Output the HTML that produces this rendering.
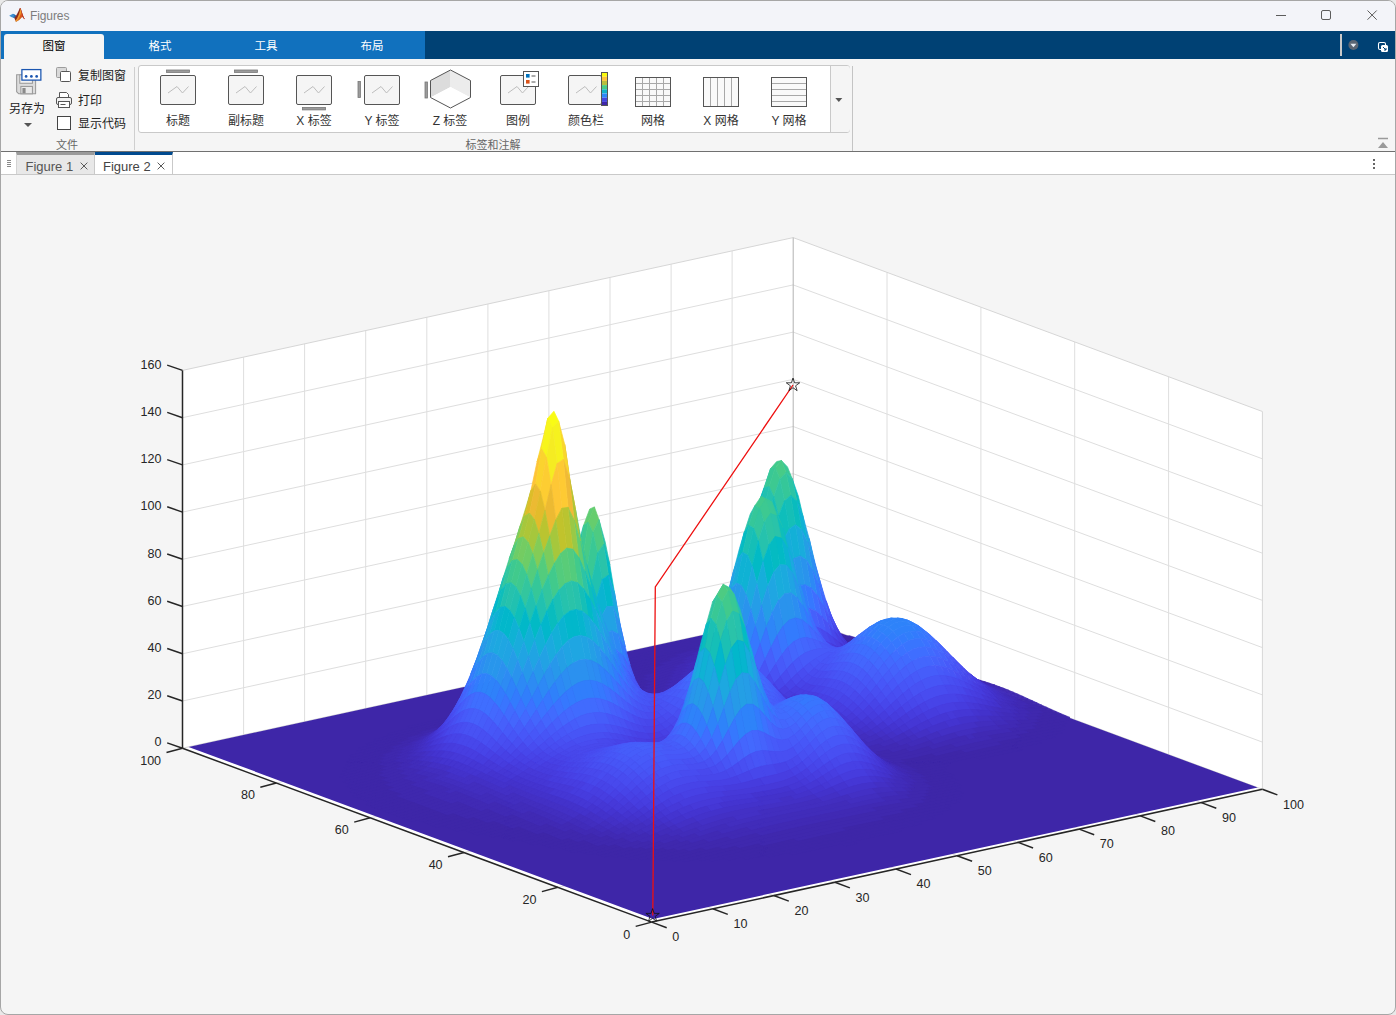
<!DOCTYPE html>
<html lang="zh"><head><meta charset="utf-8"><title>Figures</title>
<style>
html,body{margin:0;padding:0}
body{width:1396px;height:1015px;overflow:hidden;background:#e9e9e9;position:relative;font-family:"Liberation Sans","Noto Sans CJK SC",sans-serif;font-size:12px;color:#222}
.abs{position:absolute}
#win{left:0;top:0;width:1394px;height:1013px;border:1px solid #a6a6a6;border-radius:8px;overflow:hidden;background:#f5f5f5}
#win>*{margin-left:-1px;margin-top:-1px}
#plot .s path{stroke-width:.7;stroke-linejoin:round}
.c0{fill:#3e26a8;stroke:#3e26a8}.c1{fill:#3f28ae;stroke:#3f28ae}.c2{fill:#402ab4;stroke:#402ab4}.c3{fill:#412cba;stroke:#412cba}.c4{fill:#422ebf;stroke:#422ebf}.c5{fill:#4330c5;stroke:#4330c5}.c6{fill:#4332cb;stroke:#4332cb}.c7{fill:#4434d0;stroke:#4434d0}.c8{fill:#4537d5;stroke:#4537d5}.c9{fill:#4639d9;stroke:#4639d9}.c10{fill:#463cde;stroke:#463cde}.c11{fill:#473ee1;stroke:#473ee1}.c12{fill:#4741e5;stroke:#4741e5}.c13{fill:#4744e8;stroke:#4744e8}.c14{fill:#4747eb;stroke:#4747eb}.c15{fill:#4849ed;stroke:#4849ed}.c16{fill:#484cf0;stroke:#484cf0}.c17{fill:#484ff2;stroke:#484ff2}.c18{fill:#4852f4;stroke:#4852f4}.c19{fill:#4755f6;stroke:#4755f6}.c20{fill:#4757f8;stroke:#4757f8}.c21{fill:#475af9;stroke:#475af9}.c22{fill:#465dfa;stroke:#465dfa}.c23{fill:#4660fb;stroke:#4660fb}.c24{fill:#4563fc;stroke:#4563fc}.c25{fill:#4466fd;stroke:#4466fd}.c26{fill:#4369fe;stroke:#4369fe}.c27{fill:#416bfe;stroke:#416bfe}.c28{fill:#3f6eff;stroke:#3f6eff}.c29{fill:#3c72ff;stroke:#3c72ff}.c30{fill:#3975fe;stroke:#3975fe}.c31{fill:#3678fe;stroke:#3678fe}.c32{fill:#337bfd;stroke:#337bfd}.c33{fill:#317efb;stroke:#317efb}.c34{fill:#2f81fa;stroke:#2f81fa}.c35{fill:#2e83f9;stroke:#2e83f9}.c36{fill:#2e86f7;stroke:#2e86f7}.c37{fill:#2d89f5;stroke:#2d89f5}.c38{fill:#2d8bf3;stroke:#2d8bf3}.c39{fill:#2c8ef1;stroke:#2c8ef1}.c40{fill:#2b91ef;stroke:#2b91ef}.c41{fill:#2a93ed;stroke:#2a93ed}.c42{fill:#2896ec;stroke:#2896ec}.c43{fill:#2798ea;stroke:#2798ea}.c44{fill:#269ae8;stroke:#269ae8}.c45{fill:#259de7;stroke:#259de7}.c46{fill:#249fe5;stroke:#249fe5}.c47{fill:#22a2e4;stroke:#22a2e4}.c48{fill:#20a4e3;stroke:#20a4e3}.c49{fill:#1fa6e2;stroke:#1fa6e2}.c50{fill:#1da8e0;stroke:#1da8e0}.c51{fill:#1baade;stroke:#1baade}.c52{fill:#19acdc;stroke:#19acdc}.c53{fill:#16aeda;stroke:#16aeda}.c54{fill:#13b0d7;stroke:#13b0d7}.c55{fill:#0fb2d4;stroke:#0fb2d4}.c56{fill:#0ab4d1;stroke:#0ab4d1}.c57{fill:#06b5ce;stroke:#06b5ce}.c58{fill:#02b7cb;stroke:#02b7cb}.c59{fill:#01b8c8;stroke:#01b8c8}.c60{fill:#02bac5;stroke:#02bac5}.c61{fill:#04bbc2;stroke:#04bbc2}.c62{fill:#09bcbe;stroke:#09bcbe}.c63{fill:#0ebebb;stroke:#0ebebb}.c64{fill:#15bfb7;stroke:#15bfb7}.c65{fill:#1bc0b4;stroke:#1bc0b4}.c66{fill:#21c1b0;stroke:#21c1b0}.c67{fill:#26c2ad;stroke:#26c2ad}.c68{fill:#2ac3a9;stroke:#2ac3a9}.c69{fill:#2dc4a5;stroke:#2dc4a5}.c70{fill:#30c5a2;stroke:#30c5a2}.c71{fill:#33c69e;stroke:#33c69e}.c72{fill:#35c799;stroke:#35c799}.c73{fill:#39c895;stroke:#39c895}.c74{fill:#3dc991;stroke:#3dc991}.c75{fill:#41ca8c;stroke:#41ca8c}.c76{fill:#47cb87;stroke:#47cb87}.c77{fill:#4dcb82;stroke:#4dcb82}.c78{fill:#53cc7d;stroke:#53cc7d}.c79{fill:#59cc78;stroke:#59cc78}.c80{fill:#60cd73;stroke:#60cd73}.c81{fill:#66cd6d;stroke:#66cd6d}.c82{fill:#6dcd67;stroke:#6dcd67}.c83{fill:#74cc62;stroke:#74cc62}.c84{fill:#7ccc5c;stroke:#7ccc5c}.c85{fill:#83cc57;stroke:#83cc57}.c86{fill:#8acb51;stroke:#8acb51}.c87{fill:#91ca4c;stroke:#91ca4c}.c88{fill:#99c946;stroke:#99c946}.c89{fill:#a0c941;stroke:#a0c941}.c90{fill:#a6c73c;stroke:#a6c73c}.c91{fill:#adc638;stroke:#adc638}.c92{fill:#b4c534;stroke:#b4c534}.c93{fill:#bac430;stroke:#bac430}.c94{fill:#c1c32c;stroke:#c1c32c}.c95{fill:#c7c12a;stroke:#c7c12a}.c96{fill:#cdc028;stroke:#cdc028}.c97{fill:#d2bf27;stroke:#d2bf27}.c98{fill:#d8be28;stroke:#d8be28}.c99{fill:#ddbd29;stroke:#ddbd29}.c100{fill:#e2bc2b;stroke:#e2bc2b}.c101{fill:#e7bb2e;stroke:#e7bb2e}.c102{fill:#ecba32;stroke:#ecba32}.c103{fill:#f0ba36;stroke:#f0ba36}.c104{fill:#f5ba3a;stroke:#f5ba3a}.c105{fill:#f9ba3d;stroke:#f9ba3d}.c106{fill:#fbbc3d;stroke:#fbbc3d}.c107{fill:#febe3c;stroke:#febe3c}.c108{fill:#fec13a;stroke:#fec13a}.c109{fill:#fec438;stroke:#fec438}.c110{fill:#fec736;stroke:#fec736}.c111{fill:#feca33;stroke:#feca33}.c112{fill:#fdcd32;stroke:#fdcd32}.c113{fill:#fcd030;stroke:#fcd030}.c114{fill:#fbd32e;stroke:#fbd32e}.c115{fill:#f9d62d;stroke:#f9d62d}.c116{fill:#f8d92b;stroke:#f8d92b}.c117{fill:#f7dd2a;stroke:#f7dd2a}.c118{fill:#f6e028;stroke:#f6e028}.c119{fill:#f5e327;stroke:#f5e327}.c120{fill:#f5e626;stroke:#f5e626}.c121{fill:#f5e924;stroke:#f5e924}.c122{fill:#f5ec22;stroke:#f5ec22}.c123{fill:#f6ef20;stroke:#f6ef20}.c124{fill:#f6f21e;stroke:#f6f21e}.c125{fill:#f7f51b;stroke:#f7f51b}.c126{fill:#f8f818;stroke:#f8f818}.c127{fill:#f9fb15;stroke:#f9fb15}
#plot line.g{stroke:#dedede;stroke-width:1}
#plot line.b{stroke:#d6d6d6;stroke-width:1}
#plot line.bd{stroke:#b2b2b2;stroke-width:1}
#plot line.a{stroke:#262626;stroke-width:1.5}
#plot .t text{font-family:"Liberation Sans",sans-serif;font-size:13.3px;fill:#262626}
#titlebar{left:0;top:0;width:1396px;height:31px;background:#f3f4f9}
#titlebar .ttl{left:30px;top:9px;font-size:12px;color:#7d7d7d;line-height:15px;letter-spacing:-0.1px}
#tabstrip{left:0;top:31px;width:1396px;height:28px;background:#004174}
#tabstrip .l{left:0;top:0;width:425px;height:28px;background:#1171be}
#tabstrip .act{left:4px;top:3px;width:100px;height:25px;background:#f5f5f5;border-radius:3px 3px 0 0}
.tab{top:3px;width:100px;height:25px;line-height:25px;text-align:center;font-size:11.5px;color:#fff}
.tab.on{color:#000}
#ribbon{left:0;top:59px;width:1396px;height:92px;background:#f5f5f5}
#ribline{left:0;top:151px;width:1396px;height:1px;background:#707070}
#doctabs{left:0;top:152px;width:1396px;height:22px;background:#fff;border-bottom:1px solid #c9c9c9}
.vsep{width:1px;background:#cfcfcf}
.lbl{font-size:12px;line-height:14px;color:#222;white-space:nowrap}
.sec{font-size:11px;line-height:13px;color:#666;white-space:nowrap;text-align:center}
#gal{left:138px;top:6px;width:710px;height:66px;border:1px solid #c9c9c9;border-radius:3px;background:#fff;box-sizing:content-box}
#gal .dd{left:691px;top:0;width:19px;height:66px;background:#f5f5f5;border-left:1px solid #c9c9c9;border-radius:0 3px 3px 0}
.gi{top:48px;width:68px;text-align:center;font-size:12px;line-height:14px;color:#333;white-space:nowrap}
.dt{top:0;height:22px;font-size:13px;line-height:25px;color:#555;white-space:nowrap;box-sizing:border-box}
</style></head><body>
<div class="abs" id="win">
<svg id="plot" width="1396" height="1015" viewBox="0 0 1396 1015" style="position:absolute;left:0;top:0">
<g><polygon points="182.5,748.2 793.2,615.4 793.2,237.6 182.5,370.4" fill="#fff"/>
<polygon points="793.2,615.4 1262.4,789.3 1262.4,411.5 793.2,237.6" fill="#fff"/>
<polygon points="651.7,922.1 1262.4,789.3 793.2,615.4 182.5,748.2" fill="#fff"/>
<line x1="243.6" y1="734.9" x2="243.6" y2="357.2" class="g"/>
<line x1="712.8" y1="908.8" x2="243.6" y2="734.9" class="g"/>
<line x1="304.6" y1="721.6" x2="304.6" y2="343.9" class="g"/>
<line x1="773.8" y1="895.5" x2="304.6" y2="721.6" class="g"/>
<line x1="365.7" y1="708.4" x2="365.7" y2="330.6" class="g"/>
<line x1="834.9" y1="882.3" x2="365.7" y2="708.4" class="g"/>
<line x1="426.8" y1="695.1" x2="426.8" y2="317.3" class="g"/>
<line x1="896.0" y1="869.0" x2="426.8" y2="695.1" class="g"/>
<line x1="487.9" y1="681.8" x2="487.9" y2="304.0" class="g"/>
<line x1="957.1" y1="855.7" x2="487.9" y2="681.8" class="g"/>
<line x1="548.9" y1="668.5" x2="548.9" y2="290.8" class="g"/>
<line x1="1018.1" y1="842.4" x2="548.9" y2="668.5" class="g"/>
<line x1="610.0" y1="655.2" x2="610.0" y2="277.5" class="g"/>
<line x1="1079.2" y1="829.1" x2="610.0" y2="655.2" class="g"/>
<line x1="671.1" y1="642.0" x2="671.1" y2="264.2" class="g"/>
<line x1="1140.3" y1="815.9" x2="671.1" y2="642.0" class="g"/>
<line x1="732.1" y1="628.7" x2="732.1" y2="250.9" class="g"/>
<line x1="1201.3" y1="802.6" x2="732.1" y2="628.7" class="g"/>
<line x1="1168.6" y1="754.5" x2="1168.6" y2="376.8" class="g"/>
<line x1="557.9" y1="887.3" x2="1168.6" y2="754.5" class="g"/>
<line x1="1074.7" y1="719.7" x2="1074.7" y2="342.0" class="g"/>
<line x1="464.0" y1="852.5" x2="1074.7" y2="719.7" class="g"/>
<line x1="980.9" y1="685.0" x2="980.9" y2="307.2" class="g"/>
<line x1="370.2" y1="817.8" x2="980.9" y2="685.0" class="g"/>
<line x1="887.0" y1="650.2" x2="887.0" y2="272.4" class="g"/>
<line x1="276.3" y1="783.0" x2="887.0" y2="650.2" class="g"/>
<line x1="182.5" y1="701.0" x2="793.2" y2="568.2" class="g"/>
<line x1="793.2" y1="568.2" x2="1262.4" y2="742.1" class="g"/>
<line x1="182.5" y1="653.8" x2="793.2" y2="521.0" class="g"/>
<line x1="793.2" y1="521.0" x2="1262.4" y2="694.9" class="g"/>
<line x1="182.5" y1="606.5" x2="793.2" y2="473.7" class="g"/>
<line x1="793.2" y1="473.7" x2="1262.4" y2="647.6" class="g"/>
<line x1="182.5" y1="559.3" x2="793.2" y2="426.5" class="g"/>
<line x1="793.2" y1="426.5" x2="1262.4" y2="600.4" class="g"/>
<line x1="182.5" y1="512.1" x2="793.2" y2="379.3" class="g"/>
<line x1="793.2" y1="379.3" x2="1262.4" y2="553.2" class="g"/>
<line x1="182.5" y1="464.9" x2="793.2" y2="332.1" class="g"/>
<line x1="793.2" y1="332.1" x2="1262.4" y2="506.0" class="g"/>
<line x1="182.5" y1="417.7" x2="793.2" y2="284.9" class="g"/>
<line x1="793.2" y1="284.9" x2="1262.4" y2="458.8" class="g"/>
<line x1="182.5" y1="370.4" x2="793.2" y2="237.6" class="b"/>
<line x1="793.2" y1="237.6" x2="1262.4" y2="411.5" class="b"/>
<line x1="1262.4" y1="411.5" x2="1262.4" y2="789.3" class="b"/>
<line x1="793.2" y1="615.4" x2="793.2" y2="237.6" class="bd"/>
<line x1="182.5" y1="748.2" x2="793.2" y2="615.4" class="b"/>
<line x1="793.2" y1="615.4" x2="1262.4" y2="789.3" class="b"/></g>
<polygon points="653.1,919.0 1257.7,787.6 793.2,615.4 188.6,746.9" fill="#3e26a8"/>
<g class="s"><path class="c0" d="M704.9 639.3l6.1-1.3-4.7-1.5-6.1 1.3zM698.8 640.6l6.1-1.3-4.7-1.5-6.1 1.3zM692.7 641.9l6.1-1.3-4.7-1.5-6.1 1.3zM686.6 643.2l6.1-1.3-4.7-1.5-6.1 1.4zM680.4 644.6l6.2-1.4-4.7-1.4-6.1 1.3zM674.3 645.9l6.1-1.3-4.6-1.5-6.2 1.3zM668.2 647.3l6.1-1.4-4.7-1.5-6.1 1.4zM703.5 641.9l6.1-1.3-4.7-1.3-6.1 1.3zM697.4 643.3l6.1-1.4-4.7-1.3-6.1 1.3zM691.2 644.6l6.2-1.3-4.7-1.4-6.1 1.3zM685.1 646l6.1-1.4-4.6-1.4-6.2 1.4zM679 647.3l6.1-1.3-4.7-1.4-6.1 1.3zM672.9 648.7l6.1-1.4-4.7-1.4-6.1 1.4zM666.8 650.1l6.1-1.4-4.7-1.4-6.1 1.3zM660.7 651.5l6.1-1.4-4.7-1.5-6.1 1.4zM654.6 652.9l6.1-1.4-4.7-1.5-6.1 1.4zM648.5 654.3l6.1-1.4-4.7-1.5-6.1 1.4zM642.4 655.7l6.1-1.4-4.7-1.5-6.1 1.4zM702 644.3l6.1-1.3-4.6-1.1-6.1 1.4zM695.9 645.8l6.1-1.5-4.6-1-6.2 1.3zM689.8 647.2l6.1-1.4-4.7-1.2-6.1 1.4zM683.7 648.6l6.1-1.4-4.7-1.2-6.1 1.3zM677.6 650l6.1-1.4-4.7-1.3-6.1 1.4zM671.5 651.5l6.1-1.5-4.7-1.3-6.1 1.4zM665.4 652.9l6.1-1.4-4.7-1.4-6.1 1.4zM659.3 654.3l6.1-1.4-4.7-1.4-6.1 1.4zM653.2 655.7l6.1-1.4-4.7-1.4-6.1 1.4zM647.1 657.2l6.1-1.5-4.7-1.4-6.1 1.4zM641 658.6l6.1-1.4-4.7-1.5-6.1 1.4zM634.9 660l6.1-1.4-4.7-1.5-6.1 1.4zM628.8 661.5l6.1-1.5-4.7-1.5-6.1 1.4zM700.6 646.5l6.1-1.5-4.7-.7-6.1 1.5zM694.5 648.1l6.1-1.6-4.7-.7-6.1 1.4zM688.4 649.6l6.1-1.5-4.7-.9-6.1 1.4zM682.3 651.2l6.1-1.6-4.7-1-6.1 1.4zM676.2 652.7l6.1-1.5-4.7-1.2-6.1 1.5zM670.1 654.2l6.1-1.5-4.7-1.2-6.1 1.4zM664 655.6l6.1-1.4-4.7-1.3-6.1 1.4zM657.9 657.1l6.1-1.5-4.7-1.3-6.1 1.4zM651.8 658.6l6.1-1.5-4.7-1.4-6.1 1.5zM645.7 660l6.1-1.4-4.7-1.4-6.1 1.4zM639.6 661.5l6.1-1.5-4.7-1.4-6.1 1.4zM633.4 663l6.2-1.5-4.7-1.5-6.1 1.5zM627.3 664.4l6.1-1.4-4.6-1.5-6.1 1.4z"/>
<path class="c1" d="M699.2 648.5l6.1-1.9-4.7-.1-6.1 1.6z"/>
<path class="c0" d="M693.1 650.3l6.1-1.8-4.7-.4-6.1 1.5zM687 652l6.1-1.7-4.7-.7-6.1 1.6zM680.9 653.7l6.1-1.7-4.7-.8-6.1 1.5zM674.8 655.3l6.1-1.6-4.7-1-6.1 1.5zM668.7 656.8l6.1-1.5-4.7-1.1-6.1 1.4zM662.6 658.4l6.1-1.6-4.7-1.2-6.1 1.5zM656.5 659.9l6.1-1.5-4.7-1.3-6.1 1.5zM650.4 661.4l6.1-1.5-4.7-1.3-6.1 1.4zM644.2 662.9l6.2-1.5-4.7-1.4-6.1 1.5zM638.1 664.4l6.1-1.5-4.6-1.4-6.2 1.5zM632 665.9l6.1-1.5-4.7-1.4-6.1 1.4zM625.9 667.4l6.1-1.5-4.7-1.5-6.1 1.5z"/>
<path class="c1" d="M697.8 650.3l6.1-2.3-4.7 .5-6.1 1.8zM691.7 652.4l6.1-2.1-4.7 0-6.1 1.7zM685.6 654.4l6.1-2-4.7-.4-6.1 1.7zM679.5 656.2l6.1-1.8-4.7-.7-6.1 1.6z"/>
<path class="c0" d="M673.4 657.9l6.1-1.7-4.7-.9-6.1 1.5zM667.3 659.5l6.1-1.6-4.7-1.1-6.1 1.6zM661.2 661.1l6.1-1.6-4.7-1.1-6.1 1.5zM655 662.7l6.2-1.6-4.7-1.2-6.1 1.5zM648.9 664.3l6.1-1.6-4.6-1.3-6.2 1.5zM642.8 665.8l6.1-1.5-4.7-1.4-6.1 1.5zM636.7 667.4l6.1-1.6-4.7-1.4-6.1 1.5zM630.6 668.9l6.1-1.5-4.7-1.5-6.1 1.5z"/>
<path class="c1" d="M696.4 652.2l6.1-2.8-4.7 .9-6.1 2.1zM690.3 654.7l6.1-2.5-4.7 .2-6.1 2zM684.2 656.8l6.1-2.1-4.7-.3-6.1 1.8zM678.1 658.8l6.1-2-4.7-.6-6.1 1.7zM672 660.5l6.1-1.7-4.7-.9-6.1 1.6z"/>
<path class="c0" d="M665.8 662.2l6.2-1.7-4.7-1-6.1 1.6zM659.7 663.9l6.1-1.7-4.6-1.1-6.2 1.6zM653.6 665.5l6.1-1.6-4.7-1.2-6.1 1.6zM647.5 667.2l6.1-1.7-4.7-1.2-6.1 1.5zM641.4 668.8l6.1-1.6-4.7-1.4-6.1 1.6zM635.3 670.3l6.1-1.5-4.7-1.4-6.1 1.5zM629.2 671.9l6.1-1.6-4.7-1.4-6.1 1.5z"/>
<path class="c2" d="M701.1 651.2l6.1-4-4.7 2.2-6.1 2.8zM695 654.4l6.1-3.2-4.7 1-6.1 2.5z"/>
<path class="c1" d="M688.9 657.1l6.1-2.7-4.7 .3-6.1 2.1zM682.8 659.4l6.1-2.3-4.7-.3-6.1 2zM676.6 661.4l6.2-2-4.7-.6-6.1 1.7zM670.5 663.2l6.1-1.8-4.6-.9-6.2 1.7zM664.4 665l6.1-1.8-4.7-1-6.1 1.7z"/>
<path class="c0" d="M658.3 666.7l6.1-1.7-4.7-1.1-6.1 1.6zM652.2 668.4l6.1-1.7-4.7-1.2-6.1 1.7zM646.1 670.1l6.1-1.7-4.7-1.2-6.1 1.6zM640 671.7l6.1-1.6-4.7-1.3-6.1 1.5zM633.9 673.3l6.1-1.6-4.7-1.4-6.1 1.6zM627.8 674.9l6.1-1.6-4.7-1.4-6.1 1.5z"/>
<path class="c3" d="M699.7 653.5l6.1-4.5-4.7 2.2-6.1 3.2z"/>
<path class="c2" d="M693.6 657l6.1-3.5-4.7 .9-6.1 2.7zM687.4 659.7l6.2-2.7-4.7 .1-6.1 2.3z"/>
<path class="c1" d="M681.3 662l6.1-2.3-4.6-.3-6.2 2zM675.2 664.1l6.1-2.1-4.7-.6-6.1 1.8zM669.1 666l6.1-1.9-4.7-.9-6.1 1.8zM663 667.8l6.1-1.8-4.7-1-6.1 1.7zM656.9 669.6l6.1-1.8-4.7-1.1-6.1 1.7z"/>
<path class="c0" d="M650.8 671.3l6.1-1.7-4.7-1.2-6.1 1.7zM644.7 673.1l6.1-1.8-4.7-1.2-6.1 1.6zM638.6 674.7l6.1-1.6-4.7-1.4-6.1 1.6zM632.5 676.4l6.1-1.7-4.7-1.4-6.1 1.6z"/>
<path class="c3" d="M698.2 656.3l6.2-4.5-4.7 1.7-6.1 3.5z"/>
<path class="c2" d="M692.1 659.8l6.1-3.5-4.6 .7-6.2 2.7zM686 662.5l6.1-2.7-4.7-.1-6.1 2.3z"/>
<path class="c1" d="M679.9 664.8l6.1-2.3-4.7-.5-6.1 2.1zM673.8 666.9l6.1-2.1-4.7-.7-6.1 1.9zM667.7 668.8l6.1-1.9-4.7-.9-6.1 1.8zM661.6 670.7l6.1-1.9-4.7-1-6.1 1.8zM655.5 672.5l6.1-1.8-4.7-1.1-6.1 1.7z"/>
<path class="c0" d="M649.4 674.3l6.1-1.8-4.7-1.2-6.1 1.8zM643.3 676.1l6.1-1.8-4.7-1.2-6.1 1.6zM637.2 677.8l6.1-1.7-4.7-1.4-6.1 1.7zM631.1 679.5l6.1-1.7-4.7-1.4-6.1 1.6zM447.9 719.8l6.1-1.3-4.7-1.3-6.1 1.3zM441.8 721.2l6.1-1.4-4.7-1.3-6.1 1.3zM435.6 722.5l6.2-1.3-4.7-1.4-6.1 1.4zM429.5 723.9l6.1-1.4-4.6-1.3-6.2 1.3zM423.4 725.3l6.1-1.4-4.7-1.4-6.1 1.4zM417.3 726.7l6.1-1.4-4.7-1.4-6.1 1.3zM411.2 728l6.1-1.3-4.7-1.5-6.1 1.4zM837.3 637.8l6.1-1-4.7-1.6-6.1 1.1z"/>
<path class="c3" d="M696.8 659.5l6.1-4.2-4.7 1-6.1 3.5z"/>
<path class="c2" d="M690.7 662.7l6.1-3.2-4.7 .3-6.1 2.7zM684.6 665.3l6.1-2.6-4.7-.2-6.1 2.3zM678.5 667.6l6.1-2.3-4.7-.5-6.1 2.1z"/>
<path class="c1" d="M672.4 669.7l6.1-2.1-4.7-.7-6.1 1.9zM666.3 671.7l6.1-2-4.7-.9-6.1 1.9zM660.2 673.6l6.1-1.9-4.7-1-6.1 1.8zM654.1 675.5l6.1-1.9-4.7-1.1-6.1 1.8zM648 677.4l6.1-1.9-4.7-1.2-6.1 1.8z"/>
<path class="c0" d="M641.9 679.2l6.1-1.8-4.7-1.3-6.1 1.7zM635.8 680.9l6.1-1.7-4.7-1.4-6.1 1.7zM446.4 722.3l6.1-1.4-4.6-1.1-6.1 1.4zM440.3 723.7l6.1-1.4-4.6-1.1-6.2 1.3zM434.2 725.1l6.1-1.4-4.7-1.2-6.1 1.4zM428.1 726.5l6.1-1.4-4.7-1.2-6.1 1.4zM422 727.9l6.1-1.4-4.7-1.2-6.1 1.4zM415.9 729.3l6.1-1.4-4.7-1.2-6.1 1.3zM409.8 730.8l6.1-1.5-4.7-1.3-6.1 1.4zM403.7 732.2l6.1-1.4-4.7-1.4-6.1 1.4zM397.6 733.7l6.1-1.5-4.7-1.4-6.1 1.4zM391.5 735.1l6.1-1.4-4.7-1.5-6.1 1.4zM848.1 638.4l6.1-1.1-4.7-1.6-6.1 1.1zM842 639.3l6.1-.9-4.7-1.6-6.1 1z"/>
<path class="c3" d="M695.4 662.8l6.1-3.8-4.7 .5-6.1 3.2zM689.3 665.7l6.1-2.9-4.7-.1-6.1 2.6z"/>
<path class="c2" d="M683.2 668.2l6.1-2.5-4.7-.4-6.1 2.3zM677.1 670.5l6.1-2.3-4.7-.6-6.1 2.1z"/>
<path class="c1" d="M671 672.6l6.1-2.1-4.7-.8-6.1 2zM664.9 674.7l6.1-2.1-4.7-.9-6.1 1.9zM658.8 676.7l6.1-2-4.7-1.1-6.1 1.9zM652.7 678.6l6.1-1.9-4.7-1.2-6.1 1.9zM646.6 680.5l6.1-1.9-4.7-1.2-6.1 1.8z"/>
<path class="c0" d="M640.5 682.3l6.1-1.8-4.7-1.3-6.1 1.7zM634.3 684.1l6.2-1.8-4.7-1.4-6.1 1.7zM445 724.4l6.1-1.4-4.7-.7-6.1 1.4zM438.9 725.9l6.1-1.5-4.7-.7-6.1 1.4zM432.8 727.4l6.1-1.5-4.7-.8-6.1 1.4zM426.7 728.9l6.1-1.5-4.7-.9-6.1 1.4zM420.6 730.4l6.1-1.5-4.7-1-6.1 1.4zM414.5 731.9l6.1-1.5-4.7-1.1-6.1 1.5zM408.4 733.5l6.1-1.6-4.7-1.1-6.1 1.4zM402.3 735l6.1-1.5-4.7-1.3-6.1 1.5zM396.2 736.5l6.1-1.5-4.7-1.3-6.1 1.4zM390.1 738l6.1-1.5-4.7-1.4-6.1 1.4zM384 739.4l6.1-1.4-4.7-1.5-6.1 1.4zM377.9 740.9l6.1-1.5-4.7-1.5-6.1 1.5zM852.8 640l6.1-1-4.7-1.7-6.1 1.1zM846.7 640.8l6.1-.8-4.7-1.6-6.1 .9zM840.6 641.3l6.1-.5-4.7-1.5-6.1 .6z"/>
<path class="c3" d="M694 665.9l6.1-3.3-4.7 .2-6.1 2.9zM687.9 668.6l6.1-2.7-4.7-.2-6.1 2.5z"/>
<path class="c2" d="M681.8 671l6.1-2.4-4.7-.4-6.1 2.3zM675.7 673.4l6.1-2.4-4.7-.5-6.1 2.1z"/>
<path class="c1" d="M669.6 675.6l6.1-2.2-4.7-.8-6.1 2.1zM663.5 677.7l6.1-2.1-4.7-.9-6.1 2zM657.4 679.8l6.1-2.1-4.7-1-6.1 1.9zM651.3 681.8l6.1-2-4.7-1.2-6.1 1.9z"/>
<path class="c0" d="M645.1 683.7l6.2-1.9-4.7-1.3-6.1 1.8zM639 685.5l6.1-1.8-4.6-1.4-6.2 1.8zM632.9 687.3l6.1-1.8-4.7-1.4-6.1 1.7zM443.6 726.2l6.1-1.6-4.7-.2-6.1 1.5zM437.5 727.8l6.1-1.6-4.7-.3-6.1 1.5zM431.4 729.5l6.1-1.7-4.7-.4-6.1 1.5zM425.3 731.1l6.1-1.6-4.7-.6-6.1 1.5zM419.2 732.8l6.1-1.7-4.7-.7-6.1 1.5zM413.1 734.4l6.1-1.6-4.7-.9-6.1 1.6zM407 736.1l6.1-1.7-4.7-.9-6.1 1.5zM400.9 737.7l6.1-1.6-4.7-1.1-6.1 1.5zM394.8 739.2l6.1-1.5-4.7-1.2-6.1 1.5zM388.6 740.8l6.2-1.6-4.7-1.2-6.1 1.4zM382.5 742.3l6.1-1.5-4.6-1.4-6.1 1.5zM376.4 743.8l6.1-1.5-4.6-1.4-6.2 1.4zM370.3 745.3l6.1-1.5-4.7-1.5-6.1 1.4zM851.4 642.3l6.1-.7-4.7-1.6-6.1 .8zM845.3 642.6l6.1-.3-4.7-1.5-6.1 .5z"/>
<path class="c3" d="M692.6 668.6l6.1-3-4.7 .3-6.1 2.7zM686.5 671.3l6.1-2.7-4.7 0-6.1 2.4z"/>
<path class="c2" d="M680.4 673.9l6.1-2.6-4.7-.3-6.1 2.4zM674.3 676.3l6.1-2.4-4.7-.5-6.1 2.2z"/>
<path class="c1" d="M668.2 678.7l6.1-2.4-4.7-.7-6.1 2.1zM662 680.9l6.2-2.2-4.7-1-6.1 2.1zM655.9 683l6.1-2.1-4.6-1.1-6.1 2zM649.8 685.1l6.1-2.1-4.6-1.2-6.2 1.9z"/>
<path class="c0" d="M643.7 687l6.1-1.9-4.7-1.4-6.1 1.8zM637.6 688.8l6.1-1.8-4.7-1.5-6.1 1.8z"/>
<path class="c1" d="M442.2 727.6l6.1-1.8-4.7 .4-6.1 1.6zM436.1 729.4l6.1-1.8-4.7 .2-6.1 1.7zM430 731.3l6.1-1.9-4.7 .1-6.1 1.6zM423.9 733.2l6.1-1.9-4.7-.2-6.1 1.7z"/>
<path class="c0" d="M417.8 735l6.1-1.8-4.7-.4-6.1 1.6zM411.7 736.8l6.1-1.8-4.7-.6-6.1 1.7zM405.6 738.6l6.1-1.8-4.7-.7-6.1 1.6zM399.4 740.3l6.2-1.7-4.7-.9-6.1 1.5zM393.3 742l6.1-1.7-4.6-1.1-6.2 1.6zM387.2 743.6l6.1-1.6-4.7-1.2-6.1 1.5zM381.1 745.2l6.1-1.6-4.7-1.3-6.1 1.5zM375 746.7l6.1-1.5-4.7-1.4-6.1 1.5zM368.9 748.2l6.1-1.5-4.7-1.4-6.1 1.4zM362.8 749.7l6.1-1.5-4.7-1.5-6.1 1.4zM850 644l6.1-.2-4.7-1.5-6.1 .3z"/>
<path class="c67" d="M764.5 487.6l6.1-19-4.7 13.6-6.1 17.7z"/>
<path class="c61" d="M758.3 515l6.2-27.4-4.7 12.3-6.1 25.5z"/>
<path class="c4" d="M697.3 668.1l6.1-3.3-4.7 .8-6.1 3z"/>
<path class="c3" d="M691.2 671.1l6.1-3-4.7 .5-6.1 2.7zM685.1 674l6.1-2.9-4.7 .2-6.1 2.6z"/>
<path class="c2" d="M679 676.7l6.1-2.7-4.7-.1-6.1 2.4zM672.8 679.4l6.2-2.7-4.7-.4-6.1 2.4z"/>
<path class="c1" d="M666.7 681.9l6.1-2.5-4.6-.7-6.2 2.2zM660.6 684.2l6.1-2.3-4.7-1-6.1 2.1zM654.5 686.3l6.1-2.1-4.7-1.2-6.1 2.1zM648.4 688.4l6.1-2.1-4.7-1.2-6.1 1.9z"/>
<path class="c0" d="M642.3 690.2l6.1-1.8-4.7-1.4-6.1 1.8z"/>
<path class="c1" d="M434.7 730.8l6.1-2.2-4.7 .8-6.1 1.9zM428.6 732.9l6.1-2.1-4.7 .5-6.1 1.9zM422.5 735.1l6.1-2.2-4.7 .3-6.1 1.8zM416.4 737.2l6.1-2.1-4.7-.1-6.1 1.8zM410.2 739.2l6.2-2-4.7-.4-6.1 1.8z"/>
<path class="c0" d="M404.1 741.2l6.1-2-4.6-.6-6.2 1.7zM398 743l6.1-1.8-4.7-.9-6.1 1.7zM391.9 744.8l6.1-1.8-4.7-1-6.1 1.6zM385.8 746.5l6.1-1.7-4.7-1.2-6.1 1.6zM379.7 748.1l6.1-1.6-4.7-1.3-6.1 1.5zM373.6 749.7l6.1-1.6-4.7-1.4-6.1 1.5zM367.5 751.2l6.1-1.5-4.7-1.5-6.1 1.5zM361.4 752.7l6.1-1.5-4.7-1.5-6.1 1.4z"/>
<path class="c75" d="M775.3 467.4l6.1-6.9-4.7 1-6.1 7.1z"/>
<path class="c73" d="M769.1 486.4l6.2-19-4.7 1.2-6.1 19z"/>
<path class="c66" d="M763 513.8l6.1-27.4-4.6 1.2-6.2 27.4z"/>
<path class="c4" d="M695.9 669.9l6.1-3.5-4.7 1.7-6.1 3z"/>
<path class="c3" d="M689.8 673.3l6.1-3.4-4.7 1.2-6.1 2.9zM683.6 676.6l6.2-3.3-4.7 .7-6.1 2.7z"/>
<path class="c2" d="M677.5 679.7l6.1-3.1-4.6 .1-6.2 2.7zM671.4 682.6l6.1-2.9-4.7-.3-6.1 2.5z"/>
<path class="c1" d="M665.3 685.2l6.1-2.6-4.7-.7-6.1 2.3zM659.2 687.5l6.1-2.3-4.7-1-6.1 2.1zM653.1 689.7l6.1-2.2-4.7-1.2-6.1 2.1zM647 691.7l6.1-2-4.7-1.3-6.1 1.8z"/>
<path class="c0" d="M640.9 693.5l6.1-1.8-4.7-1.5-6.1 1.8z"/>
<path class="c2" d="M433.3 731.9l6.1-2.6-4.7 1.5-6.1 2.1zM427.2 734.5l6.1-2.6-4.7 1-6.1 2.2z"/>
<path class="c1" d="M421 737l6.2-2.5-4.7 .6-6.1 2.1zM414.9 739.4l6.1-2.4-4.6 .2-6.2 2zM408.8 741.6l6.1-2.2-4.7-.2-6.1 2zM402.7 743.7l6.1-2.1-4.7-.4-6.1 1.8z"/>
<path class="c0" d="M396.6 745.7l6.1-2-4.7-.7-6.1 1.8zM390.5 747.6l6.1-1.9-4.7-.9-6.1 1.7zM384.4 749.3l6.1-1.7-4.7-1.1-6.1 1.6zM378.3 751l6.1-1.7-4.7-1.2-6.1 1.6zM372.2 752.6l6.1-1.6-4.7-1.3-6.1 1.5zM366.1 754.2l6.1-1.6-4.7-1.4-6.1 1.5zM360 755.7l6.1-1.5-4.7-1.5-6.1 1.4zM353.9 757.2l6.1-1.5-4.7-1.6-6.1 1.5z"/>
<path class="c73" d="M786.1 472.5l6.1 6.2-4.7-11.8-6.1-6.4z"/>
<path class="c76" d="M779.9 478.9l6.2-6.4-4.7-12-6.1 6.9z"/>
<path class="c74" d="M773.8 496.6l6.1-17.7-4.6-11.5-6.2 19z"/>
<path class="c67" d="M767.7 522l6.1-25.4-4.7-10.2-6.1 27.4z"/>
<path class="c4" d="M688.3 675.6l6.1-4.1-4.6 1.8-6.2 3.3z"/>
<path class="c3" d="M682.2 679.4l6.1-3.8-4.7 1-6.1 3.1z"/>
<path class="c2" d="M676.1 682.9l6.1-3.5-4.7 .3-6.1 2.9zM670 685.9l6.1-3-4.7-.3-6.1 2.6z"/>
<path class="c1" d="M663.9 688.6l6.1-2.7-4.7-.7-6.1 2.3zM657.8 691l6.1-2.4-4.7-1.1-6.1 2.2zM651.7 693.1l6.1-2.1-4.7-1.3-6.1 2z"/>
<path class="c0" d="M645.6 695l6.1-1.9-4.7-1.4-6.1 1.8z"/>
<path class="c3" d="M438 729.8l6.1-3.3-4.7 2.8-6.1 2.6zM431.8 733l6.2-3.2-4.7 2.1-6.1 2.6z"/>
<path class="c2" d="M425.7 736.1l6.1-3.1-4.6 1.5-6.2 2.5zM419.6 738.9l6.1-2.8-4.7 .9-6.1 2.4z"/>
<path class="c1" d="M413.5 741.6l6.1-2.7-4.7 .5-6.1 2.2zM407.4 744.1l6.1-2.5-4.7 0-6.1 2.1zM401.3 746.4l6.1-2.3-4.7-.4-6.1 2zM395.2 748.5l6.1-2.1-4.7-.7-6.1 1.9z"/>
<path class="c0" d="M389.1 750.4l6.1-1.9-4.7-.9-6.1 1.7zM383 752.2l6.1-1.8-4.7-1.1-6.1 1.7zM376.9 753.9l6.1-1.7-4.7-1.2-6.1 1.6zM370.8 755.6l6.1-1.7-4.7-1.3-6.1 1.6zM364.7 757.2l6.1-1.6-4.7-1.4-6.1 1.5zM358.6 758.7l6.1-1.5-4.7-1.5-6.1 1.5zM352.5 760.2l6.1-1.5-4.7-1.5-6.1 1.4z"/>
<path class="c62" d="M796.8 500.9l6.2 15.4-4.7-20.2-6.1-17.4z"/>
<path class="c69" d="M790.7 495.4l6.1 5.5-4.6-22.2-6.1-6.2z"/>
<path class="c72" d="M784.6 500.8l6.1-5.4-4.6-22.9-6.2 6.4z"/>
<path class="c70" d="M778.5 515.9l6.1-15.1-4.7-21.9-6.1 17.7z"/>
<path class="c64" d="M772.4 537.7l6.1-21.8-4.7-19.3-6.1 25.4z"/>
<path class="c3" d="M680.8 682.6l6.1-4.4-4.7 1.2-6.1 3.5z"/>
<path class="c2" d="M674.7 686.3l6.1-3.7-4.7 .3-6.1 3zM668.6 689.4l6.1-3.1-4.7-.4-6.1 2.7z"/>
<path class="c1" d="M662.5 692.1l6.1-2.7-4.7-.8-6.1 2.4zM656.4 694.4l6.1-2.3-4.7-1.1-6.1 2.1zM650.3 696.5l6.1-2.1-4.7-1.3-6.1 1.9z"/>
<path class="c3" d="M430.4 734.3l6.1-3.9-4.7 2.6-6.1 3.1zM424.3 737.8l6.1-3.5-4.7 1.8-6.1 2.8z"/>
<path class="c2" d="M418.2 741.1l6.1-3.3-4.7 1.1-6.1 2.7zM412.1 744l6.1-2.9-4.7 .5-6.1 2.5z"/>
<path class="c1" d="M406 746.7l6.1-2.7-4.7 .1-6.1 2.3zM399.9 749.1l6.1-2.4-4.7-.3-6.1 2.1zM393.8 751.3l6.1-2.2-4.7-.6-6.1 1.9z"/>
<path class="c0" d="M387.7 753.3l6.1-2-4.7-.9-6.1 1.8zM381.6 755.2l6.1-1.9-4.7-1.1-6.1 1.7zM375.5 756.9l6.1-1.7-4.7-1.3-6.1 1.7zM369.4 758.6l6.1-1.7-4.7-1.3-6.1 1.6zM363.3 760.2l6.1-1.6-4.7-1.4-6.1 1.5zM357.1 761.7l6.2-1.5-4.7-1.5-6.1 1.5zM351 763.2l6.1-1.5-4.6-1.5-6.2 1.4z"/>
<path class="c37" d="M813.8 560.3l6.1 20.6-4.7-17.4-6.1-25.1z"/>
<path class="c47" d="M807.6 542.2l6.2 18.1-4.7-21.9-6.1-22.1z"/>
<path class="c55" d="M801.5 529.5l6.1 12.7-4.6-25.9-6.2-15.4z"/>
<path class="c62" d="M795.4 524.8l6.1 4.7-4.7-28.6-6.1-5.5z"/>
<path class="c64" d="M789.3 528.9l6.1-4.1-4.7-29.4-6.1 5.4z"/>
<path class="c63" d="M783.2 540.7l6.1-11.8-4.7-28.1-6.1 15.1z"/>
<path class="c58" d="M777.1 557.7l6.1-17-4.7-24.8-6.1 21.8z"/>
<path class="c2" d="M673.3 690l6.1-3.8-4.7 .1-6.1 3.1zM667.2 693.1l6.1-3.1-4.7-.6-6.1 2.7z"/>
<path class="c1" d="M661.1 695.7l6.1-2.6-4.7-1-6.1 2.3z"/>
<path class="c4" d="M429 735.8l6.1-4.4-4.7 2.9-6.1 3.5z"/>
<path class="c3" d="M422.9 739.9l6.1-4.1-4.7 2-6.1 3.3zM416.8 743.4l6.1-3.5-4.7 1.2-6.1 2.9z"/>
<path class="c2" d="M410.7 746.6l6.1-3.2-4.7 .6-6.1 2.7zM404.6 749.5l6.1-2.9-4.7 .1-6.1 2.4z"/>
<path class="c1" d="M398.5 752l6.1-2.5-4.7-.4-6.1 2.2zM392.4 754.2l6.1-2.2-4.7-.7-6.1 2zM386.3 756.3l6.1-2.1-4.7-.9-6.1 1.9z"/>
<path class="c0" d="M380.2 758.2l6.1-1.9-4.7-1.1-6.1 1.7zM374.1 760l6.1-1.8-4.7-1.3-6.1 1.7zM367.9 761.6l6.2-1.6-4.7-1.4-6.1 1.6zM361.8 763.2l6.1-1.6-4.6-1.4-6.2 1.5zM355.7 764.8l6.1-1.6-4.7-1.5-6.1 1.5zM349.6 766.3l6.1-1.5-4.7-1.6-6.1 1.5z"/>
<path class="c16" d="M830.7 614.4l6.1 13-4.7-9.7-6.1-17z"/>
<path class="c23" d="M824.6 599.3l6.1 15.1-4.7-13.7-6.1-19.8z"/>
<path class="c31" d="M818.4 583.6l6.2 15.7-4.7-18.4-6.1-20.6z"/>
<path class="c39" d="M812.3 569.6l6.1 14-4.6-23.3-6.2-18.1z"/>
<path class="c46" d="M806.2 559.8l6.1 9.8-4.7-27.4-6.1-12.7z"/>
<path class="c52" d="M800.1 555.9l6.1 3.9-4.7-30.3-6.1-4.7z"/>
<path class="c54" d="M794 558.5l6.1-2.6-4.7-31.1-6.1 4.1z"/>
<path class="c53" d="M787.9 566.8l6.1-8.3-4.7-29.6-6.1 11.8z"/>
<path class="c6" d="M433.7 733l6.1-5.5-4.7 3.9-6.1 4.4z"/>
<path class="c5" d="M427.6 737.9l6.1-4.9-4.7 2.8-6.1 4.1z"/>
<path class="c4" d="M421.5 742.3l6.1-4.4-4.7 2-6.1 3.5z"/>
<path class="c3" d="M415.4 746.2l6.1-3.9-4.7 1.1-6.1 3.2z"/>
<path class="c2" d="M409.3 749.5l6.1-3.3-4.7 .4-6.1 2.9zM403.2 752.4l6.1-2.9-4.7 0-6.1 2.5z"/>
<path class="c1" d="M397.1 755l6.1-2.6-4.7-.4-6.1 2.2zM391 757.3l6.1-2.3-4.7-.8-6.1 2.1zM384.9 759.3l6.1-2-4.7-1-6.1 1.9z"/>
<path class="c0" d="M378.7 761.2l6.2-1.9-4.7-1.1-6.1 1.8zM372.6 763l6.1-1.8-4.6-1.2-6.2 1.6zM366.5 764.7l6.1-1.7-4.7-1.4-6.1 1.6zM360.4 766.3l6.1-1.6-4.7-1.5-6.1 1.6zM354.3 767.8l6.1-1.5-4.7-1.5-6.1 1.5zM348.2 769.4l6.1-1.6-4.7-1.5-6.1 1.5z"/>
<path class="c6" d="M847.6 643.7l6.1 5-4.7-4.3-6.1-7z"/>
<path class="c9" d="M841.5 636.6l6.1 7.1-4.7-6.3-6.1-10z"/>
<path class="c13" d="M835.4 627.3l6.1 9.3-4.7-9.2-6.1-13z"/>
<path class="c19" d="M829.2 616.4l6.2 10.9-4.7-12.9-6.1-15.1z"/>
<path class="c25" d="M823.1 605.1l6.1 11.3-4.6-17.1-6.2-15.7z"/>
<path class="c31" d="M817 595l6.1 10.1-4.7-21.5-6.1-14z"/>
<path class="c37" d="M810.9 587.8l6.1 7.2-4.7-25.4-6.1-9.8z"/>
<path class="c41" d="M804.8 584.7l6.1 3.1-4.7-28-6.1-3.9z"/>
<path class="c43" d="M798.7 585.8l6.1-1.1-4.7-28.8-6.1 2.6z"/>
<path class="c42" d="M792.6 590.5l6.1-4.7-4.7-27.3-6.1 8.3z"/>
<path class="c8" d="M438.4 729.2l6.1-6.8-4.7 5.1-6.1 5.5z"/>
<path class="c6" d="M432.3 735.3l6.1-6.1-4.7 3.8-6.1 4.9z"/>
<path class="c5" d="M426.2 740.6l6.1-5.3-4.7 2.6-6.1 4.4z"/>
<path class="c4" d="M420.1 745.3l6.1-4.7-4.7 1.7-6.1 3.9z"/>
<path class="c3" d="M414 749.2l6.1-3.9-4.7 .9-6.1 3.3z"/>
<path class="c2" d="M407.9 752.6l6.1-3.4-4.7 .3-6.1 2.9zM401.8 755.6l6.1-3-4.7-.2-6.1 2.6z"/>
<path class="c1" d="M395.7 758.1l6.1-2.5-4.7-.6-6.1 2.3zM389.5 760.4l6.2-2.3-4.7-.8-6.1 2zM383.4 762.5l6.1-2.1-4.6-1.1-6.2 1.9z"/>
<path class="c0" d="M377.3 764.3l6.1-1.8-4.7-1.3-6.1 1.8zM371.2 766.1l6.1-1.8-4.7-1.3-6.1 1.7zM365.1 767.8l6.1-1.7-4.7-1.4-6.1 1.6zM359 769.4l6.1-1.6-4.7-1.5-6.1 1.5zM352.9 770.9l6.1-1.5-4.7-1.6-6.1 1.6zM346.8 772.4l6.1-1.5-4.7-1.5-6.1 1.4z"/>
<path class="c7" d="M846.2 644.3l6.1 4.9-4.7-5.5-6.1-7.1z"/>
<path class="c10" d="M840 638.1l6.2 6.2-4.7-7.7-6.1-9.3z"/>
<path class="c14" d="M833.9 630.7l6.1 7.4-4.6-10.8-6.2-10.9z"/>
<path class="c19" d="M827.8 623.1l6.1 7.6-4.7-14.3-6.1-11.3z"/>
<path class="c24" d="M821.7 616.2l6.1 6.9-4.7-18-6.1-10.1z"/>
<path class="c28" d="M815.6 611.1l6.1 5.1-4.7-21.2-6.1-7.2z"/>
<path class="c31" d="M809.5 608.4l6.1 2.7-4.7-23.3-6.1-3.1z"/>
<path class="c33" d="M803.4 608.2l6.1 .2-4.7-23.7-6.1 1.1z"/>
<path class="c67" d="M577.4 568.8l6.2-43.5-4.7 16.4-6.1 41.1z"/>
<path class="c11" d="M443.1 724.6l6.1-8.4-4.7 6.2-6.1 6.8z"/>
<path class="c9" d="M437 732l6.1-7.4-4.7 4.6-6.1 6.1z"/>
<path class="c7" d="M430.9 738.4l6.1-6.4-4.7 3.3-6.1 5.3z"/>
<path class="c5" d="M424.8 743.9l6.1-5.5-4.7 2.2-6.1 4.7z"/>
<path class="c4" d="M418.7 748.6l6.1-4.7-4.7 1.4-6.1 3.9z"/>
<path class="c3" d="M412.6 752.6l6.1-4-4.7 .6-6.1 3.4z"/>
<path class="c2" d="M406.4 755.9l6.2-3.3-4.7 0-6.1 3zM400.3 758.8l6.1-2.9-4.6-.3-6.1 2.5z"/>
<path class="c1" d="M394.2 761.4l6.1-2.6-4.6-.7-6.2 2.3zM388.1 763.6l6.1-2.2-4.7-1-6.1 2.1zM382 765.6l6.1-2-4.7-1.1-6.1 1.8z"/>
<path class="c0" d="M375.9 767.5l6.1-1.9-4.7-1.3-6.1 1.8zM369.8 769.2l6.1-1.7-4.7-1.4-6.1 1.7zM363.7 770.9l6.1-1.7-4.7-1.4-6.1 1.6zM357.6 772.5l6.1-1.6-4.7-1.5-6.1 1.5zM351.5 774l6.1-1.5-4.7-1.6-6.1 1.5zM345.4 775.5l6.1-1.5-4.7-1.6-6.1 1.5z"/>
<path class="c8" d="M844.7 646.5l6.1 4-4.6-6.2-6.2-6.2z"/>
<path class="c11" d="M838.6 641.8l6.1 4.7-4.7-8.4-6.1-7.4z"/>
<path class="c14" d="M832.5 636.8l6.1 5-4.7-11.1-6.1-7.6z"/>
<path class="c18" d="M826.4 632.2l6.1 4.6-4.7-13.7-6.1-6.9z"/>
<path class="c21" d="M820.3 628.6l6.1 3.6-4.7-16-6.1-5.1z"/>
<path class="c23" d="M814.2 626.2l6.1 2.4-4.7-17.5-6.1-2.7z"/>
<path class="c25" d="M808.1 624.9l6.1 1.3-4.7-17.8-6.1-.2z"/>
<path class="c80" d="M588.2 522l6.2-15.1-4.7 2.1-6.1 16.3z"/>
<path class="c74" d="M582.1 564.2l6.1-42.2-4.6 3.3-6.2 43.5z"/>
<path class="c17" d="M453.9 709.2l6.1-11.2-4.7 8.9-6.1 9.3z"/>
<path class="c14" d="M447.8 719.3l6.1-10.1-4.7 7-6.1 8.4z"/>
<path class="c11" d="M441.7 728.2l6.1-8.9-4.7 5.3-6.1 7.4z"/>
<path class="c9" d="M435.6 735.8l6.1-7.6-4.7 3.8-6.1 6.4z"/>
<path class="c7" d="M429.5 742.3l6.1-6.5-4.7 2.6-6.1 5.5z"/>
<path class="c5" d="M423.4 747.8l6.1-5.5-4.7 1.6-6.1 4.7z"/>
<path class="c4" d="M417.2 752.3l6.2-4.5-4.7 .8-6.1 4z"/>
<path class="c3" d="M411.1 756.2l6.1-3.9-4.6 .3-6.2 3.3z"/>
<path class="c2" d="M405 759.4l6.1-3.2-4.7-.3-6.1 2.9zM398.9 762.2l6.1-2.8-4.7-.6-6.1 2.6z"/>
<path class="c1" d="M392.8 764.7l6.1-2.5-4.7-.8-6.1 2.2zM386.7 766.8l6.1-2.1-4.7-1.1-6.1 2z"/>
<path class="c0" d="M380.6 768.8l6.1-2-4.7-1.2-6.1 1.9zM374.5 770.6l6.1-1.8-4.7-1.3-6.1 1.7zM368.4 772.4l6.1-1.8-4.7-1.4-6.1 1.7zM362.3 774l6.1-1.6-4.7-1.5-6.1 1.6zM356.2 775.6l6.1-1.6-4.7-1.5-6.1 1.5zM350.1 777.1l6.1-1.5-4.7-1.6-6.1 1.5zM344 778.6l6.1-1.5-4.7-1.6-6.1 1.5z"/>
<path class="c8" d="M843.3 649.7l6.1 3-4.7-6.2-6.1-4.7z"/>
<path class="c11" d="M837.2 646.5l6.1 3.2-4.7-7.9-6.1-5z"/>
<path class="c13" d="M831.1 643.5l6.1 3-4.7-9.7-6.1-4.6z"/>
<path class="c15" d="M825 640.9l6.1 2.6-4.7-11.3-6.1-3.6z"/>
<path class="c17" d="M818.9 638.6l6.1 2.3-4.7-12.3-6.1-2.4z"/>
<path class="c39" d="M727.3 597.7l6.1-26-4.7 17.8-6.1 22.1z"/>
<path class="c81" d="M592.9 532.2l6.1-12.5-4.6-12.8-6.2 15.1z"/>
<path class="c76" d="M586.8 569.3l6.1-37.1-4.7-10.2-6.1 42.2z"/>
<path class="c21" d="M458.6 701.6l6.1-13.2-4.7 9.6-6.1 11.2z"/>
<path class="c17" d="M452.5 713.5l6.1-11.9-4.7 7.6-6.1 10.1z"/>
<path class="c14" d="M446.4 723.9l6.1-10.4-4.7 5.8-6.1 8.9z"/>
<path class="c11" d="M440.3 732.9l6.1-9-4.7 4.3-6.1 7.6z"/>
<path class="c8" d="M434.2 740.4l6.1-7.5-4.7 2.9-6.1 6.5z"/>
<path class="c6" d="M428 746.7l6.2-6.3-4.7 1.9-6.1 5.5z"/>
<path class="c5" d="M421.9 752l6.1-5.3-4.6 1.1-6.2 4.5z"/>
<path class="c4" d="M415.8 756.3l6.1-4.3-4.7 .3-6.1 3.9z"/>
<path class="c3" d="M409.7 759.9l6.1-3.6-4.7-.1-6.1 3.2z"/>
<path class="c2" d="M403.6 763l6.1-3.1-4.7-.5-6.1 2.8z"/>
<path class="c1" d="M397.5 765.7l6.1-2.7-4.7-.8-6.1 2.5zM391.4 768l6.1-2.3-4.7-1-6.1 2.1zM385.3 770.1l6.1-2.1-4.7-1.2-6.1 2z"/>
<path class="c0" d="M379.2 772l6.1-1.9-4.7-1.3-6.1 1.8zM373.1 773.8l6.1-1.8-4.7-1.4-6.1 1.8zM367 775.5l6.1-1.7-4.7-1.4-6.1 1.6zM360.9 777.2l6.1-1.7-4.7-1.5-6.1 1.6zM354.8 778.7l6.1-1.5-4.7-1.6-6.1 1.5zM348.7 780.3l6.1-1.6-4.7-1.6-6.1 1.5z"/>
<path class="c8" d="M841.9 653l6.1 2.1-4.7-5.4-6.1-3.2z"/>
<path class="c10" d="M835.8 651l6.1 2-4.7-6.5-6.1-3z"/>
<path class="c12" d="M829.7 648.9l6.1 2.1-4.7-7.5-6.1-2.6z"/>
<path class="c55" d="M738.1 558.4l6.1-25.8-4.7 15.9-6.1 23.2z"/>
<path class="c47" d="M732 587.6l6.1-29.2-4.7 13.3-6.1 26z"/>
<path class="c37" d="M725.9 616.3l6.1-28.7-4.7 10.1-6.1 25.7z"/>
<path class="c68" d="M603.7 544.2l6.1 20.5-4.6-22.7-6.2-22.3z"/>
<path class="c77" d="M597.6 552.9l6.1-8.7-4.7-24.5-6.1 12.5z"/>
<path class="c73" d="M591.5 582.1l6.1-29.2-4.7-20.7-6.1 37.1z"/>
<path class="c35" d="M475.5 662.2l6.1-17.4-4.7 14.2-6.1 15z"/>
<path class="c30" d="M469.4 678.7l6.1-16.5-4.7 11.8-6.1 14.4z"/>
<path class="c25" d="M463.3 694l6.1-15.3-4.7 9.7-6.1 13.2z"/>
<path class="c20" d="M457.2 707.7l6.1-13.7-4.7 7.6-6.1 11.9z"/>
<path class="c16" d="M451.1 719.7l6.1-12-4.7 5.8-6.1 10.4z"/>
<path class="c13" d="M445 729.9l6.1-10.2-4.7 4.2-6.1 9z"/>
<path class="c10" d="M438.8 738.5l6.2-8.6-4.7 3-6.1 7.5z"/>
<path class="c8" d="M432.7 745.7l6.1-7.2-4.6 1.9-6.2 6.3z"/>
<path class="c6" d="M426.6 751.5l6.1-5.8-4.7 1-6.1 5.3z"/>
<path class="c4" d="M420.5 756.4l6.1-4.9-4.7 .5-6.1 4.3z"/>
<path class="c3" d="M414.4 760.4l6.1-4-4.7-.1-6.1 3.6z"/>
<path class="c2" d="M408.3 763.8l6.1-3.4-4.7-.5-6.1 3.1zM402.2 766.6l6.1-2.8-4.7-.8-6.1 2.7z"/>
<path class="c1" d="M396.1 769.1l6.1-2.5-4.7-.9-6.1 2.3zM390 771.4l6.1-2.3-4.7-1.1-6.1 2.1zM383.9 773.4l6.1-2-4.7-1.3-6.1 1.9z"/>
<path class="c0" d="M377.8 775.3l6.1-1.9-4.7-1.4-6.1 1.8zM371.7 777l6.1-1.7-4.7-1.5-6.1 1.7zM365.6 778.7l6.1-1.7-4.7-1.5-6.1 1.7zM359.5 780.3l6.1-1.6-4.7-1.5-6.1 1.5zM353.3 781.9l6.2-1.6-4.7-1.6-6.1 1.6zM347.2 783.4l6.1-1.5-4.6-1.6-6.2 1.5z"/>
<path class="c68" d="M748.9 525.2l6.1-19.7-4.7 8.4-6.1 18.7z"/>
<path class="c61" d="M742.8 552.4l6.1-27.2-4.7 7.4-6.1 25.8z"/>
<path class="c52" d="M736.7 583.1l6.1-30.7-4.7 6-6.1 29.2z"/>
<path class="c42" d="M730.6 613.3l6.1-30.2-4.7 4.5-6.1 28.7z"/>
<path class="c60" d="M608.4 575l6.1 17.9-4.7-28.2-6.1-20.5z"/>
<path class="c68" d="M602.3 579.4l6.1-4.4-4.7-30.8-6.1 8.7z"/>
<path class="c66" d="M596.2 599.2l6.1-19.8-4.7-26.5-6.1 29.2z"/>
<path class="c55" d="M590.1 620.1l6.1-20.9-4.7-17.1-6.1 31.2z"/>
<path class="c47" d="M486.3 631.6l6.1-19.7-4.7 15.4-6.1 17.5z"/>
<path class="c41" d="M480.2 651.1l6.1-19.5-4.7 13.2-6.1 17.4z"/>
<path class="c35" d="M474.1 669.7l6.1-18.6-4.7 11.1-6.1 16.5z"/>
<path class="c29" d="M468 686.9l6.1-17.2-4.7 9-6.1 15.3z"/>
<path class="c24" d="M461.9 702.2l6.1-15.3-4.7 7.1-6.1 13.7z"/>
<path class="c19" d="M455.8 715.6l6.1-13.4-4.7 5.5-6.1 12z"/>
<path class="c15" d="M449.6 727.1l6.2-11.5-4.7 4.1-6.1 10.2z"/>
<path class="c12" d="M443.5 736.7l6.1-9.6-4.6 2.8-6.2 8.6z"/>
<path class="c9" d="M437.4 744.6l6.1-7.9-4.7 1.8-6.1 7.2z"/>
<path class="c7" d="M431.3 751.1l6.1-6.5-4.7 1.1-6.1 5.8z"/>
<path class="c5" d="M425.2 756.5l6.1-5.4-4.7 .4-6.1 4.9z"/>
<path class="c4" d="M419.1 760.8l6.1-4.3-4.7-.1-6.1 4z"/>
<path class="c3" d="M413 764.5l6.1-3.7-4.7-.4-6.1 3.4z"/>
<path class="c2" d="M406.9 767.6l6.1-3.1-4.7-.7-6.1 2.8zM400.8 770.2l6.1-2.6-4.7-1-6.1 2.5z"/>
<path class="c1" d="M394.7 772.6l6.1-2.4-4.7-1.1-6.1 2.3zM388.6 774.7l6.1-2.1-4.7-1.2-6.1 2zM382.5 776.7l6.1-2-4.7-1.3-6.1 1.9z"/>
<path class="c0" d="M376.4 778.5l6.1-1.8-4.7-1.4-6.1 1.7zM370.3 780.2l6.1-1.7-4.7-1.5-6.1 1.7zM364.1 781.9l6.2-1.7-4.7-1.5-6.1 1.6zM358 783.5l6.1-1.6-4.6-1.6-6.2 1.6zM351.9 785l6.1-1.5-4.7-1.6-6.1 1.5z"/>
<path class="c73" d="M765.8 499.4l6.1 2.6-4.7-2.8-6.1-2.7z"/>
<path class="c75" d="M759.7 508.4l6.1-9-4.7-2.9-6.1 9z"/>
<path class="c72" d="M753.6 528l6.1-19.6-4.7-2.9-6.1 19.7z"/>
<path class="c65" d="M747.5 555l6.1-27-4.7-2.8-6.1 27.2z"/>
<path class="c55" d="M741.4 585.5l6.1-30.5-4.7-2.6-6.1 30.7z"/>
<path class="c44" d="M735.3 615.5l6.1-30-4.7-2.4-6.1 30.2z"/>
<path class="c37" d="M619.2 621.3l6.1 25.9-4.7-20.7-6.1-33.6z"/>
<path class="c50" d="M613.1 606.3l6.1 15-4.7-28.4-6.1-17.9z"/>
<path class="c58" d="M607 606.6l6.1-.3-4.7-31.3-6.1 4.4z"/>
<path class="c56" d="M600.9 617.3l6.1-10.7-4.7-27.2-6.1 19.8z"/>
<path class="c60" d="M497.1 598.7l6.1-20.9-4.7 15-6.1 19.1z"/>
<path class="c53" d="M491 620.3l6.1-21.6-4.7 13.2-6.1 19.7z"/>
<path class="c46" d="M484.9 641.7l6.1-21.4-4.7 11.3-6.1 19.5z"/>
<path class="c40" d="M478.8 662l6.1-20.3-4.7 9.4-6.1 18.6z"/>
<path class="c33" d="M472.7 680.8l6.1-18.8-4.7 7.7-6.1 17.2z"/>
<path class="c27" d="M466.6 697.6l6.1-16.8-4.7 6.1-6.1 15.3z"/>
<path class="c22" d="M460.4 712.2l6.2-14.6-4.7 4.6-6.1 13.4z"/>
<path class="c17" d="M454.3 724.7l6.1-12.5-4.6 3.4-6.2 11.5z"/>
<path class="c14" d="M448.2 735.2l6.1-10.5-4.7 2.4-6.1 9.6z"/>
<path class="c10" d="M442.1 743.8l6.1-8.6-4.7 1.5-6.1 7.9z"/>
<path class="c8" d="M436 750.9l6.1-7.1-4.7 .8-6.1 6.5z"/>
<path class="c6" d="M429.9 756.6l6.1-5.7-4.7 .2-6.1 5.4z"/>
<path class="c5" d="M423.8 761.3l6.1-4.7-4.7-.1-6.1 4.3z"/>
<path class="c3" d="M417.7 765.2l6.1-3.9-4.7-.5-6.1 3.7zM411.6 768.5l6.1-3.3-4.7-.7-6.1 3.1z"/>
<path class="c2" d="M405.5 771.3l6.1-2.8-4.7-.9-6.1 2.6z"/>
<path class="c1" d="M399.4 773.8l6.1-2.5-4.7-1.1-6.1 2.4zM393.3 776l6.1-2.2-4.7-1.2-6.1 2.1zM387.2 778.1l6.1-2.1-4.7-1.3-6.1 2z"/>
<path class="c0" d="M381.1 780l6.1-1.9-4.7-1.4-6.1 1.8zM374.9 781.8l6.2-1.8-4.7-1.5-6.1 1.7zM368.8 783.5l6.1-1.7-4.6-1.6-6.2 1.7zM362.7 785.1l6.1-1.6-4.7-1.6-6.1 1.6zM356.6 786.7l6.1-1.6-4.7-1.6-6.1 1.5zM350.5 788.2l6.1-1.5-4.7-1.7-6.1 1.5z"/>
<path class="c67" d="M776.6 515.7l6.1 12.1-4.7-12.4-6.1-13.4z"/>
<path class="c73" d="M770.5 513.6l6.1 2.1-4.7-13.7-6.1-2.6z"/>
<path class="c74" d="M764.4 522.2l6.1-8.6-4.7-14.2-6.1 9z"/>
<path class="c71" d="M758.3 540.7l6.1-18.5-4.7-13.8-6.1 19.6z"/>
<path class="c64" d="M752.2 566.1l6.1-25.4-4.7-12.7-6.1 27z"/>
<path class="c55" d="M746.1 594.6l6.1-28.5-4.7-11.1-6.1 30.5z"/>
<path class="c44" d="M740 622.5l6.1-27.9-4.7-9.1-6.1 30z"/>
<path class="c30" d="M623.9 646.2l6.1 18.9-4.7-17.9-6.1-25.9z"/>
<path class="c40" d="M617.8 633.7l6.1 12.5-4.7-24.9-6.1-15z"/>
<path class="c47" d="M611.7 630.7l6.1 3-4.7-27.4-6.1 .3zM605.6 633.7l6.1-3-4.7-24.1-6.1 10.7z"/>
<path class="c79" d="M514 545.8l6.1-19.7-4.7 15.2-6.1 17.2z"/>
<path class="c73" d="M507.9 566.7l6.1-20.9-4.7 12.7-6.1 19.3z"/>
<path class="c66" d="M501.8 588.9l6.1-22.2-4.7 11.1-6.1 20.9z"/>
<path class="c59" d="M495.7 611.9l6.1-23-4.7 9.8-6.1 21.6z"/>
<path class="c51" d="M489.6 634.6l6.1-22.7-4.7 8.4-6.1 21.4z"/>
<path class="c44" d="M483.5 656.3l6.1-21.7-4.7 7.1-6.1 20.3z"/>
<path class="c37" d="M477.4 676.3l6.1-20-4.7 5.7-6.1 18.8z"/>
<path class="c30" d="M471.2 694.2l6.2-17.9-4.7 4.5-6.1 16.8z"/>
<path class="c24" d="M465.1 709.8l6.1-15.6-4.6 3.4-6.2 14.6z"/>
<path class="c19" d="M459 723l6.1-13.2-4.7 2.4-6.1 12.5z"/>
<path class="c15" d="M452.9 734.1l6.1-11.1-4.7 1.7-6.1 10.5z"/>
<path class="c12" d="M446.8 743.3l6.1-9.2-4.7 1.1-6.1 8.6z"/>
<path class="c9" d="M440.7 750.8l6.1-7.5-4.7 .5-6.1 7.1z"/>
<path class="c7" d="M434.6 756.9l6.1-6.1-4.7 .1-6.1 5.7z"/>
<path class="c5" d="M428.5 761.9l6.1-5-4.7-.3-6.1 4.7z"/>
<path class="c4" d="M422.4 766l6.1-4.1-4.7-.6-6.1 3.9z"/>
<path class="c3" d="M416.3 769.5l6.1-3.5-4.7-.8-6.1 3.3z"/>
<path class="c2" d="M410.2 772.4l6.1-2.9-4.7-1-6.1 2.8zM404.1 775l6.1-2.6-4.7-1.1-6.1 2.5z"/>
<path class="c1" d="M398 777.4l6.1-2.4-4.7-1.2-6.1 2.2zM391.9 779.5l6.1-2.1-4.7-1.4-6.1 2.1zM385.7 781.4l6.2-1.9-4.7-1.4-6.1 1.9z"/>
<path class="c0" d="M379.6 783.3l6.1-1.9-4.6-1.4-6.2 1.8zM373.5 785l6.1-1.7-4.7-1.5-6.1 1.7zM367.4 786.7l6.1-1.7-4.7-1.5-6.1 1.6zM361.3 788.3l6.1-1.6-4.7-1.6-6.1 1.6zM355.2 789.8l6.1-1.5-4.7-1.6-6.1 1.5z"/>
<path class="c55" d="M787.4 547.9l6.1 16.3-4.7-17.1-6.1-19.3z"/>
<path class="c63" d="M781.3 538l6.1 9.9-4.7-20.1-6.1-12.1z"/>
<path class="c68" d="M775.2 536.6l6.1 1.4-4.7-22.3-6.1-2.1z"/>
<path class="c69" d="M769.1 544.7l6.1-8.1-4.7-23-6.1 8.6z"/>
<path class="c67" d="M763 561.3l6.1-16.6-4.7-22.5-6.1 18.5z"/>
<path class="c60" d="M756.9 583.7l6.1-22.4-4.7-20.6-6.1 25.4z"/>
<path class="c51" d="M750.8 608.9l6.1-25.2-4.7-17.6-6.1 28.5z"/>
<path class="c41" d="M744.6 633.4l6.2-24.5-4.7-14.3-6.1 27.9z"/>
<path class="c24" d="M628.6 665.2l6.1 13.3-4.7-13.4-6.1-18.9z"/>
<path class="c32" d="M622.5 655.1l6.1 10.1-4.7-19-6.1-12.5z"/>
<path class="c37" d="M616.4 649.8l6.1 5.3-4.7-21.4-6.1-3z"/>
<path class="c39" d="M610.3 647l6.1 2.8-4.7-19.1-6.1 3z"/>
<path class="c92" d="M524.8 515.9l6.1-25.3-4.7 15.9-6.1 19.6z"/>
<path class="c85" d="M518.7 538.2l6.1-22.3-4.7 10.2-6.1 19.7z"/>
<path class="c78" d="M512.6 560.3l6.1-22.1-4.7 7.6-6.1 20.9z"/>
<path class="c71" d="M506.5 583.4l6.1-23.1-4.7 6.4-6.1 22.2z"/>
<path class="c63" d="M500.4 607.2l6.1-23.8-4.7 5.5-6.1 23z"/>
<path class="c55" d="M494.3 630.7l6.1-23.5-4.7 4.7-6.1 22.7z"/>
<path class="c47" d="M488.1 653.1l6.2-22.4-4.7 3.9-6.1 21.7z"/>
<path class="c39" d="M482 673.8l6.1-20.7-4.6 3.2-6.1 20z"/>
<path class="c32" d="M475.9 692.3l6.1-18.5-4.6 2.5-6.2 17.9z"/>
<path class="c26" d="M469.8 708.5l6.1-16.2-4.7 1.9-6.1 15.6z"/>
<path class="c21" d="M463.7 722.2l6.1-13.7-4.7 1.3-6.1 13.2z"/>
<path class="c16" d="M457.6 733.8l6.1-11.6-4.7 .8-6.1 11.1z"/>
<path class="c13" d="M451.5 743.3l6.1-9.5-4.7 .3-6.1 9.2z"/>
<path class="c10" d="M445.4 751.1l6.1-7.8-4.7 0-6.1 7.5z"/>
<path class="c7" d="M439.3 757.4l6.1-6.3-4.7-.3-6.1 6.1z"/>
<path class="c6" d="M433.2 762.6l6.1-5.2-4.7-.5-6.1 5z"/>
<path class="c4" d="M427.1 766.9l6.1-4.3-4.7-.7-6.1 4.1z"/>
<path class="c3" d="M421 770.5l6.1-3.6-4.7-.9-6.1 3.5z"/>
<path class="c2" d="M414.9 773.6l6.1-3.1-4.7-1-6.1 2.9zM408.8 776.3l6.1-2.7-4.7-1.2-6.1 2.6z"/>
<path class="c1" d="M402.7 778.7l6.1-2.4-4.7-1.3-6.1 2.4zM396.5 780.9l6.2-2.2-4.7-1.3-6.1 2.1zM390.4 782.9l6.1-2-4.6-1.4-6.2 1.9z"/>
<path class="c0" d="M384.3 784.8l6.1-1.9-4.7-1.5-6.1 1.9zM378.2 786.6l6.1-1.8-4.7-1.5-6.1 1.7zM372.1 788.3l6.1-1.7-4.7-1.6-6.1 1.7zM366 789.9l6.1-1.6-4.7-1.6-6.1 1.6zM359.9 791.5l6.1-1.6-4.7-1.6-6.1 1.5zM353.8 793l6.1-1.5-4.7-1.7-6.1 1.6z"/>
<path class="c34" d="M804.3 599.7l6.1 15.1-4.7-11.8-6.1-19.5z"/>
<path class="c42" d="M798.2 584.7l6.1 15-4.7-16.2-6.1-19.3z"/>
<path class="c50" d="M792.1 572.3l6.1 12.4-4.7-20.5-6.1-16.3z"/>
<path class="c56" d="M786 565l6.1 7.3-4.7-24.4-6.1-9.9z"/>
<path class="c60" d="M779.9 564.7l6.1 .3-4.7-27-6.1-1.4z"/>
<path class="c61" d="M773.8 572.1l6.1-7.4-4.7-28.1-6.1 8.1z"/>
<path class="c59" d="M767.7 586.3l6.1-14.2-4.7-27.4-6.1 16.6z"/>
<path class="c53" d="M761.5 605.2l6.2-18.9-4.7-25-6.1 22.4z"/>
<path class="c45" d="M755.4 626.1l6.1-20.9-4.6-21.5-6.1 25.2z"/>
<path class="c36" d="M749.3 646.5l6.1-20.4-4.6-17.2-6.2 24.5z"/>
<path class="c20" d="M633.3 678.3l6.1 9-4.7-8.8-6.1-13.3z"/>
<path class="c25" d="M627.2 670.2l6.1 8.1-4.7-13.1-6.1-10.1z"/>
<path class="c30" d="M621.1 663.6l6.1 6.6-4.7-15.1-6.1-5.3z"/>
<path class="c32" d="M615 657.3l6.1 6.3-4.7-13.8-6.1-2.8z"/>
<path class="c117" d="M541.7 448.8l6.1-30.6-4.7 19.9-6.1 23.9z"/>
<path class="c109" d="M535.6 483.9l6.1-35.1-4.7 13.2-6.1 28.6z"/>
<path class="c99" d="M529.5 513l6.1-29.1-4.7 6.7-6.1 25.3z"/>
<path class="c90" d="M523.4 536.8l6.1-23.8-4.7 2.9-6.1 22.3z"/>
<path class="c82" d="M517.3 559.4l6.1-22.6-4.7 1.4-6.1 22.1z"/>
<path class="c74" d="M511.2 582.7l6.1-23.3-4.7 .9-6.1 23.1z"/>
<path class="c66" d="M505.1 606.5l6.1-23.8-4.7 .7-6.1 23.8z"/>
<path class="c57" d="M498.9 630.2l6.2-23.7-4.7 .7-6.1 23.5z"/>
<path class="c49" d="M492.8 652.7l6.1-22.5-4.6 .5-6.2 22.4z"/>
<path class="c41" d="M486.7 673.6l6.1-20.9-4.7 .4-6.1 20.7z"/>
<path class="c34" d="M480.6 692.2l6.1-18.6-4.7 .2-6.1 18.5z"/>
<path class="c28" d="M474.5 708.5l6.1-16.3-4.7 .1-6.1 16.2z"/>
<path class="c22" d="M468.4 722.5l6.1-14-4.7 0-6.1 13.7z"/>
<path class="c17" d="M462.3 734.1l6.1-11.6-4.7-.3-6.1 11.6z"/>
<path class="c13" d="M456.2 743.8l6.1-9.7-4.7-.3-6.1 9.5z"/>
<path class="c10" d="M450.1 751.7l6.1-7.9-4.7-.5-6.1 7.8z"/>
<path class="c8" d="M444 758.2l6.1-6.5-4.7-.6-6.1 6.3z"/>
<path class="c6" d="M437.9 763.5l6.1-5.3-4.7-.8-6.1 5.2z"/>
<path class="c5" d="M431.8 767.9l6.1-4.4-4.7-.9-6.1 4.3z"/>
<path class="c4" d="M425.7 771.6l6.1-3.7-4.7-1-6.1 3.6z"/>
<path class="c3" d="M419.6 774.8l6.1-3.2-4.7-1.1-6.1 3.1z"/>
<path class="c2" d="M413.5 777.5l6.1-2.7-4.7-1.2-6.1 2.7zM407.3 780l6.2-2.5-4.7-1.2-6.1 2.4z"/>
<path class="c1" d="M401.2 782.3l6.1-2.3-4.6-1.3-6.2 2.2zM395.1 784.4l6.1-2.1-4.7-1.4-6.1 2zM389 786.3l6.1-1.9-4.7-1.5-6.1 1.9z"/>
<path class="c0" d="M382.9 788.1l6.1-1.8-4.7-1.5-6.1 1.8zM376.8 789.9l6.1-1.8-4.7-1.5-6.1 1.7zM370.7 791.5l6.1-1.6-4.7-1.6-6.1 1.6zM364.6 793.1l6.1-1.6-4.7-1.6-6.1 1.6zM358.5 794.7l6.1-1.6-4.7-1.6-6.1 1.5z"/>
<path class="c25" d="M815.1 626.5l6.1 9.3-4.7-7.6-6.1-13.4z"/>
<path class="c30" d="M809 615.9l6.1 10.6-4.7-11.7-6.1-15.1z"/>
<path class="c37" d="M802.9 605.5l6.1 10.4-4.7-16.2-6.1-15z"/>
<path class="c43" d="M796.8 597.2l6.1 8.3-4.7-20.8-6.1-12.4z"/>
<path class="c48" d="M790.7 592.8l6.1 4.4-4.7-24.9-6.1-7.3z"/>
<path class="c51" d="M784.6 593.7l6.1-.9-4.7-27.8-6.1-.3z"/>
<path class="c52" d="M778.5 600.3l6.1-6.6-4.7-29-6.1 7.4z"/>
<path class="c49" d="M772.3 612.1l6.2-11.8-4.7-28.2-6.1 14.2z"/>
<path class="c45" d="M766.2 627.3l6.1-15.2-4.6-25.8-6.2 18.9z"/>
<path class="c38" d="M760.1 643.9l6.1-16.6-4.7-22.1-6.1 20.9z"/>
<path class="c31" d="M754 659.9l6.1-16-4.7-17.8-6.1 20.4z"/>
<path class="c17" d="M638 686.4l6.1 5.8-4.7-4.9-6.1-9z"/>
<path class="c21" d="M631.9 680l6.1 6.4-4.7-8.1-6.1-8.1z"/>
<path class="c25" d="M625.8 673.2l6.1 6.8-4.7-9.8-6.1-6.6z"/>
<path class="c127" d="M552.5 427.6l6.1-6.6-4.7-9.8-6.1 7z"/>
<path class="c125" d="M546.4 457l6.1-29.4-4.7-9.4-6.1 30.6z"/>
<path class="c114" d="M540.3 490.9l6.1-33.9-4.7-8.2-6.1 35.1z"/>
<path class="c102" d="M534.2 519l6.1-28.1-4.7-7-6.1 29.1z"/>
<path class="c91" d="M528.1 542.1l6.1-23.1-4.7-6-6.1 23.8z"/>
<path class="c83" d="M522 564.1l6.1-22-4.7-5.3-6.1 22.6z"/>
<path class="c75" d="M515.9 586.8l6.1-22.7-4.7-4.7-6.1 23.3z"/>
<path class="c67" d="M509.7 610.1l6.2-23.3-4.7-4.1-6.1 23.8z"/>
<path class="c58" d="M503.6 633.2l6.1-23.1-4.6-3.6-6.2 23.7z"/>
<path class="c50" d="M497.5 655.3l6.1-22.1-4.7-3-6.1 22.5z"/>
<path class="c42" d="M491.4 675.7l6.1-20.4-4.7-2.6-6.1 20.9z"/>
<path class="c35" d="M485.3 694l6.1-18.3-4.7-2.1-6.1 18.6z"/>
<path class="c28" d="M479.2 710l6.1-16-4.7-1.8-6.1 16.3z"/>
<path class="c23" d="M473.1 723.7l6.1-13.7-4.7-1.5-6.1 14z"/>
<path class="c18" d="M467 735.3l6.1-11.6-4.7-1.2-6.1 11.6z"/>
<path class="c14" d="M460.9 744.9l6.1-9.6-4.7-1.2-6.1 9.7z"/>
<path class="c11" d="M454.8 752.7l6.1-7.8-4.7-1.1-6.1 7.9z"/>
<path class="c8" d="M448.7 759.2l6.1-6.5-4.7-1-6.1 6.5z"/>
<path class="c7" d="M442.6 764.6l6.1-5.4-4.7-1-6.1 5.3z"/>
<path class="c5" d="M436.5 769l6.1-4.4-4.7-1.1-6.1 4.4z"/>
<path class="c4" d="M430.4 772.8l6.1-3.8-4.7-1.1-6.1 3.7z"/>
<path class="c3" d="M424.2 776l6.2-3.2-4.7-1.2-6.1 3.2z"/>
<path class="c2" d="M418.1 778.8l6.1-2.8-4.6-1.2-6.1 2.7zM412 781.4l6.1-2.6-4.6-1.3-6.2 2.5z"/>
<path class="c1" d="M405.9 783.7l6.1-2.3-4.7-1.4-6.1 2.3zM399.8 785.8l6.1-2.1-4.7-1.4-6.1 2.1zM393.7 787.8l6.1-2-4.7-1.4-6.1 1.9z"/>
<path class="c0" d="M387.6 789.7l6.1-1.9-4.7-1.5-6.1 1.8zM381.5 791.5l6.1-1.8-4.7-1.6-6.1 1.8zM375.4 793.2l6.1-1.7-4.7-1.6-6.1 1.6zM369.3 794.8l6.1-1.6-4.7-1.7-6.1 1.6zM363.2 796.4l6.1-1.6-4.7-1.7-6.1 1.6zM357.1 797.9l6.1-1.5-4.7-1.7-6.1 1.5z"/>
<path class="c19" d="M825.9 642l6.1 4.5-4.7-3.2-6.1-7.5z"/>
<path class="c23" d="M819.8 636.4l6.1 5.6-4.7-6.2-6.1-9.3z"/>
<path class="c27" d="M813.7 630.2l6.1 6.2-4.7-9.9-6.1-10.6z"/>
<path class="c31" d="M807.6 624.1l6.1 6.1-4.7-14.3-6.1-10.4z"/>
<path class="c35" d="M801.5 619.6l6.1 4.5-4.7-18.6-6.1-8.3z"/>
<path class="c39" d="M795.4 617.9l6.1 1.7-4.7-22.4-6.1-4.4z"/>
<path class="c41" d="M789.3 620l6.1-2.1-4.7-25.1-6.1 .9zM783.1 626l6.2-6-4.7-26.3-6.1 6.6z"/>
<path class="c39" d="M777 635.6l6.1-9.6-4.6-25.7-6.2 11.8z"/>
<path class="c36" d="M770.9 647.5l6.1-11.9-4.7-23.5-6.1 15.2z"/>
<path class="c30" d="M764.8 660.1l6.1-12.6-4.7-20.2-6.1 16.6z"/>
<path class="c25" d="M758.7 672.1l6.1-12-4.7-16.2-6.1 16z"/>
<path class="c19" d="M752.6 682.2l6.1-10.1-4.7-12.2-6.1 13.7zM636.6 686.2l6.1 4.7-4.7-4.5-6.1-6.4z"/>
<path class="c22" d="M630.5 680l6.1 6.2-4.7-6.2-6.1-6.8z"/>
<path class="c99" d="M569.4 477.9l6.1 31.7-4.7-24.5-6.1-40.7z"/>
<path class="c115" d="M563.3 459.5l6.1 18.4-4.7-33.5-6.1-23.4z"/>
<path class="c124" d="M557.2 463.5l6.1-4-4.7-38.5-6.1 6.6z"/>
<path class="c122" d="M551.1 484.6l6.1-21.1-4.7-35.9-6.1 29.4z"/>
<path class="c112" d="M545 510.3l6.1-25.7-4.7-27.6-6.1 33.9z"/>
<path class="c100" d="M538.9 533.2l6.1-22.9-4.7-19.4-6.1 28.1z"/>
<path class="c90" d="M532.8 553.6l6.1-20.4-4.7-14.2-6.1 23.1z"/>
<path class="c82" d="M526.7 574l6.1-20.4-4.7-11.5-6.1 22z"/>
<path class="c74" d="M520.5 595.5l6.2-21.5-4.7-9.9-6.1 22.7z"/>
<path class="c66" d="M514.4 617.6l6.1-22.1-4.6-8.7-6.2 23.3z"/>
<path class="c58" d="M508.3 639.5l6.1-21.9-4.7-7.5-6.1 23.1z"/>
<path class="c49" d="M502.2 660.5l6.1-21-4.7-6.3-6.1 22.1z"/>
<path class="c42" d="M496.1 680l6.1-19.5-4.7-5.2-6.1 20.4z"/>
<path class="c35" d="M490 697.5l6.1-17.5-4.7-4.3-6.1 18.3z"/>
<path class="c28" d="M483.9 712.8l6.1-15.3-4.7-3.5-6.1 16z"/>
<path class="c23" d="M477.8 726l6.1-13.2-4.7-2.8-6.1 13.7z"/>
<path class="c18" d="M471.7 737.2l6.1-11.2-4.7-2.3-6.1 11.6z"/>
<path class="c14" d="M465.6 746.5l6.1-9.3-4.7-1.9-6.1 9.6z"/>
<path class="c11" d="M459.5 754.2l6.1-7.7-4.7-1.6-6.1 7.8z"/>
<path class="c9" d="M453.4 760.5l6.1-6.3-4.7-1.5-6.1 6.5z"/>
<path class="c7" d="M447.3 765.8l6.1-5.3-4.7-1.3-6.1 5.4z"/>
<path class="c5" d="M441.2 770.3l6.1-4.5-4.7-1.2-6.1 4.4z"/>
<path class="c4" d="M435 774l6.2-3.7-4.7-1.3-6.1 3.8z"/>
<path class="c3" d="M428.9 777.3l6.1-3.3-4.6-1.2-6.2 3.2z"/>
<path class="c2" d="M422.8 780.2l6.1-2.9-4.7-1.3-6.1 2.8zM416.7 782.8l6.1-2.6-4.7-1.4-6.1 2.6z"/>
<path class="c1" d="M410.6 785.1l6.1-2.3-4.7-1.4-6.1 2.3zM404.5 787.3l6.1-2.2-4.7-1.4-6.1 2.1zM398.4 789.4l6.1-2.1-4.7-1.5-6.1 2zM392.3 791.3l6.1-1.9-4.7-1.6-6.1 1.9z"/>
<path class="c0" d="M386.2 793.1l6.1-1.8-4.7-1.6-6.1 1.8zM380.1 794.8l6.1-1.7-4.7-1.6-6.1 1.7zM374 796.4l6.1-1.6-4.7-1.6-6.1 1.6zM367.9 798l6.1-1.6-4.7-1.6-6.1 1.6zM361.8 799.6l6.1-1.6-4.7-1.6-6.1 1.5z"/>
<path class="c17" d="M836.7 648l6.1 1.3-4.7 .4-6.1-3.2z"/>
<path class="c19" d="M830.6 646.1l6.1 1.9-4.7-1.5-6.1-4.5z"/>
<path class="c21" d="M824.5 643.7l6.1 2.4-4.7-4.1-6.1-5.6z"/>
<path class="c24" d="M818.4 641.1l6.1 2.6-4.7-7.3-6.1-6.2z"/>
<path class="c26" d="M812.3 638.8l6.1 2.3-4.7-10.9-6.1-6.1z"/>
<path class="c29" d="M806.2 637.6l6.1 1.2-4.7-14.7-6.1-4.5z"/>
<path class="c31" d="M800.1 638.3l6.1-.7-4.7-18-6.1-1.7z"/>
<path class="c32" d="M793.9 641.4l6.2-3.1-4.7-20.4-6.1 2.1zM787.8 647.1l6.1-5.7-4.6-21.4-6.2 6z"/>
<path class="c30" d="M781.7 655l6.1-7.9-4.7-21.1-6.1 9.6z"/>
<path class="c27" d="M775.6 664.1l6.1-9.1-4.7-19.4-6.1 11.9z"/>
<path class="c23" d="M769.5 673.5l6.1-9.4-4.7-16.6-6.1 12.6z"/>
<path class="c19" d="M763.4 682.1l6.1-8.6-4.7-13.4-6.1 12z"/>
<path class="c16" d="M647.4 693.2l6.1 1.4-4.7-.3-6.1-3.4z"/>
<path class="c18" d="M641.3 690.1l6.1 3.1-4.7-2.3-6.1-4.7z"/>
<path class="c20" d="M635.2 685.1l6.1 5-4.7-3.9-6.1-6.2z"/>
<path class="c68" d="M586.3 563.6l6.1 21-4.7-16.4-6.1-26.7z"/>
<path class="c78" d="M580.2 541l6.1 22.6-4.7-22.1-6.1-31.9z"/>
<path class="c91" d="M574.1 519.9l6.1 21.1-4.7-31.4-6.1-31.7z"/>
<path class="c103" d="M568 507.3l6.1 12.6-4.7-42-6.1-18.4z"/>
<path class="c111" d="M561.9 508.2l6.1-.9-4.7-47.8-6.1 4z"/>
<path class="c110" d="M555.8 519.9l6.1-11.7-4.7-44.7-6.1 21.1z"/>
<path class="c102" d="M549.7 536.1l6.1-16.2-4.7-35.3-6.1 25.7z"/>
<path class="c93" d="M543.6 552.8l6.1-16.7-4.7-25.8-6.1 22.9z"/>
<path class="c85" d="M537.5 569.9l6.1-17.1-4.7-19.6-6.1 20.4z"/>
<path class="c78" d="M531.3 588.3l6.2-18.4-4.7-16.3-6.1 20.4z"/>
<path class="c71" d="M525.2 607.9l6.1-19.6-4.6-14.3-6.2 21.5z"/>
<path class="c63" d="M519.1 628.3l6.1-20.4-4.7-12.4-6.1 22.1z"/>
<path class="c55" d="M513 648.6l6.1-20.3-4.7-10.7-6.1 21.9z"/>
<path class="c48" d="M506.9 668.1l6.1-19.5-4.7-9.1-6.1 21z"/>
<path class="c40" d="M500.8 686.2l6.1-18.1-4.7-7.6-6.1 19.5z"/>
<path class="c34" d="M494.7 702.5l6.1-16.3-4.7-6.2-6.1 17.5z"/>
<path class="c28" d="M488.6 716.8l6.1-14.3-4.7-5-6.1 15.3z"/>
<path class="c22" d="M482.5 729.2l6.1-12.4-4.7-4-6.1 13.2z"/>
<path class="c18" d="M476.4 739.7l6.1-10.5-4.7-3.2-6.1 11.2z"/>
<path class="c14" d="M470.3 748.6l6.1-8.9-4.7-2.5-6.1 9.3z"/>
<path class="c11" d="M464.2 755.9l6.1-7.3-4.7-2.1-6.1 7.7z"/>
<path class="c9" d="M458.1 762.1l6.1-6.2-4.7-1.7-6.1 6.3z"/>
<path class="c7" d="M452 767.3l6.1-5.2-4.7-1.6-6.1 5.3z"/>
<path class="c5" d="M445.8 771.6l6.2-4.3-4.7-1.5-6.1 4.5z"/>
<path class="c4" d="M439.7 775.4l6.1-3.8-4.6-1.3-6.2 3.7z"/>
<path class="c3" d="M433.6 778.7l6.1-3.3-4.7-1.4-6.1 3.3zM427.5 781.6l6.1-2.9-4.7-1.4-6.1 2.9z"/>
<path class="c2" d="M421.4 784.2l6.1-2.6-4.7-1.4-6.1 2.6zM415.3 786.6l6.1-2.4-4.7-1.4-6.1 2.3z"/>
<path class="c1" d="M409.2 788.8l6.1-2.2-4.7-1.5-6.1 2.2zM403.1 790.9l6.1-2.1-4.7-1.5-6.1 2.1zM397 792.8l6.1-1.9-4.7-1.5-6.1 1.9z"/>
<path class="c0" d="M390.9 794.7l6.1-1.9-4.7-1.5-6.1 1.8zM384.8 796.4l6.1-1.7-4.7-1.6-6.1 1.7zM378.7 798.1l6.1-1.7-4.7-1.6-6.1 1.6zM372.6 799.7l6.1-1.6-4.7-1.7-6.1 1.6zM366.5 801.3l6.1-1.6-4.7-1.7-6.1 1.6z"/>
<path class="c19" d="M835.3 647.9l6.1-.2-4.7 .3-6.1-1.9z"/>
<path class="c20" d="M829.2 648l6.1-.1-4.7-1.8-6.1-2.4z"/>
<path class="c21" d="M823.1 648.3l6.1-.3-4.7-4.3-6.1-2.6z"/>
<path class="c23" d="M817 649l6.1-.7-4.7-7.2-6.1-2.3z"/>
<path class="c24" d="M810.9 650.5l6.1-1.5-4.7-10.2-6.1-1.2z"/>
<path class="c25" d="M804.7 653.1l6.2-2.6-4.7-12.9-6.1 .7z"/>
<path class="c26" d="M798.6 657.2l6.1-4.1-4.6-14.8-6.2 3.1z"/>
<path class="c25" d="M792.5 662.8l6.1-5.6-4.7-15.8-6.1 5.7z"/>
<path class="c23" d="M786.4 669.4l6.1-6.6-4.7-15.7-6.1 7.9z"/>
<path class="c21" d="M780.3 676.6l6.1-7.2-4.7-14.4-6.1 9.1z"/>
<path class="c18" d="M774.2 683.6l6.1-7-4.7-12.5-6.1 9.4z"/>
<path class="c15" d="M768.1 689.6l6.1-6-4.7-10.1-6.1 8.6z"/>
<path class="c16" d="M652.1 694.2l6.1-.4-4.7 .8-6.1-1.4z"/>
<path class="c19" d="M639.9 689.4l6.1 3.5-4.7-2.8-6.1-5z"/>
<path class="c21" d="M633.7 683.6l6.2 5.8-4.7-4.3-6.1-7.4z"/>
<path class="c40" d="M609.3 635.8l6.1 15-4.7-11.2-6.1-17.2z"/>
<path class="c47" d="M603.2 619.8l6.1 16-4.7-13.4-6.1-18.4z"/>
<path class="c55" d="M597.1 603.5l6.1 16.3-4.7-15.8-6.1-19.4z"/>
<path class="c63" d="M591 587l6.1 16.5-4.7-18.9-6.1-21z"/>
<path class="c71" d="M584.9 571.2l6.1 15.8-4.7-23.4-6.1-22.6z"/>
<path class="c80" d="M578.8 557.5l6.1 13.7-4.7-30.2-6.1-21.1z"/>
<path class="c88" d="M572.7 549.1l6.1 8.4-4.7-37.6-6.1-12.6z"/>
<path class="c93" d="M566.6 548.1l6.1 1-4.7-41.8-6.1 .9z"/>
<path class="c94" d="M560.5 553.6l6.1-5.5-4.7-39.9-6.1 11.7z"/>
<path class="c90" d="M554.4 563.3l6.1-9.7-4.7-33.7-6.1 16.2z"/>
<path class="c84" d="M548.3 575.4l6.1-12.1-4.7-27.2-6.1 16.7z"/>
<path class="c78" d="M542.1 589.6l6.2-14.2-4.7-22.6-6.1 17.1z"/>
<path class="c72" d="M536 605.7l6.1-16.1-4.6-19.7-6.2 18.4z"/>
<path class="c66" d="M529.9 623.2l6.1-17.5-4.7-17.4-6.1 19.6z"/>
<path class="c59" d="M523.8 641.5l6.1-18.3-4.7-15.3-6.1 20.4z"/>
<path class="c52" d="M517.7 659.8l6.1-18.3-4.7-13.2-6.1 20.3z"/>
<path class="c45" d="M511.6 677.4l6.1-17.6-4.7-11.2-6.1 19.5z"/>
<path class="c38" d="M505.5 693.7l6.1-16.3-4.7-9.3-6.1 18.1z"/>
<path class="c32" d="M499.4 708.5l6.1-14.8-4.7-7.5-6.1 16.3z"/>
<path class="c26" d="M493.3 721.7l6.1-13.2-4.7-6-6.1 14.3z"/>
<path class="c21" d="M487.2 733l6.1-11.3-4.7-4.9-6.1 12.4z"/>
<path class="c17" d="M481.1 742.8l6.1-9.8-4.7-3.8-6.1 10.5z"/>
<path class="c14" d="M475 751l6.1-8.2-4.7-3.1-6.1 8.9z"/>
<path class="c11" d="M468.9 758l6.1-7-4.7-2.4-6.1 7.3z"/>
<path class="c9" d="M462.8 763.9l6.1-5.9-4.7-2.1-6.1 6.2z"/>
<path class="c7" d="M456.6 768.9l6.2-5-4.7-1.8-6.1 5.2z"/>
<path class="c6" d="M450.5 773.1l6.1-4.2-4.6-1.6-6.2 4.3z"/>
<path class="c4" d="M444.4 776.8l6.1-3.7-4.7-1.5-6.1 3.8zM438.3 780.1l6.1-3.3-4.7-1.4-6.1 3.3z"/>
<path class="c3" d="M432.2 783l6.1-2.9-4.7-1.4-6.1 2.9z"/>
<path class="c2" d="M426.1 785.7l6.1-2.7-4.7-1.4-6.1 2.6zM420 788.1l6.1-2.4-4.7-1.5-6.1 2.4z"/>
<path class="c1" d="M413.9 790.4l6.1-2.3-4.7-1.5-6.1 2.2zM407.8 792.5l6.1-2.1-4.7-1.6-6.1 2.1zM401.7 794.4l6.1-1.9-4.7-1.6-6.1 1.9z"/>
<path class="c0" d="M395.6 796.3l6.1-1.9-4.7-1.6-6.1 1.9zM389.5 798.1l6.1-1.8-4.7-1.6-6.1 1.7zM383.4 799.8l6.1-1.7-4.7-1.7-6.1 1.7zM377.3 801.4l6.1-1.6-4.7-1.7-6.1 1.6zM371.1 803l6.2-1.6-4.7-1.7-6.1 1.6z"/>
<path class="c20" d="M833.9 649.6l6.1-2.1-4.7 .4-6.1 .1z"/>
<path class="c21" d="M827.8 652.1l6.1-2.5-4.7-1.6-6.1 .3zM821.7 655l6.1-2.9-4.7-3.8-6.1 .7zM815.5 658.6l6.2-3.6-4.7-6-6.1 1.5zM809.4 662.8l6.1-4.2-4.6-8.1-6.2 2.6zM803.3 667.7l6.1-4.9-4.7-9.7-6.1 4.1z"/>
<path class="c20" d="M797.2 673.3l6.1-5.6-4.7-10.5-6.1 5.6z"/>
<path class="c18" d="M791.1 679.3l6.1-6-4.7-10.5-6.1 6.6z"/>
<path class="c16" d="M785 685.2l6.1-5.9-4.7-9.9-6.1 7.2z"/>
<path class="c14" d="M778.9 690.5l6.1-5.3-4.7-8.6-6.1 7z"/>
<path class="c12" d="M772.8 694.9l6.1-4.4-4.7-6.9-6.1 6z"/>
<path class="c17" d="M662.9 692.7l6.1-3.3-4.7 2.7-6.1 1.7zM656.8 694.7l6.1-2-4.7 1.1-6.1 .4z"/>
<path class="c18" d="M650.7 695.1l6.1-.4-4.7-.5-6.1-1.3z"/>
<path class="c19" d="M644.5 693.5l6.2 1.6-4.7-2.2-6.1-3.5z"/>
<path class="c20" d="M638.4 689.5l6.1 4-4.6-4.1-6.2-5.8z"/>
<path class="c23" d="M632.3 683l6.1 6.5-4.7-5.9-6.1-8.5z"/>
<path class="c27" d="M626.2 674.1l6.1 8.9-4.7-7.9-6.1-11z"/>
<path class="c31" d="M620.1 663.1l6.1 11-4.7-10-6.1-13.3z"/>
<path class="c37" d="M614 650.6l6.1 12.5-4.7-12.3-6.1-15z"/>
<path class="c43" d="M607.9 637.1l6.1 13.5-4.7-14.8-6.1-16z"/>
<path class="c49" d="M601.8 623.4l6.1 13.7-4.7-17.3-6.1-16.3z"/>
<path class="c56" d="M595.7 610.2l6.1 13.2-4.7-19.9-6.1-16.5z"/>
<path class="c63" d="M589.6 598.3l6.1 11.9-4.7-23.2-6.1-15.8z"/>
<path class="c69" d="M583.5 588.7l6.1 9.6-4.7-27.1-6.1-13.7z"/>
<path class="c75" d="M577.4 582.6l6.1 6.1-4.7-31.2-6.1-8.4z"/>
<path class="c78" d="M571.3 580.9l6.1 1.7-4.7-33.5-6.1-1z"/>
<path class="c79" d="M565.2 583.6l6.1-2.7-4.7-32.8-6.1 5.5z"/>
<path class="c78" d="M559.1 589.9l6.1-6.3-4.7-30-6.1 9.7z"/>
<path class="c75" d="M552.9 599.2l6.2-9.3-4.7-26.6-6.1 12.1z"/>
<path class="c71" d="M546.8 611l6.1-11.8-4.6-23.8-6.2 14.2z"/>
<path class="c66" d="M540.7 624.9l6.1-13.9-4.7-21.4-6.1 16.1z"/>
<path class="c60" d="M534.6 640.2l6.1-15.3-4.7-19.2-6.1 17.5z"/>
<path class="c54" d="M528.5 656.2l6.1-16-4.7-17-6.1 18.3z"/>
<path class="c48" d="M522.4 672.2l6.1-16-4.7-14.7-6.1 18.3z"/>
<path class="c41" d="M516.3 687.7l6.1-15.5-4.7-12.4-6.1 17.6z"/>
<path class="c35" d="M510.2 702.2l6.1-14.5-4.7-10.3-6.1 16.3z"/>
<path class="c30" d="M504.1 715.3l6.1-13.1-4.7-8.5-6.1 14.8z"/>
<path class="c25" d="M498 727.1l6.1-11.8-4.7-6.8-6.1 13.2z"/>
<path class="c20" d="M491.9 737.3l6.1-10.2-4.7-5.4-6.1 11.3z"/>
<path class="c17" d="M485.8 746.2l6.1-8.9-4.7-4.3-6.1 9.8z"/>
<path class="c13" d="M479.7 753.8l6.1-7.6-4.7-3.4-6.1 8.2z"/>
<path class="c11" d="M473.6 760.3l6.1-6.5-4.7-2.8-6.1 7z"/>
<path class="c9" d="M467.4 765.8l6.2-5.5-4.7-2.3-6.1 5.9z"/>
<path class="c7" d="M461.3 770.6l6.1-4.8-4.6-1.9-6.2 5z"/>
<path class="c6" d="M455.2 774.7l6.1-4.1-4.7-1.7-6.1 4.2z"/>
<path class="c5" d="M449.1 778.4l6.1-3.7-4.7-1.6-6.1 3.7z"/>
<path class="c4" d="M443 781.6l6.1-3.2-4.7-1.6-6.1 3.3z"/>
<path class="c3" d="M436.9 784.5l6.1-2.9-4.7-1.5-6.1 2.9z"/>
<path class="c2" d="M430.8 787.2l6.1-2.7-4.7-1.5-6.1 2.7zM424.7 789.7l6.1-2.5-4.7-1.5-6.1 2.4z"/>
<path class="c1" d="M418.6 791.9l6.1-2.2-4.7-1.6-6.1 2.3zM412.5 794.1l6.1-2.2-4.7-1.5-6.1 2.1zM406.4 796.1l6.1-2-4.7-1.6-6.1 1.9zM400.3 797.9l6.1-1.8-4.7-1.7-6.1 1.9z"/>
<path class="c0" d="M394.2 799.7l6.1-1.8-4.7-1.6-6.1 1.8zM388.1 801.4l6.1-1.7-4.7-1.6-6.1 1.7zM381.9 803.1l6.2-1.7-4.7-1.6-6.1 1.6zM375.8 804.7l6.1-1.6-4.6-1.7-6.2 1.6zM369.7 806.2l6.1-1.5-4.7-1.7-6.1 1.5z"/>
<path class="c21" d="M838.6 648.9l6.1-3.5-4.7 2.1-6.1 2.1zM832.4 653.1l6.2-4.2-4.7 .7-6.1 2.5z"/>
<path class="c20" d="M826.3 657.7l6.1-4.6-4.6-1-6.1 2.9zM820.2 662.8l6.1-5.1-4.6-2.7-6.2 3.6z"/>
<path class="c19" d="M814.1 668.2l6.1-5.4-4.7-4.2-6.1 4.2z"/>
<path class="c18" d="M808 673.9l6.1-5.7-4.7-5.4-6.1 4.9z"/>
<path class="c16" d="M801.9 679.8l6.1-5.9-4.7-6.2-6.1 5.6z"/>
<path class="c15" d="M795.8 685.4l6.1-5.6-4.7-6.5-6.1 6z"/>
<path class="c13" d="M789.7 690.7l6.1-5.3-4.7-6.1-6.1 5.9z"/>
<path class="c11" d="M783.6 695l6.1-4.3-4.7-5.5-6.1 5.3z"/>
<path class="c10" d="M777.5 698.3l6.1-3.3-4.7-4.5-6.1 4.4z"/>
<path class="c20" d="M673.7 686.7l6.1-5-4.7 3.8-6.1 3.9z"/>
<path class="c19" d="M667.6 691.4l6.1-4.7-4.7 2.7-6.1 3.3z"/>
<path class="c18" d="M661.5 695.1l6.1-3.7-4.7 1.3-6.1 2zM655.3 697.2l6.2-2.1-4.7-.4-6.1 .4zM649.2 697.4l6.1-.2-4.6-2.1-6.2-1.6z"/>
<path class="c20" d="M643.1 695.3l6.1 2.1-4.7-3.9-6.1-4z"/>
<path class="c22" d="M637 691l6.1 4.3-4.7-5.8-6.1-6.5z"/>
<path class="c24" d="M630.9 684.4l6.1 6.6-4.7-8-6.1-8.9z"/>
<path class="c28" d="M624.8 675.8l6.1 8.6-4.7-10.3-6.1-11z"/>
<path class="c33" d="M618.7 665.7l6.1 10.1-4.7-12.7-6.1-12.5z"/>
<path class="c38" d="M612.6 654.7l6.1 11-4.7-15.1-6.1-13.5z"/>
<path class="c44" d="M606.5 643.5l6.1 11.2-4.7-17.6-6.1-13.7z"/>
<path class="c49" d="M600.4 632.8l6.1 10.7-4.7-20.1-6.1-13.2z"/>
<path class="c55" d="M594.3 623.4l6.1 9.4-4.7-22.6-6.1-11.9z"/>
<path class="c60" d="M588.2 615.9l6.1 7.5-4.7-25.1-6.1-9.6z"/>
<path class="c64" d="M582.1 611.1l6.1 4.8-4.7-27.2-6.1-6.1z"/>
<path class="c67" d="M576 609.4l6.1 1.7-4.7-28.5-6.1-1.7z"/>
<path class="c68" d="M569.8 611l6.2-1.6-4.7-28.5-6.1 2.7z"/>
<path class="c67" d="M563.7 615.7l6.1-4.7-4.6-27.4-6.1 6.3z"/>
<path class="c65" d="M557.6 623.2l6.1-7.5-4.6-25.8-6.2 9.3z"/>
<path class="c62" d="M551.5 633.1l6.1-9.9-4.7-24-6.1 11.8z"/>
<path class="c58" d="M545.4 644.8l6.1-11.7-4.7-22.1-6.1 13.9z"/>
<path class="c54" d="M539.3 657.8l6.1-13-4.7-19.9-6.1 15.3z"/>
<path class="c48" d="M533.2 671.4l6.1-13.6-4.7-17.6-6.1 16z"/>
<path class="c43" d="M527.1 685.1l6.1-13.7-4.7-15.2-6.1 16z"/>
<path class="c37" d="M521 698.4l6.1-13.3-4.7-12.9-6.1 15.5z"/>
<path class="c32" d="M514.9 711l6.1-12.6-4.7-10.7-6.1 14.5z"/>
<path class="c27" d="M508.8 722.4l6.1-11.4-4.7-8.8-6.1 13.1z"/>
<path class="c23" d="M502.7 732.8l6.1-10.4-4.7-7.1-6.1 11.8z"/>
<path class="c19" d="M496.6 741.9l6.1-9.1-4.7-5.7-6.1 10.2z"/>
<path class="c16" d="M490.5 749.8l6.1-7.9-4.7-4.6-6.1 8.9z"/>
<path class="c13" d="M484.4 756.7l6.1-6.9-4.7-3.6-6.1 7.6z"/>
<path class="c10" d="M478.2 762.7l6.2-6-4.7-2.9-6.1 6.5z"/>
<path class="c8" d="M472.1 767.9l6.1-5.2-4.6-2.4-6.2 5.5z"/>
<path class="c7" d="M466 772.4l6.1-4.5-4.7-2.1-6.1 4.8z"/>
<path class="c6" d="M459.9 776.4l6.1-4-4.7-1.8-6.1 4.1z"/>
<path class="c5" d="M453.8 780l6.1-3.6-4.7-1.7-6.1 3.7z"/>
<path class="c4" d="M447.7 783.2l6.1-3.2-4.7-1.6-6.1 3.2z"/>
<path class="c3" d="M441.6 786.1l6.1-2.9-4.7-1.6-6.1 2.9z"/>
<path class="c2" d="M435.5 788.8l6.1-2.7-4.7-1.6-6.1 2.7zM429.4 791.2l6.1-2.4-4.7-1.6-6.1 2.5z"/>
<path class="c1" d="M423.3 793.5l6.1-2.3-4.7-1.5-6.1 2.2zM417.2 795.7l6.1-2.2-4.7-1.6-6.1 2.2zM411.1 797.7l6.1-2-4.7-1.6-6.1 2zM405 799.6l6.1-1.9-4.7-1.6-6.1 1.8z"/>
<path class="c0" d="M398.9 801.4l6.1-1.8-4.7-1.7-6.1 1.8zM392.7 803.1l6.2-1.7-4.7-1.7-6.1 1.7zM386.6 804.8l6.1-1.7-4.6-1.7-6.2 1.7zM380.5 806.4l6.1-1.6-4.7-1.7-6.1 1.6zM374.4 807.9l6.1-1.5-4.7-1.7-6.1 1.5z"/>
<path class="c22" d="M843.2 646.8l6.2-4.6-4.7 3.2-6.1 3.5z"/>
<path class="c21" d="M837.1 652.1l6.1-5.3-4.6 2.1-6.2 4.2z"/>
<path class="c20" d="M831 658l6.1-5.9-4.7 1-6.1 4.6z"/>
<path class="c19" d="M824.9 664.3l6.1-6.3-4.7-.3-6.1 5.1z"/>
<path class="c18" d="M818.8 670.7l6.1-6.4-4.7-1.5-6.1 5.4z"/>
<path class="c16" d="M812.7 677.1l6.1-6.4-4.7-2.5-6.1 5.7z"/>
<path class="c15" d="M806.6 683.3l6.1-6.2-4.7-3.2-6.1 5.9z"/>
<path class="c13" d="M800.5 689l6.1-5.7-4.7-3.5-6.1 5.6z"/>
<path class="c11" d="M794.4 693.9l6.1-4.9-4.7-3.6-6.1 5.3z"/>
<path class="c10" d="M788.3 697.8l6.1-3.9-4.7-3.2-6.1 4.3z"/>
<path class="c9" d="M782.2 700.4l6.1-2.6-4.7-2.8-6.1 3.3z"/>
<path class="c23" d="M684.5 678.2l6.1-5.7-4.7 4.3-6.1 4.9z"/>
<path class="c22" d="M678.4 684.4l6.1-6.2-4.7 3.5-6.1 5z"/>
<path class="c21" d="M672.3 690.3l6.1-5.9-4.7 2.3-6.1 4.7z"/>
<path class="c20" d="M666.1 695.5l6.2-5.2-4.7 1.1-6.1 3.7z"/>
<path class="c19" d="M660 699.2l6.1-3.7-4.6-.4-6.2 2.1z"/>
<path class="c18" d="M653.9 701.2l6.1-2-4.7-2-6.1 .2z"/>
<path class="c19" d="M647.8 701l6.1 .2-4.7-3.8-6.1-2.1z"/>
<path class="c20" d="M641.7 698.7l6.1 2.3-4.7-5.7-6.1-4.3z"/>
<path class="c22" d="M635.6 694.4l6.1 4.3-4.7-7.7-6.1-6.6z"/>
<path class="c25" d="M629.5 688.1l6.1 6.3-4.7-10-6.1-8.6z"/>
<path class="c29" d="M623.4 680.5l6.1 7.6-4.7-12.3-6.1-10.1z"/>
<path class="c33" d="M617.3 671.9l6.1 8.6-4.7-14.8-6.1-11z"/>
<path class="c38" d="M611.2 663l6.1 8.9-4.7-17.2-6.1-11.2z"/>
<path class="c42" d="M605.1 654.4l6.1 8.6-4.7-19.5-6.1-10.7z"/>
<path class="c47" d="M599 646.9l6.1 7.5-4.7-21.6-6.1-9.4z"/>
<path class="c51" d="M592.9 640.9l6.1 6-4.7-23.5-6.1-7.5z"/>
<path class="c54" d="M586.8 637l6.1 3.9-4.7-25-6.1-4.8z"/>
<path class="c57" d="M580.6 635.5l6.2 1.5-4.7-25.9-6.1-1.7z"/>
<path class="c58" d="M574.5 636.6l6.1-1.1-4.6-26.1-6.2 1.6zM568.4 640.3l6.1-3.7-4.7-25.6-6.1 4.7z"/>
<path class="c56" d="M562.3 646.4l6.1-6.1-4.7-24.6-6.1 7.5z"/>
<path class="c54" d="M556.2 654.4l6.1-8-4.7-23.2-6.1 9.9z"/>
<path class="c51" d="M550.1 664.1l6.1-9.7-4.7-21.3-6.1 11.7z"/>
<path class="c47" d="M544 674.9l6.1-10.8-4.7-19.3-6.1 13z"/>
<path class="c43" d="M537.9 686.2l6.1-11.3-4.7-17.1-6.1 13.6z"/>
<path class="c38" d="M531.8 697.7l6.1-11.5-4.7-14.8-6.1 13.7z"/>
<path class="c33" d="M525.7 709l6.1-11.3-4.7-12.6-6.1 13.3z"/>
<path class="c29" d="M519.6 719.6l6.1-10.6-4.7-10.6-6.1 12.6z"/>
<path class="c25" d="M513.5 729.5l6.1-9.9-4.7-8.6-6.1 11.4z"/>
<path class="c21" d="M507.4 738.4l6.1-8.9-4.7-7.1-6.1 10.4z"/>
<path class="c17" d="M501.3 746.4l6.1-8-4.7-5.6-6.1 9.1z"/>
<path class="c15" d="M495.2 753.5l6.1-7.1-4.7-4.5-6.1 7.9z"/>
<path class="c12" d="M489 759.7l6.2-6.2-4.7-3.7-6.1 6.9z"/>
<path class="c10" d="M482.9 765.2l6.1-5.5-4.6-3-6.2 6z"/>
<path class="c8" d="M476.8 770.1l6.1-4.9-4.7-2.5-6.1 5.2z"/>
<path class="c7" d="M470.7 774.4l6.1-4.3-4.7-2.2-6.1 4.5z"/>
<path class="c6" d="M464.6 778.2l6.1-3.8-4.7-2-6.1 4z"/>
<path class="c5" d="M458.5 781.7l6.1-3.5-4.7-1.8-6.1 3.6z"/>
<path class="c4" d="M452.4 784.8l6.1-3.1-4.7-1.7-6.1 3.2z"/>
<path class="c3" d="M446.3 787.7l6.1-2.9-4.7-1.6-6.1 2.9z"/>
<path class="c2" d="M440.2 790.4l6.1-2.7-4.7-1.6-6.1 2.7zM434.1 792.9l6.1-2.5-4.7-1.6-6.1 2.4zM428 795.2l6.1-2.3-4.7-1.7-6.1 2.3z"/>
<path class="c1" d="M421.9 797.3l6.1-2.1-4.7-1.7-6.1 2.2zM415.8 799.4l6.1-2.1-4.7-1.6-6.1 2zM409.7 801.3l6.1-1.9-4.7-1.7-6.1 1.9z"/>
<path class="c0" d="M403.5 803.1l6.2-1.8-4.7-1.7-6.1 1.8zM397.4 804.8l6.1-1.7-4.6-1.7-6.2 1.7zM391.3 806.5l6.1-1.7-4.7-1.7-6.1 1.7zM385.2 808.1l6.1-1.6-4.7-1.7-6.1 1.6zM379.1 809.6l6.1-1.5-4.7-1.7-6.1 1.5z"/>
<path class="c24" d="M847.9 643.9l6.1-5.3-4.6 3.6-6.2 4.6z"/>
<path class="c23" d="M841.8 650.2l6.1-6.3-4.7 2.9-6.1 5.3z"/>
<path class="c21" d="M835.7 657l6.1-6.8-4.7 1.9-6.1 5.9z"/>
<path class="c20" d="M829.6 664.1l6.1-7.1-4.7 1-6.1 6.3z"/>
<path class="c18" d="M823.5 671.3l6.1-7.2-4.7 .2-6.1 6.4z"/>
<path class="c16" d="M817.4 678.4l6.1-7.1-4.7-.6-6.1 6.4z"/>
<path class="c14" d="M811.3 684.9l6.1-6.5-4.7-1.3-6.1 6.2z"/>
<path class="c12" d="M805.2 690.8l6.1-5.9-4.7-1.6-6.1 5.7z"/>
<path class="c11" d="M799.1 695.7l6.1-4.9-4.7-1.8-6.1 4.9z"/>
<path class="c9" d="M793 699.4l6.1-3.7-4.7-1.8-6.1 3.9z"/>
<path class="c8" d="M786.9 701.7l6.1-2.3-4.7-1.6-6.1 2.6z"/>
<path class="c26" d="M689.2 675.5l6.1-6.6-4.7 3.6-6.1 5.7z"/>
<path class="c24" d="M683.1 682.6l6.1-7.1-4.7 2.7-6.1 6.2z"/>
<path class="c22" d="M676.9 689.7l6.2-7.1-4.7 1.8-6.1 5.9z"/>
<path class="c21" d="M670.8 696.1l6.1-6.4-4.6 .6-6.2 5.2z"/>
<path class="c19" d="M664.7 701.3l6.1-5.2-4.7-.6-6.1 3.7z"/>
<path class="c18" d="M658.6 704.8l6.1-3.5-4.7-2.1-6.1 2zM652.5 706.5l6.1-1.7-4.7-3.6-6.1-.2z"/>
<path class="c19" d="M646.4 706.1l6.1 .4-4.7-5.5-6.1-2.3z"/>
<path class="c20" d="M640.3 703.7l6.1 2.4-4.7-7.4-6.1-4.3z"/>
<path class="c22" d="M634.2 699.7l6.1 4-4.7-9.3-6.1-6.3z"/>
<path class="c25" d="M628.1 694.2l6.1 5.5-4.7-11.6-6.1-7.6z"/>
<path class="c28" d="M622 687.8l6.1 6.4-4.7-13.7-6.1-8.6z"/>
<path class="c32" d="M615.9 681l6.1 6.8-4.7-15.9-6.1-8.9z"/>
<path class="c36" d="M609.8 674.3l6.1 6.7-4.7-18-6.1-8.6z"/>
<path class="c39" d="M603.7 668.4l6.1 5.9-4.7-19.9-6.1-7.5z"/>
<path class="c43" d="M597.6 663.6l6.1 4.8-4.7-21.5-6.1-6z"/>
<path class="c46" d="M591.4 660.5l6.2 3.1-4.7-22.7-6.1-3.9z"/>
<path class="c48" d="M585.3 659.3l6.1 1.2-4.6-23.5-6.2-1.5z"/>
<path class="c49" d="M579.2 660.1l6.1-.8-4.7-23.8-6.1 1.1zM573.1 663l6.1-2.9-4.7-23.5-6.1 3.7z"/>
<path class="c48" d="M567 667.8l6.1-4.8-4.7-22.7-6.1 6.1z"/>
<path class="c46" d="M560.9 674.2l6.1-6.4-4.7-21.4-6.1 8z"/>
<path class="c43" d="M554.8 682l6.1-7.8-4.7-19.8-6.1 9.7z"/>
<path class="c40" d="M548.7 690.7l6.1-8.7-4.7-17.9-6.1 10.8z"/>
<path class="c37" d="M542.6 700l6.1-9.3-4.7-15.8-6.1 11.3z"/>
<path class="c33" d="M536.5 709.5l6.1-9.5-4.7-13.8-6.1 11.5z"/>
<path class="c29" d="M530.4 718.8l6.1-9.3-4.7-11.8-6.1 11.3z"/>
<path class="c26" d="M524.3 727.7l6.1-8.9-4.7-9.8-6.1 10.6z"/>
<path class="c22" d="M518.2 736.1l6.1-8.4-4.7-8.1-6.1 9.9z"/>
<path class="c19" d="M512.1 743.8l6.1-7.7-4.7-6.6-6.1 8.9z"/>
<path class="c16" d="M505.9 750.8l6.2-7-4.7-5.4-6.1 8z"/>
<path class="c13" d="M499.8 757.1l6.1-6.3-4.6-4.4-6.1 7.1z"/>
<path class="c11" d="M493.7 762.7l6.1-5.6-4.6-3.6-6.2 6.2z"/>
<path class="c9" d="M487.6 767.8l6.1-5.1-4.7-3-6.1 5.5z"/>
<path class="c8" d="M481.5 772.3l6.1-4.5-4.7-2.6-6.1 4.9z"/>
<path class="c7" d="M475.4 776.4l6.1-4.1-4.7-2.2-6.1 4.3z"/>
<path class="c5" d="M469.3 780.1l6.1-3.7-4.7-2-6.1 3.8zM463.2 783.4l6.1-3.3-4.7-1.9-6.1 3.5z"/>
<path class="c4" d="M457.1 786.6l6.1-3.2-4.7-1.7-6.1 3.1z"/>
<path class="c3" d="M451 789.4l6.1-2.8-4.7-1.8-6.1 2.9z"/>
<path class="c2" d="M444.9 792.1l6.1-2.7-4.7-1.7-6.1 2.7zM438.8 794.5l6.1-2.4-4.7-1.7-6.1 2.5zM432.7 796.9l6.1-2.4-4.7-1.6-6.1 2.3z"/>
<path class="c1" d="M426.6 799l6.1-2.1-4.7-1.7-6.1 2.1zM420.5 801.1l6.1-2.1-4.7-1.7-6.1 2.1zM414.3 803l6.2-1.9-4.7-1.7-6.1 1.9z"/>
<path class="c0" d="M408.2 804.8l6.1-1.8-4.6-1.7-6.2 1.8zM402.1 806.6l6.1-1.8-4.7-1.7-6.1 1.7zM396 808.2l6.1-1.6-4.7-1.8-6.1 1.7zM389.9 809.8l6.1-1.6-4.7-1.7-6.1 1.6zM383.8 811.4l6.1-1.6-4.7-1.7-6.1 1.5z"/>
<path class="c1" d="M974.8 680.1l6.1 .4-4.7-1.4-6.1-.3z"/>
<path class="c26" d="M852.6 641l6.1-6-4.7 3.6-6.1 5.3z"/>
<path class="c25" d="M846.5 647.9l6.1-6.9-4.7 2.9-6.1 6.3z"/>
<path class="c23" d="M840.4 655.4l6.1-7.5-4.7 2.3-6.1 6.8z"/>
<path class="c21" d="M834.3 663.3l6.1-7.9-4.7 1.6-6.1 7.1z"/>
<path class="c19" d="M828.2 671.1l6.1-7.8-4.7 .8-6.1 7.2z"/>
<path class="c16" d="M822.1 678.7l6.1-7.6-4.7 .2-6.1 7.1z"/>
<path class="c14" d="M816 685.7l6.1-7-4.7-.3-6.1 6.5z"/>
<path class="c12" d="M809.9 691.8l6.1-6.1-4.7-.8-6.1 5.9z"/>
<path class="c11" d="M803.8 696.9l6.1-5.1-4.7-1-6.1 4.9z"/>
<path class="c28" d="M693.9 673.7l6.1-7.2-4.7 2.4-6.1 6.6z"/>
<path class="c26" d="M687.7 681.6l6.2-7.9-4.7 1.8-6.1 7.1z"/>
<path class="c24" d="M681.6 689.6l6.1-8-4.6 1-6.2 7.1z"/>
<path class="c21" d="M675.5 697.1l6.1-7.5-4.7 .1-6.1 6.4z"/>
<path class="c20" d="M669.4 703.5l6.1-6.4-4.7-1-6.1 5.2z"/>
<path class="c18" d="M663.3 708.5l6.1-5-4.7-2.2-6.1 3.5z"/>
<path class="c17" d="M657.2 711.6l6.1-3.1-4.7-3.7-6.1 1.7zM651.1 712.8l6.1-1.2-4.7-5.1-6.1-.4z"/>
<path class="c18" d="M645 712.2l6.1 .6-4.7-6.7-6.1-2.4z"/>
<path class="c19" d="M638.9 710l6.1 2.2-4.7-8.5-6.1-4z"/>
<path class="c21" d="M632.8 706.5l6.1 3.5-4.7-10.3-6.1-5.5z"/>
<path class="c24" d="M626.7 702l6.1 4.5-4.7-12.3-6.1-6.4z"/>
<path class="c27" d="M620.6 697l6.1 5-4.7-14.2-6.1-6.8z"/>
<path class="c30" d="M614.5 692l6.1 5-4.7-16-6.1-6.7z"/>
<path class="c33" d="M608.4 687.4l6.1 4.6-4.7-17.7-6.1-5.9z"/>
<path class="c35" d="M602.2 683.7l6.2 3.7-4.7-19-6.1-4.8z"/>
<path class="c38" d="M596.1 681.2l6.1 2.5-4.6-20.1-6.2-3.1z"/>
<path class="c39" d="M590 680.2l6.1 1-4.7-20.7-6.1-1.2z"/>
<path class="c40" d="M583.9 680.8l6.1-.6-4.7-20.9-6.1 .8zM577.8 683l6.1-2.2-4.7-20.7-6.1 2.9zM571.7 686.7l6.1-3.7-4.7-20-6.1 4.8z"/>
<path class="c39" d="M565.6 691.7l6.1-5-4.7-18.9-6.1 6.4z"/>
<path class="c37" d="M559.5 697.9l6.1-6.2-4.7-17.5-6.1 7.8z"/>
<path class="c34" d="M553.4 704.8l6.1-6.9-4.7-15.9-6.1 8.7z"/>
<path class="c31" d="M547.3 712.3l6.1-7.5-4.7-14.1-6.1 9.3z"/>
<path class="c29" d="M541.2 720l6.1-7.7-4.7-12.3-6.1 9.5z"/>
<path class="c25" d="M535.1 727.7l6.1-7.7-4.7-10.5-6.1 9.3z"/>
<path class="c22" d="M529 735.1l6.1-7.4-4.7-8.9-6.1 8.9z"/>
<path class="c20" d="M522.9 742.2l6.1-7.1-4.7-7.4-6.1 8.4z"/>
<path class="c17" d="M516.7 748.8l6.2-6.6-4.7-6.1-6.1 7.7z"/>
<path class="c15" d="M510.6 754.9l6.1-6.1-4.6-5-6.2 7z"/>
<path class="c12" d="M504.5 760.5l6.1-5.6-4.7-4.1-6.1 6.3z"/>
<path class="c11" d="M498.4 765.6l6.1-5.1-4.7-3.4-6.1 5.6z"/>
<path class="c9" d="M492.3 770.3l6.1-4.7-4.7-2.9-6.1 5.1z"/>
<path class="c8" d="M486.2 774.5l6.1-4.2-4.7-2.5-6.1 4.5z"/>
<path class="c6" d="M480.1 778.4l6.1-3.9-4.7-2.2-6.1 4.1z"/>
<path class="c5" d="M474 782l6.1-3.6-4.7-2-6.1 3.7zM467.9 785.3l6.1-3.3-4.7-1.9-6.1 3.3z"/>
<path class="c4" d="M461.8 788.3l6.1-3-4.7-1.9-6.1 3.2z"/>
<path class="c3" d="M455.7 791.2l6.1-2.9-4.7-1.7-6.1 2.8zM449.6 793.8l6.1-2.6-4.7-1.8-6.1 2.7z"/>
<path class="c2" d="M443.5 796.3l6.1-2.5-4.7-1.7-6.1 2.4zM437.4 798.6l6.1-2.3-4.7-1.8-6.1 2.4z"/>
<path class="c1" d="M431.3 800.8l6.1-2.2-4.7-1.7-6.1 2.1zM425.1 802.8l6.2-2-4.7-1.8-6.1 2.1zM419 804.7l6.1-1.9-4.6-1.7-6.2 1.9z"/>
<path class="c0" d="M412.9 806.5l6.1-1.8-4.7-1.7-6.1 1.8zM406.8 808.3l6.1-1.8-4.7-1.7-6.1 1.8zM400.7 809.9l6.1-1.6-4.7-1.7-6.1 1.6zM394.6 811.5l6.1-1.6-4.7-1.7-6.1 1.6zM388.5 813.1l6.1-1.6-4.7-1.7-6.1 1.6z"/>
<path class="c1" d="M979.5 681.4l6.1 .6-4.7-1.5-6.1-.4z"/>
<path class="c29" d="M863.4 632.1l6.1-5.1-4.7 3.3-6.1 4.7z"/>
<path class="c28" d="M857.3 638.4l6.1-6.3-4.7 2.9-6.1 6z"/>
<path class="c26" d="M851.2 645.8l6.1-7.4-4.7 2.6-6.1 6.9z"/>
<path class="c24" d="M845.1 653.9l6.1-8.1-4.7 2.1-6.1 7.5z"/>
<path class="c22" d="M839 662.3l6.1-8.4-4.7 1.5-6.1 7.9z"/>
<path class="c20" d="M832.9 670.7l6.1-8.4-4.7 1-6.1 7.8z"/>
<path class="c17" d="M826.8 678.8l6.1-8.1-4.7 .4-6.1 7.6z"/>
<path class="c15" d="M820.7 686.1l6.1-7.3-4.7-.1-6.1 7z"/>
<path class="c13" d="M814.6 692.6l6.1-6.5-4.7-.4-6.1 6.1z"/>
<path class="c11" d="M808.5 697.8l6.1-5.2-4.7-.8-6.1 5.1z"/>
<path class="c27" d="M692.4 681.5l6.1-8.5-4.6 .7-6.2 7.9z"/>
<path class="c25" d="M686.3 690.3l6.1-8.8-4.7 .1-6.1 8z"/>
<path class="c22" d="M680.2 698.6l6.1-8.3-4.7-.7-6.1 7.5z"/>
<path class="c20" d="M674.1 706l6.1-7.4-4.7-1.5-6.1 6.4z"/>
<path class="c18" d="M668 712l6.1-6-4.7-2.5-6.1 5z"/>
<path class="c17" d="M661.9 716.3l6.1-4.3-4.7-3.5-6.1 3.1z"/>
<path class="c16" d="M655.8 718.9l6.1-2.6-4.7-4.7-6.1 1.2zM649.7 719.7l6.1-.8-4.7-6.1-6.1-.6z"/>
<path class="c17" d="M643.6 719l6.1 .7-4.7-7.5-6.1-2.2z"/>
<path class="c18" d="M637.5 717.1l6.1 1.9-4.7-9-6.1-3.5z"/>
<path class="c20" d="M631.4 714.1l6.1 3-4.7-10.6-6.1-4.5z"/>
<path class="c22" d="M625.3 710.7l6.1 3.4-4.7-12.1-6.1-5z"/>
<path class="c24" d="M619.2 707l6.1 3.7-4.7-13.7-6.1-5z"/>
<path class="c27" d="M613 703.6l6.2 3.4-4.7-15-6.1-4.6z"/>
<path class="c29" d="M606.9 700.8l6.1 2.8-4.6-16.2-6.2-3.7z"/>
<path class="c31" d="M600.8 698.9l6.1 1.9-4.7-17.1-6.1-2.5z"/>
<path class="c32" d="M594.7 698l6.1 .9-4.7-17.7-6.1-1z"/>
<path class="c33" d="M588.6 698.3l6.1-.3-4.7-17.8-6.1 .6zM582.5 699.9l6.1-1.6-4.7-17.5-6.1 2.2zM576.4 702.7l6.1-2.8-4.7-16.9-6.1 3.7z"/>
<path class="c32" d="M570.3 706.6l6.1-3.9-4.7-16-6.1 5z"/>
<path class="c31" d="M564.2 711.3l6.1-4.7-4.7-14.9-6.1 6.2z"/>
<path class="c29" d="M558.1 716.8l6.1-5.5-4.7-13.4-6.1 6.9z"/>
<path class="c27" d="M552 722.8l6.1-6-4.7-12-6.1 7.5z"/>
<path class="c25" d="M545.9 729l6.1-6.2-4.7-10.5-6.1 7.7z"/>
<path class="c22" d="M539.8 735.3l6.1-6.3-4.7-9-6.1 7.7z"/>
<path class="c20" d="M533.7 741.5l6.1-6.2-4.7-7.6-6.1 7.4z"/>
<path class="c18" d="M527.5 747.6l6.2-6.1-4.7-6.4-6.1 7.1z"/>
<path class="c15" d="M521.4 753.3l6.1-5.7-4.6-5.4-6.2 6.6z"/>
<path class="c13" d="M515.3 758.7l6.1-5.4-4.7-4.5-6.1 6.1z"/>
<path class="c12" d="M509.2 763.7l6.1-5-4.7-3.8-6.1 5.6z"/>
<path class="c10" d="M503.1 768.4l6.1-4.7-4.7-3.2-6.1 5.1z"/>
<path class="c9" d="M497 772.7l6.1-4.3-4.7-2.8-6.1 4.7z"/>
<path class="c7" d="M490.9 776.7l6.1-4-4.7-2.4-6.1 4.2z"/>
<path class="c6" d="M484.8 780.5l6.1-3.8-4.7-2.2-6.1 3.9z"/>
<path class="c5" d="M478.7 783.9l6.1-3.4-4.7-2.1-6.1 3.6z"/>
<path class="c4" d="M472.6 787.1l6.1-3.2-4.7-1.9-6.1 3.3zM466.5 790.2l6.1-3.1-4.7-1.8-6.1 3z"/>
<path class="c3" d="M460.4 793l6.1-2.8-4.7-1.9-6.1 2.9z"/>
<path class="c2" d="M454.3 795.6l6.1-2.6-4.7-1.8-6.1 2.6zM448.2 798l6.1-2.4-4.7-1.8-6.1 2.5zM442 800.3l6.2-2.3-4.7-1.7-6.1 2.3z"/>
<path class="c1" d="M435.9 802.5l6.1-2.2-4.6-1.7-6.1 2.2zM429.8 804.5l6.1-2-4.6-1.7-6.2 2zM423.7 806.5l6.1-2-4.7-1.7-6.1 1.9z"/>
<path class="c0" d="M417.6 808.3l6.1-1.8-4.7-1.8-6.1 1.8zM411.5 810l6.1-1.7-4.7-1.8-6.1 1.8zM405.4 811.7l6.1-1.7-4.7-1.7-6.1 1.6zM399.3 813.3l6.1-1.6-4.7-1.8-6.1 1.6zM393.2 814.8l6.1-1.5-4.7-1.8-6.1 1.6z"/>
<path class="c1" d="M984.2 682.9l6.1 .6-4.7-1.5-6.1-.6z"/>
<path class="c2" d="M978.1 681.7l6.1 1.2-4.7-1.5-6.1-1z"/>
<path class="c32" d="M880.3 621l6.1-1.9-4.6 2.5-6.2 1.8zM874.2 624.7l6.1-3.7-4.7 2.4-6.1 3.6z"/>
<path class="c31" d="M868.1 630.1l6.1-5.4-4.7 2.3-6.1 5.1z"/>
<path class="c30" d="M862 636.8l6.1-6.7-4.7 2-6.1 6.3z"/>
<path class="c28" d="M855.9 644.5l6.1-7.7-4.7 1.6-6.1 7.4z"/>
<path class="c26" d="M849.8 653l6.1-8.5-4.7 1.3-6.1 8.1z"/>
<path class="c23" d="M843.7 661.9l6.1-8.9-4.7 .9-6.1 8.4z"/>
<path class="c21" d="M837.6 670.7l6.1-8.8-4.7 .4-6.1 8.4z"/>
<path class="c18" d="M831.5 679.1l6.1-8.4-4.7 0-6.1 8.1z"/>
<path class="c15" d="M825.4 686.7l6.1-7.6-4.7-.3-6.1 7.3z"/>
<path class="c13" d="M819.3 693.4l6.1-6.7-4.7-.6-6.1 6.5z"/>
<path class="c11" d="M813.2 698.8l6.1-5.4-4.7-.8-6.1 5.2z"/>
<path class="c25" d="M691 691.8l6.1-9.2-4.7-1.1-6.1 8.8z"/>
<path class="c23" d="M684.9 700.7l6.1-8.9-4.7-1.5-6.1 8.3z"/>
<path class="c20" d="M678.8 708.8l6.1-8.1-4.7-2.1-6.1 7.4z"/>
<path class="c18" d="M672.7 715.5l6.1-6.7-4.7-2.8-6.1 6z"/>
<path class="c16" d="M666.6 720.7l6.1-5.2-4.7-3.5-6.1 4.3z"/>
<path class="c15" d="M660.5 724.3l6.1-3.6-4.7-4.4-6.1 2.6z"/>
<path class="c14" d="M654.4 726.3l6.1-2-4.7-5.4-6.1 .8zM648.3 726.7l6.1-.4-4.7-6.6-6.1-.7z"/>
<path class="c15" d="M642.2 726l6.1 .7-4.7-7.7-6.1-1.9z"/>
<path class="c16" d="M636.1 724.3l6.1 1.7-4.7-8.9-6.1-3z"/>
<path class="c18" d="M630 722l6.1 2.3-4.7-10.2-6.1-3.4z"/>
<path class="c20" d="M623.8 719.5l6.2 2.5-4.7-11.3-6.1-3.7z"/>
<path class="c22" d="M617.7 717l6.1 2.5-4.6-12.5-6.2-3.4z"/>
<path class="c23" d="M611.6 714.8l6.1 2.2-4.7-13.4-6.1-2.8z"/>
<path class="c25" d="M605.5 713.3l6.1 1.5-4.7-14-6.1-1.9z"/>
<path class="c26" d="M599.4 712.5l6.1 .8-4.7-14.4-6.1-.9z"/>
<path class="c27" d="M593.3 712.7l6.1-.2-4.7-14.5-6.1 .3zM587.2 713.7l6.1-1-4.7-14.4-6.1 1.6zM581.1 715.8l6.1-2.1-4.7-13.8-6.1 2.8zM575 718.7l6.1-2.9-4.7-13.1-6.1 3.9z"/>
<path class="c26" d="M568.9 722.4l6.1-3.7-4.7-12.1-6.1 4.7z"/>
<path class="c25" d="M562.8 726.7l6.1-4.3-4.7-11.1-6.1 5.5z"/>
<path class="c23" d="M556.7 731.4l6.1-4.7-4.7-9.9-6.1 6z"/>
<path class="c21" d="M550.6 736.5l6.1-5.1-4.7-8.6-6.1 6.2z"/>
<path class="c19" d="M544.5 741.7l6.1-5.2-4.7-7.5-6.1 6.3z"/>
<path class="c18" d="M538.3 747l6.2-5.3-4.7-6.4-6.1 6.2z"/>
<path class="c16" d="M532.2 752.2l6.1-5.2-4.6-5.5-6.2 6.1z"/>
<path class="c14" d="M526.1 757.2l6.1-5-4.7-4.6-6.1 5.7z"/>
<path class="c12" d="M520 762l6.1-4.8-4.7-3.9-6.1 5.4z"/>
<path class="c11" d="M513.9 766.6l6.1-4.6-4.7-3.3-6.1 5z"/>
<path class="c9" d="M507.8 771l6.1-4.4-4.7-2.9-6.1 4.7z"/>
<path class="c8" d="M501.7 775.1l6.1-4.1-4.7-2.6-6.1 4.3z"/>
<path class="c7" d="M495.6 778.9l6.1-3.8-4.7-2.4-6.1 4z"/>
<path class="c6" d="M489.5 782.5l6.1-3.6-4.7-2.2-6.1 3.8z"/>
<path class="c5" d="M483.4 785.9l6.1-3.4-4.7-2-6.1 3.4z"/>
<path class="c4" d="M477.3 789.1l6.1-3.2-4.7-2-6.1 3.2zM471.2 792l6.1-2.9-4.7-2-6.1 3.1z"/>
<path class="c3" d="M465.1 794.8l6.1-2.8-4.7-1.8-6.1 2.8z"/>
<path class="c2" d="M459 797.4l6.1-2.6-4.7-1.8-6.1 2.6zM452.8 799.9l6.2-2.5-4.7-1.8-6.1 2.4zM446.7 802.1l6.1-2.2-4.6-1.9-6.2 2.3z"/>
<path class="c1" d="M440.6 804.3l6.1-2.2-4.7-1.8-6.1 2.2zM434.5 806.3l6.1-2-4.7-1.8-6.1 2zM428.4 808.2l6.1-1.9-4.7-1.8-6.1 2z"/>
<path class="c0" d="M422.3 810.1l6.1-1.9-4.7-1.7-6.1 1.8zM416.2 811.8l6.1-1.7-4.7-1.8-6.1 1.7zM410.1 813.4l6.1-1.6-4.7-1.8-6.1 1.7zM404 815l6.1-1.6-4.7-1.7-6.1 1.6zM397.9 816.6l6.1-1.6-4.7-1.7-6.1 1.5z"/>
<path class="c1" d="M988.8 684.4l6.2 .7-4.7-1.6-6.1-.6z"/>
<path class="c2" d="M982.7 683.1l6.1 1.3-4.6-1.5-6.1-1.2z"/>
<path class="c34" d="M885 620.1l6.1-2-4.7 1-6.1 1.9zM878.9 623.9l6.1-3.8-4.7 .9-6.1 3.7z"/>
<path class="c33" d="M872.8 629.4l6.1-5.5-4.7 .8-6.1 5.4z"/>
<path class="c31" d="M866.7 636.3l6.1-6.9-4.7 .7-6.1 6.7z"/>
<path class="c29" d="M860.6 644.3l6.1-8-4.7 .5-6.1 7.7z"/>
<path class="c27" d="M854.5 653.1l6.1-8.8-4.7 .2-6.1 8.5z"/>
<path class="c24" d="M848.4 662.2l6.1-9.1-4.7-.1-6.1 8.9z"/>
<path class="c21" d="M842.3 671.2l6.1-9-4.7-.3-6.1 8.8z"/>
<path class="c19" d="M836.2 679.8l6.1-8.6-4.7-.5-6.1 8.4z"/>
<path class="c16" d="M830.1 687.7l6.1-7.9-4.7-.7-6.1 7.6z"/>
<path class="c14" d="M824 694.6l6.1-6.9-4.7-1-6.1 6.7z"/>
<path class="c12" d="M817.9 700.2l6.1-5.6-4.7-1.2-6.1 5.4z"/>
<path class="c20" d="M683.5 711.8l6.1-8.4-4.7-2.7-6.1 8.1z"/>
<path class="c17" d="M677.4 719.1l6.1-7.3-4.7-3-6.1 6.7z"/>
<path class="c15" d="M671.3 724.9l6.1-5.8-4.7-3.6-6.1 5.2z"/>
<path class="c14" d="M665.2 729.1l6.1-4.2-4.7-4.2-6.1 3.6z"/>
<path class="c13" d="M659.1 731.8l6.1-2.7-4.7-4.8-6.1 2zM653 733.2l6.1-1.4-4.7-5.5-6.1 .4zM646.9 733.3l6.1-.1-4.7-6.5-6.1-.7z"/>
<path class="c14" d="M640.8 732.6l6.1 .7-4.7-7.3-6.1-1.7z"/>
<path class="c15" d="M634.6 731.2l6.2 1.4-4.7-8.3-6.1-2.3z"/>
<path class="c16" d="M628.5 729.5l6.1 1.7-4.6-9.2-6.2-2.5z"/>
<path class="c18" d="M622.4 727.6l6.1 1.9-4.7-10-6.1-2.5z"/>
<path class="c19" d="M616.3 726l6.1 1.6-4.7-10.6-6.1-2.2z"/>
<path class="c20" d="M610.2 724.7l6.1 1.3-4.7-11.2-6.1-1.5z"/>
<path class="c22" d="M604.1 724l6.1 .7-4.7-11.4-6.1-.8zM598 724l6.1 0-4.7-11.5-6.1 .2z"/>
<path class="c23" d="M591.9 724.6l6.1-.6-4.7-11.3-6.1 1zM585.8 726.1l6.1-1.5-4.7-10.9-6.1 2.1zM579.7 728.2l6.1-2.1-4.7-10.3-6.1 2.9z"/>
<path class="c22" d="M573.6 731l6.1-2.8-4.7-9.5-6.1 3.7z"/>
<path class="c21" d="M567.5 734.4l6.1-3.4-4.7-8.6-6.1 4.3z"/>
<path class="c20" d="M561.4 738.3l6.1-3.9-4.7-7.7-6.1 4.7z"/>
<path class="c19" d="M555.3 742.5l6.1-4.2-4.7-6.9-6.1 5.1z"/>
<path class="c17" d="M549.1 746.9l6.2-4.4-4.7-6-6.1 5.2z"/>
<path class="c16" d="M543 751.4l6.1-4.5-4.6-5.2-6.2 5.3z"/>
<path class="c14" d="M536.9 756l6.1-4.6-4.7-4.4-6.1 5.2z"/>
<path class="c13" d="M530.8 760.6l6.1-4.6-4.7-3.8-6.1 5z"/>
<path class="c12" d="M524.7 765l6.1-4.4-4.7-3.4-6.1 4.8z"/>
<path class="c10" d="M518.6 769.3l6.1-4.3-4.7-3-6.1 4.6z"/>
<path class="c9" d="M512.5 773.5l6.1-4.2-4.7-2.7-6.1 4.4z"/>
<path class="c8" d="M506.4 777.4l6.1-3.9-4.7-2.5-6.1 4.1z"/>
<path class="c7" d="M500.3 781.1l6.1-3.7-4.7-2.3-6.1 3.8z"/>
<path class="c6" d="M494.2 784.6l6.1-3.5-4.7-2.2-6.1 3.6z"/>
<path class="c5" d="M488.1 787.9l6.1-3.3-4.7-2.1-6.1 3.4z"/>
<path class="c4" d="M482 791l6.1-3.1-4.7-2-6.1 3.2zM475.9 794l6.1-3-4.7-1.9-6.1 2.9z"/>
<path class="c3" d="M469.8 796.7l6.1-2.7-4.7-2-6.1 2.8z"/>
<path class="c2" d="M463.6 799.3l6.2-2.6-4.7-1.9-6.1 2.6zM457.5 801.7l6.1-2.4-4.6-1.9-6.2 2.5zM451.4 804l6.1-2.3-4.7-1.8-6.1 2.2z"/>
<path class="c1" d="M445.3 806.1l6.1-2.1-4.7-1.9-6.1 2.2zM439.2 808.1l6.1-2-4.7-1.8-6.1 2zM433.1 810l6.1-1.9-4.7-1.8-6.1 1.9z"/>
<path class="c0" d="M427 811.8l6.1-1.8-4.7-1.8-6.1 1.9zM420.9 813.6l6.1-1.8-4.7-1.7-6.1 1.7zM414.8 815.2l6.1-1.6-4.7-1.8-6.1 1.6zM408.7 816.8l6.1-1.6-4.7-1.8-6.1 1.6zM402.6 818.3l6.1-1.5-4.7-1.8-6.1 1.6z"/>
<path class="c1" d="M993.5 686.1l6.1 .7-4.6-1.7-6.2-.7z"/>
<path class="c2" d="M987.4 684.8l6.1 1.3-4.7-1.7-6.1-1.3z"/>
<path class="c33" d="M901.9 618.6l6.1 1.7-4.6-.7-6.2-1.6z"/>
<path class="c35" d="M895.8 618.8l6.1-.2-4.7-.6-6.1 .1zM889.7 620.8l6.1-2-4.7-.7-6.1 2zM883.6 624.7l6.1-3.9-4.7-.7-6.1 3.8z"/>
<path class="c34" d="M877.5 630.2l6.1-5.5-4.7-.8-6.1 5.5z"/>
<path class="c32" d="M871.4 637.2l6.1-7-4.7-.8-6.1 6.9z"/>
<path class="c30" d="M865.3 645.3l6.1-8.1-4.7-.9-6.1 8z"/>
<path class="c28" d="M859.2 654.2l6.1-8.9-4.7-1-6.1 8.8z"/>
<path class="c25" d="M853.1 663.4l6.1-9.2-4.7-1.1-6.1 9.1z"/>
<path class="c22" d="M847 672.6l6.1-9.2-4.7-1.2-6.1 9z"/>
<path class="c19" d="M840.9 681.3l6.1-8.7-4.7-1.4-6.1 8.6z"/>
<path class="c16" d="M834.8 689.3l6.1-8-4.7-1.5-6.1 7.9z"/>
<path class="c14" d="M828.7 696.3l6.1-7-4.7-1.6-6.1 6.9z"/>
<path class="c12" d="M822.5 702l6.2-5.7-4.7-1.7-6.1 5.6z"/>
<path class="c17" d="M682.1 722.7l6.1-7.5-4.7-3.4-6.1 7.3z"/>
<path class="c15" d="M676 728.8l6.1-6.1-4.7-3.6-6.1 5.8z"/>
<path class="c13" d="M669.9 733.4l6.1-4.6-4.7-3.9-6.1 4.2z"/>
<path class="c12" d="M663.8 736.6l6.1-3.2-4.7-4.3-6.1 2.7z"/>
<path class="c11" d="M657.7 738.5l6.1-1.9-4.7-4.8-6.1 1.4zM651.5 739.3l6.2-.8-4.7-5.3-6.1 .1z"/>
<path class="c12" d="M645.4 739.2l6.1 .1-4.6-6-6.1-.7zM639.3 738.4l6.1 .8-4.6-6.6-6.2-1.4z"/>
<path class="c13" d="M633.2 737.2l6.1 1.2-4.7-7.2-6.1-1.7z"/>
<path class="c15" d="M627.1 735.9l6.1 1.3-4.7-7.7-6.1-1.9z"/>
<path class="c16" d="M621 734.6l6.1 1.3-4.7-8.3-6.1-1.6z"/>
<path class="c17" d="M614.9 733.5l6.1 1.1-4.7-8.6-6.1-1.3z"/>
<path class="c18" d="M608.8 732.8l6.1 .7-4.7-8.8-6.1-.7z"/>
<path class="c19" d="M602.7 732.5l6.1 .3-4.7-8.8-6.1 0zM596.6 732.9l6.1-.4-4.7-8.5-6.1 .6zM590.5 733.8l6.1-.9-4.7-8.3-6.1 1.5zM584.4 735.4l6.1-1.6-4.7-7.7-6.1 2.1zM578.3 737.6l6.1-2.2-4.7-7.2-6.1 2.8zM572.2 740.3l6.1-2.7-4.7-6.6-6.1 3.4z"/>
<path class="c18" d="M566.1 743.5l6.1-3.2-4.7-5.9-6.1 3.9z"/>
<path class="c17" d="M559.9 747l6.2-3.5-4.7-5.2-6.1 4.2z"/>
<path class="c16" d="M553.8 750.9l6.1-3.9-4.6-4.5-6.2 4.4z"/>
<path class="c15" d="M547.7 755l6.1-4.1-4.7-4-6.1 4.5z"/>
<path class="c13" d="M541.6 759.2l6.1-4.2-4.7-3.6-6.1 4.6z"/>
<path class="c12" d="M535.5 763.4l6.1-4.2-4.7-3.2-6.1 4.6z"/>
<path class="c11" d="M529.4 767.6l6.1-4.2-4.7-2.8-6.1 4.4z"/>
<path class="c10" d="M523.3 771.8l6.1-4.2-4.7-2.6-6.1 4.3z"/>
<path class="c9" d="M517.2 775.7l6.1-3.9-4.7-2.5-6.1 4.2z"/>
<path class="c8" d="M511.1 779.6l6.1-3.9-4.7-2.2-6.1 3.9z"/>
<path class="c7" d="M505 783.2l6.1-3.6-4.7-2.2-6.1 3.7z"/>
<path class="c6" d="M498.9 786.7l6.1-3.5-4.7-2.1-6.1 3.5z"/>
<path class="c5" d="M492.8 790l6.1-3.3-4.7-2.1-6.1 3.3z"/>
<path class="c4" d="M486.7 793.1l6.1-3.1-4.7-2.1-6.1 3.1zM480.6 795.9l6.1-2.8-4.7-2.1-6.1 3z"/>
<path class="c3" d="M474.4 798.7l6.2-2.8-4.7-1.9-6.1 2.7z"/>
<path class="c2" d="M468.3 801.2l6.1-2.5-4.6-2-6.2 2.6zM462.2 803.6l6.1-2.4-4.7-1.9-6.1 2.4z"/>
<path class="c1" d="M456.1 805.9l6.1-2.3-4.7-1.9-6.1 2.3zM450 808l6.1-2.1-4.7-1.9-6.1 2.1zM443.9 810l6.1-2-4.7-1.9-6.1 2zM437.8 811.8l6.1-1.8-4.7-1.9-6.1 1.9z"/>
<path class="c0" d="M431.7 813.6l6.1-1.8-4.7-1.8-6.1 1.8zM425.6 815.3l6.1-1.7-4.7-1.8-6.1 1.8zM419.5 817l6.1-1.7-4.7-1.7-6.1 1.6zM413.4 818.6l6.1-1.6-4.7-1.8-6.1 1.6zM407.3 820.1l6.1-1.5-4.7-1.8-6.1 1.5z"/>
<path class="c1" d="M998.2 687.9l6.1 .6-4.7-1.7-6.1-.7z"/>
<path class="c2" d="M992.1 686.6l6.1 1.3-4.7-1.8-6.1-1.3z"/>
<path class="c3" d="M986 684.6l6.1 2-4.7-1.8-6.1-2z"/>
<path class="c32" d="M912.7 622.7l6.1 3.3-4.6-2.3-6.2-3.4z"/>
<path class="c34" d="M906.6 621.1l6.1 1.6-4.7-2.4-6.1-1.7z"/>
<path class="c35" d="M900.5 621.2l6.1-.1-4.7-2.5-6.1 .2zM894.4 623.3l6.1-2.1-4.7-2.4-6.1 2zM888.3 627.1l6.1-3.8-4.7-2.5-6.1 3.9z"/>
<path class="c34" d="M882.2 632.7l6.1-5.6-4.7-2.4-6.1 5.5z"/>
<path class="c33" d="M876.1 639.7l6.1-7-4.7-2.5-6.1 7z"/>
<path class="c30" d="M870 647.7l6.1-8-4.7-2.5-6.1 8.1z"/>
<path class="c28" d="M863.9 656.6l6.1-8.9-4.7-2.4-6.1 8.9z"/>
<path class="c25" d="M857.8 665.7l6.1-9.1-4.7-2.4-6.1 9.2z"/>
<path class="c22" d="M851.7 674.9l6.1-9.2-4.7-2.3-6.1 9.2z"/>
<path class="c19" d="M845.6 683.6l6.1-8.7-4.7-2.3-6.1 8.7z"/>
<path class="c16" d="M839.5 691.6l6.1-8-4.7-2.3-6.1 8z"/>
<path class="c14" d="M833.3 698.5l6.2-6.9-4.7-2.3-6.1 7z"/>
<path class="c12" d="M827.2 704.2l6.1-5.7-4.6-2.2-6.2 5.7z"/>
<path class="c29" d="M754 667.4l6.1 4.8-4.7-4.6-6.1-5z"/>
<path class="c12" d="M674.6 737.2l6.1-4.8-4.7-3.6-6.1 4.6z"/>
<path class="c11" d="M668.5 740.6l6.1-3.4-4.7-3.8-6.1 3.2z"/>
<path class="c10" d="M662.3 742.8l6.2-2.2-4.7-4-6.1 1.9zM656.2 744l6.1-1.2-4.6-4.3-6.2 .8zM650.1 744.3l6.1-.3-4.7-4.7-6.1-.1z"/>
<path class="c11" d="M644 743.9l6.1 .4-4.7-5.1-6.1-.8zM637.9 743.1l6.1 .8-4.7-5.5-6.1-1.2z"/>
<path class="c12" d="M631.8 742.1l6.1 1-4.7-5.9-6.1-1.3z"/>
<path class="c13" d="M625.7 741l6.1 1.1-4.7-6.2-6.1-1.3z"/>
<path class="c14" d="M619.6 739.9l6.1 1.1-4.7-6.4-6.1-1.1z"/>
<path class="c15" d="M613.5 739.2l6.1 .7-4.7-6.4-6.1-.7z"/>
<path class="c16" d="M607.4 738.8l6.1 .4-4.7-6.4-6.1-.3z"/>
<path class="c17" d="M601.3 738.8l6.1 0-4.7-6.3-6.1 .4zM595.2 739.4l6.1-.6-4.7-5.9-6.1 .9zM589.1 740.5l6.1-1.1-4.7-5.6-6.1 1.6zM583 742.3l6.1-1.8-4.7-5.1-6.1 2.2zM576.9 744.5l6.1-2.2-4.7-4.7-6.1 2.7z"/>
<path class="c16" d="M570.7 747.2l6.2-2.7-4.7-4.2-6.1 3.2zM564.6 750.4l6.1-3.2-4.6-3.7-6.2 3.5z"/>
<path class="c15" d="M558.5 754l6.1-3.6-4.7-3.4-6.1 3.9z"/>
<path class="c14" d="M552.4 757.8l6.1-3.8-4.7-3.1-6.1 4.1z"/>
<path class="c13" d="M546.3 761.7l6.1-3.9-4.7-2.8-6.1 4.2z"/>
<path class="c12" d="M540.2 765.8l6.1-4.1-4.7-2.5-6.1 4.2z"/>
<path class="c11" d="M534.1 769.9l6.1-4.1-4.7-2.4-6.1 4.2z"/>
<path class="c9" d="M528 773.9l6.1-4-4.7-2.3-6.1 4.2z"/>
<path class="c8" d="M521.9 777.9l6.1-4-4.7-2.1-6.1 3.9z"/>
<path class="c7" d="M515.8 781.7l6.1-3.8-4.7-2.2-6.1 3.9z"/>
<path class="c6" d="M509.7 785.3l6.1-3.6-4.7-2.1-6.1 3.6zM503.6 788.8l6.1-3.5-4.7-2.1-6.1 3.5z"/>
<path class="c5" d="M497.5 792l6.1-3.2-4.7-2.1-6.1 3.3z"/>
<path class="c4" d="M491.4 795.1l6.1-3.1-4.7-2-6.1 3.1z"/>
<path class="c3" d="M485.2 798l6.2-2.9-4.7-2-6.1 2.8zM479.1 800.6l6.1-2.6-4.6-2.1-6.2 2.8z"/>
<path class="c2" d="M473 803.2l6.1-2.6-4.7-1.9-6.1 2.5zM466.9 805.5l6.1-2.3-4.7-2-6.1 2.4z"/>
<path class="c1" d="M460.8 807.7l6.1-2.2-4.7-1.9-6.1 2.3zM454.7 809.8l6.1-2.1-4.7-1.8-6.1 2.1zM448.6 811.8l6.1-2-4.7-1.8-6.1 2zM442.5 813.7l6.1-1.9-4.7-1.8-6.1 1.8z"/>
<path class="c0" d="M436.4 815.5l6.1-1.8-4.7-1.9-6.1 1.8zM430.3 817.1l6.1-1.6-4.7-1.9-6.1 1.7zM424.2 818.8l6.1-1.7-4.7-1.8-6.1 1.7zM418.1 820.3l6.1-1.5-4.7-1.8-6.1 1.6zM412 821.9l6.1-1.6-4.7-1.7-6.1 1.5z"/>
<path class="c1" d="M1002.9 689.8l6.1 .6-4.7-1.9-6.1-.6z"/>
<path class="c2" d="M996.8 688.6l6.1 1.2-4.7-1.9-6.1-1.3z"/>
<path class="c3" d="M990.7 686.7l6.1 1.9-4.7-2-6.1-2z"/>
<path class="c4" d="M984.6 684.1l6.1 2.6-4.7-2.1-6.1-2.7z"/>
<path class="c30" d="M923.5 630l6.1 4.5-4.7-3.8-6.1-4.7z"/>
<path class="c32" d="M917.4 626.8l6.1 3.2-4.7-4-6.1-3.3z"/>
<path class="c34" d="M911.3 625.3l6.1 1.5-4.7-4.1-6.1-1.6z"/>
<path class="c35" d="M905.2 625.5l6.1-.2-4.7-4.2-6.1 .1zM899.1 627.5l6.1-2-4.7-4.3-6.1 2.1zM893 631.3l6.1-3.8-4.7-4.2-6.1 3.8z"/>
<path class="c34" d="M886.9 636.7l6.1-5.4-4.7-4.2-6.1 5.6z"/>
<path class="c32" d="M880.8 643.6l6.1-6.9-4.7-4-6.1 7z"/>
<path class="c30" d="M874.7 651.5l6.1-7.9-4.7-3.9-6.1 8z"/>
<path class="c28" d="M868.6 660.2l6.1-8.7-4.7-3.8-6.1 8.9z"/>
<path class="c25" d="M862.5 669.1l6.1-8.9-4.7-3.6-6.1 9.1z"/>
<path class="c22" d="M856.4 678.1l6.1-9-4.7-3.4-6.1 9.2z"/>
<path class="c19" d="M850.2 686.6l6.2-8.5-4.7-3.2-6.1 8.7z"/>
<path class="c16" d="M844.1 694.5l6.1-7.9-4.6-3-6.1 8z"/>
<path class="c14" d="M838 701.3l6.1-6.8-4.6-2.9-6.2 6.9z"/>
<path class="c12" d="M831.9 706.9l6.1-5.6-4.7-2.8-6.1 5.7z"/>
<path class="c10" d="M825.8 711.1l6.1-4.2-4.7-2.7-6.1 4.2z"/>
<path class="c22" d="M770.9 683.6l6.1 6.5-4.7-4.9-6.1-6.9z"/>
<path class="c25" d="M764.8 677.7l6.1 5.9-4.7-5.3-6.1-6.1z"/>
<path class="c27" d="M758.6 673.2l6.2 4.5-4.7-5.5-6.1-4.8z"/>
<path class="c12" d="M630.4 745.6l6.1 1-4.7-4.5-6.1-1.1z"/>
<path class="c13" d="M624.3 744.6l6.1 1-4.7-4.6-6.1-1.1zM618.2 743.7l6.1 .9-4.7-4.7-6.1-.7z"/>
<path class="c14" d="M612.1 743.1l6.1 .6-4.7-4.5-6.1-.4z"/>
<path class="c15" d="M606 742.9l6.1 .2-4.7-4.3-6.1 0zM599.9 743.2l6.1-.3-4.7-4.1-6.1 .6z"/>
<path class="c16" d="M593.8 744l6.1-.8-4.7-3.8-6.1 1.1zM587.6 745.4l6.2-1.4-4.7-3.5-6.1 1.8zM581.5 747.3l6.1-1.9-4.6-3.1-6.1 2.2z"/>
<path class="c15" d="M575.4 749.8l6.1-2.5-4.6-2.8-6.2 2.7zM569.3 752.7l6.1-2.9-4.7-2.6-6.1 3.2z"/>
<path class="c14" d="M563.2 756.1l6.1-3.4-4.7-2.3-6.1 3.6z"/>
<path class="c13" d="M557.1 759.8l6.1-3.7-4.7-2.1-6.1 3.8z"/>
<path class="c12" d="M551 763.7l6.1-3.9-4.7-2-6.1 3.9z"/>
<path class="c11" d="M544.9 767.7l6.1-4-4.7-2-6.1 4.1z"/>
<path class="c10" d="M538.8 771.8l6.1-4.1-4.7-1.9-6.1 4.1z"/>
<path class="c9" d="M532.7 775.9l6.1-4.1-4.7-1.9-6.1 4z"/>
<path class="c8" d="M526.6 779.9l6.1-4-4.7-2-6.1 4z"/>
<path class="c7" d="M520.5 783.7l6.1-3.8-4.7-2-6.1 3.8z"/>
<path class="c6" d="M514.4 787.4l6.1-3.7-4.7-2-6.1 3.6z"/>
<path class="c5" d="M508.3 790.8l6.1-3.4-4.7-2.1-6.1 3.5zM502.2 794.1l6.1-3.3-4.7-2-6.1 3.2z"/>
<path class="c4" d="M496 797.1l6.2-3-4.7-2.1-6.1 3.1z"/>
<path class="c3" d="M489.9 800l6.1-2.9-4.6-2-6.2 2.9zM483.8 802.6l6.1-2.6-4.7-2-6.1 2.6z"/>
<path class="c2" d="M477.7 805.1l6.1-2.5-4.7-2-6.1 2.6zM471.6 807.5l6.1-2.4-4.7-1.9-6.1 2.3z"/>
<path class="c1" d="M465.5 809.7l6.1-2.2-4.7-2-6.1 2.2zM459.4 811.7l6.1-2-4.7-2-6.1 2.1zM453.3 813.7l6.1-2-4.7-1.9-6.1 2zM447.2 815.5l6.1-1.8-4.7-1.9-6.1 1.9z"/>
<path class="c0" d="M441.1 817.3l6.1-1.8-4.7-1.8-6.1 1.8zM435 819l6.1-1.7-4.7-1.8-6.1 1.6zM428.9 820.6l6.1-1.6-4.7-1.9-6.1 1.7zM422.8 822.1l6.1-1.5-4.7-1.8-6.1 1.5z"/>
<path class="c1" d="M1007.6 691.8l6.1 .6-4.7-2-6.1-.6z"/>
<path class="c2" d="M1001.5 690.7l6.1 1.1-4.7-2-6.1-1.2z"/>
<path class="c3" d="M995.4 689l6.1 1.7-4.7-2.1-6.1-1.9z"/>
<path class="c4" d="M989.3 686.6l6.1 2.4-4.7-2.3-6.1-2.6z"/>
<path class="c23" d="M940.4 645l6.1 5.9-4.6-4.6-6.2-6.2z"/>
<path class="c26" d="M934.3 639.8l6.1 5.2-4.7-4.9-6.1-5.6z"/>
<path class="c29" d="M928.2 635.5l6.1 4.3-4.7-5.3-6.1-4.5z"/>
<path class="c31" d="M922.1 632.5l6.1 3-4.7-5.5-6.1-3.2z"/>
<path class="c33" d="M916 631.1l6.1 1.4-4.7-5.7-6.1-1.5z"/>
<path class="c34" d="M909.9 631.3l6.1-.2-4.7-5.8-6.1 .2zM903.8 633.3l6.1-2-4.7-5.8-6.1 2zM897.7 637.1l6.1-3.8-4.7-5.8-6.1 3.8z"/>
<path class="c33" d="M891.6 642.3l6.1-5.2-4.7-5.8-6.1 5.4z"/>
<path class="c31" d="M885.5 648.9l6.1-6.6-4.7-5.6-6.1 6.9z"/>
<path class="c29" d="M879.4 656.6l6.1-7.7-4.7-5.3-6.1 7.9z"/>
<path class="c27" d="M873.3 664.9l6.1-8.3-4.7-5.1-6.1 8.7z"/>
<path class="c24" d="M867.2 673.6l6.1-8.7-4.7-4.7-6.1 8.9z"/>
<path class="c21" d="M861 682.2l6.2-8.6-4.7-4.5-6.1 9z"/>
<path class="c18" d="M854.9 690.4l6.1-8.2-4.6-4.1-6.2 8.5z"/>
<path class="c16" d="M848.8 698l6.1-7.6-4.7-3.8-6.1 7.9z"/>
<path class="c13" d="M842.7 704.6l6.1-6.6-4.7-3.5-6.1 6.8z"/>
<path class="c11" d="M836.6 710.1l6.1-5.5-4.7-3.3-6.1 5.6z"/>
<path class="c10" d="M830.5 714.2l6.1-4.1-4.7-3.2-6.1 4.2z"/>
<path class="c15" d="M787.8 701.6l6.1 5.7-4.7-4.5-6.1-6.1z"/>
<path class="c17" d="M781.7 695.5l6.1 6.1-4.7-4.9-6.1-6.6z"/>
<path class="c20" d="M775.6 689.4l6.1 6.1-4.7-5.4-6.1-6.5z"/>
<path class="c23" d="M769.4 683.9l6.2 5.5-4.7-5.8-6.1-5.9z"/>
<path class="c26" d="M763.3 679.6l6.1 4.3-4.6-6.2-6.2-4.5z"/>
<path class="c28" d="M757.2 676.9l6.1 2.7-4.7-6.4-6.1-2.8z"/>
<path class="c12" d="M622.9 746.7l6.1 1-4.7-3.1-6.1-.9z"/>
<path class="c13" d="M616.8 745.9l6.1 .8-4.7-3-6.1-.6z"/>
<path class="c14" d="M610.7 745.5l6.1 .4-4.7-2.8-6.1-.2z"/>
<path class="c15" d="M604.6 745.5l6.1 0-4.7-2.6-6.1 .3zM598.4 746.1l6.2-.6-4.7-2.3-6.1 .8zM592.3 747.2l6.1-1.1-4.6-2.1-6.2 1.4zM586.2 749l6.1-1.8-4.7-1.8-6.1 1.9zM580.1 751.3l6.1-2.3-4.7-1.7-6.1 2.5z"/>
<path class="c14" d="M574 754.2l6.1-2.9-4.7-1.5-6.1 2.9zM567.9 757.5l6.1-3.3-4.7-1.5-6.1 3.4z"/>
<path class="c13" d="M561.8 761.2l6.1-3.7-4.7-1.4-6.1 3.7z"/>
<path class="c12" d="M555.7 765.1l6.1-3.9-4.7-1.4-6.1 3.9z"/>
<path class="c11" d="M549.6 769.3l6.1-4.2-4.7-1.4-6.1 4z"/>
<path class="c10" d="M543.5 773.5l6.1-4.2-4.7-1.6-6.1 4.1z"/>
<path class="c9" d="M537.4 777.6l6.1-4.1-4.7-1.7-6.1 4.1z"/>
<path class="c8" d="M531.3 781.7l6.1-4.1-4.7-1.7-6.1 4z"/>
<path class="c7" d="M525.2 785.6l6.1-3.9-4.7-1.8-6.1 3.8z"/>
<path class="c6" d="M519.1 789.3l6.1-3.7-4.7-1.9-6.1 3.7z"/>
<path class="c5" d="M513 792.8l6.1-3.5-4.7-1.9-6.1 3.4zM506.8 796.1l6.2-3.3-4.7-2-6.1 3.3z"/>
<path class="c4" d="M500.7 799.2l6.1-3.1-4.6-2-6.2 3z"/>
<path class="c3" d="M494.6 802l6.1-2.8-4.7-2.1-6.1 2.9zM488.5 804.7l6.1-2.7-4.7-2-6.1 2.6z"/>
<path class="c2" d="M482.4 807.1l6.1-2.4-4.7-2.1-6.1 2.5zM476.3 809.4l6.1-2.3-4.7-2-6.1 2.4z"/>
<path class="c1" d="M470.2 811.6l6.1-2.2-4.7-1.9-6.1 2.2zM464.1 813.6l6.1-2-4.7-1.9-6.1 2zM458 815.6l6.1-2-4.7-1.9-6.1 2z"/>
<path class="c0" d="M451.9 817.4l6.1-1.8-4.7-1.9-6.1 1.8zM445.8 819.1l6.1-1.7-4.7-1.9-6.1 1.8zM439.7 820.8l6.1-1.7-4.7-1.8-6.1 1.7zM433.6 822.4l6.1-1.6-4.7-1.8-6.1 1.6zM427.5 823.9l6.1-1.5-4.7-1.8-6.1 1.5z"/>
<path class="c1" d="M1012.3 694l6.1 .4-4.7-2-6.1-.6z"/>
<path class="c2" d="M1006.2 693.1l6.1 .9-4.7-2.2-6.1-1.1z"/>
<path class="c3" d="M1000.1 691.5l6.1 1.6-4.7-2.4-6.1-1.7z"/>
<path class="c4" d="M994 689.3l6.1 2.2-4.7-2.5-6.1-2.4z"/>
<path class="c5" d="M987.9 686.4l6.1 2.9-4.7-2.7-6.1-3.3z"/>
<path class="c7" d="M981.8 682.7l6.1 3.7-4.7-3.1-6.1-4z"/>
<path class="c9" d="M975.7 678.3l6.1 4.4-4.7-3.4-6.1-4.7z"/>
<path class="c17" d="M957.3 662.2l6.2 5.7-4.7-4.6-6.1-6.2z"/>
<path class="c19" d="M951.2 656.5l6.1 5.7-4.6-5.1-6.2-6.2z"/>
<path class="c22" d="M945.1 651l6.1 5.5-4.7-5.6-6.1-5.9z"/>
<path class="c25" d="M939 646.2l6.1 4.8-4.7-6-6.1-5.2z"/>
<path class="c27" d="M932.9 642.3l6.1 3.9-4.7-6.4-6.1-4.3z"/>
<path class="c30" d="M926.8 639.6l6.1 2.7-4.7-6.8-6.1-3z"/>
<path class="c31" d="M920.7 638.4l6.1 1.2-4.7-7.1-6.1-1.4z"/>
<path class="c32" d="M914.6 638.7l6.1-.3-4.7-7.3-6.1 .2z"/>
<path class="c33" d="M908.5 640.6l6.1-1.9-4.7-7.4-6.1 2z"/>
<path class="c32" d="M902.4 644.2l6.1-3.6-4.7-7.3-6.1 3.8z"/>
<path class="c31" d="M896.3 649.2l6.1-5-4.7-7.1-6.1 5.2z"/>
<path class="c30" d="M890.2 655.5l6.1-6.3-4.7-6.9-6.1 6.6z"/>
<path class="c28" d="M884.1 662.8l6.1-7.3-4.7-6.6-6.1 7.7z"/>
<path class="c26" d="M878 670.7l6.1-7.9-4.7-6.2-6.1 8.3z"/>
<path class="c23" d="M871.8 678.9l6.2-8.2-4.7-5.8-6.1 8.7z"/>
<path class="c20" d="M865.7 687l6.1-8.1-4.6-5.3-6.2 8.6z"/>
<path class="c18" d="M859.6 694.8l6.1-7.8-4.7-4.8-6.1 8.2z"/>
<path class="c15" d="M853.5 702l6.1-7.2-4.7-4.4-6.1 7.6z"/>
<path class="c13" d="M847.4 708.3l6.1-6.3-4.7-4-6.1 6.6z"/>
<path class="c11" d="M841.3 713.6l6.1-5.3-4.7-3.7-6.1 5.5z"/>
<path class="c9" d="M835.2 717.6l6.1-4-4.7-3.5-6.1 4.1z"/>
<path class="c16" d="M786.4 701.1l6.1 5.7-4.7-5.2-6.1-6.1z"/>
<path class="c19" d="M780.2 695.4l6.2 5.7-4.7-5.6-6.1-6.1z"/>
<path class="c22" d="M774.1 690.2l6.1 5.2-4.6-6-6.2-5.5z"/>
<path class="c24" d="M768 686.1l6.1 4.1-4.7-6.3-6.1-4.3z"/>
<path class="c26" d="M761.9 683.6l6.1 2.5-4.7-6.5-6.1-2.7z"/>
<path class="c14" d="M615.4 746.9l6.1 .6-4.7-1.6-6.1-.4zM609.2 746.7l6.2 .2-4.7-1.4-6.1 0z"/>
<path class="c15" d="M603.1 747.1l6.1-.4-4.6-1.2-6.2 .6zM597 748.1l6.1-1-4.7-1-6.1 1.1zM590.9 749.7l6.1-1.6-4.7-.9-6.1 1.8zM584.8 752l6.1-2.3-4.7-.7-6.1 2.3zM578.7 754.8l6.1-2.8-4.7-.7-6.1 2.9z"/>
<path class="c14" d="M572.6 758.2l6.1-3.4-4.7-.6-6.1 3.3z"/>
<path class="c13" d="M566.5 762l6.1-3.8-4.7-.7-6.1 3.7z"/>
<path class="c12" d="M560.4 766.2l6.1-4.2-4.7-.8-6.1 3.9z"/>
<path class="c11" d="M554.3 770.5l6.1-4.3-4.7-1.1-6.1 4.2z"/>
<path class="c10" d="M548.2 774.8l6.1-4.3-4.7-1.2-6.1 4.2z"/>
<path class="c9" d="M542.1 779.2l6.1-4.4-4.7-1.3-6.1 4.1z"/>
<path class="c8" d="M536 783.4l6.1-4.2-4.7-1.6-6.1 4.1z"/>
<path class="c7" d="M529.9 787.4l6.1-4-4.7-1.7-6.1 3.9z"/>
<path class="c6" d="M523.7 791.2l6.2-3.8-4.7-1.8-6.1 3.7z"/>
<path class="c5" d="M517.6 794.8l6.1-3.6-4.6-1.9-6.1 3.5z"/>
<path class="c4" d="M511.5 798.1l6.1-3.3-4.6-2-6.2 3.3zM505.4 801.2l6.1-3.1-4.7-2-6.1 3.1z"/>
<path class="c3" d="M499.3 804.1l6.1-2.9-4.7-2-6.1 2.8z"/>
<path class="c2" d="M493.2 806.7l6.1-2.6-4.7-2.1-6.1 2.7zM487.1 809.1l6.1-2.4-4.7-2-6.1 2.4zM481 811.4l6.1-2.3-4.7-2-6.1 2.3z"/>
<path class="c1" d="M474.9 813.6l6.1-2.2-4.7-2-6.1 2.2zM468.8 815.6l6.1-2-4.7-2-6.1 2zM462.7 817.4l6.1-1.8-4.7-2-6.1 2z"/>
<path class="c0" d="M456.6 819.2l6.1-1.8-4.7-1.8-6.1 1.8zM450.5 820.9l6.1-1.7-4.7-1.8-6.1 1.7zM444.4 822.6l6.1-1.7-4.7-1.8-6.1 1.7zM438.3 824.2l6.1-1.6-4.7-1.8-6.1 1.6zM432.1 825.7l6.2-1.5-4.7-1.8-6.1 1.5z"/>
<path class="c1" d="M1017 696.2l6.1 .3-4.7-2.1-6.1-.4z"/>
<path class="c2" d="M1010.9 695.5l6.1 .7-4.7-2.2-6.1-.9z"/>
<path class="c3" d="M1004.8 694.2l6.1 1.3-4.7-2.4-6.1-1.6z"/>
<path class="c4" d="M998.7 692.3l6.1 1.9-4.7-2.7-6.1-2.2z"/>
<path class="c5" d="M992.6 689.7l6.1 2.6-4.7-3-6.1-2.9z"/>
<path class="c7" d="M986.5 686.4l6.1 3.3-4.7-3.3-6.1-3.7z"/>
<path class="c9" d="M980.4 682.5l6.1 3.9-4.7-3.7-6.1-4.4z"/>
<path class="c11" d="M974.3 678l6.1 4.5-4.7-4.2-6.1-4.9z"/>
<path class="c13" d="M968.1 673.1l6.2 4.9-4.7-4.6-6.1-5.5z"/>
<path class="c16" d="M962 668l6.1 5.1-4.6-5.2-6.2-5.7z"/>
<path class="c18" d="M955.9 662.8l6.1 5.2-4.7-5.8-6.1-5.7z"/>
<path class="c21" d="M949.8 658l6.1 4.8-4.7-6.3-6.1-5.5z"/>
<path class="c23" d="M943.7 653.6l6.1 4.4-4.7-7-6.1-4.8z"/>
<path class="c26" d="M937.6 650.2l6.1 3.4-4.7-7.4-6.1-3.9z"/>
<path class="c28" d="M931.5 647.8l6.1 2.4-4.7-7.9-6.1-2.7z"/>
<path class="c29" d="M925.4 646.8l6.1 1-4.7-8.2-6.1-1.2z"/>
<path class="c30" d="M919.3 647.2l6.1-.4-4.7-8.4-6.1 .3zM913.2 649.1l6.1-1.9-4.7-8.5-6.1 1.9zM907.1 652.5l6.1-3.4-4.7-8.5-6.1 3.6z"/>
<path class="c29" d="M901 657.2l6.1-4.7-4.7-8.3-6.1 5z"/>
<path class="c28" d="M894.9 663.1l6.1-5.9-4.7-8-6.1 6.3z"/>
<path class="c26" d="M888.8 669.9l6.1-6.8-4.7-7.6-6.1 7.3z"/>
<path class="c24" d="M882.6 677.2l6.2-7.3-4.7-7.1-6.1 7.9z"/>
<path class="c22" d="M876.5 684.9l6.1-7.7-4.6-6.5-6.2 8.2z"/>
<path class="c19" d="M870.4 692.5l6.1-7.6-4.7-6-6.1 8.1z"/>
<path class="c16" d="M864.3 699.8l6.1-7.3-4.7-5.5-6.1 7.8z"/>
<path class="c14" d="M858.2 706.5l6.1-6.7-4.7-5-6.1 7.2z"/>
<path class="c12" d="M852.1 712.4l6.1-5.9-4.7-4.5-6.1 6.3z"/>
<path class="c10" d="M846 717.4l6.1-5-4.7-4.1-6.1 5.3z"/>
<path class="c8" d="M839.9 721.2l6.1-3.8-4.7-3.8-6.1 4z"/>
<path class="c18" d="M784.9 701.3l6.1 5.4-4.6-5.6-6.2-5.7z"/>
<path class="c20" d="M778.8 696.3l6.1 5-4.7-5.9-6.1-5.2z"/>
<path class="c23" d="M772.7 692.4l6.1 3.9-4.7-6.1-6.1-4.1z"/>
<path class="c25" d="M766.6 689.9l6.1 2.5-4.7-6.3-6.1-2.5z"/>
<path class="c26" d="M760.5 689.2l6.1 .7-4.7-6.3-6.1-.7z"/>
<path class="c15" d="M607.8 747.2l6.1-.2-4.7-.3-6.1 .4zM601.7 748.1l6.1-.9-4.7-.1-6.1 1zM595.6 749.7l6.1-1.6-4.7 0-6.1 1.6zM589.5 752l6.1-2.3-4.7 0-6.1 2.3zM583.4 754.9l6.1-2.9-4.7 0-6.1 2.8z"/>
<path class="c14" d="M577.3 758.5l6.1-3.6-4.7-.1-6.1 3.4zM571.2 762.5l6.1-4-4.7-.3-6.1 3.8z"/>
<path class="c13" d="M565.1 766.8l6.1-4.3-4.7-.5-6.1 4.2z"/>
<path class="c12" d="M559 771.4l6.1-4.6-4.7-.6-6.1 4.3z"/>
<path class="c10" d="M552.9 776l6.1-4.6-4.7-.9-6.1 4.3z"/>
<path class="c9" d="M546.8 780.5l6.1-4.5-4.7-1.2-6.1 4.4z"/>
<path class="c8" d="M540.7 784.9l6.1-4.4-4.7-1.3-6.1 4.2z"/>
<path class="c7" d="M534.5 789.1l6.2-4.2-4.7-1.5-6.1 4z"/>
<path class="c6" d="M528.4 793.1l6.1-4-4.6-1.7-6.2 3.8z"/>
<path class="c5" d="M522.3 796.8l6.1-3.7-4.7-1.9-6.1 3.6z"/>
<path class="c4" d="M516.2 800.1l6.1-3.3-4.7-2-6.1 3.3zM510.1 803.2l6.1-3.1-4.7-2-6.1 3.1z"/>
<path class="c3" d="M504 806.1l6.1-2.9-4.7-2-6.1 2.9z"/>
<path class="c2" d="M497.9 808.7l6.1-2.6-4.7-2-6.1 2.6zM491.8 811.2l6.1-2.5-4.7-2-6.1 2.4z"/>
<path class="c1" d="M485.7 813.4l6.1-2.2-4.7-2.1-6.1 2.3zM479.6 815.5l6.1-2.1-4.7-2-6.1 2.2zM473.5 817.5l6.1-2-4.7-1.9-6.1 2zM467.4 819.3l6.1-1.8-4.7-1.9-6.1 1.8z"/>
<path class="c0" d="M461.3 821.1l6.1-1.8-4.7-1.9-6.1 1.8zM455.2 822.8l6.1-1.7-4.7-1.9-6.1 1.7zM449.1 824.4l6.1-1.6-4.7-1.9-6.1 1.7zM442.9 826l6.2-1.6-4.7-1.8-6.1 1.6zM436.8 827.5l6.1-1.5-4.6-1.8-6.2 1.5z"/>
<path class="c1" d="M1021.7 698.6l6.1 .1-4.7-2.2-6.1-.3z"/>
<path class="c2" d="M1015.6 698l6.1 .6-4.7-2.4-6.1-.7zM1009.5 697l6.1 1-4.7-2.5-6.1-1.3z"/>
<path class="c3" d="M1003.4 695.4l6.1 1.6-4.7-2.8-6.1-1.9z"/>
<path class="c5" d="M997.3 693.2l6.1 2.2-4.7-3.1-6.1-2.6z"/>
<path class="c6" d="M991.2 690.4l6.1 2.8-4.7-3.5-6.1-3.3z"/>
<path class="c8" d="M985.1 687l6.1 3.4-4.7-4-6.1-3.9z"/>
<path class="c10" d="M978.9 683.1l6.2 3.9-4.7-4.5-6.1-4.5z"/>
<path class="c12" d="M972.8 678.8l6.1 4.3-4.6-5.1-6.2-4.9z"/>
<path class="c14" d="M966.7 674.3l6.1 4.5-4.7-5.7-6.1-5.1z"/>
<path class="c17" d="M960.6 669.8l6.1 4.5-4.7-6.3-6.1-5.2z"/>
<path class="c19" d="M954.5 665.5l6.1 4.3-4.7-7-6.1-4.8z"/>
<path class="c21" d="M948.4 661.8l6.1 3.7-4.7-7.5-6.1-4.4z"/>
<path class="c24" d="M942.3 658.8l6.1 3-4.7-8.2-6.1-3.4z"/>
<path class="c25" d="M936.2 656.8l6.1 2-4.7-8.6-6.1-2.4z"/>
<path class="c27" d="M930.1 656l6.1 .8-4.7-9-6.1-1z"/>
<path class="c28" d="M924 656.5l6.1-.5-4.7-9.2-6.1 .4zM917.9 658.3l6.1-1.8-4.7-9.3-6.1 1.9zM911.8 661.5l6.1-3.2-4.7-9.2-6.1 3.4z"/>
<path class="c27" d="M905.7 665.9l6.1-4.4-4.7-9-6.1 4.7z"/>
<path class="c26" d="M899.6 671.3l6.1-5.4-4.7-8.7-6.1 5.9z"/>
<path class="c24" d="M893.4 677.6l6.2-6.3-4.7-8.2-6.1 6.8z"/>
<path class="c22" d="M887.3 684.3l6.1-6.7-4.6-7.7-6.2 7.3z"/>
<path class="c20" d="M881.2 691.4l6.1-7.1-4.7-7.1-6.1 7.7z"/>
<path class="c17" d="M875.1 698.3l6.1-6.9-4.7-6.5-6.1 7.6z"/>
<path class="c15" d="M869 705.1l6.1-6.8-4.7-5.8-6.1 7.3z"/>
<path class="c13" d="M862.9 711.3l6.1-6.2-4.7-5.3-6.1 6.7z"/>
<path class="c11" d="M856.8 716.7l6.1-5.4-4.7-4.8-6.1 5.9z"/>
<path class="c9" d="M850.7 721.4l6.1-4.7-4.7-4.3-6.1 5z"/>
<path class="c8" d="M844.6 725l6.1-3.6-4.7-4-6.1 3.8z"/>
<path class="c19" d="M783.5 701.8l6.1 4.8-4.7-5.3-6.1-5z"/>
<path class="c21" d="M777.4 697.9l6.1 3.9-4.7-5.5-6.1-3.9z"/>
<path class="c23" d="M771.3 695.4l6.1 2.5-4.7-5.5-6.1-2.5z"/>
<path class="c24" d="M765.2 694.6l6.1 .8-4.7-5.5-6.1-.7z"/>
<path class="c16" d="M606.4 747.6l6.1-.8-4.7 .4-6.1 .9zM600.3 749.1l6.1-1.5-4.7 .5-6.1 1.6zM594.2 751.5l6.1-2.4-4.7 .6-6.1 2.3zM588.1 754.6l6.1-3.1-4.7 .5-6.1 2.9z"/>
<path class="c15" d="M582 758.3l6.1-3.7-4.7 .3-6.1 3.6z"/>
<path class="c14" d="M575.9 762.6l6.1-4.3-4.7 .2-6.1 4z"/>
<path class="c13" d="M569.8 767.2l6.1-4.6-4.7-.1-6.1 4.3z"/>
<path class="c12" d="M563.7 772l6.1-4.8-4.7-.4-6.1 4.6z"/>
<path class="c11" d="M557.6 776.9l6.1-4.9-4.7-.6-6.1 4.6z"/>
<path class="c10" d="M551.5 781.8l6.1-4.9-4.7-.9-6.1 4.5z"/>
<path class="c8" d="M545.3 786.4l6.2-4.6-4.7-1.3-6.1 4.4z"/>
<path class="c7" d="M539.2 790.8l6.1-4.4-4.6-1.5-6.2 4.2z"/>
<path class="c6" d="M533.1 794.9l6.1-4.1-4.7-1.7-6.1 4z"/>
<path class="c5" d="M527 798.7l6.1-3.8-4.7-1.8-6.1 3.7z"/>
<path class="c4" d="M520.9 802.1l6.1-3.4-4.7-1.9-6.1 3.3zM514.8 805.3l6.1-3.2-4.7-2-6.1 3.1z"/>
<path class="c3" d="M508.7 808.1l6.1-2.8-4.7-2.1-6.1 2.9z"/>
<path class="c2" d="M502.6 810.8l6.1-2.7-4.7-2-6.1 2.6zM496.5 813.2l6.1-2.4-4.7-2.1-6.1 2.5z"/>
<path class="c1" d="M490.4 815.4l6.1-2.2-4.7-2-6.1 2.2zM484.3 817.5l6.1-2.1-4.7-2-6.1 2.1zM478.2 819.4l6.1-1.9-4.7-2-6.1 2z"/>
<path class="c0" d="M472.1 821.2l6.1-1.8-4.7-1.9-6.1 1.8zM466 823l6.1-1.8-4.7-1.9-6.1 1.8zM459.8 824.6l6.2-1.6-4.7-1.9-6.1 1.7zM453.7 826.2l6.1-1.6-4.6-1.8-6.1 1.6zM447.6 827.8l6.1-1.6-4.6-1.8-6.2 1.6z"/>
<path class="c1" d="M1026.4 700.9l6.1-.1-4.7-2.1-6.1-.1zM1020.3 700.6l6.1 .3-4.7-2.3-6.1-.6z"/>
<path class="c2" d="M1014.2 699.8l6.1 .8-4.7-2.6-6.1-1z"/>
<path class="c3" d="M1008.1 698.5l6.1 1.3-4.7-2.8-6.1-1.6z"/>
<path class="c4" d="M1002 696.8l6.1 1.7-4.7-3.1-6.1-2.2z"/>
<path class="c5" d="M995.8 694.4l6.2 2.4-4.7-3.6-6.1-2.8z"/>
<path class="c7" d="M989.7 691.6l6.1 2.8-4.6-4-6.1-3.4z"/>
<path class="c9" d="M983.6 688.3l6.1 3.3-4.6-4.6-6.2-3.9z"/>
<path class="c11" d="M977.5 684.7l6.1 3.6-4.7-5.2-6.1-4.3z"/>
<path class="c13" d="M971.4 680.9l6.1 3.8-4.7-5.9-6.1-4.5z"/>
<path class="c15" d="M965.3 677.1l6.1 3.8-4.7-6.6-6.1-4.5z"/>
<path class="c17" d="M959.2 673.5l6.1 3.6-4.7-7.3-6.1-4.3z"/>
<path class="c19" d="M953.1 670.3l6.1 3.2-4.7-8-6.1-3.7z"/>
<path class="c21" d="M947 667.8l6.1 2.5-4.7-8.5-6.1-3z"/>
<path class="c23" d="M940.9 666.2l6.1 1.6-4.7-9-6.1-2z"/>
<path class="c24" d="M934.8 665.6l6.1 .6-4.7-9.4-6.1-.8z"/>
<path class="c25" d="M928.7 666.2l6.1-.6-4.7-9.6-6.1 .5zM922.6 668l6.1-1.8-4.7-9.7-6.1 1.8zM916.5 671l6.1-3-4.7-9.7-6.1 3.2z"/>
<path class="c24" d="M910.4 675l6.1-4-4.7-9.5-6.1 4.4z"/>
<path class="c23" d="M904.2 680l6.2-5-4.7-9.1-6.1 5.4z"/>
<path class="c22" d="M898.1 685.6l6.1-5.6-4.6-8.7-6.2 6.3z"/>
<path class="c20" d="M892 691.8l6.1-6.2-4.7-8-6.1 6.7z"/>
<path class="c18" d="M885.9 698.1l6.1-6.3-4.7-7.5-6.1 7.1z"/>
<path class="c16" d="M879.8 704.4l6.1-6.3-4.7-6.7-6.1 6.9z"/>
<path class="c13" d="M873.7 710.5l6.1-6.1-4.7-6.1-6.1 6.8z"/>
<path class="c11" d="M867.6 716.2l6.1-5.7-4.7-5.4-6.1 6.2z"/>
<path class="c10" d="M861.5 721.2l6.1-5-4.7-4.9-6.1 5.4z"/>
<path class="c8" d="M855.4 725.4l6.1-4.2-4.7-4.5-6.1 4.7z"/>
<path class="c7" d="M849.3 728.7l6.1-3.3-4.7-4-6.1 3.6z"/>
<path class="c20" d="M782.1 702.4l6.1 4-4.7-4.6-6.1-3.9z"/>
<path class="c22" d="M776 699.8l6.1 2.6-4.7-4.5-6.1-2.5z"/>
<path class="c23" d="M769.9 698.8l6.1 1-4.7-4.4-6.1-.8z"/>
<path class="c24" d="M763.8 699.7l6.1-.9-4.7-4.2-6.1 1.1z"/>
<path class="c17" d="M605 748.2l6.1-1.6-4.7 1-6.1 1.5zM598.9 750.7l6.1-2.5-4.7 .9-6.1 2.4z"/>
<path class="c16" d="M592.8 754l6.1-3.3-4.7 .8-6.1 3.1zM586.7 757.9l6.1-3.9-4.7 .6-6.1 3.7z"/>
<path class="c15" d="M580.6 762.5l6.1-4.6-4.7 .4-6.1 4.3z"/>
<path class="c14" d="M574.5 767.4l6.1-4.9-4.7 .1-6.1 4.6z"/>
<path class="c13" d="M568.4 772.6l6.1-5.2-4.7-.2-6.1 4.8z"/>
<path class="c11" d="M562.3 777.8l6.1-5.2-4.7-.6-6.1 4.9z"/>
<path class="c10" d="M556.1 782.9l6.2-5.1-4.7-.9-6.1 4.9z"/>
<path class="c9" d="M550 787.8l6.1-4.9-4.6-1.1-6.2 4.6z"/>
<path class="c7" d="M543.9 792.4l6.1-4.6-4.7-1.4-6.1 4.4z"/>
<path class="c6" d="M537.8 796.6l6.1-4.2-4.7-1.6-6.1 4.1z"/>
<path class="c5" d="M531.7 800.5l6.1-3.9-4.7-1.7-6.1 3.8z"/>
<path class="c4" d="M525.6 804.1l6.1-3.6-4.7-1.8-6.1 3.4z"/>
<path class="c3" d="M519.5 807.3l6.1-3.2-4.7-2-6.1 3.2zM513.4 810.1l6.1-2.8-4.7-2-6.1 2.8z"/>
<path class="c2" d="M507.3 812.8l6.1-2.7-4.7-2-6.1 2.7zM501.2 815.2l6.1-2.4-4.7-2-6.1 2.4z"/>
<path class="c1" d="M495.1 817.4l6.1-2.2-4.7-2-6.1 2.2zM489 819.4l6.1-2-4.7-2-6.1 2.1zM482.9 821.3l6.1-1.9-4.7-1.9-6.1 1.9z"/>
<path class="c0" d="M476.8 823.1l6.1-1.8-4.7-1.9-6.1 1.8zM470.6 824.8l6.2-1.7-4.7-1.9-6.1 1.8zM464.5 826.5l6.1-1.7-4.6-1.8-6.2 1.6zM458.4 828l6.1-1.5-4.7-1.9-6.1 1.6zM452.3 829.6l6.1-1.6-4.7-1.8-6.1 1.6z"/>
<path class="c1" d="M1031.1 703.2l6.1-.2-4.7-2.2-6.1 .1zM1025 703.1l6.1 .1-4.7-2.3-6.1-.3z"/>
<path class="c2" d="M1018.9 702.6l6.1 .5-4.7-2.5-6.1-.8z"/>
<path class="c3" d="M1012.8 701.7l6.1 .9-4.7-2.8-6.1-1.3z"/>
<path class="c4" d="M1006.6 700.4l6.2 1.3-4.7-3.2-6.1-1.7z"/>
<path class="c5" d="M1000.5 698.5l6.1 1.9-4.6-3.6-6.2-2.4z"/>
<path class="c6" d="M994.4 696.3l6.1 2.2-4.7-4.1-6.1-2.8z"/>
<path class="c8" d="M988.3 693.6l6.1 2.7-4.7-4.7-6.1-3.3z"/>
<path class="c9" d="M982.2 690.7l6.1 2.9-4.7-5.3-6.1-3.6z"/>
<path class="c11" d="M976.1 687.5l6.1 3.2-4.7-6-6.1-3.8z"/>
<path class="c13" d="M970 684.4l6.1 3.1-4.7-6.6-6.1-3.8z"/>
<path class="c15" d="M963.9 681.5l6.1 2.9-4.7-7.3-6.1-3.6z"/>
<path class="c17" d="M957.8 678.9l6.1 2.6-4.7-8-6.1-3.2z"/>
<path class="c19" d="M951.7 676.9l6.1 2-4.7-8.6-6.1-2.5z"/>
<path class="c20" d="M945.6 675.7l6.1 1.2-4.7-9.1-6.1-1.6z"/>
<path class="c21" d="M939.5 675.4l6.1 .3-4.7-9.5-6.1-.6z"/>
<path class="c22" d="M933.4 676.1l6.1-.7-4.7-9.8-6.1 .6zM927.3 677.8l6.1-1.7-4.7-9.9-6.1 1.8zM921.2 680.6l6.1-2.8-4.7-9.8-6.1 3z"/>
<path class="c21" d="M915 684.3l6.2-3.7-4.7-9.6-6.1 4z"/>
<path class="c20" d="M908.9 688.7l6.1-4.4-4.6-9.3-6.2 5z"/>
<path class="c19" d="M902.8 693.8l6.1-5.1-4.7-8.7-6.1 5.6z"/>
<path class="c17" d="M896.7 699.3l6.1-5.5-4.7-8.2-6.1 6.2z"/>
<path class="c16" d="M890.6 704.9l6.1-5.6-4.7-7.5-6.1 6.3z"/>
<path class="c14" d="M884.5 710.6l6.1-5.7-4.7-6.8-6.1 6.3z"/>
<path class="c12" d="M878.4 716l6.1-5.4-4.7-6.2-6.1 6.1z"/>
<path class="c10" d="M872.3 721.1l6.1-5.1-4.7-5.5-6.1 5.7z"/>
<path class="c8" d="M866.2 725.6l6.1-4.5-4.7-4.9-6.1 5z"/>
<path class="c7" d="M860.1 729.4l6.1-3.8-4.7-4.4-6.1 4.2z"/>
<path class="c6" d="M854 732.4l6.1-3-4.7-4-6.1 3.3z"/>
<path class="c21" d="M780.7 702.9l6.1 2.8-4.7-3.3-6.1-2.6z"/>
<path class="c22" d="M774.6 701.7l6.1 1.2-4.7-3.1-6.1-1z"/>
<path class="c23" d="M768.5 702.4l6.1-.7-4.7-2.9-6.1 .9z"/>
<path class="c18" d="M609.7 747.2l6.1-1.7-4.7 1.1-6.1 1.6zM603.6 749.8l6.1-2.6-4.7 1-6.1 2.5z"/>
<path class="c17" d="M597.5 753.2l6.1-3.4-4.7 .9-6.1 3.3zM591.4 757.5l6.1-4.3-4.7 .8-6.1 3.9z"/>
<path class="c16" d="M585.3 762.3l6.1-4.8-4.7 .4-6.1 4.6z"/>
<path class="c14" d="M579.2 767.5l6.1-5.2-4.7 .2-6.1 4.9z"/>
<path class="c13" d="M573.1 773l6.1-5.5-4.7-.1-6.1 5.2z"/>
<path class="c12" d="M566.9 778.5l6.2-5.5-4.7-.4-6.1 5.2z"/>
<path class="c10" d="M560.8 783.9l6.1-5.4-4.6-.7-6.2 5.1z"/>
<path class="c9" d="M554.7 789.1l6.1-5.2-4.7-1-6.1 4.9z"/>
<path class="c7" d="M548.6 793.9l6.1-4.8-4.7-1.3-6.1 4.6z"/>
<path class="c6" d="M542.5 798.3l6.1-4.4-4.7-1.5-6.1 4.2z"/>
<path class="c5" d="M536.4 802.4l6.1-4.1-4.7-1.7-6.1 3.9z"/>
<path class="c4" d="M530.3 806l6.1-3.6-4.7-1.9-6.1 3.6z"/>
<path class="c3" d="M524.2 809.2l6.1-3.2-4.7-1.9-6.1 3.2zM518.1 812.1l6.1-2.9-4.7-1.9-6.1 2.8z"/>
<path class="c2" d="M512 814.8l6.1-2.7-4.7-2-6.1 2.7zM505.9 817.2l6.1-2.4-4.7-2-6.1 2.4z"/>
<path class="c1" d="M499.8 819.3l6.1-2.1-4.7-2-6.1 2.2zM493.7 821.4l6.1-2.1-4.7-1.9-6.1 2zM487.6 823.2l6.1-1.8-4.7-2-6.1 1.9z"/>
<path class="c0" d="M481.4 825l6.2-1.8-4.7-1.9-6.1 1.8zM475.3 826.7l6.1-1.7-4.6-1.9-6.2 1.7zM469.2 828.3l6.1-1.6-4.7-1.9-6.1 1.7zM463.1 829.9l6.1-1.6-4.7-1.8-6.1 1.5zM457 831.4l6.1-1.5-4.7-1.9-6.1 1.6z"/>
<path class="c1" d="M1035.8 705.6l6.1-.4-4.7-2.2-6.1 .2zM1029.7 705.7l6.1-.1-4.7-2.4-6.1-.1z"/>
<path class="c2" d="M1023.6 705.5l6.1 .2-4.7-2.6-6.1-.5zM1017.4 704.9l6.2 .6-4.7-2.9-6.1-.9z"/>
<path class="c3" d="M1011.3 703.9l6.1 1-4.6-3.2-6.2-1.3z"/>
<path class="c4" d="M1005.2 702.6l6.1 1.3-4.7-3.5-6.1-1.9z"/>
<path class="c5" d="M999.1 700.9l6.1 1.7-4.7-4.1-6.1-2.2z"/>
<path class="c7" d="M993 698.8l6.1 2.1-4.7-4.6-6.1-2.7z"/>
<path class="c8" d="M986.9 696.5l6.1 2.3-4.7-5.2-6.1-2.9z"/>
<path class="c10" d="M980.8 694.1l6.1 2.4-4.7-5.8-6.1-3.2z"/>
<path class="c11" d="M974.7 691.6l6.1 2.5-4.7-6.6-6.1-3.1z"/>
<path class="c13" d="M968.6 689.3l6.1 2.3-4.7-7.2-6.1-2.9z"/>
<path class="c15" d="M962.5 687.3l6.1 2-4.7-7.8-6.1-2.6z"/>
<path class="c16" d="M956.4 685.9l6.1 1.4-4.7-8.4-6.1-2z"/>
<path class="c17" d="M950.3 685l6.1 .9-4.7-9-6.1-1.2z"/>
<path class="c18" d="M944.2 685l6.1 0-4.7-9.3-6.1-.3z"/>
<path class="c19" d="M938.1 685.8l6.1-.8-4.7-9.6-6.1 .7zM932 687.4l6.1-1.6-4.7-9.7-6.1 1.7zM925.8 690l6.2-2.6-4.7-9.6-6.1 2.8z"/>
<path class="c18" d="M919.7 693.3l6.1-3.3-4.6-9.4-6.2 3.7zM913.6 697.3l6.1-4-4.7-9-6.1 4.4z"/>
<path class="c16" d="M907.5 701.8l6.1-4.5-4.7-8.6-6.1 5.1z"/>
<path class="c15" d="M901.4 706.6l6.1-4.8-4.7-8-6.1 5.5z"/>
<path class="c13" d="M895.3 711.6l6.1-5-4.7-7.3-6.1 5.6z"/>
<path class="c12" d="M889.2 716.6l6.1-5-4.7-6.7-6.1 5.7z"/>
<path class="c10" d="M883.1 721.4l6.1-4.8-4.7-6-6.1 5.4z"/>
<path class="c9" d="M877 725.9l6.1-4.5-4.7-5.4-6.1 5.1z"/>
<path class="c7" d="M870.9 729.9l6.1-4-4.7-4.8-6.1 4.5z"/>
<path class="c6" d="M864.8 733.3l6.1-3.4-4.7-4.3-6.1 3.8z"/>
<path class="c5" d="M858.7 736l6.1-2.7-4.7-3.9-6.1 3z"/>
<path class="c4" d="M852.6 737.9l6.1-1.9-4.7-3.6-6.1 2.2z"/>
<path class="c22" d="M779.3 703.1l6.1 1.4-4.7-1.6-6.1-1.2zM773.2 703.5l6.1-.4-4.7-1.4-6.1 .7z"/>
<path class="c23" d="M767.1 705.9l6.1-2.4-4.7-1.1-6.1 2.5z"/>
<path class="c19" d="M614.4 746.1l6.1-1.7-4.7 1.1-6.1 1.7zM608.3 748.9l6.1-2.8-4.7 1.1-6.1 2.6z"/>
<path class="c18" d="M602.2 752.5l6.1-3.6-4.7 .9-6.1 3.4zM596.1 757l6.1-4.5-4.7 .7-6.1 4.3z"/>
<path class="c16" d="M590 762.1l6.1-5.1-4.7 .5-6.1 4.8z"/>
<path class="c15" d="M583.9 767.7l6.1-5.6-4.7 .2-6.1 5.2z"/>
<path class="c14" d="M577.7 773.5l6.2-5.8-4.7-.2-6.1 5.5z"/>
<path class="c12" d="M571.6 779.3l6.1-5.8-4.6-.5-6.2 5.5z"/>
<path class="c11" d="M565.5 785l6.1-5.7-4.7-.8-6.1 5.4z"/>
<path class="c9" d="M559.4 790.4l6.1-5.4-4.7-1.1-6.1 5.2z"/>
<path class="c8" d="M553.3 795.5l6.1-5.1-4.7-1.3-6.1 4.8z"/>
<path class="c6" d="M547.2 800l6.1-4.5-4.7-1.6-6.1 4.4z"/>
<path class="c5" d="M541.1 804.2l6.1-4.2-4.7-1.7-6.1 4.1z"/>
<path class="c4" d="M535 807.9l6.1-3.7-4.7-1.8-6.1 3.6z"/>
<path class="c3" d="M528.9 811.2l6.1-3.3-4.7-1.9-6.1 3.2zM522.8 814.1l6.1-2.9-4.7-2-6.1 2.9z"/>
<path class="c2" d="M516.7 816.8l6.1-2.7-4.7-2-6.1 2.7z"/>
<path class="c1" d="M510.6 819.1l6.1-2.3-4.7-2-6.1 2.4zM504.5 821.3l6.1-2.2-4.7-1.9-6.1 2.1zM498.4 823.3l6.1-2-4.7-2-6.1 2.1z"/>
<path class="c0" d="M492.2 825.1l6.2-1.8-4.7-1.9-6.1 1.8zM486.1 826.9l6.1-1.8-4.6-1.9-6.2 1.8zM480 828.6l6.1-1.7-4.7-1.9-6.1 1.7zM473.9 830.1l6.1-1.5-4.7-1.9-6.1 1.6zM467.8 831.7l6.1-1.6-4.7-1.8-6.1 1.6zM1040.5 707.9l6.1-.6-4.7-2.1-6.1 .4z"/>
<path class="c1" d="M1034.4 708.2l6.1-.3-4.7-2.3-6.1 .1zM1028.2 708.2l6.2 0-4.7-2.5-6.1-.2z"/>
<path class="c2" d="M1022.1 708l6.1 .2-4.6-2.7-6.2-.6zM1016 707.4l6.1 .6-4.7-3.1-6.1-1z"/>
<path class="c3" d="M1009.9 706.5l6.1 .9-4.7-3.5-6.1-1.3z"/>
<path class="c4" d="M1003.8 705.3l6.1 1.2-4.7-3.9-6.1-1.7z"/>
<path class="c5" d="M997.7 703.8l6.1 1.5-4.7-4.4-6.1-2.1z"/>
<path class="c7" d="M991.6 702.1l6.1 1.7-4.7-5-6.1-2.3z"/>
<path class="c8" d="M985.5 700.3l6.1 1.8-4.7-5.6-6.1-2.4z"/>
<path class="c10" d="M979.4 698.5l6.1 1.8-4.7-6.2-6.1-2.5z"/>
<path class="c11" d="M973.3 696.8l6.1 1.7-4.7-6.9-6.1-2.3z"/>
<path class="c12" d="M967.2 695.4l6.1 1.4-4.7-7.5-6.1-2z"/>
<path class="c14" d="M961.1 694.4l6.1 1-4.7-8.1-6.1-1.4z"/>
<path class="c15" d="M955 693.9l6.1 .5-4.7-8.5-6.1-.9zM948.9 694.1l6.1-.2-4.7-8.9-6.1 0z"/>
<path class="c16" d="M942.7 695l6.2-.9-4.7-9.1-6.1 .8zM936.6 696.6l6.1-1.6-4.6-9.2-6.1 1.6zM930.5 698.9l6.1-2.3-4.6-9.2-6.2 2.6zM924.4 701.9l6.1-3-4.7-8.9-6.1 3.3z"/>
<path class="c15" d="M918.3 705.4l6.1-3.5-4.7-8.6-6.1 4z"/>
<path class="c14" d="M912.2 709.4l6.1-4-4.7-8.1-6.1 4.5z"/>
<path class="c13" d="M906.1 713.6l6.1-4.2-4.7-7.6-6.1 4.8z"/>
<path class="c11" d="M900 718l6.1-4.4-4.7-7-6.1 5z"/>
<path class="c10" d="M893.9 722.4l6.1-4.4-4.7-6.4-6.1 5z"/>
<path class="c9" d="M887.8 726.6l6.1-4.2-4.7-5.8-6.1 4.8z"/>
<path class="c7" d="M881.7 730.5l6.1-3.9-4.7-5.2-6.1 4.5z"/>
<path class="c6" d="M875.6 734.1l6.1-3.6-4.7-4.6-6.1 4z"/>
<path class="c5" d="M869.5 737.1l6.1-3-4.7-4.2-6.1 3.4z"/>
<path class="c4" d="M863.4 739.5l6.1-2.4-4.7-3.8-6.1 2.7zM857.3 741.1l6.1-1.6-4.7-3.5-6.1 1.9z"/>
<path class="c23" d="M771.8 705.6l6.1-2.3-4.7 .2-6.1 2.4z"/>
<path class="c20" d="M625.2 743.6l6.1-.8-4.7 .9-6.1 .7zM619.1 745.4l6.1-1.8-4.7 .8-6.1 1.7zM613 748.2l6.1-2.8-4.7 .7-6.1 2.8z"/>
<path class="c19" d="M606.9 752l6.1-3.8-4.7 .7-6.1 3.6z"/>
<path class="c18" d="M600.8 756.8l6.1-4.8-4.7 .5-6.1 4.5z"/>
<path class="c17" d="M594.7 762.2l6.1-5.4-4.7 .2-6.1 5.1z"/>
<path class="c16" d="M588.5 768l6.2-5.8-4.7-.1-6.1 5.6z"/>
<path class="c14" d="M582.4 774.1l6.1-6.1-4.6-.3-6.2 5.8z"/>
<path class="c13" d="M576.3 780.3l6.1-6.2-4.7-.6-6.1 5.8z"/>
<path class="c11" d="M570.2 786.2l6.1-5.9-4.7-1-6.1 5.7z"/>
<path class="c9" d="M564.1 791.8l6.1-5.6-4.7-1.2-6.1 5.4z"/>
<path class="c8" d="M558 797l6.1-5.2-4.7-1.4-6.1 5.1z"/>
<path class="c6" d="M551.9 801.8l6.1-4.8-4.7-1.5-6.1 4.5z"/>
<path class="c5" d="M545.8 806l6.1-4.2-4.7-1.8-6.1 4.2z"/>
<path class="c4" d="M539.7 809.8l6.1-3.8-4.7-1.8-6.1 3.7z"/>
<path class="c3" d="M533.6 813.1l6.1-3.3-4.7-1.9-6.1 3.3z"/>
<path class="c2" d="M527.5 816.1l6.1-3-4.7-1.9-6.1 2.9zM521.4 818.7l6.1-2.6-4.7-2-6.1 2.7z"/>
<path class="c1" d="M515.3 821.1l6.1-2.4-4.7-1.9-6.1 2.3zM509.2 823.2l6.1-2.1-4.7-2-6.1 2.2zM503 825.2l6.2-2-4.7-1.9-6.1 2z"/>
<path class="c0" d="M496.9 827l6.1-1.8-4.6-1.9-6.2 1.8zM490.8 828.8l6.1-1.8-4.7-1.9-6.1 1.8zM484.7 830.4l6.1-1.6-4.7-1.9-6.1 1.7zM478.6 832l6.1-1.6-4.7-1.8-6.1 1.5zM472.5 833.5l6.1-1.5-4.7-1.9-6.1 1.6zM1045.2 710.1l6.1-.7-4.7-2.1-6.1 .6z"/>
<path class="c1" d="M1039 710.6l6.2-.5-4.7-2.2-6.1 .3zM1032.9 710.9l6.1-.3-4.6-2.4-6.2 0zM1026.8 710.9l6.1 0-4.7-2.7-6.1-.2z"/>
<path class="c2" d="M1020.7 710.7l6.1 .2-4.7-2.9-6.1-.6z"/>
<path class="c3" d="M1014.6 710.2l6.1 .5-4.7-3.3-6.1-.9z"/>
<path class="c4" d="M1008.5 709.5l6.1 .7-4.7-3.7-6.1-1.2zM1002.4 708.5l6.1 1-4.7-4.2-6.1-1.5z"/>
<path class="c6" d="M996.3 707.4l6.1 1.1-4.7-4.7-6.1-1.7z"/>
<path class="c7" d="M990.2 706.2l6.1 1.2-4.7-5.3-6.1-1.8z"/>
<path class="c8" d="M984.1 704.9l6.1 1.3-4.7-5.9-6.1-1.8z"/>
<path class="c9" d="M978 703.8l6.1 1.1-4.7-6.4-6.1-1.7z"/>
<path class="c10" d="M971.9 702.9l6.1 .9-4.7-7-6.1-1.4z"/>
<path class="c11" d="M965.8 702.3l6.1 .6-4.7-7.5-6.1-1z"/>
<path class="c12" d="M959.7 702.2l6.1 .1-4.7-7.9-6.1-.5z"/>
<path class="c13" d="M953.5 702.6l6.2-.4-4.7-8.3-6.1 .2zM947.4 703.5l6.1-.9-4.6-8.5-6.2 .9zM941.3 705.1l6.1-1.6-4.7-8.5-6.1 1.6zM935.2 707.2l6.1-2.1-4.7-8.5-6.1 2.3zM929.1 709.9l6.1-2.7-4.7-8.3-6.1 3z"/>
<path class="c12" d="M923 713l6.1-3.1-4.7-8-6.1 3.5z"/>
<path class="c11" d="M916.9 716.5l6.1-3.5-4.7-7.6-6.1 4z"/>
<path class="c10" d="M910.8 720.2l6.1-3.7-4.7-7.1-6.1 4.2z"/>
<path class="c9" d="M904.7 724l6.1-3.8-4.7-6.6-6.1 4.4z"/>
<path class="c8" d="M898.6 727.8l6.1-3.8-4.7-6-6.1 4.4z"/>
<path class="c7" d="M892.5 731.5l6.1-3.7-4.7-5.4-6.1 4.2z"/>
<path class="c6" d="M886.4 734.9l6.1-3.4-4.7-4.9-6.1 3.9z"/>
<path class="c5" d="M880.3 738l6.1-3.1-4.7-4.4-6.1 3.6z"/>
<path class="c4" d="M874.2 740.6l6.1-2.6-4.7-3.9-6.1 3zM868 742.7l6.2-2.1-4.7-3.5-6.1 2.4z"/>
<path class="c3" d="M861.9 744.1l6.1-1.4-4.6-3.2-6.1 1.6z"/>
<path class="c24" d="M776.4 704.1l6.2-2-4.7 1.2-6.1 2.3z"/>
<path class="c23" d="M770.3 707.7l6.1-3.6-4.6 1.5-6.2 3.7zM672.6 731.1l6.1-12.2-4.7 9.1-6.1 8.7z"/>
<path class="c20" d="M666.5 738.6l6.1-7.5-4.7 5.6-6.1 5.1z"/>
<path class="c19" d="M660.4 742.2l6.1-3.6-4.7 3.2-6.1 2.1z"/>
<path class="c18" d="M654.3 743.2l6.1-1-4.7 1.7-6.1 .2z"/>
<path class="c21" d="M629.9 743.1l6.1-.8-4.7 .5-6.1 .8zM623.8 745l6.1-1.9-4.7 .5-6.1 1.8zM617.7 747.9l6.1-2.9-4.7 .4-6.1 2.8z"/>
<path class="c20" d="M611.6 752l6.1-4.1-4.7 .3-6.1 3.8z"/>
<path class="c19" d="M605.4 756.9l6.2-4.9-4.7 0-6.1 4.8z"/>
<path class="c18" d="M599.3 762.5l6.1-5.6-4.6-.1-6.1 5.4z"/>
<path class="c17" d="M593.2 768.7l6.1-6.2-4.6-.3-6.2 5.8z"/>
<path class="c15" d="M587.1 775l6.1-6.3-4.7-.7-6.1 6.1z"/>
<path class="c13" d="M581 781.4l6.1-6.4-4.7-.9-6.1 6.2z"/>
<path class="c11" d="M574.9 787.5l6.1-6.1-4.7-1.1-6.1 5.9z"/>
<path class="c9" d="M568.8 793.3l6.1-5.8-4.7-1.3-6.1 5.6z"/>
<path class="c8" d="M562.7 798.7l6.1-5.4-4.7-1.5-6.1 5.2z"/>
<path class="c6" d="M556.6 803.6l6.1-4.9-4.7-1.7-6.1 4.8z"/>
<path class="c5" d="M550.5 807.9l6.1-4.3-4.7-1.8-6.1 4.2z"/>
<path class="c4" d="M544.4 811.7l6.1-3.8-4.7-1.9-6.1 3.8z"/>
<path class="c3" d="M538.3 815.1l6.1-3.4-4.7-1.9-6.1 3.3z"/>
<path class="c2" d="M532.2 818.1l6.1-3-4.7-2-6.1 3zM526.1 820.7l6.1-2.6-4.7-2-6.1 2.6z"/>
<path class="c1" d="M520 823.1l6.1-2.4-4.7-2-6.1 2.4zM513.8 825.2l6.2-2.1-4.7-2-6.1 2.1zM507.7 827.1l6.1-1.9-4.6-2-6.2 2z"/>
<path class="c0" d="M501.6 828.9l6.1-1.8-4.7-1.9-6.1 1.8zM495.5 830.6l6.1-1.7-4.7-1.9-6.1 1.8zM489.4 832.2l6.1-1.6-4.7-1.8-6.1 1.6zM483.3 833.8l6.1-1.6-4.7-1.8-6.1 1.6zM477.2 835.3l6.1-1.5-4.7-1.8-6.1 1.5zM1049.8 712.3l6.2-.8-4.7-2.1-6.1 .7zM1043.7 713l6.1-.7-4.6-2.2-6.2 .5z"/>
<path class="c1" d="M1037.6 713.5l6.1-.5-4.7-2.4-6.1 .3zM1031.5 713.8l6.1-.3-4.7-2.6-6.1 0z"/>
<path class="c2" d="M1025.4 713.9l6.1-.1-4.7-2.9-6.1-.2zM1019.3 713.7l6.1 .2-4.7-3.2-6.1-.5z"/>
<path class="c3" d="M1013.2 713.4l6.1 .3-4.7-3.5-6.1-.7z"/>
<path class="c4" d="M1007.1 712.9l6.1 .5-4.7-3.9-6.1-1zM1001 712.3l6.1 .6-4.7-4.4-6.1-1.1z"/>
<path class="c5" d="M994.9 711.5l6.1 .8-4.7-4.9-6.1-1.2z"/>
<path class="c6" d="M988.8 710.8l6.1 .7-4.7-5.3-6.1-1.3z"/>
<path class="c7" d="M982.7 710.2l6.1 .6-4.7-5.9-6.1-1.1z"/>
<path class="c8" d="M976.6 709.7l6.1 .5-4.7-6.4-6.1-.9z"/>
<path class="c9" d="M970.5 709.5l6.1 .2-4.7-6.8-6.1-.6z"/>
<path class="c10" d="M964.3 709.7l6.2-.2-4.7-7.2-6.1-.1zM958.2 710.3l6.1-.6-4.6-7.5-6.2 .4z"/>
<path class="c11" d="M952.1 711.3l6.1-1-4.7-7.7-6.1 .9zM946 712.8l6.1-1.5-4.7-7.8-6.1 1.6zM939.9 714.8l6.1-2-4.7-7.7-6.1 2.1z"/>
<path class="c10" d="M933.8 717.2l6.1-2.4-4.7-7.6-6.1 2.7zM927.7 719.9l6.1-2.7-4.7-7.3-6.1 3.1z"/>
<path class="c9" d="M921.6 723l6.1-3.1-4.7-6.9-6.1 3.5z"/>
<path class="c8" d="M915.5 726.2l6.1-3.2-4.7-6.5-6.1 3.7zM909.4 729.5l6.1-3.3-4.7-6-6.1 3.8z"/>
<path class="c7" d="M903.3 732.8l6.1-3.3-4.7-5.5-6.1 3.8z"/>
<path class="c6" d="M897.2 736l6.1-3.2-4.7-5-6.1 3.7z"/>
<path class="c5" d="M891.1 738.9l6.1-2.9-4.7-4.5-6.1 3.4z"/>
<path class="c4" d="M885 741.6l6.1-2.7-4.7-4-6.1 3.1z"/>
<path class="c3" d="M878.8 743.9l6.2-2.3-4.7-3.6-6.1 2.6zM872.7 745.7l6.1-1.8-4.6-3.3-6.2 2.1zM866.6 746.9l6.1-1.2-4.7-3-6.1 1.4z"/>
<path class="c24" d="M775 705.6l6.1-3.5-4.7 2-6.1 3.6zM768.9 709.4l6.1-3.8-4.7 2.1-6.1 4z"/>
<path class="c40" d="M689.5 689.3l6.1-24.9-4.7 17.6-6.1 19.9z"/>
<path class="c33" d="M683.4 710.6l6.1-21.3-4.7 12.6-6.1 17z"/>
<path class="c27" d="M677.3 726.3l6.1-15.7-4.7 8.3-6.1 12.2z"/>
<path class="c23" d="M671.2 736l6.1-9.7-4.7 4.8-6.1 7.5z"/>
<path class="c21" d="M665.1 741l6.1-5-4.7 2.6-6.1 3.6z"/>
<path class="c20" d="M659 742.7l6.1-1.7-4.7 1.2-6.1 1z"/>
<path class="c22" d="M634.6 743.3l6.1-.9-4.7-.1-6.1 .8zM628.5 745.2l6.1-1.9-4.7-.2-6.1 1.9zM622.4 748.3l6.1-3.1-4.7-.2-6.1 2.9z"/>
<path class="c21" d="M616.2 752.4l6.2-4.1-4.7-.4-6.1 4.1z"/>
<path class="c20" d="M610.1 757.5l6.1-5.1-4.6-.4-6.2 4.9z"/>
<path class="c19" d="M604 763.4l6.1-5.9-4.7-.6-6.1 5.6z"/>
<path class="c17" d="M597.9 769.7l6.1-6.3-4.7-.9-6.1 6.2z"/>
<path class="c15" d="M591.8 776.2l6.1-6.5-4.7-1-6.1 6.3z"/>
<path class="c13" d="M585.7 782.7l6.1-6.5-4.7-1.2-6.1 6.4z"/>
<path class="c11" d="M579.6 789.1l6.1-6.4-4.7-1.3-6.1 6.1z"/>
<path class="c10" d="M573.5 795l6.1-5.9-4.7-1.6-6.1 5.8z"/>
<path class="c8" d="M567.4 800.5l6.1-5.5-4.7-1.7-6.1 5.4z"/>
<path class="c6" d="M561.3 805.4l6.1-4.9-4.7-1.8-6.1 4.9z"/>
<path class="c5" d="M555.2 809.8l6.1-4.4-4.7-1.8-6.1 4.3z"/>
<path class="c4" d="M549.1 813.7l6.1-3.9-4.7-1.9-6.1 3.8z"/>
<path class="c3" d="M543 817.1l6.1-3.4-4.7-2-6.1 3.4z"/>
<path class="c2" d="M536.9 820l6.1-2.9-4.7-2-6.1 3zM530.8 822.7l6.1-2.7-4.7-1.9-6.1 2.6z"/>
<path class="c1" d="M524.6 825l6.2-2.3-4.7-2-6.1 2.4zM518.5 827.1l6.1-2.1-4.6-1.9-6.2 2.1zM512.4 829l6.1-1.9-4.7-1.9-6.1 1.9z"/>
<path class="c0" d="M506.3 830.8l6.1-1.8-4.7-1.9-6.1 1.8zM500.2 832.5l6.1-1.7-4.7-1.9-6.1 1.7zM494.1 834.1l6.1-1.6-4.7-1.9-6.1 1.6zM488 835.6l6.1-1.5-4.7-1.9-6.1 1.6zM1054.5 714.4l6.1-.9-4.6-2-6.2 .8zM1048.4 715.3l6.1-.9-4.7-2.1-6.1 .7zM1042.3 715.9l6.1-.6-4.7-2.3-6.1 .5z"/>
<path class="c1" d="M1036.2 716.4l6.1-.5-4.7-2.4-6.1 .3zM1030.1 716.8l6.1-.4-4.7-2.6-6.1 .1z"/>
<path class="c2" d="M1024 717l6.1-.2-4.7-2.9-6.1-.2zM1017.9 717l6.1 0-4.7-3.3-6.1-.3z"/>
<path class="c3" d="M1011.8 716.9l6.1 .1-4.7-3.6-6.1-.5zM1005.7 716.7l6.1 .2-4.7-4-6.1-.6z"/>
<path class="c4" d="M999.6 716.4l6.1 .3-4.7-4.4-6.1-.8z"/>
<path class="c5" d="M993.5 716.1l6.1 .3-4.7-4.9-6.1-.7z"/>
<path class="c6" d="M987.4 715.9l6.1 .2-4.7-5.3-6.1-.6zM981.3 715.9l6.1 0-4.7-5.7-6.1-.5z"/>
<path class="c7" d="M975.1 716l6.2-.1-4.7-6.2-6.1-.2z"/>
<path class="c8" d="M969 716.4l6.1-.4-4.6-6.5-6.2 .2zM962.9 717.1l6.1-.7-4.7-6.7-6.1 .6zM956.8 718.2l6.1-1.1-4.7-6.8-6.1 1z"/>
<path class="c9" d="M950.7 719.7l6.1-1.5-4.7-6.9-6.1 1.5z"/>
<path class="c8" d="M944.6 721.5l6.1-1.8-4.7-6.9-6.1 2zM938.5 723.7l6.1-2.2-4.7-6.7-6.1 2.4zM932.4 726.2l6.1-2.5-4.7-6.5-6.1 2.7z"/>
<path class="c7" d="M926.3 728.8l6.1-2.6-4.7-6.3-6.1 3.1zM920.2 731.6l6.1-2.8-4.7-5.8-6.1 3.2z"/>
<path class="c6" d="M914.1 734.5l6.1-2.9-4.7-5.4-6.1 3.3z"/>
<path class="c5" d="M908 737.3l6.1-2.8-4.7-5-6.1 3.3z"/>
<path class="c4" d="M901.9 740.1l6.1-2.8-4.7-4.5-6.1 3.2zM895.8 742.7l6.1-2.6-4.7-4.1-6.1 2.9z"/>
<path class="c3" d="M889.6 745l6.2-2.3-4.7-3.8-6.1 2.7zM883.5 747l6.1-2-4.6-3.4-6.2 2.3z"/>
<path class="c2" d="M877.4 748.5l6.1-1.5-4.7-3.1-6.1 1.8zM871.3 749.5l6.1-1-4.7-2.8-6.1 1.2zM865.2 749.7l6.1-.2-4.7-2.6-6.1 .4z"/>
<path class="c26" d="M779.7 703.3l6.1-3.5-4.7 2.3-6.1 3.5z"/>
<path class="c25" d="M773.6 707l6.1-3.7-4.7 2.3-6.1 3.8z"/>
<path class="c56" d="M700.3 651.9l6.1-28-4.7 16-6.1 24.5z"/>
<path class="c47" d="M694.2 680.5l6.1-28.6-4.7 12.5-6.1 24.9z"/>
<path class="c38" d="M688.1 705.1l6.1-24.6-4.7 8.8-6.1 21.3z"/>
<path class="c31" d="M682 723.2l6.1-18.1-4.7 5.5-6.1 15.7z"/>
<path class="c25" d="M675.9 734.7l6.1-11.5-4.7 3.1-6.1 9.7z"/>
<path class="c22" d="M669.8 740.6l6.1-5.9-4.7 1.3-6.1 5z"/>
<path class="c21" d="M663.7 743l6.1-2.4-4.7 .4-6.1 1.7zM657.6 743.4l6.1-.4-4.7-.3-6.1 .1zM651.5 743.2l6.1 .2-4.7-.6-6.1-.4z"/>
<path class="c22" d="M645.4 743.3l6.1-.1-4.7-.8-6.1 0zM639.3 744.2l6.1-.9-4.7-.9-6.1 .9zM633.2 746.2l6.1-2-4.7-.9-6.1 1.9zM627 749.3l6.2-3.1-4.7-1-6.1 3.1zM620.9 753.6l6.1-4.3-4.6-1-6.2 4.1z"/>
<path class="c20" d="M614.8 758.8l6.1-5.2-4.7-1.2-6.1 5.1z"/>
<path class="c19" d="M608.7 764.7l6.1-5.9-4.7-1.3-6.1 5.9z"/>
<path class="c17" d="M602.6 771.2l6.1-6.5-4.7-1.3-6.1 6.3z"/>
<path class="c15" d="M596.5 777.8l6.1-6.6-4.7-1.5-6.1 6.5z"/>
<path class="c14" d="M590.4 784.5l6.1-6.7-4.7-1.6-6.1 6.5z"/>
<path class="c12" d="M584.3 790.9l6.1-6.4-4.7-1.8-6.1 6.4z"/>
<path class="c10" d="M578.2 796.9l6.1-6-4.7-1.8-6.1 5.9z"/>
<path class="c8" d="M572.1 802.4l6.1-5.5-4.7-1.9-6.1 5.5z"/>
<path class="c6" d="M566 807.4l6.1-5-4.7-1.9-6.1 4.9z"/>
<path class="c5" d="M559.9 811.8l6.1-4.4-4.7-2-6.1 4.4z"/>
<path class="c4" d="M553.8 815.7l6.1-3.9-4.7-2-6.1 3.9z"/>
<path class="c3" d="M547.7 819.1l6.1-3.4-4.7-2-6.1 3.4z"/>
<path class="c2" d="M541.5 822l6.2-2.9-4.7-2-6.1 2.9zM535.4 824.6l6.1-2.6-4.6-2-6.1 2.7z"/>
<path class="c1" d="M529.3 826.9l6.1-2.3-4.6-1.9-6.2 2.3zM523.2 829l6.1-2.1-4.7-1.9-6.1 2.1z"/>
<path class="c0" d="M517.1 830.9l6.1-1.9-4.7-1.9-6.1 1.9zM511 832.7l6.1-1.8-4.7-1.9-6.1 1.8zM504.9 834.3l6.1-1.6-4.7-1.9-6.1 1.7zM498.8 835.9l6.1-1.6-4.7-1.8-6.1 1.6zM492.7 837.4l6.1-1.5-4.7-1.8-6.1 1.5zM1059.2 716.5l6.1-1-4.7-2-6.1 .9zM1053.1 717.4l6.1-.9-4.7-2.1-6.1 .9zM1047 718.3l6.1-.9-4.7-2.1-6.1 .6zM1040.9 719l6.1-.7-4.7-2.4-6.1 .5z"/>
<path class="c1" d="M1034.8 719.6l6.1-.6-4.7-2.6-6.1 .4zM1028.7 720l6.1-.4-4.7-2.8-6.1 .2z"/>
<path class="c2" d="M1022.6 720.3l6.1-.3-4.7-3-6.1 0zM1016.5 720.6l6.1-.3-4.7-3.3-6.1-.1z"/>
<path class="c3" d="M1010.4 720.7l6.1-.1-4.7-3.7-6.1-.2zM1004.3 720.8l6.1-.1-4.7-4-6.1-.3z"/>
<path class="c4" d="M998.2 720.9l6.1-.1-4.7-4.4-6.1-.3zM992.1 721l6.1-.1-4.7-4.8-6.1-.2z"/>
<path class="c5" d="M985.9 721.3l6.2-.3-4.7-5.1-6.1 0zM979.8 721.7l6.1-.4-4.6-5.4-6.2 .1z"/>
<path class="c6" d="M973.7 722.3l6.1-.6-4.7-5.7-6.1 .4zM967.6 723.2l6.1-.9-4.7-5.9-6.1 .7zM961.5 724.4l6.1-1.2-4.7-6.1-6.1 1.1z"/>
<path class="c7" d="M955.4 725.8l6.1-1.4-4.7-6.2-6.1 1.5zM949.3 727.5l6.1-1.7-4.7-6.1-6.1 1.8z"/>
<path class="c6" d="M943.2 729.5l6.1-2-4.7-6-6.1 2.2zM937.1 731.6l6.1-2.1-4.7-5.8-6.1 2.5zM931 734l6.1-2.4-4.7-5.4-6.1 2.6z"/>
<path class="c5" d="M924.9 736.4l6.1-2.4-4.7-5.2-6.1 2.8zM918.8 738.9l6.1-2.5-4.7-4.8-6.1 2.9z"/>
<path class="c4" d="M912.7 741.4l6.1-2.5-4.7-4.4-6.1 2.8z"/>
<path class="c3" d="M906.6 743.8l6.1-2.4-4.7-4.1-6.1 2.8zM900.4 746.1l6.2-2.3-4.7-3.7-6.1 2.6z"/>
<path class="c2" d="M894.3 748.1l6.1-2-4.6-3.4-6.2 2.3zM888.2 749.8l6.1-1.7-4.7-3.1-6.1 2zM882.1 751.1l6.1-1.3-4.7-2.8-6.1 1.5zM876 751.9l6.1-.8-4.7-2.6-6.1 1zM869.9 752l6.1-.1-4.7-2.4-6.1 .2z"/>
<path class="c28" d="M790.5 697.9l6.1-2-4.7 2-6.1 1.9z"/>
<path class="c27" d="M784.4 701.5l6.1-3.6-4.7 1.9-6.1 3.5zM778.3 705.3l6.1-3.8-4.7 1.8-6.1 3.7z"/>
<path class="c26" d="M772.2 707.3l6.1-2-4.7 1.7-6.1 2z"/>
<path class="c73" d="M717.2 595.2l6.1-11-4.6 7.6-6.2 10.4z"/>
<path class="c70" d="M711.1 618.1l6.1-22.9-4.7 7-6.1 21.7z"/>
<path class="c62" d="M705 647.6l6.1-29.5-4.7 5.8-6.1 28z"/>
<path class="c52" d="M698.9 677.7l6.1-30.1-4.7 4.3-6.1 28.6z"/>
<path class="c42" d="M692.8 703.6l6.1-25.9-4.7 2.8-6.1 24.6z"/>
<path class="c33" d="M686.7 722.9l6.1-19.3-4.7 1.5-6.1 18.1z"/>
<path class="c27" d="M680.6 735.1l6.1-12.2-4.7 .3-6.1 11.5z"/>
<path class="c23" d="M674.5 741.6l6.1-6.5-4.7-.4-6.1 5.9z"/>
<path class="c22" d="M668.4 744.2l6.1-2.6-4.7-1-6.1 2.4z"/>
<path class="c21" d="M662.3 744.8l6.1-.6-4.7-1.2-6.1 .4z"/>
<path class="c22" d="M656.2 744.7l6.1 .1-4.7-1.4-6.1-.2zM650.1 744.9l6.1-.2-4.7-1.5-6.1 .1z"/>
<path class="c23" d="M644 745.9l6.1-1-4.7-1.6-6.1 .9zM637.8 747.9l6.2-2-4.7-1.7-6.1 2z"/>
<path class="c22" d="M631.7 751.2l6.1-3.3-4.6-1.7-6.2 3.1zM625.6 755.5l6.1-4.3-4.7-1.9-6.1 4.3z"/>
<path class="c21" d="M619.5 760.7l6.1-5.2-4.7-1.9-6.1 5.2z"/>
<path class="c19" d="M613.4 766.7l6.1-6-4.7-1.9-6.1 5.9z"/>
<path class="c17" d="M607.3 773.2l6.1-6.5-4.7-2-6.1 6.5z"/>
<path class="c16" d="M601.2 779.9l6.1-6.7-4.7-2-6.1 6.6z"/>
<path class="c14" d="M595.1 786.6l6.1-6.7-4.7-2.1-6.1 6.7z"/>
<path class="c12" d="M589 793l6.1-6.4-4.7-2.1-6.1 6.4z"/>
<path class="c10" d="M582.9 799l6.1-6-4.7-2.1-6.1 6z"/>
<path class="c8" d="M576.8 804.5l6.1-5.5-4.7-2.1-6.1 5.5z"/>
<path class="c6" d="M570.7 809.5l6.1-5-4.7-2.1-6.1 5z"/>
<path class="c5" d="M564.6 813.9l6.1-4.4-4.7-2.1-6.1 4.4z"/>
<path class="c4" d="M558.5 817.7l6.1-3.8-4.7-2.1-6.1 3.9z"/>
<path class="c3" d="M552.3 821.1l6.2-3.4-4.7-2-6.1 3.4z"/>
<path class="c2" d="M546.2 824l6.1-2.9-4.6-2-6.2 2.9zM540.1 826.6l6.1-2.6-4.7-2-6.1 2.6z"/>
<path class="c1" d="M534 828.9l6.1-2.3-4.7-2-6.1 2.3zM527.9 830.9l6.1-2-4.7-2-6.1 2.1z"/>
<path class="c0" d="M521.8 832.8l6.1-1.9-4.7-1.9-6.1 1.9zM515.7 834.5l6.1-1.7-4.7-1.9-6.1 1.8zM509.6 836.2l6.1-1.7-4.7-1.8-6.1 1.6zM503.5 837.7l6.1-1.5-4.7-1.9-6.1 1.6zM1063.9 718.5l6.1-1.1-4.7-1.9-6.1 1zM1057.8 719.5l6.1-1-4.7-2-6.1 .9zM1051.7 720.5l6.1-1-4.7-2.1-6.1 .9zM1045.6 721.4l6.1-.9-4.7-2.2-6.1 .7zM1039.5 722.1l6.1-.7-4.7-2.4-6.1 .6z"/>
<path class="c1" d="M1033.4 722.8l6.1-.7-4.7-2.5-6.1 .4zM1027.3 723.4l6.1-.6-4.7-2.8-6.1 .3zM1021.2 723.9l6.1-.5-4.7-3.1-6.1 .3z"/>
<path class="c2" d="M1015.1 724.3l6.1-.4-4.7-3.3-6.1 .1zM1009 724.7l6.1-.4-4.7-3.6-6.1 .1z"/>
<path class="c3" d="M1002.9 725.1l6.1-.4-4.7-3.9-6.1 .1zM996.7 725.5l6.2-.4-4.7-4.2-6.1 .1z"/>
<path class="c4" d="M990.6 726.1l6.1-.6-4.6-4.5-6.2 .3zM984.5 726.7l6.1-.6-4.7-4.8-6.1 .4zM978.4 727.5l6.1-.8-4.7-5-6.1 .6z"/>
<path class="c5" d="M972.3 728.5l6.1-1-4.7-5.2-6.1 .9zM966.2 729.7l6.1-1.2-4.7-5.3-6.1 1.2zM960.1 731.1l6.1-1.4-4.7-5.3-6.1 1.4zM954 732.7l6.1-1.6-4.7-5.3-6.1 1.7zM947.9 734.5l6.1-1.8-4.7-5.2-6.1 2zM941.8 736.5l6.1-2-4.7-5-6.1 2.1z"/>
<path class="c4" d="M935.7 738.5l6.1-2-4.7-4.9-6.1 2.4zM929.6 740.7l6.1-2.2-4.7-4.5-6.1 2.4z"/>
<path class="c3" d="M923.5 742.9l6.1-2.2-4.7-4.3-6.1 2.5zM917.4 745.1l6.1-2.2-4.7-4-6.1 2.5zM911.2 747.2l6.2-2.1-4.7-3.7-6.1 2.4z"/>
<path class="c2" d="M905.1 749.1l6.1-1.9-4.6-3.4-6.2 2.3zM899 750.9l6.1-1.8-4.7-3-6.1 2zM892.9 752.4l6.1-1.5-4.7-2.8-6.1 1.7z"/>
<path class="c1" d="M886.8 753.6l6.1-1.2-4.7-2.6-6.1 1.3zM880.7 754.2l6.1-.6-4.7-2.5-6.1 .8z"/>
<path class="c2" d="M874.6 754.1l6.1 .1-4.7-2.3-6.1 .1z"/>
<path class="c29" d="M795.2 696.7l6.1-1.9-4.7 1.1-6.1 2zM789.1 700.5l6.1-3.8-4.7 1.2-6.1 3.6z"/>
<path class="c28" d="M783 704.8l6.1-4.3-4.7 1-6.1 3.8z"/>
<path class="c27" d="M776.9 707.3l6.1-2.5-4.7 .5-6.1 2z"/>
<path class="c75" d="M728 591.1l6.1 3.1-4.6-6.6-6.2-3.4z"/>
<path class="c77" d="M721.9 601.8l6.1-10.7-4.7-6.9-6.1 11z"/>
<path class="c73" d="M715.8 624l6.1-22.2-4.7-6.6-6.1 22.9z"/>
<path class="c65" d="M709.7 652.6l6.1-28.6-4.7-5.9-6.1 29.5z"/>
<path class="c55" d="M703.6 681.8l6.1-29.2-4.7-5-6.1 30.1z"/>
<path class="c44" d="M697.5 707l6.1-25.2-4.7-4.1-6.1 25.9z"/>
<path class="c35" d="M691.4 725.7l6.1-18.7-4.7-3.4-6.1 19.3z"/>
<path class="c28" d="M685.3 737.6l6.1-11.9-4.7-2.8-6.1 12.2z"/>
<path class="c24" d="M679.2 743.9l6.1-6.3-4.7-2.5-6.1 6.5z"/>
<path class="c22" d="M673.1 746.5l6.1-2.6-4.7-2.3-6.1 2.6z"/>
<path class="c21" d="M667 747.1l6.1-.6-4.7-2.3-6.1 .6z"/>
<path class="c22" d="M660.9 747.1l6.1 0-4.7-2.3-6.1-.1zM654.8 747.4l6.1-.3-4.7-2.4-6.1 .2z"/>
<path class="c23" d="M648.6 748.5l6.2-1.1-4.7-2.5-6.1 1zM642.5 750.6l6.1-2.1-4.6-2.6-6.2 2z"/>
<path class="c22" d="M636.4 753.9l6.1-3.3-4.7-2.7-6.1 3.3zM630.3 758.2l6.1-4.3-4.7-2.7-6.1 4.3z"/>
<path class="c21" d="M624.2 763.4l6.1-5.2-4.7-2.7-6.1 5.2z"/>
<path class="c19" d="M618.1 769.4l6.1-6-4.7-2.7-6.1 6z"/>
<path class="c17" d="M612 775.8l6.1-6.4-4.7-2.7-6.1 6.5z"/>
<path class="c15" d="M605.9 782.5l6.1-6.7-4.7-2.6-6.1 6.7z"/>
<path class="c13" d="M599.8 789.1l6.1-6.6-4.7-2.6-6.1 6.7z"/>
<path class="c11" d="M593.7 795.4l6.1-6.3-4.7-2.5-6.1 6.4z"/>
<path class="c10" d="M587.6 801.4l6.1-6-4.7-2.4-6.1 6z"/>
<path class="c8" d="M581.5 806.8l6.1-5.4-4.7-2.4-6.1 5.5z"/>
<path class="c6" d="M575.4 811.7l6.1-4.9-4.7-2.3-6.1 5z"/>
<path class="c5" d="M569.3 816l6.1-4.3-4.7-2.2-6.1 4.4z"/>
<path class="c4" d="M563.1 819.8l6.2-3.8-4.7-2.1-6.1 3.8z"/>
<path class="c3" d="M557 823.1l6.1-3.3-4.6-2.1-6.2 3.4z"/>
<path class="c2" d="M550.9 826l6.1-2.9-4.7-2-6.1 2.9z"/>
<path class="c1" d="M544.8 828.5l6.1-2.5-4.7-2-6.1 2.6zM538.7 830.8l6.1-2.3-4.7-1.9-6.1 2.3zM532.6 832.8l6.1-2-4.7-1.9-6.1 2z"/>
<path class="c0" d="M526.5 834.7l6.1-1.9-4.7-1.9-6.1 1.9zM520.4 836.4l6.1-1.7-4.7-1.9-6.1 1.7zM514.3 838l6.1-1.6-4.7-1.9-6.1 1.7zM508.2 839.5l6.1-1.5-4.7-1.8-6.1 1.5zM1062.5 721.6l6.1-1.1-4.7-2-6.1 1zM1056.4 722.6l6.1-1-4.7-2.1-6.1 1zM1050.3 723.6l6.1-1-4.7-2.1-6.1 .9zM1044.2 724.5l6.1-.9-4.7-2.2-6.1 .7zM1038.1 725.4l6.1-.9-4.7-2.4-6.1 .7z"/>
<path class="c1" d="M1032 726.1l6.1-.7-4.7-2.6-6.1 .6zM1025.9 726.9l6.1-.8-4.7-2.7-6.1 .5zM1019.8 727.5l6.1-.6-4.7-3-6.1 .4z"/>
<path class="c2" d="M1013.6 728.2l6.2-.7-4.7-3.2-6.1 .4zM1007.5 728.8l6.1-.6-4.6-3.5-6.1 .4zM1001.4 729.5l6.1-.7-4.6-3.7-6.2 .4z"/>
<path class="c3" d="M995.3 730.2l6.1-.7-4.7-4-6.1 .6zM989.2 731l6.1-.8-4.7-4.1-6.1 .6zM983.1 732l6.1-1-4.7-4.3-6.1 .8zM977 733l6.1-1-4.7-4.5-6.1 1z"/>
<path class="c4" d="M970.9 734.3l6.1-1.3-4.7-4.5-6.1 1.2zM964.8 735.6l6.1-1.3-4.7-4.6-6.1 1.4zM958.7 737.2l6.1-1.6-4.7-4.5-6.1 1.6z"/>
<path class="c3" d="M952.6 738.9l6.1-1.7-4.7-4.5-6.1 1.8zM946.5 740.6l6.1-1.7-4.7-4.4-6.1 2zM940.4 742.5l6.1-1.9-4.7-4.1-6.1 2zM934.3 744.5l6.1-2-4.7-4-6.1 2.2z"/>
<path class="c2" d="M928.2 746.4l6.1-1.9-4.7-3.8-6.1 2.2zM922 748.3l6.2-1.9-4.7-3.5-6.1 2.2zM915.9 750.2l6.1-1.9-4.6-3.2-6.2 2.1zM909.8 752l6.1-1.8-4.7-3-6.1 1.9z"/>
<path class="c1" d="M903.7 753.5l6.1-1.5-4.7-2.9-6.1 1.8zM897.6 754.9l6.1-1.4-4.7-2.6-6.1 1.5zM891.5 755.9l6.1-1-4.7-2.5-6.1 1.2zM885.4 756.3l6.1-.4-4.7-2.3-6.1 .6zM879.3 756.1l6.1 .2-4.7-2.1-6.1-.1z"/>
<path class="c2" d="M873.2 755l6.1 1.1-4.7-2-6.1-1z"/>
<path class="c30" d="M799.9 696.8l6.1-2-4.7 0-6.1 1.9zM793.8 700.9l6.1-4.1-4.7-.1-6.1 3.8z"/>
<path class="c29" d="M787.7 705.5l6.1-4.6-4.7-.4-6.1 4.3z"/>
<path class="c28" d="M781.6 708.9l6.1-3.4-4.7-.7-6.1 2.5z"/>
<path class="c27" d="M775.5 708.6l6.1 .3-4.7-1.6-6.1-1.7z"/>
<path class="c67" d="M738.8 613.6l6.1 13.7-4.7-17.4-6.1-15.7z"/>
<path class="c73" d="M732.7 611l6.1 2.6-4.7-19.4-6.1-3.1z"/>
<path class="c75" d="M726.6 620.7l6.1-9.7-4.7-19.9-6.1 10.7z"/>
<path class="c71" d="M720.5 640.7l6.1-20-4.7-18.9-6.1 22.2z"/>
<path class="c64" d="M714.4 666.3l6.1-25.6-4.7-16.7-6.1 28.6z"/>
<path class="c53" d="M708.3 692.3l6.1-26-4.7-13.7-6.1 29.2z"/>
<path class="c43" d="M702.2 714.8l6.1-22.5-4.7-10.5-6.1 25.2z"/>
<path class="c34" d="M696.1 731.4l6.1-16.6-4.7-7.8-6.1 18.7z"/>
<path class="c27" d="M690 741.9l6.1-10.5-4.7-5.7-6.1 11.9z"/>
<path class="c24" d="M683.9 747.5l6.1-5.6-4.7-4.3-6.1 6.3z"/>
<path class="c22" d="M677.8 749.8l6.1-2.3-4.7-3.6-6.1 2.6z"/>
<path class="c21" d="M671.7 750.4l6.1-.6-4.7-3.3-6.1 .6zM665.6 750.4l6.1 0-4.7-3.3-6.1 0z"/>
<path class="c22" d="M659.4 750.8l6.2-.4-4.7-3.3-6.1 .3zM653.3 751.9l6.1-1.1-4.6-3.4-6.2 1.1zM647.2 754.1l6.1-2.2-4.7-3.4-6.1 2.1zM641.1 757.4l6.1-3.3-4.7-3.5-6.1 3.3z"/>
<path class="c21" d="M635 761.7l6.1-4.3-4.7-3.5-6.1 4.3z"/>
<path class="c20" d="M628.9 766.9l6.1-5.2-4.7-3.5-6.1 5.2z"/>
<path class="c19" d="M622.8 772.7l6.1-5.8-4.7-3.5-6.1 6z"/>
<path class="c17" d="M616.7 779l6.1-6.3-4.7-3.3-6.1 6.4z"/>
<path class="c15" d="M610.6 785.5l6.1-6.5-4.7-3.2-6.1 6.7z"/>
<path class="c13" d="M604.5 792l6.1-6.5-4.7-3-6.1 6.6z"/>
<path class="c11" d="M598.4 798.2l6.1-6.2-4.7-2.9-6.1 6.3z"/>
<path class="c9" d="M592.3 804l6.1-5.8-4.7-2.8-6.1 6z"/>
<path class="c8" d="M586.2 809.3l6.1-5.3-4.7-2.6-6.1 5.4z"/>
<path class="c6" d="M580.1 814.1l6.1-4.8-4.7-2.5-6.1 4.9z"/>
<path class="c5" d="M573.9 818.3l6.2-4.2-4.7-2.4-6.1 4.3z"/>
<path class="c4" d="M567.8 822l6.1-3.7-4.6-2.3-6.2 3.8z"/>
<path class="c3" d="M561.7 825.2l6.1-3.2-4.7-2.2-6.1 3.3z"/>
<path class="c2" d="M555.6 828l6.1-2.8-4.7-2.1-6.1 2.9z"/>
<path class="c1" d="M549.5 830.5l6.1-2.5-4.7-2-6.1 2.5zM543.4 832.7l6.1-2.2-4.7-2-6.1 2.3zM537.3 834.7l6.1-2-4.7-1.9-6.1 2z"/>
<path class="c0" d="M531.2 836.5l6.1-1.8-4.7-1.9-6.1 1.9zM525.1 838.2l6.1-1.7-4.7-1.8-6.1 1.7zM519 839.8l6.1-1.6-4.7-1.8-6.1 1.6zM512.9 841.3l6.1-1.5-4.7-1.8-6.1 1.5zM1061.1 724.7l6.1-1.2-4.7-1.9-6.1 1zM1055 725.7l6.1-1-4.7-2.1-6.1 1zM1048.9 726.8l6.1-1.1-4.7-2.1-6.1 .9zM1042.8 727.8l6.1-1-4.7-2.3-6.1 .9zM1036.7 728.7l6.1-.9-4.7-2.4-6.1 .7z"/>
<path class="c1" d="M1030.6 729.6l6.1-.9-4.7-2.6-6.1 .8zM1024.4 730.4l6.2-.8-4.7-2.7-6.1 .6zM1018.3 731.2l6.1-.8-4.6-2.9-6.2 .7zM1012.2 732.1l6.1-.9-4.7-3-6.1 .6z"/>
<path class="c2" d="M1006.1 732.9l6.1-.8-4.7-3.3-6.1 .7zM1000 733.8l6.1-.9-4.7-3.4-6.1 .7zM993.9 734.8l6.1-1-4.7-3.6-6.1 .8zM987.8 735.8l6.1-1-4.7-3.8-6.1 1zM981.7 737l6.1-1.2-4.7-3.8-6.1 1zM975.6 738.2l6.1-1.2-4.7-4-6.1 1.3z"/>
<path class="c3" d="M969.5 739.6l6.1-1.4-4.7-3.9-6.1 1.3z"/>
<path class="c2" d="M963.4 741.1l6.1-1.5-4.7-4-6.1 1.6zM957.3 742.6l6.1-1.5-4.7-3.9-6.1 1.7zM951.2 744.3l6.1-1.7-4.7-3.7-6.1 1.7zM945.1 746l6.1-1.7-4.7-3.7-6.1 1.9zM939 747.8l6.1-1.8-4.7-3.5-6.1 2zM932.8 749.5l6.2-1.7-4.7-3.3-6.1 1.9z"/>
<path class="c1" d="M926.7 751.3l6.1-1.8-4.6-3.1-6.2 1.9zM920.6 752.9l6.1-1.6-4.7-3-6.1 1.9zM914.5 754.5l6.1-1.6-4.7-2.7-6.1 1.8zM908.4 756l6.1-1.5-4.7-2.5-6.1 1.5zM902.3 757.2l6.1-1.2-4.7-2.5-6.1 1.4zM896.2 758l6.1-.8-4.7-2.3-6.1 1zM890.1 758.4l6.1-.4-4.7-2.1-6.1 .4zM884 758.2l6.1 .2-4.7-2.1-6.1-.2z"/>
<path class="c2" d="M877.9 757l6.1 1.2-4.7-2.1-6.1-1.1z"/>
<path class="c28" d="M816.8 697l6.1 3.6-4.7-1.6-6.1-3.5z"/>
<path class="c30" d="M810.7 696.3l6.1 .7-4.7-1.5-6.1-.7z"/>
<path class="c31" d="M804.6 698.4l6.1-2.1-4.7-1.5-6.1 2z"/>
<path class="c30" d="M798.5 702.6l6.1-4.2-4.7-1.6-6.1 4.1z"/>
<path class="c29" d="M792.4 707.8l6.1-5.2-4.7-1.7-6.1 4.6z"/>
<path class="c28" d="M786.3 712.2l6.1-4.4-4.7-2.3-6.1 3.4z"/>
<path class="c27" d="M780.2 713.6l6.1-1.4-4.7-3.3-6.1-.3z"/>
<path class="c28" d="M774.1 710.2l6.1 3.4-4.7-5-6.1-6.1z"/>
<path class="c31" d="M768 701l6.1 9.2-4.7-7.7-6.1-13z"/>
<path class="c36" d="M761.8 686.4l6.2 14.6-4.7-11.5-6.1-19.2z"/>
<path class="c44" d="M755.7 668.9l6.1 17.5-4.6-16.1-6.2-22.3z"/>
<path class="c53" d="M749.6 652.6l6.1 16.3-4.7-20.9-6.1-20.7z"/>
<path class="c61" d="M743.5 641.8l6.1 10.8-4.7-25.3-6.1-13.7z"/>
<path class="c67" d="M737.4 640l6.1 1.8-4.7-28.2-6.1-2.6z"/>
<path class="c68" d="M731.3 648.2l6.1-8.2-4.7-29-6.1 9.7z"/>
<path class="c65" d="M725.2 664.7l6.1-16.5-4.7-27.5-6.1 20z"/>
<path class="c58" d="M719.1 685.9l6.1-21.2-4.7-24-6.1 25.6z"/>
<path class="c49" d="M713 707.3l6.1-21.4-4.7-19.6-6.1 26z"/>
<path class="c40" d="M706.9 725.7l6.1-18.4-4.7-15-6.1 22.5z"/>
<path class="c32" d="M700.8 739.3l6.1-13.6-4.7-10.9-6.1 16.6z"/>
<path class="c26" d="M694.7 747.8l6.1-8.5-4.7-7.9-6.1 10.5z"/>
<path class="c23" d="M688.6 752.3l6.1-4.5-4.7-5.9-6.1 5.6z"/>
<path class="c21" d="M682.5 754l6.1-1.7-4.7-4.8-6.1 2.3zM676.4 754.5l6.1-.5-4.7-4.2-6.1 .6zM670.2 754.5l6.2 0-4.7-4.1-6.1 0zM664.1 755l6.1-.5-4.6-4.1-6.2 .4z"/>
<path class="c22" d="M658 756.2l6.1-1.2-4.7-4.2-6.1 1.1zM651.9 758.4l6.1-2.2-4.7-4.3-6.1 2.2z"/>
<path class="c21" d="M645.8 761.7l6.1-3.3-4.7-4.3-6.1 3.3zM639.7 765.9l6.1-4.2-4.7-4.3-6.1 4.3z"/>
<path class="c20" d="M633.6 770.9l6.1-5-4.7-4.2-6.1 5.2z"/>
<path class="c18" d="M627.5 776.6l6.1-5.7-4.7-4-6.1 5.8z"/>
<path class="c16" d="M621.4 782.7l6.1-6.1-4.7-3.9-6.1 6.3z"/>
<path class="c15" d="M615.3 789l6.1-6.3-4.7-3.7-6.1 6.5z"/>
<path class="c13" d="M609.2 795.2l6.1-6.2-4.7-3.5-6.1 6.5z"/>
<path class="c11" d="M603.1 801.2l6.1-6-4.7-3.2-6.1 6.2z"/>
<path class="c9" d="M597 806.8l6.1-5.6-4.7-3-6.1 5.8z"/>
<path class="c7" d="M590.9 811.9l6.1-5.1-4.7-2.8-6.1 5.3z"/>
<path class="c6" d="M584.7 816.5l6.2-4.6-4.7-2.6-6.1 4.8z"/>
<path class="c4" d="M578.6 820.6l6.1-4.1-4.6-2.4-6.2 4.2z"/>
<path class="c3" d="M572.5 824.2l6.1-3.6-4.7-2.3-6.1 3.7z"/>
<path class="c2" d="M566.4 827.3l6.1-3.1-4.7-2.2-6.1 3.2zM560.3 830.1l6.1-2.8-4.7-2.1-6.1 2.8z"/>
<path class="c1" d="M554.2 832.5l6.1-2.4-4.7-2.1-6.1 2.5zM548.1 834.6l6.1-2.1-4.7-2-6.1 2.2z"/>
<path class="c0" d="M542 836.6l6.1-2-4.7-1.9-6.1 2zM535.9 838.4l6.1-1.8-4.7-1.9-6.1 1.8zM529.8 840l6.1-1.6-4.7-1.9-6.1 1.7zM523.7 841.6l6.1-1.6-4.7-1.8-6.1 1.6zM1059.7 727.8l6.1-1.2-4.7-1.9-6.1 1zM1053.6 728.9l6.1-1.1-4.7-2.1-6.1 1.1zM1047.5 730l6.1-1.1-4.7-2.1-6.1 1zM1041.4 731l6.1-1-4.7-2.2-6.1 .9zM1035.2 732l6.2-1-4.7-2.3-6.1 .9zM1029.1 733l6.1-1-4.6-2.4-6.2 .8z"/>
<path class="c1" d="M1023 734l6.1-1-4.7-2.6-6.1 .8zM1016.9 735l6.1-1-4.7-2.8-6.1 .9zM1010.8 736l6.1-1-4.7-2.9-6.1 .8zM1004.7 737l6.1-1-4.7-3.1-6.1 .9zM998.6 738.1l6.1-1.1-4.7-3.2-6.1 1zM992.5 739.2l6.1-1.1-4.7-3.3-6.1 1z"/>
<path class="c2" d="M986.4 740.4l6.1-1.2-4.7-3.4-6.1 1.2zM980.3 741.7l6.1-1.3-4.7-3.4-6.1 1.2zM974.2 743l6.1-1.3-4.7-3.5-6.1 1.4zM968.1 744.4l6.1-1.4-4.7-3.4-6.1 1.5zM962 745.9l6.1-1.5-4.7-3.3-6.1 1.5zM955.9 747.5l6.1-1.6-4.7-3.3-6.1 1.7z"/>
<path class="c1" d="M949.8 749.1l6.1-1.6-4.7-3.2-6.1 1.7zM943.6 750.7l6.2-1.6-4.7-3.1-6.1 1.8zM937.5 752.3l6.1-1.6-4.6-2.9-6.2 1.7zM931.4 753.9l6.1-1.6-4.7-2.8-6.1 1.8zM925.3 755.5l6.1-1.6-4.7-2.6-6.1 1.6zM919.2 756.9l6.1-1.4-4.7-2.6-6.1 1.6zM913.1 758.2l6.1-1.3-4.7-2.4-6.1 1.5zM907 759.3l6.1-1.1-4.7-2.2-6.1 1.2zM900.9 760.1l6.1-.8-4.7-2.1-6.1 .8zM894.8 760.5l6.1-.4-4.7-2.1-6.1 .4zM888.7 760.2l6.1 .3-4.7-2.1-6.1-.2z"/>
<path class="c2" d="M882.6 759l6.1 1.2-4.7-2-6.1-1.2z"/>
<path class="c28" d="M821.5 700l6.1 3.6-4.7-3-6.1-3.6z"/>
<path class="c30" d="M815.4 699.4l6.1 .6-4.7-3-6.1-.7z"/>
<path class="c31" d="M809.3 701.5l6.1-2.1-4.7-3.1-6.1 2.1zM803.2 705.9l6.1-4.4-4.7-3.1-6.1 4.2z"/>
<path class="c29" d="M797.1 711.6l6.1-5.7-4.7-3.3-6.1 5.2z"/>
<path class="c28" d="M791 716.9l6.1-5.3-4.7-3.8-6.1 4.4z"/>
<path class="c27" d="M784.9 720.1l6.1-3.2-4.7-4.7-6.1 1.4zM778.8 719.5l6.1 .6-4.7-6.5-6.1-3.4z"/>
<path class="c29" d="M772.6 714.3l6.2 5.2-4.7-9.3-6.1-9.2z"/>
<path class="c33" d="M766.5 704.8l6.1 9.5-4.6-13.3-6.2-14.6z"/>
<path class="c38" d="M760.4 692.7l6.1 12.1-4.7-18.4-6.1-17.5z"/>
<path class="c46" d="M754.3 681.2l6.1 11.5-4.7-23.8-6.1-16.3z"/>
<path class="c52" d="M748.2 673.6l6.1 7.6-4.7-28.6-6.1-10.8z"/>
<path class="c57" d="M742.1 672.7l6.1 .9-4.7-31.8-6.1-1.8z"/>
<path class="c58" d="M736 679.2l6.1-6.5-4.7-32.7-6.1 8.2z"/>
<path class="c55" d="M729.9 691.9l6.1-12.7-4.7-31-6.1 16.5z"/>
<path class="c50" d="M723.8 708l6.1-16.1-4.7-27.2-6.1 21.2z"/>
<path class="c42" d="M717.7 724.2l6.1-16.2-4.7-22.1-6.1 21.4z"/>
<path class="c35" d="M711.6 738.1l6.1-13.9-4.7-16.9-6.1 18.4z"/>
<path class="c28" d="M705.5 748.2l6.1-10.1-4.7-12.4-6.1 13.6z"/>
<path class="c24" d="M699.4 754.5l6.1-6.3-4.7-8.9-6.1 8.5z"/>
<path class="c21" d="M693.3 757.7l6.1-3.2-4.7-6.7-6.1 4.5z"/>
<path class="c20" d="M687.1 758.9l6.2-1.2-4.7-5.4-6.1 1.7zM681 759.2l6.1-.3-4.6-4.9-6.1 .5zM674.9 759.3l6.1-.1-4.6-4.7-6.2 0zM668.8 759.9l6.1-.6-4.7-4.8-6.1 .5z"/>
<path class="c21" d="M662.7 761.2l6.1-1.3-4.7-4.9-6.1 1.2zM656.6 763.4l6.1-2.2-4.7-5-6.1 2.2z"/>
<path class="c20" d="M650.5 766.6l6.1-3.2-4.7-5-6.1 3.3zM644.4 770.7l6.1-4.1-4.7-4.9-6.1 4.2z"/>
<path class="c19" d="M638.3 775.6l6.1-4.9-4.7-4.8-6.1 5z"/>
<path class="c17" d="M632.2 781.1l6.1-5.5-4.7-4.7-6.1 5.7z"/>
<path class="c16" d="M626.1 786.9l6.1-5.8-4.7-4.5-6.1 6.1z"/>
<path class="c14" d="M620 792.9l6.1-6-4.7-4.2-6.1 6.3z"/>
<path class="c12" d="M613.9 798.8l6.1-5.9-4.7-3.9-6.1 6.2z"/>
<path class="c10" d="M607.8 804.5l6.1-5.7-4.7-3.6-6.1 6z"/>
<path class="c8" d="M601.7 809.8l6.1-5.3-4.7-3.3-6.1 5.6z"/>
<path class="c7" d="M595.5 814.7l6.2-4.9-4.7-3-6.1 5.1z"/>
<path class="c5" d="M589.4 819.1l6.1-4.4-4.6-2.8-6.2 4.6z"/>
<path class="c4" d="M583.3 823l6.1-3.9-4.7-2.6-6.1 4.1z"/>
<path class="c3" d="M577.2 826.5l6.1-3.5-4.7-2.4-6.1 3.6z"/>
<path class="c2" d="M571.1 829.5l6.1-3-4.7-2.3-6.1 3.1zM565 832.1l6.1-2.6-4.7-2.2-6.1 2.8z"/>
<path class="c1" d="M558.9 834.5l6.1-2.4-4.7-2-6.1 2.4zM552.8 836.6l6.1-2.1-4.7-2-6.1 2.1z"/>
<path class="c0" d="M546.7 838.5l6.1-1.9-4.7-2-6.1 2zM540.6 840.2l6.1-1.7-4.7-1.9-6.1 1.8zM534.5 841.9l6.1-1.7-4.7-1.8-6.1 1.6zM528.4 843.4l6.1-1.5-4.7-1.9-6.1 1.6zM1058.3 730.9l6.1-1.1-4.7-2-6.1 1.1zM1052.2 732.1l6.1-1.2-4.7-2-6.1 1.1zM1046 733.2l6.2-1.1-4.7-2.1-6.1 1zM1039.9 734.3l6.1-1.1-4.6-2.2-6.2 1zM1033.8 735.4l6.1-1.1-4.7-2.3-6.1 1zM1027.7 736.5l6.1-1.1-4.7-2.4-6.1 1zM1021.6 737.6l6.1-1.1-4.7-2.5-6.1 1z"/>
<path class="c1" d="M1015.5 738.7l6.1-1.1-4.7-2.6-6.1 1zM1009.4 739.8l6.1-1.1-4.7-2.7-6.1 1zM1003.3 740.9l6.1-1.1-4.7-2.8-6.1 1.1zM997.2 742.1l6.1-1.2-4.7-2.8-6.1 1.1zM991.1 743.4l6.1-1.3-4.7-2.9-6.1 1.2zM985 744.6l6.1-1.2-4.7-3-6.1 1.3zM978.9 746l6.1-1.4-4.7-2.9-6.1 1.3zM972.8 747.4l6.1-1.4-4.7-3-6.1 1.4zM966.7 748.8l6.1-1.4-4.7-3-6.1 1.5zM960.5 750.3l6.2-1.5-4.7-2.9-6.1 1.6zM954.4 751.8l6.1-1.5-4.6-2.8-6.1 1.6zM948.3 753.3l6.1-1.5-4.6-2.7-6.2 1.6zM942.2 754.8l6.1-1.5-4.7-2.6-6.1 1.6zM936.1 756.3l6.1-1.5-4.7-2.5-6.1 1.6z"/>
<path class="c0" d="M930 757.8l6.1-1.5-4.7-2.4-6.1 1.6zM923.9 759.1l6.1-1.3-4.7-2.3-6.1 1.4zM917.8 760.4l6.1-1.3-4.7-2.2-6.1 1.3zM911.7 761.4l6.1-1-4.7-2.2-6.1 1.1zM905.6 762.2l6.1-.8-4.7-2.1-6.1 .8z"/>
<path class="c1" d="M899.5 762.5l6.1-.3-4.7-2.1-6.1 .4zM893.4 762.3l6.1 .2-4.7-2-6.1-.3z"/>
<path class="c2" d="M887.3 761.2l6.1 1.1-4.7-2.1-6.1-1.2zM881.2 759l6.1 2.2-4.7-2.2-6.1-2.2z"/>
<path class="c28" d="M826.2 704.7l6.1 3.4-4.7-4.5-6.1-3.6z"/>
<path class="c30" d="M820.1 704.1l6.1 .6-4.7-4.7-6.1-.6zM814 706.2l6.1-2.1-4.7-4.7-6.1 2.1zM807.9 710.7l6.1-4.5-4.7-4.7-6.1 4.4z"/>
<path class="c29" d="M801.8 716.6l6.1-5.9-4.7-4.8-6.1 5.7z"/>
<path class="c27" d="M795.7 722.7l6.1-6.1-4.7-5-6.1 5.3z"/>
<path class="c26" d="M789.6 727.3l6.1-4.6-4.7-5.8-6.1 3.2z"/>
<path class="c25" d="M783.4 729.3l6.2-2-4.7-7.2-6.1-.6z"/>
<path class="c26" d="M777.3 727.8l6.1 1.5-4.6-9.8-6.2-5.2z"/>
<path class="c28" d="M771.2 722.8l6.1 5-4.7-13.5-6.1-9.5z"/>
<path class="c32" d="M765.1 715.8l6.1 7-4.7-18-6.1-12.1z"/>
<path class="c37" d="M759 708.8l6.1 7-4.7-23.1-6.1-11.5z"/>
<path class="c42" d="M752.9 704.2l6.1 4.6-4.7-27.6-6.1-7.6z"/>
<path class="c45" d="M746.8 704.1l6.1 .1-4.7-30.6-6.1-.9z"/>
<path class="c46" d="M740.7 709l6.1-4.9-4.7-31.4-6.1 6.5z"/>
<path class="c44" d="M734.6 718.1l6.1-9.1-4.7-29.8-6.1 12.7z"/>
<path class="c40" d="M728.5 729.4l6.1-11.3-4.7-26.2-6.1 16.1z"/>
<path class="c35" d="M722.4 740.7l6.1-11.3-4.7-21.4-6.1 16.2z"/>
<path class="c29" d="M716.3 750.3l6.1-9.6-4.7-16.5-6.1 13.9z"/>
<path class="c24" d="M710.2 757.3l6.1-7-4.7-12.2-6.1 10.1z"/>
<path class="c21" d="M704.1 761.5l6.1-4.2-4.7-9.1-6.1 6.3z"/>
<path class="c19" d="M697.9 763.6l6.2-2.1-4.7-7-6.1 3.2z"/>
<path class="c18" d="M691.8 764.3l6.1-.7-4.6-5.9-6.2 1.2zM685.7 764.4l6.1-.1-4.7-5.4-6.1 .3z"/>
<path class="c19" d="M679.6 764.6l6.1-.2-4.7-5.2-6.1 .1zM673.5 765.3l6.1-.7-4.7-5.3-6.1 .6z"/>
<path class="c20" d="M667.4 766.7l6.1-1.4-4.7-5.4-6.1 1.3zM661.3 769l6.1-2.3-4.7-5.5-6.1 2.2z"/>
<path class="c19" d="M655.2 772.1l6.1-3.1-4.7-5.6-6.1 3.2zM649.1 776.1l6.1-4-4.7-5.5-6.1 4.1z"/>
<path class="c18" d="M643 780.7l6.1-4.6-4.7-5.4-6.1 4.9z"/>
<path class="c16" d="M636.9 785.9l6.1-5.2-4.7-5.1-6.1 5.5z"/>
<path class="c15" d="M630.8 791.4l6.1-5.5-4.7-4.8-6.1 5.8z"/>
<path class="c13" d="M624.7 797l6.1-5.6-4.7-4.5-6.1 6z"/>
<path class="c11" d="M618.6 802.6l6.1-5.6-4.7-4.1-6.1 5.9z"/>
<path class="c9" d="M612.4 808l6.2-5.4-4.7-3.8-6.1 5.7z"/>
<path class="c8" d="M606.3 813l6.1-5-4.6-3.5-6.1 5.3z"/>
<path class="c6" d="M600.2 817.6l6.1-4.6-4.6-3.2-6.2 4.9z"/>
<path class="c5" d="M594.1 821.8l6.1-4.2-4.7-2.9-6.1 4.4z"/>
<path class="c4" d="M588 825.5l6.1-3.7-4.7-2.7-6.1 3.9z"/>
<path class="c3" d="M581.9 828.8l6.1-3.3-4.7-2.5-6.1 3.5z"/>
<path class="c2" d="M575.8 831.7l6.1-2.9-4.7-2.3-6.1 3z"/>
<path class="c1" d="M569.7 834.2l6.1-2.5-4.7-2.2-6.1 2.6zM563.6 836.5l6.1-2.3-4.7-2.1-6.1 2.4zM557.5 838.5l6.1-2-4.7-2-6.1 2.1z"/>
<path class="c0" d="M551.4 840.3l6.1-1.8-4.7-1.9-6.1 1.9zM545.3 842.1l6.1-1.8-4.7-1.8-6.1 1.7zM539.2 843.7l6.1-1.6-4.7-1.9-6.1 1.7zM533.1 845.2l6.1-1.5-4.7-1.8-6.1 1.5zM1056.8 734.1l6.2-1.2-4.7-2-6.1 1.2zM1050.7 735.3l6.1-1.2-4.6-2-6.2 1.1zM1044.6 736.5l6.1-1.2-4.7-2.1-6.1 1.1zM1038.5 737.6l6.1-1.1-4.7-2.2-6.1 1.1zM1032.4 738.8l6.1-1.2-4.7-2.2-6.1 1.1zM1026.3 740l6.1-1.2-4.7-2.3-6.1 1.1zM1020.2 741.1l6.1-1.1-4.7-2.4-6.1 1.1zM1014.1 742.3l6.1-1.2-4.7-2.4-6.1 1.1zM1008 743.5l6.1-1.2-4.7-2.5-6.1 1.1zM1001.9 744.7l6.1-1.2-4.7-2.6-6.1 1.2z"/>
<path class="c1" d="M995.8 746l6.1-1.3-4.7-2.6-6.1 1.3zM989.7 747.3l6.1-1.3-4.7-2.6-6.1 1.2zM983.6 748.6l6.1-1.3-4.7-2.7-6.1 1.4zM977.5 750l6.1-1.4-4.7-2.6-6.1 1.4zM971.3 751.4l6.2-1.4-4.7-2.6-6.1 1.4zM965.2 752.8l6.1-1.4-4.6-2.6-6.2 1.5z"/>
<path class="c0" d="M959.1 754.3l6.1-1.5-4.7-2.5-6.1 1.5zM953 755.7l6.1-1.4-4.7-2.5-6.1 1.5zM946.9 757.1l6.1-1.4-4.7-2.4-6.1 1.5zM940.8 758.5l6.1-1.4-4.7-2.3-6.1 1.5zM934.7 759.9l6.1-1.4-4.7-2.2-6.1 1.5zM928.6 761.2l6.1-1.3-4.7-2.1-6.1 1.3zM922.5 762.4l6.1-1.2-4.7-2.1-6.1 1.3zM916.4 763.4l6.1-1-4.7-2-6.1 1zM910.3 764.2l6.1-.8-4.7-2-6.1 .8zM904.2 764.5l6.1-.3-4.7-2-6.1 .3z"/>
<path class="c1" d="M898.1 764.3l6.1 .2-4.7-2-6.1-.2zM892 763.4l6.1 .9-4.7-2-6.1-1.1z"/>
<path class="c2" d="M885.9 761.4l6.1 2-4.7-2.2-6.1-2.2z"/>
<path class="c24" d="M837 714l6.1 5.3-4.7-5.5-6.1-5.7z"/>
<path class="c27" d="M830.9 710.8l6.1 3.2-4.7-5.9-6.1-3.4z"/>
<path class="c28" d="M824.8 710.3l6.1 .5-4.7-6.1-6.1-.6z"/>
<path class="c29" d="M818.7 712.4l6.1-2.1-4.7-6.2-6.1 2.1zM812.6 716.8l6.1-4.4-4.7-6.2-6.1 4.5z"/>
<path class="c28" d="M806.5 722.8l6.1-6-4.7-6.1-6.1 5.9z"/>
<path class="c26" d="M800.4 729.2l6.1-6.4-4.7-6.2-6.1 6.1z"/>
<path class="c24" d="M794.2 734.8l6.2-5.6-4.7-6.5-6.1 4.6z"/>
<path class="c23" d="M788.1 738.7l6.1-3.9-4.6-7.5-6.2 2zM782 740l6.1-1.3-4.7-9.4-6.1-1.5z"/>
<path class="c24" d="M775.9 738.8l6.1 1.2-4.7-12.2-6.1-5z"/>
<path class="c26" d="M769.8 735.8l6.1 3-4.7-16-6.1-7z"/>
<path class="c29" d="M763.7 732.4l6.1 3.4-4.7-20-6.1-7z"/>
<path class="c32" d="M757.6 730.3l6.1 2.1-4.7-23.6-6.1-4.6z"/>
<path class="c35" d="M751.5 730.8l6.1-.5-4.7-26.1-6.1-.1zM745.4 734.4l6.1-3.6-4.7-26.7-6.1 4.9z"/>
<path class="c34" d="M739.3 740.5l6.1-6.1-4.7-25.4-6.1 9.1z"/>
<path class="c31" d="M733.2 747.9l6.1-7.4-4.7-22.4-6.1 11.3z"/>
<path class="c27" d="M727.1 755.2l6.1-7.3-4.7-18.5-6.1 11.3z"/>
<path class="c23" d="M721 761.3l6.1-6.1-4.7-14.5-6.1 9.6z"/>
<path class="c20" d="M714.9 765.7l6.1-4.4-4.7-11-6.1 7z"/>
<path class="c18" d="M708.7 768.3l6.2-2.6-4.7-8.4-6.1 4.2z"/>
<path class="c17" d="M702.6 769.5l6.1-1.2-4.6-6.8-6.2 2.1zM696.5 769.9l6.1-.4-4.7-5.9-6.1 .7zM690.4 770l6.1-.1-4.7-5.6-6.1 .1z"/>
<path class="c18" d="M684.3 770.3l6.1-.3-4.7-5.6-6.1 .2zM678.2 771.1l6.1-.8-4.7-5.7-6.1 .7zM672.1 772.6l6.1-1.5-4.7-5.8-6.1 1.4zM666 774.9l6.1-2.3-4.7-5.9-6.1 2.3zM659.9 778l6.1-3.1-4.7-5.9-6.1 3.1z"/>
<path class="c17" d="M653.8 781.7l6.1-3.7-4.7-5.9-6.1 4z"/>
<path class="c16" d="M647.7 786.1l6.1-4.4-4.7-5.6-6.1 4.6z"/>
<path class="c15" d="M641.6 791l6.1-4.9-4.7-5.4-6.1 5.2z"/>
<path class="c13" d="M635.5 796.2l6.1-5.2-4.7-5.1-6.1 5.5z"/>
<path class="c12" d="M629.4 801.4l6.1-5.2-4.7-4.8-6.1 5.6z"/>
<path class="c10" d="M623.2 806.6l6.2-5.2-4.7-4.4-6.1 5.6z"/>
<path class="c9" d="M617.1 811.6l6.1-5-4.6-4-6.2 5.4z"/>
<path class="c7" d="M611 816.3l6.1-4.7-4.7-3.6-6.1 5z"/>
<path class="c6" d="M604.9 820.6l6.1-4.3-4.7-3.3-6.1 4.6z"/>
<path class="c5" d="M598.8 824.5l6.1-3.9-4.7-3-6.1 4.2z"/>
<path class="c4" d="M592.7 828l6.1-3.5-4.7-2.7-6.1 3.7z"/>
<path class="c3" d="M586.6 831.1l6.1-3.1-4.7-2.5-6.1 3.3z"/>
<path class="c2" d="M580.5 833.8l6.1-2.7-4.7-2.3-6.1 2.9z"/>
<path class="c1" d="M574.4 836.3l6.1-2.5-4.7-2.1-6.1 2.5zM568.3 838.4l6.1-2.1-4.7-2.1-6.1 2.3zM562.2 840.4l6.1-2-4.7-1.9-6.1 2z"/>
<path class="c0" d="M556.1 842.2l6.1-1.8-4.7-1.9-6.1 1.8zM550 843.9l6.1-1.7-4.7-1.9-6.1 1.8zM543.9 845.5l6.1-1.6-4.7-1.8-6.1 1.6zM1049.3 738.5l6.1-1.2-4.7-2-6.1 1.2zM1043.2 739.7l6.1-1.2-4.7-2-6.1 1.1zM1037.1 740.9l6.1-1.2-4.7-2.1-6.1 1.2zM1031 742.1l6.1-1.2-4.7-2.1-6.1 1.2zM1024.9 743.4l6.1-1.3-4.7-2.1-6.1 1.1zM1018.8 744.6l6.1-1.2-4.7-2.3-6.1 1.2zM1012.7 745.8l6.1-1.2-4.7-2.3-6.1 1.2zM1006.6 747.1l6.1-1.3-4.7-2.3-6.1 1.2zM1000.5 748.4l6.1-1.3-4.7-2.4-6.1 1.3zM994.4 749.7l6.1-1.3-4.7-2.4-6.1 1.3zM988.3 751l6.1-1.3-4.7-2.4-6.1 1.3zM982.1 752.4l6.2-1.4-4.7-2.4-6.1 1.4zM976 753.7l6.1-1.3-4.6-2.4-6.2 1.4zM969.9 755.1l6.1-1.4-4.7-2.3-6.1 1.4zM963.8 756.5l6.1-1.4-4.7-2.3-6.1 1.5zM957.7 757.9l6.1-1.4-4.7-2.2-6.1 1.4zM951.6 759.3l6.1-1.4-4.7-2.2-6.1 1.4zM945.5 760.6l6.1-1.3-4.7-2.2-6.1 1.4zM939.4 762l6.1-1.4-4.7-2.1-6.1 1.4zM933.3 763.2l6.1-1.2-4.7-2.1-6.1 1.3zM927.2 764.4l6.1-1.2-4.7-2-6.1 1.2zM921.1 765.4l6.1-1-4.7-2-6.1 1zM915 766.2l6.1-.8-4.7-2-6.1 .8zM908.9 766.6l6.1-.4-4.7-2-6.1 .3z"/>
<path class="c1" d="M902.8 766.4l6.1 .2-4.7-2.1-6.1-.2zM896.6 765.6l6.2 .8-4.7-2.1-6.1-.9z"/>
<path class="c2" d="M890.5 763.9l6.1 1.7-4.6-2.2-6.1-2z"/>
<path class="c3" d="M884.4 761.1l6.1 2.8-4.6-2.5-6.2-3.1z"/>
<path class="c5" d="M878.3 757.1l6.1 4-4.7-2.8-6.1-4.5z"/>
<path class="c16" d="M853.9 732l6.1 6.9-4.7-5.2-6.1-7.6z"/>
<path class="c20" d="M847.8 725.8l6.1 6.2-4.7-5.9-6.1-6.8z"/>
<path class="c23" d="M841.7 721l6.1 4.8-4.7-6.5-6.1-5.3z"/>
<path class="c25" d="M835.6 718.2l6.1 2.8-4.7-7-6.1-3.2z"/>
<path class="c27" d="M829.5 717.7l6.1 .5-4.7-7.4-6.1-.5z"/>
<path class="c28" d="M823.4 719.8l6.1-2.1-4.7-7.4-6.1 2.1z"/>
<path class="c27" d="M817.3 724l6.1-4.2-4.7-7.4-6.1 4.4z"/>
<path class="c26" d="M811.2 729.7l6.1-5.7-4.7-7.2-6.1 6z"/>
<path class="c24" d="M805 736.1l6.2-6.4-4.7-6.9-6.1 6.4z"/>
<path class="c22" d="M798.9 742.3l6.1-6.2-4.6-6.9-6.2 5.6z"/>
<path class="c21" d="M792.8 747.2l6.1-4.9-4.7-7.5-6.1 3.9z"/>
<path class="c20" d="M786.7 750.4l6.1-3.2-4.7-8.5-6.1 1.3zM780.6 751.7l6.1-1.3-4.7-10.4-6.1-1.2z"/>
<path class="c21" d="M774.5 751.6l6.1 .1-4.7-12.9-6.1-3z"/>
<path class="c22" d="M768.4 750.9l6.1 .7-4.7-15.8-6.1-3.4z"/>
<path class="c24" d="M762.3 750.6l6.1 .3-4.7-18.5-6.1-2.1z"/>
<path class="c25" d="M756.2 751.5l6.1-.9-4.7-20.3-6.1 .5z"/>
<path class="c26" d="M750.1 754.1l6.1-2.6-4.7-20.7-6.1 3.6z"/>
<path class="c25" d="M744 758l6.1-3.9-4.7-19.7-6.1 6.1z"/>
<path class="c23" d="M737.9 762.6l6.1-4.6-4.7-17.5-6.1 7.4z"/>
<path class="c21" d="M731.8 767l6.1-4.4-4.7-14.7-6.1 7.3z"/>
<path class="c19" d="M725.7 770.6l6.1-3.6-4.7-11.8-6.1 6.1z"/>
<path class="c17" d="M719.5 773.2l6.2-2.6-4.7-9.3-6.1 4.4z"/>
<path class="c16" d="M713.4 774.6l6.1-1.4-4.6-7.5-6.2 2.6z"/>
<path class="c15" d="M707.3 775.3l6.1-.7-4.7-6.3-6.1 1.2zM701.2 775.6l6.1-.3-4.7-5.8-6.1 .4z"/>
<path class="c16" d="M695.1 775.8l6.1-.2-4.7-5.7-6.1 .1zM689 776.3l6.1-.5-4.7-5.8-6.1 .3zM682.9 777.2l6.1-.9-4.7-6-6.1 .8z"/>
<path class="c17" d="M676.8 778.8l6.1-1.6-4.7-6.1-6.1 1.5zM670.7 781.1l6.1-2.3-4.7-6.2-6.1 2.3z"/>
<path class="c16" d="M664.6 784l6.1-2.9-4.7-6.2-6.1 3.1zM658.5 787.6l6.1-3.6-4.7-6-6.1 3.7z"/>
<path class="c15" d="M652.4 791.7l6.1-4.1-4.7-5.9-6.1 4.4z"/>
<path class="c14" d="M646.3 796.3l6.1-4.6-4.7-5.6-6.1 4.9z"/>
<path class="c12" d="M640.2 801l6.1-4.7-4.7-5.3-6.1 5.2z"/>
<path class="c11" d="M634 805.9l6.2-4.9-4.7-4.8-6.1 5.2z"/>
<path class="c9" d="M627.9 810.7l6.1-4.8-4.6-4.5-6.2 5.2z"/>
<path class="c8" d="M621.8 815.3l6.1-4.6-4.7-4.1-6.1 5z"/>
<path class="c6" d="M615.7 819.6l6.1-4.3-4.7-3.7-6.1 4.7z"/>
<path class="c5" d="M609.6 823.6l6.1-4-4.7-3.3-6.1 4.3z"/>
<path class="c4" d="M603.5 827.3l6.1-3.7-4.7-3-6.1 3.9z"/>
<path class="c3" d="M597.4 830.5l6.1-3.2-4.7-2.8-6.1 3.5z"/>
<path class="c2" d="M591.3 833.4l6.1-2.9-4.7-2.5-6.1 3.1zM585.2 836l6.1-2.6-4.7-2.3-6.1 2.7z"/>
<path class="c1" d="M579.1 838.3l6.1-2.3-4.7-2.2-6.1 2.5zM573 840.4l6.1-2.1-4.7-2-6.1 2.1z"/>
<path class="c0" d="M566.9 842.3l6.1-1.9-4.7-2-6.1 2zM560.8 844.1l6.1-1.8-4.7-1.9-6.1 1.8zM554.7 845.7l6.1-1.6-4.7-1.9-6.1 1.7zM548.6 847.3l6.1-1.6-4.7-1.8-6.1 1.6zM1035.7 744.2l6.1-1.3-4.7-2-6.1 1.2zM1029.6 745.4l6.1-1.2-4.7-2.1-6.1 1.3zM1023.5 746.7l6.1-1.3-4.7-2-6.1 1.2zM1017.4 748l6.1-1.3-4.7-2.1-6.1 1.2zM1011.3 749.3l6.1-1.3-4.7-2.2-6.1 1.3zM1005.2 750.6l6.1-1.3-4.7-2.2-6.1 1.3zM999.1 751.9l6.1-1.3-4.7-2.2-6.1 1.3zM992.9 753.2l6.2-1.3-4.7-2.2-6.1 1.3zM986.8 754.5l6.1-1.3-4.6-2.2-6.2 1.4zM980.7 755.9l6.1-1.4-4.7-2.1-6.1 1.3zM974.6 757.2l6.1-1.3-4.7-2.2-6.1 1.4zM968.5 758.6l6.1-1.4-4.7-2.1-6.1 1.4zM962.4 760l6.1-1.4-4.7-2.1-6.1 1.4zM956.3 761.3l6.1-1.3-4.7-2.1-6.1 1.4zM950.2 762.6l6.1-1.3-4.7-2-6.1 1.3zM944.1 763.9l6.1-1.3-4.7-2-6.1 1.4zM938 765.2l6.1-1.3-4.7-1.9-6.1 1.2zM931.9 766.3l6.1-1.1-4.7-2-6.1 1.2zM925.8 767.3l6.1-1-4.7-1.9-6.1 1zM919.7 768.1l6.1-.8-4.7-1.9-6.1 .8zM913.6 768.6l6.1-.5-4.7-1.9-6.1 .4z"/>
<path class="c1" d="M907.4 768.6l6.2 0-4.7-2-6.1-.2zM901.3 768l6.1 .6-4.6-2.2-6.2-.8z"/>
<path class="c2" d="M895.2 766.5l6.1 1.5-4.7-2.4-6.1-1.7z"/>
<path class="c3" d="M889.1 764.1l6.1 2.4-4.7-2.6-6.1-2.8z"/>
<path class="c5" d="M883 760.7l6.1 3.4-4.7-3-6.1-4z"/>
<path class="c7" d="M876.9 756.1l6.1 4.6-4.7-3.6-6.1-5.2z"/>
<path class="c9" d="M870.8 750.7l6.1 5.4-4.7-4.2-6.1-6.2z"/>
<path class="c12" d="M864.7 744.7l6.1 6-4.7-5-6.1-6.8z"/>
<path class="c15" d="M858.6 738.6l6.1 6.1-4.7-5.8-6.1-6.9z"/>
<path class="c18" d="M852.5 733.1l6.1 5.5-4.7-6.6-6.1-6.2z"/>
<path class="c21" d="M846.4 728.9l6.1 4.2-4.7-7.3-6.1-4.8z"/>
<path class="c23" d="M840.3 726.4l6.1 2.5-4.7-7.9-6.1-2.8z"/>
<path class="c25" d="M834.2 726.1l6.1 .3-4.7-8.2-6.1-.5zM828.1 728l6.1-1.9-4.7-8.4-6.1 2.1zM822 731.9l6.1-3.9-4.7-8.2-6.1 4.2z"/>
<path class="c24" d="M815.8 737.3l6.2-5.4-4.7-7.9-6.1 5.7z"/>
<path class="c22" d="M809.7 743.4l6.1-6.1-4.6-7.6-6.2 6.4z"/>
<path class="c20" d="M803.6 749.5l6.1-6.1-4.7-7.3-6.1 6.2z"/>
<path class="c19" d="M797.5 754.9l6.1-5.4-4.7-7.2-6.1 4.9z"/>
<path class="c17" d="M791.4 759.1l6.1-4.2-4.7-7.7-6.1 3.2zM785.3 761.9l6.1-2.8-4.7-8.7-6.1 1.3zM779.2 763.5l6.1-1.6-4.7-10.2-6.1-.1zM773.1 764.4l6.1-.9-4.7-11.9-6.1-.7z"/>
<path class="c18" d="M767 765.2l6.1-.8-4.7-13.5-6.1-.3z"/>
<path class="c19" d="M760.9 766.4l6.1-1.2-4.7-14.6-6.1 .9zM754.8 768.3l6.1-1.9-4.7-14.9-6.1 2.6z"/>
<path class="c18" d="M748.7 770.8l6.1-2.5-4.7-14.2-6.1 3.9z"/>
<path class="c17" d="M742.6 773.6l6.1-2.8-4.7-12.8-6.1 4.6z"/>
<path class="c16" d="M736.5 776.1l6.1-2.5-4.7-11-6.1 4.4z"/>
<path class="c15" d="M730.3 778.2l6.2-2.1-4.7-9.1-6.1 3.6z"/>
<path class="c14" d="M724.2 779.7l6.1-1.5-4.6-7.6-6.2 2.6zM718.1 780.5l6.1-.8-4.7-6.5-6.1 1.4zM712 780.9l6.1-.4-4.7-5.9-6.1 .7zM705.9 781.2l6.1-.3-4.7-5.6-6.1 .3zM699.8 781.6l6.1-.4-4.7-5.6-6.1 .2z"/>
<path class="c15" d="M693.7 782.2l6.1-.6-4.7-5.8-6.1 .5zM687.6 783.4l6.1-1.2-4.7-5.9-6.1 .9zM681.5 785l6.1-1.6-4.7-6.2-6.1 1.6zM675.4 787.3l6.1-2.3-4.7-6.2-6.1 2.3zM669.3 790.1l6.1-2.8-4.7-6.2-6.1 2.9z"/>
<path class="c14" d="M663.2 793.5l6.1-3.4-4.7-6.1-6.1 3.6z"/>
<path class="c13" d="M657.1 797.4l6.1-3.9-4.7-5.9-6.1 4.1z"/>
<path class="c12" d="M651 801.5l6.1-4.1-4.7-5.7-6.1 4.6z"/>
<path class="c11" d="M644.8 805.9l6.2-4.4-4.7-5.2-6.1 4.7z"/>
<path class="c10" d="M638.7 810.4l6.1-4.5-4.6-4.9-6.2 4.9z"/>
<path class="c8" d="M632.6 814.8l6.1-4.4-4.7-4.5-6.1 4.8z"/>
<path class="c7" d="M626.5 819l6.1-4.2-4.7-4.1-6.1 4.6z"/>
<path class="c6" d="M620.4 823l6.1-4-4.7-3.7-6.1 4.3z"/>
<path class="c5" d="M614.3 826.6l6.1-3.6-4.7-3.4-6.1 4z"/>
<path class="c4" d="M608.2 830l6.1-3.4-4.7-3-6.1 3.7z"/>
<path class="c3" d="M602.1 833l6.1-3-4.7-2.7-6.1 3.2z"/>
<path class="c2" d="M596 835.7l6.1-2.7-4.7-2.5-6.1 2.9z"/>
<path class="c1" d="M589.9 838.2l6.1-2.5-4.7-2.3-6.1 2.6zM583.8 840.4l6.1-2.2-4.7-2.2-6.1 2.3zM577.7 842.4l6.1-2-4.7-2.1-6.1 2.1z"/>
<path class="c0" d="M571.6 844.2l6.1-1.8-4.7-2-6.1 1.9zM565.5 845.9l6.1-1.7-4.7-1.9-6.1 1.8zM559.3 847.6l6.2-1.7-4.7-1.8-6.1 1.6zM553.2 849.1l6.1-1.5-4.6-1.9-6.1 1.6zM1016 751.3l6.1-1.3-4.7-2-6.1 1.3zM1009.9 752.6l6.1-1.3-4.7-2-6.1 1.3zM1003.7 753.9l6.2-1.3-4.7-2-6.1 1.3zM997.6 755.2l6.1-1.3-4.6-2-6.2 1.3zM991.5 756.6l6.1-1.4-4.7-2-6.1 1.3zM985.4 757.9l6.1-1.3-4.7-2.1-6.1 1.4zM979.3 759.2l6.1-1.3-4.7-2-6.1 1.3zM942.7 767l6.1-1.2-4.7-1.9-6.1 1.3zM936.6 768.2l6.1-1.2-4.7-1.8-6.1 1.1zM930.5 769.2l6.1-1-4.7-1.9-6.1 1zM924.4 770l6.1-.8-4.7-1.9-6.1 .8zM918.2 770.6l6.2-.6-4.7-1.9-6.1 .5z"/>
<path class="c1" d="M912.1 770.7l6.1-.1-4.6-2-6.2 0zM906 770.3l6.1 .4-4.7-2.1-6.1-.6z"/>
<path class="c2" d="M899.9 769.2l6.1 1.1-4.7-2.3-6.1-1.5z"/>
<path class="c3" d="M893.8 767.3l6.1 1.9-4.7-2.7-6.1-2.4z"/>
<path class="c4" d="M887.7 764.4l6.1 2.9-4.7-3.2-6.1-3.4z"/>
<path class="c6" d="M881.6 760.5l6.1 3.9-4.7-3.7-6.1-4.6z"/>
<path class="c8" d="M875.5 755.9l6.1 4.6-4.7-4.4-6.1-5.4z"/>
<path class="c11" d="M869.4 750.7l6.1 5.2-4.7-5.2-6.1-6z"/>
<path class="c13" d="M863.3 745.5l6.1 5.2-4.7-6-6.1-6.1z"/>
<path class="c16" d="M857.2 740.9l6.1 4.6-4.7-6.9-6.1-5.5z"/>
<path class="c19" d="M851.1 737.2l6.1 3.7-4.7-7.8-6.1-4.2z"/>
<path class="c21" d="M845 735.2l6.1 2-4.7-8.3-6.1-2.5z"/>
<path class="c22" d="M838.9 735l6.1 .2-4.7-8.8-6.1-.3z"/>
<path class="c23" d="M832.7 736.7l6.2-1.7-4.7-8.9-6.1 1.9zM826.6 740.3l6.1-3.6-4.6-8.7-6.1 3.9z"/>
<path class="c22" d="M820.5 745.1l6.1-4.8-4.6-8.4-6.2 5.4z"/>
<path class="c20" d="M814.4 750.8l6.1-5.7-4.7-7.8-6.1 6.1z"/>
<path class="c18" d="M808.3 756.5l6.1-5.7-4.7-7.4-6.1 6.1z"/>
<path class="c17" d="M802.2 761.8l6.1-5.3-4.7-7-6.1 5.4z"/>
<path class="c15" d="M796.1 766.3l6.1-4.5-4.7-6.9-6.1 4.2z"/>
<path class="c14" d="M790 769.7l6.1-3.4-4.7-7.2-6.1 2.8z"/>
<path class="c13" d="M783.9 772.2l6.1-2.5-4.7-7.8-6.1 1.6zM777.8 774l6.1-1.8-4.7-8.7-6.1 .9z"/>
<path class="c14" d="M771.7 775.4l6.1-1.4-4.7-9.6-6.1 .8zM765.6 776.8l6.1-1.4-4.7-10.2-6.1 1.2zM759.5 778.3l6.1-1.5-4.7-10.4-6.1 1.9zM753.4 780l6.1-1.7-4.7-10-6.1 2.5z"/>
<path class="c13" d="M747.3 781.7l6.1-1.7-4.7-9.2-6.1 2.8zM741.1 783.2l6.2-1.5-4.7-8.1-6.1 2.5z"/>
<path class="c12" d="M735 784.5l6.1-1.3-4.6-7.1-6.2 2.1zM728.9 785.3l6.1-.8-4.7-6.3-6.1 1.5zM722.8 785.9l6.1-.6-4.7-5.6-6.1 .8zM716.7 786.3l6.1-.4-4.7-5.4-6.1 .4zM710.6 786.8l6.1-.5-4.7-5.4-6.1 .3z"/>
<path class="c13" d="M704.5 787.3l6.1-.5-4.7-5.6-6.1 .4zM698.4 788.2l6.1-.9-4.7-5.7-6.1 .6zM692.3 789.4l6.1-1.2-4.7-6-6.1 1.2zM686.2 791.2l6.1-1.8-4.7-6-6.1 1.6zM680.1 793.4l6.1-2.2-4.7-6.2-6.1 2.3zM674 796.1l6.1-2.7-4.7-6.1-6.1 2.8z"/>
<path class="c12" d="M667.9 799.3l6.1-3.2-4.7-6-6.1 3.4zM661.8 802.9l6.1-3.6-4.7-5.8-6.1 3.9z"/>
<path class="c11" d="M655.6 806.7l6.2-3.8-4.7-5.5-6.1 4.1z"/>
<path class="c10" d="M649.5 810.7l6.1-4-4.6-5.2-6.2 4.4z"/>
<path class="c8" d="M643.4 814.8l6.1-4.1-4.7-4.8-6.1 4.5z"/>
<path class="c7" d="M637.3 818.8l6.1-4-4.7-4.4-6.1 4.4z"/>
<path class="c6" d="M631.2 822.6l6.1-3.8-4.7-4-6.1 4.2z"/>
<path class="c5" d="M625.1 826.2l6.1-3.6-4.7-3.6-6.1 4z"/>
<path class="c4" d="M619 829.6l6.1-3.4-4.7-3.2-6.1 3.6z"/>
<path class="c3" d="M612.9 832.7l6.1-3.1-4.7-3-6.1 3.4z"/>
<path class="c2" d="M606.8 835.5l6.1-2.8-4.7-2.7-6.1 3zM600.7 838l6.1-2.5-4.7-2.5-6.1 2.7z"/>
<path class="c1" d="M594.6 840.3l6.1-2.3-4.7-2.3-6.1 2.5zM588.5 842.4l6.1-2.1-4.7-2.1-6.1 2.2z"/>
<path class="c0" d="M582.4 844.4l6.1-2-4.7-2-6.1 2zM576.3 846.1l6.1-1.7-4.7-2-6.1 1.8zM570.1 847.8l6.2-1.7-4.7-1.9-6.1 1.7zM564 849.4l6.1-1.6-4.6-1.9-6.2 1.7zM941.3 770l6.1-1.1-4.7-1.9-6.1 1.2zM935.2 771.1l6.1-1.1-4.7-1.8-6.1 1zM929 772l6.2-.9-4.7-1.9-6.1 .8zM922.9 772.6l6.1-.6-4.6-2-6.2 .6zM916.8 772.9l6.1-.3-4.7-2-6.1 .1z"/>
<path class="c1" d="M910.7 772.7l6.1 .2-4.7-2.2-6.1-.4z"/>
<path class="c2" d="M904.6 771.9l6.1 .8-4.7-2.4-6.1-1.1zM898.5 770.4l6.1 1.5-4.7-2.7-6.1-1.9z"/>
<path class="c4" d="M892.4 768.1l6.1 2.3-4.7-3.1-6.1-2.9z"/>
<path class="c5" d="M886.3 765l6.1 3.1-4.7-3.7-6.1-3.9z"/>
<path class="c7" d="M880.2 761.2l6.1 3.8-4.7-4.5-6.1-4.6z"/>
<path class="c9" d="M874.1 756.9l6.1 4.3-4.7-5.3-6.1-5.2z"/>
<path class="c12" d="M868 752.6l6.1 4.3-4.7-6.2-6.1-5.2z"/>
<path class="c14" d="M861.9 748.7l6.1 3.9-4.7-7.1-6.1-4.6z"/>
<path class="c17" d="M855.8 745.8l6.1 2.9-4.7-7.8-6.1-3.7z"/>
<path class="c18" d="M849.7 744.1l6.1 1.7-4.7-8.6-6.1-2z"/>
<path class="c20" d="M843.5 744.1l6.2 0-4.7-8.9-6.1-.2zM837.4 745.7l6.1-1.6-4.6-9.1-6.2 1.7zM831.3 748.8l6.1-3.1-4.7-9-6.1 3.6z"/>
<path class="c19" d="M825.2 753.1l6.1-4.3-4.7-8.5-6.1 4.8z"/>
<path class="c18" d="M819.1 758.1l6.1-5-4.7-8-6.1 5.7z"/>
<path class="c16" d="M813 763.3l6.1-5.2-4.7-7.3-6.1 5.7z"/>
<path class="c15" d="M806.9 768.2l6.1-4.9-4.7-6.8-6.1 5.3z"/>
<path class="c13" d="M800.8 772.5l6.1-4.3-4.7-6.4-6.1 4.5z"/>
<path class="c12" d="M794.7 776l6.1-3.5-4.7-6.2-6.1 3.4z"/>
<path class="c11" d="M788.6 778.8l6.1-2.8-4.7-6.3-6.1 2.5zM782.5 780.9l6.1-2.1-4.7-6.6-6.1 1.8zM776.4 782.5l6.1-1.6-4.7-6.9-6.1 1.4zM770.3 784l6.1-1.5-4.7-7.1-6.1 1.4zM764.2 785.3l6.1-1.3-4.7-7.2-6.1 1.5z"/>
<path class="c10" d="M758.1 786.6l6.1-1.3-4.7-7-6.1 1.7zM751.9 787.8l6.2-1.2-4.7-6.6-6.1 1.7zM745.8 788.8l6.1-1-4.6-6.1-6.2 1.5zM739.7 789.7l6.1-.9-4.7-5.6-6.1 1.3zM733.6 790.4l6.1-.7-4.7-5.2-6.1 .8zM727.5 791l6.1-.6-4.7-5.1-6.1 .6z"/>
<path class="c11" d="M721.4 791.5l6.1-.5-4.7-5.1-6.1 .4zM715.3 792.1l6.1-.6-4.7-5.2-6.1 .5zM709.2 792.9l6.1-.8-4.7-5.3-6.1 .5z"/>
<path class="c12" d="M703.1 793.9l6.1-1-4.7-5.6-6.1 .9zM697 795.3l6.1-1.4-4.7-5.7-6.1 1.2zM690.9 797.1l6.1-1.8-4.7-5.9-6.1 1.8zM684.8 799.3l6.1-2.2-4.7-5.9-6.1 2.2z"/>
<path class="c11" d="M678.7 801.9l6.1-2.6-4.7-5.9-6.1 2.7zM672.6 804.9l6.1-3-4.7-5.8-6.1 3.2z"/>
<path class="c10" d="M666.4 808.2l6.2-3.3-4.7-5.6-6.1 3.6z"/>
<path class="c9" d="M660.3 811.7l6.1-3.5-4.6-5.3-6.2 3.8z"/>
<path class="c8" d="M654.2 815.4l6.1-3.7-4.7-5-6.1 4z"/>
<path class="c7" d="M648.1 819l6.1-3.6-4.7-4.7-6.1 4.1z"/>
<path class="c6" d="M642 822.7l6.1-3.7-4.7-4.2-6.1 4z"/>
<path class="c5" d="M635.9 826.1l6.1-3.4-4.7-3.9-6.1 3.8z"/>
<path class="c4" d="M629.8 829.4l6.1-3.3-4.7-3.5-6.1 3.6z"/>
<path class="c3" d="M623.7 832.5l6.1-3.1-4.7-3.2-6.1 3.4zM617.6 835.3l6.1-2.8-4.7-2.9-6.1 3.1z"/>
<path class="c2" d="M611.5 837.9l6.1-2.6-4.7-2.6-6.1 2.8z"/>
<path class="c1" d="M605.4 840.3l6.1-2.4-4.7-2.4-6.1 2.5zM599.3 842.5l6.1-2.2-4.7-2.3-6.1 2.3zM593.2 844.5l6.1-2-4.7-2.2-6.1 2.1z"/>
<path class="c0" d="M587.1 846.3l6.1-1.8-4.7-2.1-6.1 2zM580.9 848l6.2-1.7-4.7-1.9-6.1 1.7zM574.8 849.6l6.1-1.6-4.6-1.9-6.2 1.7zM568.7 851.2l6.1-1.6-4.7-1.8-6.1 1.6zM939.8 772.9l6.2-1-4.7-1.9-6.1 1.1zM933.7 773.9l6.1-1-4.6-1.8-6.2 .9zM927.6 774.6l6.1-.7-4.7-1.9-6.1 .6zM921.5 775.1l6.1-.5-4.7-2-6.1 .3z"/>
<path class="c1" d="M915.4 775.1l6.1 0-4.7-2.2-6.1-.2zM909.3 774.6l6.1 .5-4.7-2.4-6.1-.8z"/>
<path class="c2" d="M903.2 773.6l6.1 1-4.7-2.7-6.1-1.5z"/>
<path class="c3" d="M897.1 771.8l6.1 1.8-4.7-3.2-6.1-2.3z"/>
<path class="c5" d="M891 769.4l6.1 2.4-4.7-3.7-6.1-3.1z"/>
<path class="c6" d="M884.9 766.4l6.1 3-4.7-4.4-6.1-3.8z"/>
<path class="c8" d="M878.8 763l6.1 3.4-4.7-5.2-6.1-4.3z"/>
<path class="c10" d="M872.7 759.6l6.1 3.4-4.7-6.1-6.1-4.3z"/>
<path class="c12" d="M866.6 756.5l6.1 3.1-4.7-7-6.1-3.9z"/>
<path class="c14" d="M860.5 754.2l6.1 2.3-4.7-7.8-6.1-2.9z"/>
<path class="c16" d="M854.3 752.9l6.2 1.3-4.7-8.4-6.1-1.7z"/>
<path class="c17" d="M848.2 753l6.1-.1-4.6-8.8-6.2 0zM842.1 754.5l6.1-1.5-4.7-8.9-6.1 1.6zM836 757.2l6.1-2.7-4.7-8.8-6.1 3.1zM829.9 760.9l6.1-3.7-4.7-8.4-6.1 4.3z"/>
<path class="c16" d="M823.8 765.2l6.1-4.3-4.7-7.8-6.1 5z"/>
<path class="c14" d="M817.7 769.7l6.1-4.5-4.7-7.1-6.1 5.2z"/>
<path class="c13" d="M811.6 774.1l6.1-4.4-4.7-6.4-6.1 4.9z"/>
<path class="c11" d="M805.5 778l6.1-3.9-4.7-5.9-6.1 4.3z"/>
<path class="c10" d="M799.4 781.3l6.1-3.3-4.7-5.5-6.1 3.5z"/>
<path class="c9" d="M793.3 784l6.1-2.7-4.7-5.3-6.1 2.8zM787.2 786.1l6.1-2.1-4.7-5.2-6.1 2.1zM781.1 787.9l6.1-1.8-4.7-5.2-6.1 1.6zM775 789.3l6.1-1.4-4.7-5.4-6.1 1.5zM768.8 790.5l6.2-1.2-4.7-5.3-6.1 1.3zM762.7 791.6l6.1-1.1-4.6-5.2-6.1 1.3zM756.6 792.6l6.1-1-4.6-5-6.2 1.2zM750.5 793.5l6.1-.9-4.7-4.8-6.1 1zM744.4 794.3l6.1-.8-4.7-4.7-6.1 .9zM738.3 795.1l6.1-.8-4.7-4.6-6.1 .7zM732.2 795.8l6.1-.7-4.7-4.7-6.1 .6zM726.1 796.5l6.1-.7-4.7-4.8-6.1 .5z"/>
<path class="c10" d="M720 797.3l6.1-.8-4.7-5-6.1 .6zM713.9 798.2l6.1-.9-4.7-5.2-6.1 .8zM707.8 799.4l6.1-1.2-4.7-5.3-6.1 1zM701.7 800.9l6.1-1.5-4.7-5.5-6.1 1.4zM695.6 802.8l6.1-1.9-4.7-5.6-6.1 1.8zM689.5 804.9l6.1-2.1-4.7-5.7-6.1 2.2zM683.4 807.4l6.1-2.5-4.7-5.6-6.1 2.6z"/>
<path class="c9" d="M677.2 810.2l6.2-2.8-4.7-5.5-6.1 3zM671.1 813.3l6.1-3.1-4.6-5.3-6.2 3.3z"/>
<path class="c8" d="M665 816.5l6.1-3.2-4.7-5.1-6.1 3.5z"/>
<path class="c7" d="M658.9 819.8l6.1-3.3-4.7-4.8-6.1 3.7z"/>
<path class="c6" d="M652.8 823.1l6.1-3.3-4.7-4.4-6.1 3.6z"/>
<path class="c5" d="M646.7 826.4l6.1-3.3-4.7-4.1-6.1 3.7z"/>
<path class="c4" d="M640.6 829.5l6.1-3.1-4.7-3.7-6.1 3.4zM634.5 832.5l6.1-3-4.7-3.4-6.1 3.3z"/>
<path class="c3" d="M628.4 835.3l6.1-2.8-4.7-3.1-6.1 3.1z"/>
<path class="c2" d="M622.3 837.9l6.1-2.6-4.7-2.8-6.1 2.8zM616.2 840.3l6.1-2.4-4.7-2.6-6.1 2.6z"/>
<path class="c1" d="M610.1 842.5l6.1-2.2-4.7-2.4-6.1 2.4zM604 844.6l6.1-2.1-4.7-2.2-6.1 2.2zM597.9 846.5l6.1-1.9-4.7-2.1-6.1 2z"/>
<path class="c0" d="M591.7 848.2l6.2-1.7-4.7-2-6.1 1.8zM585.6 849.9l6.1-1.7-4.6-1.9-6.2 1.7zM579.5 851.5l6.1-1.6-4.7-1.9-6.1 1.6zM573.4 853l6.1-1.5-4.7-1.9-6.1 1.6zM944.5 774.8l6.1-1.1-4.6-1.8-6.2 1zM938.4 775.8l6.1-1-4.7-1.9-6.1 1zM932.3 776.6l6.1-.8-4.7-1.9-6.1 .7zM926.2 777.2l6.1-.6-4.7-2-6.1 .5z"/>
<path class="c1" d="M920.1 777.5l6.1-.3-4.7-2.1-6.1 0zM914 777.3l6.1 .2-4.7-2.4-6.1-.5z"/>
<path class="c2" d="M907.9 776.6l6.1 .7-4.7-2.7-6.1-1z"/>
<path class="c3" d="M901.8 775.4l6.1 1.2-4.7-3-6.1-1.8z"/>
<path class="c4" d="M895.7 773.6l6.1 1.8-4.7-3.6-6.1-2.4z"/>
<path class="c5" d="M889.6 771.4l6.1 2.2-4.7-4.2-6.1-3z"/>
<path class="c7" d="M883.5 768.8l6.1 2.6-4.7-5-6.1-3.4z"/>
<path class="c9" d="M877.4 766.2l6.1 2.6-4.7-5.8-6.1-3.4z"/>
<path class="c10" d="M871.3 763.9l6.1 2.3-4.7-6.6-6.1-3.1z"/>
<path class="c12" d="M865.1 762.2l6.2 1.7-4.7-7.4-6.1-2.3z"/>
<path class="c13" d="M859 761.3l6.1 .9-4.6-8-6.2-1.3z"/>
<path class="c14" d="M852.9 761.5l6.1-.2-4.7-8.4-6.1 .1z"/>
<path class="c15" d="M846.8 762.9l6.1-1.4-4.7-8.5-6.1 1.5zM840.7 765.2l6.1-2.3-4.7-8.4-6.1 2.7z"/>
<path class="c14" d="M834.6 768.4l6.1-3.2-4.7-8-6.1 3.7z"/>
<path class="c13" d="M828.5 772l6.1-3.6-4.7-7.5-6.1 4.3z"/>
<path class="c12" d="M822.4 775.9l6.1-3.9-4.7-6.8-6.1 4.5z"/>
<path class="c11" d="M816.3 779.6l6.1-3.7-4.7-6.2-6.1 4.4z"/>
<path class="c10" d="M810.2 783l6.1-3.4-4.7-5.5-6.1 3.9z"/>
<path class="c9" d="M804.1 786l6.1-3-4.7-5-6.1 3.3z"/>
<path class="c8" d="M798 788.5l6.1-2.5-4.7-4.7-6.1 2.7zM791.9 790.5l6.1-2-4.7-4.5-6.1 2.1z"/>
<path class="c7" d="M785.8 792.2l6.1-1.7-4.7-4.4-6.1 1.8zM779.6 793.5l6.2-1.3-4.7-4.3-6.1 1.4zM773.5 794.7l6.1-1.2-4.6-4.2-6.2 1.2zM767.4 795.8l6.1-1.1-4.7-4.2-6.1 1.1zM761.3 796.8l6.1-1-4.7-4.2-6.1 1zM755.2 797.7l6.1-.9-4.7-4.2-6.1 .9z"/>
<path class="c8" d="M749.1 798.6l6.1-.9-4.7-4.2-6.1 .8zM743 799.4l6.1-.8-4.7-4.3-6.1 .8zM736.9 800.3l6.1-.9-4.7-4.3-6.1 .7zM730.8 801.2l6.1-.9-4.7-4.5-6.1 .7zM724.7 802.2l6.1-1-4.7-4.7-6.1 .8z"/>
<path class="c9" d="M718.6 803.3l6.1-1.1-4.7-4.9-6.1 .9zM712.5 804.7l6.1-1.4-4.7-5.1-6.1 1.2zM706.4 806.2l6.1-1.5-4.7-5.3-6.1 1.5zM700.3 808.1l6.1-1.9-4.7-5.3-6.1 1.9zM694.2 810.2l6.1-2.1-4.7-5.3-6.1 2.1z"/>
<path class="c8" d="M688 812.6l6.2-2.4-4.7-5.3-6.1 2.5zM681.9 815.2l6.1-2.6-4.6-5.2-6.2 2.8z"/>
<path class="c7" d="M675.8 818l6.1-2.8-4.7-5-6.1 3.1zM669.7 820.9l6.1-2.9-4.7-4.7-6.1 3.2z"/>
<path class="c6" d="M663.6 823.9l6.1-3-4.7-4.4-6.1 3.3z"/>
<path class="c5" d="M657.5 826.9l6.1-3-4.7-4.1-6.1 3.3z"/>
<path class="c4" d="M651.4 829.9l6.1-3-4.7-3.8-6.1 3.3zM645.3 832.7l6.1-2.8-4.7-3.5-6.1 3.1z"/>
<path class="c3" d="M639.2 835.5l6.1-2.8-4.7-3.2-6.1 3z"/>
<path class="c2" d="M633.1 838l6.1-2.5-4.7-3-6.1 2.8zM627 840.4l6.1-2.4-4.7-2.7-6.1 2.6z"/>
<path class="c1" d="M620.9 842.6l6.1-2.2-4.7-2.5-6.1 2.4zM614.8 844.7l6.1-2.1-4.7-2.3-6.1 2.2zM608.7 846.6l6.1-1.9-4.7-2.2-6.1 2.1z"/>
<path class="c0" d="M602.5 848.4l6.2-1.8-4.7-2-6.1 1.9zM596.4 850.2l6.1-1.8-4.6-1.9-6.2 1.7zM590.3 851.8l6.1-1.6-4.7-2-6.1 1.7zM584.2 853.3l6.1-1.5-4.7-1.9-6.1 1.6zM949.2 776.6l6.1-1.1-4.7-1.8-6.1 1.1zM943.1 777.7l6.1-1.1-4.7-1.8-6.1 1zM937 778.6l6.1-.9-4.7-1.9-6.1 .8zM930.9 779.3l6.1-.7-4.7-2-6.1 .6zM924.8 779.7l6.1-.4-4.7-2.1-6.1 .3z"/>
<path class="c1" d="M918.7 779.9l6.1-.2-4.7-2.2-6.1-.2zM912.6 779.6l6.1 .3-4.7-2.6-6.1-.7z"/>
<path class="c2" d="M906.5 778.8l6.1 .8-4.7-3-6.1-1.2z"/>
<path class="c3" d="M900.4 777.6l6.1 1.2-4.7-3.4-6.1-1.8z"/>
<path class="c4" d="M894.3 776.1l6.1 1.5-4.7-4-6.1-2.2z"/>
<path class="c6" d="M888.2 774.3l6.1 1.8-4.7-4.7-6.1-2.6z"/>
<path class="c7" d="M882.1 772.4l6.1 1.9-4.7-5.5-6.1-2.6z"/>
<path class="c8" d="M875.9 770.8l6.2 1.6-4.7-6.2-6.1-2.3z"/>
<path class="c10" d="M869.8 769.6l6.1 1.2-4.6-6.9-6.2-1.7z"/>
<path class="c11" d="M863.7 769.1l6.1 .5-4.7-7.4-6.1-.9z"/>
<path class="c12" d="M857.6 769.4l6.1-.3-4.7-7.8-6.1 .2zM851.5 770.7l6.1-1.3-4.7-7.9-6.1 1.4zM845.4 772.7l6.1-2-4.7-7.8-6.1 2.3zM839.3 775.4l6.1-2.7-4.7-7.5-6.1 3.2z"/>
<path class="c11" d="M833.2 778.4l6.1-3-4.7-7-6.1 3.6z"/>
<path class="c10" d="M827.1 781.7l6.1-3.3-4.7-6.4-6.1 3.9z"/>
<path class="c9" d="M821 784.8l6.1-3.1-4.7-5.8-6.1 3.7z"/>
<path class="c8" d="M814.9 787.7l6.1-2.9-4.7-5.2-6.1 3.4zM808.8 790.3l6.1-2.6-4.7-4.7-6.1 3z"/>
<path class="c7" d="M802.7 792.5l6.1-2.2-4.7-4.3-6.1 2.5zM796.6 794.4l6.1-1.9-4.7-4-6.1 2z"/>
<path class="c6" d="M790.4 795.9l6.2-1.5-4.7-3.9-6.1 1.7zM784.3 797.3l6.1-1.4-4.6-3.7-6.2 1.3zM778.2 798.5l6.1-1.2-4.7-3.8-6.1 1.2zM772.1 799.6l6.1-1.1-4.7-3.8-6.1 1.1zM766 800.6l6.1-1-4.7-3.8-6.1 1zM759.9 801.6l6.1-1-4.7-3.8-6.1 .9z"/>
<path class="c7" d="M753.8 802.6l6.1-1-4.7-3.9-6.1 .9zM747.7 803.6l6.1-1-4.7-4-6.1 .8zM741.6 804.6l6.1-1-4.7-4.2-6.1 .9zM735.5 805.6l6.1-1-4.7-4.3-6.1 .9zM729.4 806.8l6.1-1.2-4.7-4.4-6.1 1zM723.3 808.1l6.1-1.3-4.7-4.6-6.1 1.1z"/>
<path class="c8" d="M717.2 809.5l6.1-1.4-4.7-4.8-6.1 1.4zM711.1 811.2l6.1-1.7-4.7-4.8-6.1 1.5z"/>
<path class="c7" d="M704.9 813l6.2-1.8-4.7-5-6.1 1.9zM698.8 815.1l6.1-2.1-4.6-4.9-6.1 2.1zM692.7 817.4l6.1-2.3-4.6-4.9-6.2 2.4zM686.6 819.8l6.1-2.4-4.7-4.8-6.1 2.6z"/>
<path class="c6" d="M680.5 822.4l6.1-2.6-4.7-4.6-6.1 2.8zM674.4 825.1l6.1-2.7-4.7-4.4-6.1 2.9z"/>
<path class="c5" d="M668.3 827.8l6.1-2.7-4.7-4.2-6.1 3z"/>
<path class="c4" d="M662.2 830.5l6.1-2.7-4.7-3.9-6.1 3zM656.1 833.2l6.1-2.7-4.7-3.6-6.1 3z"/>
<path class="c3" d="M650 835.8l6.1-2.6-4.7-3.3-6.1 2.8z"/>
<path class="c2" d="M643.9 838.3l6.1-2.5-4.7-3.1-6.1 2.8zM637.8 840.6l6.1-2.3-4.7-2.8-6.1 2.5zM631.7 842.8l6.1-2.2-4.7-2.6-6.1 2.4z"/>
<path class="c1" d="M625.6 844.9l6.1-2.1-4.7-2.4-6.1 2.2zM619.5 846.8l6.1-1.9-4.7-2.3-6.1 2.1z"/>
<path class="c0" d="M613.3 848.7l6.2-1.9-4.7-2.1-6.1 1.9zM607.2 850.4l6.1-1.7-4.6-2.1-6.2 1.8zM601.1 852.1l6.1-1.7-4.7-2-6.1 1.8zM595 853.6l6.1-1.5-4.7-1.9-6.1 1.6zM588.9 855.1l6.1-1.5-4.7-1.8-6.1 1.5zM947.8 779.6l6.1-1.1-4.7-1.9-6.1 1.1zM941.7 780.5l6.1-.9-4.7-1.9-6.1 .9zM935.6 781.4l6.1-.9-4.7-1.9-6.1 .7zM929.5 782l6.1-.6-4.7-2.1-6.1 .4z"/>
<path class="c1" d="M923.4 782.3l6.1-.3-4.7-2.3-6.1 .2zM917.3 782.4l6.1-.1-4.7-2.4-6.1-.3z"/>
<path class="c2" d="M911.2 782.1l6.1 .3-4.7-2.8-6.1-.8zM905.1 781.4l6.1 .7-4.7-3.3-6.1-1.2z"/>
<path class="c3" d="M899 780.4l6.1 1-4.7-3.8-6.1-1.5z"/>
<path class="c4" d="M892.9 779.3l6.1 1.1-4.7-4.3-6.1-1.8z"/>
<path class="c6" d="M886.7 778l6.2 1.3-4.7-5-6.1-1.9z"/>
<path class="c7" d="M880.6 777l6.1 1-4.6-5.6-6.2-1.6z"/>
<path class="c8" d="M874.5 776.3l6.1 .7-4.7-6.2-6.1-1.2z"/>
<path class="c9" d="M868.4 776.1l6.1 .2-4.7-6.7-6.1-.5z"/>
<path class="c10" d="M862.3 776.6l6.1-.5-4.7-7-6.1 .3zM856.2 777.7l6.1-1.1-4.7-7.2-6.1 1.3zM850.1 779.5l6.1-1.8-4.7-7-6.1 2zM844 781.8l6.1-2.3-4.7-6.8-6.1 2.7z"/>
<path class="c9" d="M837.9 784.3l6.1-2.5-4.7-6.4-6.1 3zM831.8 787l6.1-2.7-4.7-5.9-6.1 3.3z"/>
<path class="c8" d="M825.7 789.7l6.1-2.7-4.7-5.3-6.1 3.1z"/>
<path class="c7" d="M819.6 792.2l6.1-2.5-4.7-4.9-6.1 2.9zM813.5 794.4l6.1-2.2-4.7-4.5-6.1 2.6z"/>
<path class="c6" d="M807.4 796.3l6.1-1.9-4.7-4.1-6.1 2.2zM801.2 798l6.2-1.7-4.7-3.8-6.1 1.9zM795.1 799.5l6.1-1.5-4.6-3.6-6.2 1.5z"/>
<path class="c5" d="M789 800.8l6.1-1.3-4.7-3.6-6.1 1.4zM782.9 802l6.1-1.2-4.7-3.5-6.1 1.2z"/>
<path class="c6" d="M776.8 803.1l6.1-1.1-4.7-3.5-6.1 1.1zM770.7 804.2l6.1-1.1-4.7-3.5-6.1 1zM764.6 805.3l6.1-1.1-4.7-3.6-6.1 1zM758.5 806.4l6.1-1.1-4.7-3.7-6.1 1zM752.4 807.5l6.1-1.1-4.7-3.8-6.1 1zM746.3 808.6l6.1-1.1-4.7-3.9-6.1 1zM740.2 809.8l6.1-1.2-4.7-4-6.1 1zM734.1 811.1l6.1-1.3-4.7-4.2-6.1 1.2zM728 812.5l6.1-1.4-4.7-4.3-6.1 1.3zM721.9 814.1l6.1-1.6-4.7-4.4-6.1 1.4zM715.7 815.7l6.2-1.6-4.7-4.6-6.1 1.7zM709.6 817.6l6.1-1.9-4.6-4.5-6.2 1.8zM703.5 819.6l6.1-2-4.7-4.6-6.1 2.1zM697.4 821.7l6.1-2.1-4.7-4.5-6.1 2.3z"/>
<path class="c5" d="M691.3 824l6.1-2.3-4.7-4.3-6.1 2.4zM685.2 826.4l6.1-2.4-4.7-4.2-6.1 2.6zM679.1 828.9l6.1-2.5-4.7-4-6.1 2.7z"/>
<path class="c4" d="M673 831.4l6.1-2.5-4.7-3.8-6.1 2.7z"/>
<path class="c3" d="M666.9 833.9l6.1-2.5-4.7-3.6-6.1 2.7zM660.8 836.3l6.1-2.4-4.7-3.4-6.1 2.7z"/>
<path class="c2" d="M654.7 838.7l6.1-2.4-4.7-3.1-6.1 2.6zM648.6 840.9l6.1-2.2-4.7-2.9-6.1 2.5zM642.5 843.1l6.1-2.2-4.7-2.6-6.1 2.3z"/>
<path class="c1" d="M636.4 845.2l6.1-2.1-4.7-2.5-6.1 2.2zM630.3 847.1l6.1-1.9-4.7-2.4-6.1 2.1zM624.1 848.9l6.2-1.8-4.7-2.2-6.1 1.9z"/>
<path class="c0" d="M618 850.7l6.1-1.8-4.6-2.1-6.2 1.9zM611.9 852.3l6.1-1.6-4.7-2-6.1 1.7zM605.8 853.9l6.1-1.6-4.7-1.9-6.1 1.7zM599.7 855.5l6.1-1.6-4.7-1.8-6.1 1.5zM952.5 781.4l6.1-1.1-4.7-1.8-6.1 1.1zM946.4 782.5l6.1-1.1-4.7-1.8-6.1 .9zM940.3 783.4l6.1-.9-4.7-2-6.1 .9zM934.2 784.2l6.1-.8-4.7-2-6.1 .6zM928.1 784.7l6.1-.5-4.7-2.2-6.1 .3z"/>
<path class="c1" d="M922 785l6.1-.3-4.7-2.4-6.1 .1zM915.9 785.1l6.1-.1-4.7-2.6-6.1-.3z"/>
<path class="c2" d="M909.8 784.8l6.1 .3-4.7-3-6.1-.7z"/>
<path class="c3" d="M903.6 784.4l6.2 .4-4.7-3.4-6.1-1zM897.5 783.8l6.1 .6-4.6-4-6.1-1.1z"/>
<path class="c4" d="M891.4 783.1l6.1 .7-4.6-4.5-6.2-1.3z"/>
<path class="c5" d="M885.3 782.6l6.1 .5-4.7-5.1-6.1-1z"/>
<path class="c6" d="M879.2 782.3l6.1 .3-4.7-5.6-6.1-.7z"/>
<path class="c7" d="M873.1 782.4l6.1-.1-4.7-6-6.1-.2z"/>
<path class="c8" d="M867 783l6.1-.6-4.7-6.3-6.1 .5zM860.9 784.1l6.1-1.1-4.7-6.4-6.1 1.1zM854.8 785.6l6.1-1.5-4.7-6.4-6.1 1.8zM848.7 787.5l6.1-1.9-4.7-6.1-6.1 2.3z"/>
<path class="c7" d="M842.6 789.7l6.1-2.2-4.7-5.7-6.1 2.5zM836.5 792l6.1-2.3-4.7-5.4-6.1 2.7z"/>
<path class="c6" d="M830.4 794.2l6.1-2.2-4.7-5-6.1 2.7zM824.3 796.3l6.1-2.1-4.7-4.5-6.1 2.5zM818.2 798.2l6.1-1.9-4.7-4.1-6.1 2.2z"/>
<path class="c5" d="M812 799.9l6.2-1.7-4.7-3.8-6.1 1.9zM805.9 801.5l6.1-1.6-4.6-3.6-6.2 1.7zM799.8 802.9l6.1-1.4-4.7-3.5-6.1 1.5zM793.7 804.1l6.1-1.2-4.7-3.4-6.1 1.3zM787.6 805.4l6.1-1.3-4.7-3.3-6.1 1.2zM781.5 806.5l6.1-1.1-4.7-3.4-6.1 1.1zM775.4 807.7l6.1-1.2-4.7-3.4-6.1 1.1zM769.3 808.8l6.1-1.1-4.7-3.5-6.1 1.1zM763.2 810l6.1-1.2-4.7-3.5-6.1 1.1zM757.1 811.2l6.1-1.2-4.7-3.6-6.1 1.1zM751 812.5l6.1-1.3-4.7-3.7-6.1 1.1zM744.9 813.8l6.1-1.3-4.7-3.9-6.1 1.2zM738.8 815.2l6.1-1.4-4.7-4-6.1 1.3zM732.7 816.7l6.1-1.5-4.7-4.1-6.1 1.4zM726.5 818.3l6.2-1.6-4.7-4.2-6.1 1.6zM720.4 820l6.1-1.7-4.6-4.2-6.2 1.6zM714.3 821.8l6.1-1.8-4.7-4.3-6.1 1.9zM708.2 823.7l6.1-1.9-4.7-4.2-6.1 2zM702.1 825.8l6.1-2.1-4.7-4.1-6.1 2.1z"/>
<path class="c4" d="M696 827.9l6.1-2.1-4.7-4.1-6.1 2.3zM689.9 830.1l6.1-2.2-4.7-3.9-6.1 2.4zM683.8 832.4l6.1-2.3-4.7-3.7-6.1 2.5z"/>
<path class="c3" d="M677.7 834.7l6.1-2.3-4.7-3.5-6.1 2.5zM671.6 837l6.1-2.3-4.7-3.3-6.1 2.5z"/>
<path class="c2" d="M665.5 839.2l6.1-2.2-4.7-3.1-6.1 2.4zM659.4 841.4l6.1-2.2-4.7-2.9-6.1 2.4zM653.3 843.5l6.1-2.1-4.7-2.7-6.1 2.2z"/>
<path class="c1" d="M647.2 845.5l6.1-2-4.7-2.6-6.1 2.2zM641 847.4l6.2-1.9-4.7-2.4-6.1 2.1zM634.9 849.2l6.1-1.8-4.6-2.2-6.1 1.9z"/>
<path class="c0" d="M628.8 851l6.1-1.8-4.6-2.1-6.2 1.8zM622.7 852.7l6.1-1.7-4.7-2.1-6.1 1.8zM616.6 854.3l6.1-1.6-4.7-2-6.1 1.6zM610.5 855.8l6.1-1.5-4.7-2-6.1 1.6zM604.4 857.3l6.1-1.5-4.7-1.9-6.1 1.6zM951.1 784.4l6.1-1.1-4.7-1.9-6.1 1.1zM945 785.4l6.1-1-4.7-1.9-6.1 .9zM938.9 786.3l6.1-.9-4.7-2-6.1 .8zM932.8 787l6.1-.7-4.7-2.1-6.1 .5z"/>
<path class="c1" d="M926.7 787.5l6.1-.5-4.7-2.3-6.1 .3zM920.6 787.9l6.1-.4-4.7-2.5-6.1 .1zM914.4 788l6.2-.1-4.7-2.8-6.1-.3z"/>
<path class="c2" d="M908.3 788l6.1 0-4.6-3.2-6.2-.4z"/>
<path class="c3" d="M902.2 787.8l6.1 .2-4.7-3.6-6.1-.6zM896.1 787.6l6.1 .2-4.7-4-6.1-.7z"/>
<path class="c4" d="M890 787.5l6.1 .1-4.7-4.5-6.1-.5z"/>
<path class="c5" d="M883.9 787.5l6.1 0-4.7-4.9-6.1-.3zM877.8 787.9l6.1-.4-4.7-5.2-6.1 .1z"/>
<path class="c6" d="M871.7 788.6l6.1-.7-4.7-5.5-6.1 .6zM865.6 789.6l6.1-1-4.7-5.6-6.1 1.1zM859.5 791l6.1-1.4-4.7-5.5-6.1 1.5zM853.4 792.7l6.1-1.7-4.7-5.4-6.1 1.9zM847.3 794.5l6.1-1.8-4.7-5.2-6.1 2.2zM841.2 796.4l6.1-1.9-4.7-4.8-6.1 2.3z"/>
<path class="c5" d="M835.1 798.3l6.1-1.9-4.7-4.4-6.1 2.2zM829 800.2l6.1-1.9-4.7-4.1-6.1 2.1zM822.8 801.8l6.2-1.6-4.7-3.9-6.1 1.9z"/>
<path class="c4" d="M816.7 803.4l6.1-1.6-4.6-3.6-6.2 1.7zM810.6 804.8l6.1-1.4-4.7-3.5-6.1 1.6zM804.5 806.1l6.1-1.3-4.7-3.3-6.1 1.4zM798.4 807.4l6.1-1.3-4.7-3.2-6.1 1.2zM792.3 808.6l6.1-1.2-4.7-3.3-6.1 1.3zM786.2 809.8l6.1-1.2-4.7-3.2-6.1 1.1zM780.1 811l6.1-1.2-4.7-3.3-6.1 1.2zM774 812.3l6.1-1.3-4.7-3.3-6.1 1.1zM767.9 813.5l6.1-1.2-4.7-3.5-6.1 1.2zM761.8 814.8l6.1-1.3-4.7-3.5-6.1 1.2z"/>
<path class="c5" d="M755.7 816.1l6.1-1.3-4.7-3.6-6.1 1.3zM749.6 817.5l6.1-1.4-4.7-3.6-6.1 1.3zM743.5 819l6.1-1.5-4.7-3.7-6.1 1.4zM737.3 820.5l6.2-1.5-4.7-3.8-6.1 1.5z"/>
<path class="c4" d="M731.2 822.1l6.1-1.6-4.6-3.8-6.2 1.6zM725.1 823.8l6.1-1.7-4.7-3.8-6.1 1.7zM719 825.6l6.1-1.8-4.7-3.8-6.1 1.8zM712.9 827.5l6.1-1.9-4.7-3.8-6.1 1.9zM706.8 829.4l6.1-1.9-4.7-3.8-6.1 2.1zM700.7 831.5l6.1-2.1-4.7-3.6-6.1 2.1z"/>
<path class="c3" d="M694.6 833.6l6.1-2.1-4.7-3.6-6.1 2.2zM688.5 835.7l6.1-2.1-4.7-3.5-6.1 2.3zM682.4 837.8l6.1-2.1-4.7-3.3-6.1 2.3z"/>
<path class="c2" d="M676.3 839.9l6.1-2.1-4.7-3.1-6.1 2.3zM670.2 841.9l6.1-2-4.7-2.9-6.1 2.2zM664.1 843.9l6.1-2-4.7-2.7-6.1 2.2z"/>
<path class="c1" d="M658 845.9l6.1-2-4.7-2.5-6.1 2.1zM651.8 847.8l6.2-1.9-4.7-2.4-6.1 2zM645.7 849.6l6.1-1.8-4.6-2.3-6.2 1.9z"/>
<path class="c0" d="M639.6 851.3l6.1-1.7-4.7-2.2-6.1 1.8zM633.5 853l6.1-1.7-4.7-2.1-6.1 1.8zM627.4 854.6l6.1-1.6-4.7-2-6.1 1.7zM621.3 856.1l6.1-1.5-4.7-1.9-6.1 1.6zM615.2 857.7l6.1-1.6-4.7-1.8-6.1 1.5zM955.8 786.3l6.1-1.2-4.7-1.8-6.1 1.1zM949.7 787.3l6.1-1-4.7-1.9-6.1 1zM943.6 788.3l6.1-1-4.7-1.9-6.1 .9zM937.5 789.2l6.1-.9-4.7-2-6.1 .7zM931.4 789.9l6.1-.7-4.7-2.2-6.1 .5z"/>
<path class="c1" d="M925.2 790.5l6.2-.6-4.7-2.4-6.1 .4zM919.1 790.9l6.1-.4-4.6-2.6-6.2 .1zM913 791.2l6.1-.3-4.7-2.9-6.1 0z"/>
<path class="c2" d="M906.9 791.4l6.1-.2-4.7-3.2-6.1-.2z"/>
<path class="c3" d="M900.8 791.6l6.1-.2-4.7-3.6-6.1-.2zM894.7 791.8l6.1-.2-4.7-4-6.1-.1z"/>
<path class="c4" d="M888.6 792.1l6.1-.3-4.7-4.3-6.1 0zM882.5 792.7l6.1-.6-4.7-4.6-6.1 .4zM876.4 793.5l6.1-.8-4.7-4.8-6.1 .7z"/>
<path class="c5" d="M870.3 794.5l6.1-1-4.7-4.9-6.1 1zM864.2 795.8l6.1-1.3-4.7-4.9-6.1 1.4zM858.1 797.3l6.1-1.5-4.7-4.8-6.1 1.7zM852 798.9l6.1-1.6-4.7-4.6-6.1 1.8z"/>
<path class="c4" d="M845.9 800.5l6.1-1.6-4.7-4.4-6.1 1.9zM839.8 802.2l6.1-1.7-4.7-4.1-6.1 1.9zM833.6 803.8l6.2-1.6-4.7-3.9-6.1 1.9zM827.5 805.3l6.1-1.5-4.6-3.6-6.2 1.6zM821.4 806.7l6.1-1.4-4.7-3.5-6.1 1.6zM815.3 808l6.1-1.3-4.7-3.3-6.1 1.4zM809.2 809.3l6.1-1.3-4.7-3.2-6.1 1.3zM803.1 810.6l6.1-1.3-4.7-3.2-6.1 1.3zM797 811.8l6.1-1.2-4.7-3.2-6.1 1.2zM790.9 813l6.1-1.2-4.7-3.2-6.1 1.2zM784.8 814.3l6.1-1.3-4.7-3.2-6.1 1.2zM778.7 815.5l6.1-1.2-4.7-3.3-6.1 1.3zM772.6 816.9l6.1-1.4-4.7-3.2-6.1 1.2zM766.5 818.2l6.1-1.3-4.7-3.4-6.1 1.3zM760.4 819.6l6.1-1.4-4.7-3.4-6.1 1.3zM754.3 821l6.1-1.4-4.7-3.5-6.1 1.4zM748.1 822.5l6.2-1.5-4.7-3.5-6.1 1.5zM742 824.1l6.1-1.6-4.6-3.5-6.2 1.5zM735.9 825.7l6.1-1.6-4.7-3.6-6.1 1.6zM729.8 827.4l6.1-1.7-4.7-3.6-6.1 1.7z"/>
<path class="c3" d="M723.7 829.1l6.1-1.7-4.7-3.6-6.1 1.8zM717.6 830.9l6.1-1.8-4.7-3.5-6.1 1.9zM711.5 832.8l6.1-1.9-4.7-3.4-6.1 1.9zM705.4 834.7l6.1-1.9-4.7-3.4-6.1 2.1zM699.3 836.7l6.1-2-4.7-3.2-6.1 2.1z"/>
<path class="c2" d="M693.2 838.7l6.1-2-4.7-3.1-6.1 2.1zM687.1 840.6l6.1-1.9-4.7-3-6.1 2.1zM681 842.6l6.1-2-4.7-2.8-6.1 2.1z"/>
<path class="c1" d="M674.9 844.5l6.1-1.9-4.7-2.7-6.1 2zM668.8 846.4l6.1-1.9-4.7-2.6-6.1 2zM662.6 848.2l6.2-1.8-4.7-2.5-6.1 2zM656.5 850l6.1-1.8-4.6-2.3-6.2 1.9z"/>
<path class="c0" d="M650.4 851.7l6.1-1.7-4.7-2.2-6.1 1.8zM644.3 853.3l6.1-1.6-4.7-2.1-6.1 1.7zM638.2 854.9l6.1-1.6-4.7-2-6.1 1.7zM632.1 856.5l6.1-1.6-4.7-1.9-6.1 1.6zM626 858l6.1-1.5-4.7-1.9-6.1 1.5zM954.4 789.3l6.1-1.2-4.7-1.8-6.1 1zM948.3 790.3l6.1-1-4.7-2-6.1 1zM942.2 791.3l6.1-1-4.7-2-6.1 .9zM936 792.2l6.2-.9-4.7-2.1-6.1 .7zM929.9 792.9l6.1-.7-4.6-2.3-6.2 .6z"/>
<path class="c1" d="M923.8 793.6l6.1-.7-4.7-2.4-6.1 .4zM917.7 794.1l6.1-.5-4.7-2.7-6.1 .3zM911.6 794.6l6.1-.5-4.7-2.9-6.1 .2z"/>
<path class="c2" d="M905.5 795.1l6.1-.5-4.7-3.2-6.1 .2zM899.4 795.6l6.1-.5-4.7-3.5-6.1 .2z"/>
<path class="c3" d="M893.3 796.1l6.1-.5-4.7-3.8-6.1 .3zM887.2 796.8l6.1-.7-4.7-4-6.1 .6zM881.1 797.7l6.1-.9-4.7-4.1-6.1 .8z"/>
<path class="c4" d="M875 798.7l6.1-1-4.7-4.2-6.1 1zM868.9 800l6.1-1.3-4.7-4.2-6.1 1.3zM862.8 801.3l6.1-1.3-4.7-4.2-6.1 1.5zM856.7 802.7l6.1-1.4-4.7-4-6.1 1.6zM850.5 804.2l6.2-1.5-4.7-3.8-6.1 1.6z"/>
<path class="c3" d="M844.4 805.7l6.1-1.5-4.6-3.7-6.1 1.7zM838.3 807.1l6.1-1.4-4.6-3.5-6.2 1.6zM832.2 808.5l6.1-1.4-4.7-3.3-6.1 1.5zM826.1 809.8l6.1-1.3-4.7-3.2-6.1 1.4zM820 811.1l6.1-1.3-4.7-3.1-6.1 1.3zM813.9 812.4l6.1-1.3-4.7-3.1-6.1 1.3zM807.8 813.6l6.1-1.2-4.7-3.1-6.1 1.3zM801.7 814.9l6.1-1.3-4.7-3-6.1 1.2zM795.6 816.1l6.1-1.2-4.7-3.1-6.1 1.2zM789.5 817.4l6.1-1.3-4.7-3.1-6.1 1.3zM783.4 818.7l6.1-1.3-4.7-3.1-6.1 1.2zM777.3 820l6.1-1.3-4.7-3.2-6.1 1.4zM771.2 821.4l6.1-1.4-4.7-3.1-6.1 1.3zM765.1 822.8l6.1-1.4-4.7-3.2-6.1 1.4zM758.9 824.3l6.2-1.5-4.7-3.2-6.1 1.4zM752.8 825.8l6.1-1.5-4.6-3.3-6.2 1.5zM746.7 827.4l6.1-1.6-4.7-3.3-6.1 1.6zM740.6 829l6.1-1.6-4.7-3.3-6.1 1.6zM734.5 830.7l6.1-1.7-4.7-3.3-6.1 1.7zM728.4 832.4l6.1-1.7-4.7-3.3-6.1 1.7zM722.3 834.1l6.1-1.7-4.7-3.3-6.1 1.8z"/>
<path class="c2" d="M716.2 835.9l6.1-1.8-4.7-3.2-6.1 1.9zM710.1 837.7l6.1-1.8-4.7-3.1-6.1 1.9zM704 839.6l6.1-1.9-4.7-3-6.1 2zM697.9 841.4l6.1-1.8-4.7-2.9-6.1 2zM691.8 843.3l6.1-1.9-4.7-2.7-6.1 1.9z"/>
<path class="c1" d="M685.7 845.1l6.1-1.8-4.7-2.7-6.1 2zM679.6 846.9l6.1-1.8-4.7-2.5-6.1 1.9zM673.4 848.7l6.2-1.8-4.7-2.4-6.1 1.9zM667.3 850.4l6.1-1.7-4.6-2.3-6.2 1.8z"/>
<path class="c0" d="M661.2 852.1l6.1-1.7-4.7-2.2-6.1 1.8zM655.1 853.7l6.1-1.6-4.7-2.1-6.1 1.7zM649 855.3l6.1-1.6-4.7-2-6.1 1.6zM642.9 856.9l6.1-1.6-4.7-2-6.1 1.6zM636.8 858.4l6.1-1.5-4.7-2-6.1 1.6zM630.7 859.9l6.1-1.5-4.7-1.9-6.1 1.5zM953 792.3l6.1-1.1-4.7-1.9-6.1 1zM946.8 793.3l6.2-1-4.7-2-6.1 1zM940.7 794.3l6.1-1-4.6-2-6.2 .9zM934.6 795.2l6.1-.9-4.7-2.1-6.1 .7zM928.5 796.1l6.1-.9-4.7-2.3-6.1 .7z"/>
<path class="c1" d="M922.4 796.8l6.1-.7-4.7-2.5-6.1 .5zM916.3 797.5l6.1-.7-4.7-2.7-6.1 .5zM910.2 798.2l6.1-.7-4.7-2.9-6.1 .5z"/>
<path class="c2" d="M904.1 798.9l6.1-.7-4.7-3.1-6.1 .5zM898 799.6l6.1-.7-4.7-3.3-6.1 .5zM891.9 800.5l6.1-.9-4.7-3.5-6.1 .7zM885.8 801.4l6.1-.9-4.7-3.7-6.1 .9z"/>
<path class="c3" d="M879.7 802.5l6.1-1.1-4.7-3.7-6.1 1zM873.6 803.6l6.1-1.1-4.7-3.8-6.1 1.3zM867.5 804.9l6.1-1.3-4.7-3.6-6.1 1.3zM861.3 806.2l6.2-1.3-4.7-3.6-6.1 1.4zM855.2 807.6l6.1-1.4-4.6-3.5-6.2 1.5zM849.1 808.9l6.1-1.3-4.7-3.4-6.1 1.5zM843 810.3l6.1-1.4-4.7-3.2-6.1 1.4zM836.9 811.6l6.1-1.3-4.7-3.2-6.1 1.4zM830.8 812.8l6.1-1.2-4.7-3.1-6.1 1.3zM824.7 814.1l6.1-1.3-4.7-3-6.1 1.3zM818.6 815.3l6.1-1.2-4.7-3-6.1 1.3zM812.5 816.6l6.1-1.3-4.7-2.9-6.1 1.2zM806.4 817.8l6.1-1.2-4.7-3-6.1 1.3zM800.3 819.1l6.1-1.3-4.7-2.9-6.1 1.2zM794.2 820.4l6.1-1.3-4.7-3-6.1 1.3zM788.1 821.7l6.1-1.3-4.7-3-6.1 1.3zM782 823.1l6.1-1.4-4.7-3-6.1 1.3zM775.9 824.5l6.1-1.4-4.7-3.1-6.1 1.4zM769.7 825.9l6.2-1.4-4.7-3.1-6.1 1.4zM763.6 827.4l6.1-1.5-4.6-3.1-6.2 1.5zM757.5 828.9l6.1-1.5-4.7-3.1-6.1 1.5zM751.4 830.5l6.1-1.6-4.7-3.1-6.1 1.6z"/>
<path class="c2" d="M745.3 832.1l6.1-1.6-4.7-3.1-6.1 1.6zM739.2 833.7l6.1-1.6-4.7-3.1-6.1 1.7zM733.1 835.4l6.1-1.7-4.7-3-6.1 1.7zM727 837.1l6.1-1.7-4.7-3-6.1 1.7zM720.9 838.8l6.1-1.7-4.7-3-6.1 1.8zM714.8 840.5l6.1-1.7-4.7-2.9-6.1 1.8zM708.7 842.3l6.1-1.8-4.7-2.8-6.1 1.9z"/>
<path class="c1" d="M702.6 844l6.1-1.7-4.7-2.7-6.1 1.8zM696.5 845.8l6.1-1.8-4.7-2.6-6.1 1.9zM690.4 847.5l6.1-1.7-4.7-2.5-6.1 1.8zM684.2 849.2l6.2-1.7-4.7-2.4-6.1 1.8zM678.1 850.9l6.1-1.7-4.6-2.3-6.2 1.8z"/>
<path class="c0" d="M672 852.5l6.1-1.6-4.7-2.2-6.1 1.7zM665.9 854.2l6.1-1.7-4.7-2.1-6.1 1.7zM659.8 855.7l6.1-1.5-4.7-2.1-6.1 1.6zM653.7 857.3l6.1-1.6-4.7-2-6.1 1.6zM647.6 858.8l6.1-1.5-4.7-2-6.1 1.6zM641.5 860.3l6.1-1.5-4.7-1.9-6.1 1.5zM957.6 794.2l6.2-1.2-4.7-1.8-6.1 1.1zM951.5 795.3l6.1-1.1-4.6-1.9-6.2 1zM945.4 796.4l6.1-1.1-4.7-2-6.1 1zM939.3 797.4l6.1-1-4.7-2.1-6.1 .9zM933.2 798.4l6.1-1-4.7-2.2-6.1 .9zM927.1 799.3l6.1-.9-4.7-2.3-6.1 .7z"/>
<path class="c1" d="M921 800.1l6.1-.8-4.7-2.5-6.1 .7zM914.9 801l6.1-.9-4.7-2.6-6.1 .7zM908.8 801.8l6.1-.8-4.7-2.8-6.1 .7zM902.7 802.7l6.1-.9-4.7-2.9-6.1 .7z"/>
<path class="c2" d="M896.6 803.6l6.1-.9-4.7-3.1-6.1 .9zM890.5 804.7l6.1-1.1-4.7-3.1-6.1 .9zM884.4 805.7l6.1-1-4.7-3.3-6.1 1.1zM878.3 806.9l6.1-1.2-4.7-3.2-6.1 1.1zM872.1 808.1l6.2-1.2-4.7-3.3-6.1 1.3zM866 809.4l6.1-1.3-4.6-3.2-6.2 1.3zM859.9 810.6l6.1-1.2-4.7-3.2-6.1 1.4zM853.8 811.9l6.1-1.3-4.7-3-6.1 1.3zM847.7 813.2l6.1-1.3-4.7-3-6.1 1.4zM841.6 814.4l6.1-1.2-4.7-2.9-6.1 1.3zM835.5 815.7l6.1-1.3-4.7-2.8-6.1 1.2zM829.4 816.9l6.1-1.2-4.7-2.9-6.1 1.3zM823.3 818.2l6.1-1.3-4.7-2.8-6.1 1.2zM817.2 819.4l6.1-1.2-4.7-2.9-6.1 1.3zM811.1 820.7l6.1-1.3-4.7-2.8-6.1 1.2zM805 822l6.1-1.3-4.7-2.9-6.1 1.3zM798.9 823.3l6.1-1.3-4.7-2.9-6.1 1.3zM792.8 824.6l6.1-1.3-4.7-2.9-6.1 1.3zM786.6 826l6.2-1.4-4.7-2.9-6.1 1.4zM780.5 827.4l6.1-1.4-4.6-2.9-6.1 1.4zM774.4 828.8l6.1-1.4-4.6-2.9-6.2 1.4zM768.3 830.3l6.1-1.5-4.7-2.9-6.1 1.5zM762.2 831.8l6.1-1.5-4.7-2.9-6.1 1.5zM756.1 833.4l6.1-1.6-4.7-2.9-6.1 1.6zM750 834.9l6.1-1.5-4.7-2.9-6.1 1.6zM743.9 836.5l6.1-1.6-4.7-2.8-6.1 1.6zM737.8 838.1l6.1-1.6-4.7-2.8-6.1 1.7zM731.7 839.8l6.1-1.7-4.7-2.7-6.1 1.7z"/>
<path class="c1" d="M725.6 841.4l6.1-1.6-4.7-2.7-6.1 1.7zM719.5 843.1l6.1-1.7-4.7-2.6-6.1 1.7zM713.4 844.8l6.1-1.7-4.7-2.6-6.1 1.8zM707.3 846.5l6.1-1.7-4.7-2.5-6.1 1.7zM701.2 848.1l6.1-1.6-4.7-2.5-6.1 1.8zM695 849.8l6.2-1.7-4.7-2.3-6.1 1.7zM688.9 851.4l6.1-1.6-4.6-2.3-6.2 1.7z"/>
<path class="c0" d="M682.8 853l6.1-1.6-4.7-2.2-6.1 1.7zM676.7 854.6l6.1-1.6-4.7-2.1-6.1 1.6zM670.6 856.2l6.1-1.6-4.7-2.1-6.1 1.7zM664.5 857.7l6.1-1.5-4.7-2-6.1 1.5zM658.4 859.2l6.1-1.5-4.7-2-6.1 1.6zM652.3 860.7l6.1-1.5-4.7-1.9-6.1 1.5zM956.2 797.2l6.1-1.1-4.7-1.9-6.1 1.1zM950.1 798.4l6.1-1.2-4.7-1.9-6.1 1.1zM944 799.5l6.1-1.1-4.7-2-6.1 1zM937.9 800.5l6.1-1-4.7-2.1-6.1 1zM931.8 801.6l6.1-1.1-4.7-2.1-6.1 .9zM925.7 802.5l6.1-.9-4.7-2.3-6.1 .8z"/>
<path class="c1" d="M919.6 803.5l6.1-1-4.7-2.4-6.1 .9zM913.5 804.5l6.1-1-4.7-2.5-6.1 .8zM907.4 805.5l6.1-1-4.7-2.7-6.1 .9zM901.3 806.5l6.1-1-4.7-2.8-6.1 .9zM895.2 807.6l6.1-1.1-4.7-2.9-6.1 1.1zM889.1 808.7l6.1-1.1-4.7-2.9-6.1 1zM882.9 809.8l6.2-1.1-4.7-3-6.1 1.2zM876.8 811l6.1-1.2-4.6-2.9-6.2 1.2z"/>
<path class="c2" d="M870.7 812.2l6.1-1.2-4.7-2.9-6.1 1.3zM864.6 813.5l6.1-1.3-4.7-2.8-6.1 1.2zM858.5 814.7l6.1-1.2-4.7-2.9-6.1 1.3zM852.4 815.9l6.1-1.2-4.7-2.8-6.1 1.3zM846.3 817.2l6.1-1.3-4.7-2.7-6.1 1.2zM840.2 818.4l6.1-1.2-4.7-2.8-6.1 1.3zM834.1 819.6l6.1-1.2-4.7-2.7-6.1 1.2zM828 820.9l6.1-1.3-4.7-2.7-6.1 1.3zM821.9 822.1l6.1-1.2-4.7-2.7-6.1 1.2zM815.8 823.4l6.1-1.3-4.7-2.7-6.1 1.3zM809.7 824.7l6.1-1.3-4.7-2.7-6.1 1.3zM803.6 826l6.1-1.3-4.7-2.7-6.1 1.3zM797.4 827.4l6.2-1.4-4.7-2.7-6.1 1.3zM791.3 828.7l6.1-1.3-4.6-2.8-6.2 1.4zM785.2 830.2l6.1-1.5-4.7-2.7-6.1 1.4zM779.1 831.6l6.1-1.4-4.7-2.8-6.1 1.4zM773 833.1l6.1-1.5-4.7-2.8-6.1 1.5zM766.9 834.5l6.1-1.4-4.7-2.8-6.1 1.5zM760.8 836.1l6.1-1.6-4.7-2.7-6.1 1.6z"/>
<path class="c1" d="M754.7 837.6l6.1-1.5-4.7-2.7-6.1 1.5zM748.6 839.2l6.1-1.6-4.7-2.7-6.1 1.6zM742.5 840.7l6.1-1.5-4.7-2.7-6.1 1.6zM736.4 842.3l6.1-1.6-4.7-2.6-6.1 1.7zM730.3 843.9l6.1-1.6-4.7-2.5-6.1 1.6zM724.2 845.6l6.1-1.7-4.7-2.5-6.1 1.7zM718.1 847.2l6.1-1.6-4.7-2.5-6.1 1.7zM712 848.8l6.1-1.6-4.7-2.4-6.1 1.7zM705.8 850.4l6.2-1.6-4.7-2.3-6.1 1.6z"/>
<path class="c0" d="M699.7 852l6.1-1.6-4.6-2.3-6.2 1.7zM693.6 853.5l6.1-1.5-4.7-2.2-6.1 1.6zM687.5 855.1l6.1-1.6-4.7-2.1-6.1 1.6zM681.4 856.6l6.1-1.5-4.7-2.1-6.1 1.6zM675.3 858.1l6.1-1.5-4.7-2-6.1 1.6zM669.2 859.6l6.1-1.5-4.7-1.9-6.1 1.5zM663.1 861.1l6.1-1.5-4.7-1.9-6.1 1.5zM954.8 800.3l6.1-1.2-4.7-1.9-6.1 1.2zM948.7 801.5l6.1-1.2-4.7-1.9-6.1 1.1zM942.6 802.6l6.1-1.1-4.7-2-6.1 1zM936.5 803.7l6.1-1.1-4.7-2.1-6.1 1.1zM930.4 804.8l6.1-1.1-4.7-2.1-6.1 .9zM924.3 805.8l6.1-1-4.7-2.3-6.1 1zM918.2 806.9l6.1-1.1-4.7-2.3-6.1 1z"/>
<path class="c1" d="M912.1 808l6.1-1.1-4.7-2.4-6.1 1zM906 809.1l6.1-1.1-4.7-2.5-6.1 1zM899.9 810.2l6.1-1.1-4.7-2.6-6.1 1.1zM893.7 811.3l6.2-1.1-4.7-2.6-6.1 1.1zM887.6 812.5l6.1-1.2-4.6-2.6-6.2 1.1zM881.5 813.7l6.1-1.2-4.7-2.7-6.1 1.2zM875.4 814.9l6.1-1.2-4.7-2.7-6.1 1.2zM869.3 816.1l6.1-1.2-4.7-2.7-6.1 1.3zM863.2 817.3l6.1-1.2-4.7-2.6-6.1 1.2zM857.1 818.5l6.1-1.2-4.7-2.6-6.1 1.2zM851 819.8l6.1-1.3-4.7-2.6-6.1 1.3zM844.9 821l6.1-1.2-4.7-2.6-6.1 1.2zM838.8 822.2l6.1-1.2-4.7-2.6-6.1 1.2zM832.7 823.5l6.1-1.3-4.7-2.6-6.1 1.3zM826.6 824.7l6.1-1.2-4.7-2.6-6.1 1.2zM820.5 826l6.1-1.3-4.7-2.6-6.1 1.3zM814.4 827.3l6.1-1.3-4.7-2.6-6.1 1.3zM808.2 828.6l6.2-1.3-4.7-2.6-6.1 1.3zM802.1 830l6.1-1.4-4.6-2.6-6.2 1.4zM796 831.4l6.1-1.4-4.7-2.6-6.1 1.3zM789.9 832.8l6.1-1.4-4.7-2.7-6.1 1.5zM783.8 834.2l6.1-1.4-4.7-2.6-6.1 1.4zM777.7 835.7l6.1-1.5-4.7-2.6-6.1 1.5zM771.6 837.1l6.1-1.4-4.7-2.6-6.1 1.4zM765.5 838.6l6.1-1.5-4.7-2.6-6.1 1.6zM759.4 840.1l6.1-1.5-4.7-2.5-6.1 1.5zM753.3 841.7l6.1-1.6-4.7-2.5-6.1 1.6zM747.2 843.2l6.1-1.5-4.7-2.5-6.1 1.5zM741.1 844.7l6.1-1.5-4.7-2.5-6.1 1.6zM735 846.3l6.1-1.6-4.7-2.4-6.1 1.6zM728.9 847.9l6.1-1.6-4.7-2.4-6.1 1.7zM722.7 849.4l6.2-1.5-4.7-2.3-6.1 1.6z"/>
<path class="c0" d="M716.6 851l6.1-1.6-4.6-2.2-6.1 1.6zM710.5 852.5l6.1-1.5-4.6-2.2-6.2 1.6zM704.4 854.1l6.1-1.6-4.7-2.1-6.1 1.6zM698.3 855.6l6.1-1.5-4.7-2.1-6.1 1.5zM692.2 857.1l6.1-1.5-4.7-2.1-6.1 1.6zM686.1 858.6l6.1-1.5-4.7-2-6.1 1.5zM680 860l6.1-1.4-4.7-2-6.1 1.5zM673.9 861.5l6.1-1.5-4.7-1.9-6.1 1.5zM953.4 803.4l6.1-1.2-4.7-1.9-6.1 1.2zM947.3 804.6l6.1-1.2-4.7-1.9-6.1 1.1zM941.2 805.8l6.1-1.2-4.7-2-6.1 1.1zM935.1 806.9l6.1-1.1-4.7-2.1-6.1 1.1zM929 808l6.1-1.1-4.7-2.1-6.1 1zM922.9 809.2l6.1-1.2-4.7-2.2-6.1 1.1zM916.8 810.3l6.1-1.1-4.7-2.3-6.1 1.1zM910.7 811.4l6.1-1.1-4.7-2.3-6.1 1.1zM904.5 812.6l6.2-1.2-4.7-2.3-6.1 1.1z"/>
<path class="c1" d="M898.4 813.7l6.1-1.1-4.6-2.4-6.2 1.1zM892.3 814.9l6.1-1.2-4.7-2.4-6.1 1.2zM886.2 816.1l6.1-1.2-4.7-2.4-6.1 1.2zM880.1 817.3l6.1-1.2-4.7-2.4-6.1 1.2zM874 818.5l6.1-1.2-4.7-2.4-6.1 1.2zM867.9 819.8l6.1-1.3-4.7-2.4-6.1 1.2zM861.8 821l6.1-1.2-4.7-2.5-6.1 1.2zM855.7 822.2l6.1-1.2-4.7-2.5-6.1 1.3zM849.6 823.5l6.1-1.3-4.7-2.4-6.1 1.2zM843.5 824.7l6.1-1.2-4.7-2.5-6.1 1.2zM837.4 825.9l6.1-1.2-4.7-2.5-6.1 1.3zM831.3 827.2l6.1-1.3-4.7-2.4-6.1 1.2zM825.2 828.5l6.1-1.3-4.7-2.5-6.1 1.3zM819 829.8l6.2-1.3-4.7-2.5-6.1 1.3zM812.9 831.1l6.1-1.3-4.6-2.5-6.2 1.3zM806.8 832.5l6.1-1.4-4.7-2.5-6.1 1.4zM800.7 833.9l6.1-1.4-4.7-2.5-6.1 1.4zM794.6 835.3l6.1-1.4-4.7-2.5-6.1 1.4zM788.5 836.7l6.1-1.4-4.7-2.5-6.1 1.4zM782.4 838.1l6.1-1.4-4.7-2.5-6.1 1.5zM776.3 839.6l6.1-1.5-4.7-2.4-6.1 1.4zM770.2 841l6.1-1.4-4.7-2.5-6.1 1.5zM764.1 842.5l6.1-1.5-4.7-2.4-6.1 1.5zM758 844l6.1-1.5-4.7-2.4-6.1 1.6zM751.9 845.5l6.1-1.5-4.7-2.3-6.1 1.5zM745.8 847l6.1-1.5-4.7-2.3-6.1 1.5zM739.7 848.6l6.1-1.6-4.7-2.3-6.1 1.6z"/>
<path class="c0" d="M733.5 850.1l6.2-1.5-4.7-2.3-6.1 1.6zM727.4 851.6l6.1-1.5-4.6-2.2-6.2 1.5zM721.3 853.1l6.1-1.5-4.7-2.2-6.1 1.6zM715.2 854.6l6.1-1.5-4.7-2.1-6.1 1.5zM709.1 856.1l6.1-1.5-4.7-2.1-6.1 1.6zM703 857.6l6.1-1.5-4.7-2-6.1 1.5zM696.9 859l6.1-1.4-4.7-2-6.1 1.5zM690.8 860.5l6.1-1.5-4.7-1.9-6.1 1.5zM684.7 861.9l6.1-1.4-4.7-1.9-6.1 1.4zM945.9 807.7l6.1-1.2-4.7-1.9-6.1 1.2zM939.8 808.9l6.1-1.2-4.7-1.9-6.1 1.1zM933.7 810.1l6.1-1.2-4.7-2-6.1 1.1zM927.6 811.3l6.1-1.2-4.7-2.1-6.1 1.2zM921.4 812.5l6.2-1.2-4.7-2.1-6.1 1.1zM915.3 813.6l6.1-1.1-4.6-2.2-6.1 1.1zM909.2 814.8l6.1-1.2-4.6-2.2-6.2 1.2zM903.1 816l6.1-1.2-4.7-2.2-6.1 1.1zM897 817.2l6.1-1.2-4.7-2.3-6.1 1.2zM890.9 818.4l6.1-1.2-4.7-2.3-6.1 1.2zM884.8 819.6l6.1-1.2-4.7-2.3-6.1 1.2z"/>
<path class="c1" d="M878.7 820.9l6.1-1.3-4.7-2.3-6.1 1.2zM872.6 822.1l6.1-1.2-4.7-2.4-6.1 1.3zM866.5 823.3l6.1-1.2-4.7-2.3-6.1 1.2zM860.4 824.6l6.1-1.3-4.7-2.3-6.1 1.2zM854.3 825.8l6.1-1.2-4.7-2.4-6.1 1.3zM848.2 827.1l6.1-1.3-4.7-2.3-6.1 1.2zM842.1 828.3l6.1-1.2-4.7-2.4-6.1 1.2zM836 829.6l6.1-1.3-4.7-2.4-6.1 1.3zM829.8 830.9l6.2-1.3-4.7-2.4-6.1 1.3zM823.7 832.2l6.1-1.3-4.6-2.4-6.2 1.3zM817.6 833.5l6.1-1.3-4.7-2.4-6.1 1.3zM811.5 834.9l6.1-1.4-4.7-2.4-6.1 1.4zM805.4 836.3l6.1-1.4-4.7-2.4-6.1 1.4zM799.3 837.7l6.1-1.4-4.7-2.4-6.1 1.4zM793.2 839.1l6.1-1.4-4.7-2.4-6.1 1.4zM787.1 840.5l6.1-1.4-4.7-2.4-6.1 1.4zM781 841.9l6.1-1.4-4.7-2.4-6.1 1.5zM774.9 843.4l6.1-1.5-4.7-2.3-6.1 1.4zM768.8 844.8l6.1-1.4-4.7-2.4-6.1 1.5zM762.7 846.3l6.1-1.5-4.7-2.3-6.1 1.5z"/>
<path class="c0" d="M756.6 847.8l6.1-1.5-4.7-2.3-6.1 1.5zM750.5 849.2l6.1-1.4-4.7-2.3-6.1 1.5zM744.3 850.7l6.2-1.5-4.7-2.2-6.1 1.6zM738.2 852.2l6.1-1.5-4.6-2.1-6.2 1.5zM732.1 853.7l6.1-1.5-4.7-2.1-6.1 1.5zM726 855.1l6.1-1.4-4.7-2.1-6.1 1.5zM719.9 856.6l6.1-1.5-4.7-2-6.1 1.5zM713.8 858.1l6.1-1.5-4.7-2-6.1 1.5zM707.7 859.5l6.1-1.4-4.7-2-6.1 1.5zM701.6 860.9l6.1-1.4-4.7-1.9-6.1 1.4zM944.5 810.9l6.1-1.3-4.7-1.9-6.1 1.2zM938.4 812.1l6.1-1.2-4.7-2-6.1 1.2zM932.2 813.3l6.2-1.2-4.7-2-6.1 1.2zM926.1 814.5l6.1-1.2-4.6-2-6.2 1.2zM920 815.7l6.1-1.2-4.7-2-6.1 1.1zM913.9 816.9l6.1-1.2-4.7-2.1-6.1 1.2zM907.8 818.2l6.1-1.3-4.7-2.1-6.1 1.2zM901.7 819.4l6.1-1.2-4.7-2.2-6.1 1.2zM895.6 820.6l6.1-1.2-4.7-2.2-6.1 1.2zM889.5 821.8l6.1-1.2-4.7-2.2-6.1 1.2zM883.4 823.1l6.1-1.3-4.7-2.2-6.1 1.3zM877.3 824.3l6.1-1.2-4.7-2.2-6.1 1.2zM871.2 825.6l6.1-1.3-4.7-2.2-6.1 1.2zM865.1 826.8l6.1-1.2-4.7-2.3-6.1 1.3zM859 828.1l6.1-1.3-4.7-2.2-6.1 1.2zM852.9 829.3l6.1-1.2-4.7-2.3-6.1 1.3zM846.8 830.6l6.1-1.3-4.7-2.2-6.1 1.2z"/>
<path class="c1" d="M840.6 831.9l6.2-1.3-4.7-2.3-6.1 1.3zM834.5 833.2l6.1-1.3-4.6-2.3-6.2 1.3zM828.4 834.5l6.1-1.3-4.7-2.3-6.1 1.3zM822.3 835.8l6.1-1.3-4.7-2.3-6.1 1.3zM816.2 837.2l6.1-1.4-4.7-2.3-6.1 1.4zM810.1 838.6l6.1-1.4-4.7-2.3-6.1 1.4zM804 839.9l6.1-1.3-4.7-2.3-6.1 1.4zM797.9 841.3l6.1-1.4-4.7-2.2-6.1 1.4z"/>
<path class="c0" d="M791.8 842.7l6.1-1.4-4.7-2.2-6.1 1.4zM785.7 844.1l6.1-1.4-4.7-2.2-6.1 1.4zM779.6 845.6l6.1-1.5-4.7-2.2-6.1 1.5zM773.5 847l6.1-1.4-4.7-2.2-6.1 1.4zM767.4 848.4l6.1-1.4-4.7-2.2-6.1 1.5zM761.3 849.9l6.1-1.5-4.7-2.1-6.1 1.5zM755.1 851.3l6.2-1.4-4.7-2.1-6.1 1.4zM749 852.8l6.1-1.5-4.6-2.1-6.2 1.5zM742.9 854.2l6.1-1.4-4.7-2.1-6.1 1.5zM736.8 855.7l6.1-1.5-4.7-2-6.1 1.5zM730.7 857.1l6.1-1.4-4.7-2-6.1 1.4zM724.6 858.6l6.1-1.5-4.7-2-6.1 1.5zM718.5 860l6.1-1.4-4.7-2-6.1 1.5zM712.4 861.4l6.1-1.4-4.7-1.9-6.1 1.4zM936.9 815.3l6.1-1.3-4.6-1.9-6.2 1.2zM930.8 816.5l6.1-1.2-4.7-2-6.1 1.2zM924.7 817.7l6.1-1.2-4.7-2-6.1 1.2zM918.6 819l6.1-1.3-4.7-2-6.1 1.2zM912.5 820.2l6.1-1.2-4.7-2.1-6.1 1.3zM906.4 821.5l6.1-1.3-4.7-2-6.1 1.2zM900.3 822.7l6.1-1.2-4.7-2.1-6.1 1.2zM894.2 823.9l6.1-1.2-4.7-2.1-6.1 1.2zM888.1 825.2l6.1-1.3-4.7-2.1-6.1 1.3zM882 826.4l6.1-1.2-4.7-2.1-6.1 1.2zM875.9 827.7l6.1-1.3-4.7-2.1-6.1 1.3zM869.8 829l6.1-1.3-4.7-2.1-6.1 1.2zM863.7 830.2l6.1-1.2-4.7-2.2-6.1 1.3zM857.6 831.5l6.1-1.3-4.7-2.1-6.1 1.2zM851.4 832.8l6.2-1.3-4.7-2.2-6.1 1.3zM845.3 834.1l6.1-1.3-4.6-2.2-6.2 1.3zM839.2 835.4l6.1-1.3-4.7-2.2-6.1 1.3zM833.1 836.7l6.1-1.3-4.7-2.2-6.1 1.3zM827 838l6.1-1.3-4.7-2.2-6.1 1.3zM820.9 839.4l6.1-1.4-4.7-2.2-6.1 1.4zM814.8 840.8l6.1-1.4-4.7-2.2-6.1 1.4zM808.7 842.1l6.1-1.3-4.7-2.2-6.1 1.3zM802.6 843.5l6.1-1.4-4.7-2.2-6.1 1.4zM796.5 844.9l6.1-1.4-4.7-2.2-6.1 1.4zM790.4 846.3l6.1-1.4-4.7-2.2-6.1 1.4zM784.3 847.7l6.1-1.4-4.7-2.2-6.1 1.5zM778.2 849.1l6.1-1.4-4.7-2.1-6.1 1.4zM772.1 850.5l6.1-1.4-4.7-2.1-6.1 1.4zM765.9 852l6.2-1.5-4.7-2.1-6.1 1.5zM759.8 853.4l6.1-1.4-4.6-2.1-6.2 1.4zM753.7 854.8l6.1-1.4-4.7-2.1-6.1 1.5zM747.6 856.2l6.1-1.4-4.7-2-6.1 1.4zM741.5 857.6l6.1-1.4-4.7-2-6.1 1.5zM735.4 859.1l6.1-1.5-4.7-1.9-6.1 1.4zM729.3 860.5l6.1-1.4-4.7-2-6.1 1.5zM929.4 819.7l6.1-1.3-4.7-1.9-6.1 1.2zM923.3 820.9l6.1-1.2-4.7-2-6.1 1.3zM917.2 822.2l6.1-1.3-4.7-1.9-6.1 1.2zM911.1 823.5l6.1-1.3-4.7-2-6.1 1.3zM905 824.7l6.1-1.2-4.7-2-6.1 1.2zM898.9 826l6.1-1.3-4.7-2-6.1 1.2zM892.8 827.2l6.1-1.2-4.7-2.1-6.1 1.3zM886.7 828.5l6.1-1.3-4.7-2-6.1 1.2zM880.6 829.8l6.1-1.3-4.7-2.1-6.1 1.3zM874.5 831l6.1-1.2-4.7-2.1-6.1 1.3zM868.3 832.3l6.2-1.3-4.7-2-6.1 1.2zM862.2 833.6l6.1-1.3-4.6-2.1-6.1 1.3zM856.1 834.9l6.1-1.3-4.6-2.1-6.2 1.3zM850 836.2l6.1-1.3-4.7-2.1-6.1 1.3zM843.9 837.5l6.1-1.3-4.7-2.1-6.1 1.3zM837.8 838.8l6.1-1.3-4.7-2.1-6.1 1.3zM831.7 840.2l6.1-1.4-4.7-2.1-6.1 1.3zM825.6 841.5l6.1-1.3-4.7-2.2-6.1 1.4zM819.5 842.9l6.1-1.4-4.7-2.1-6.1 1.4zM813.4 844.2l6.1-1.3-4.7-2.1-6.1 1.3zM807.3 845.6l6.1-1.4-4.7-2.1-6.1 1.4zM801.2 847l6.1-1.4-4.7-2.1-6.1 1.4zM795.1 848.4l6.1-1.4-4.7-2.1-6.1 1.4zM789 849.8l6.1-1.4-4.7-2.1-6.1 1.4zM782.9 851.1l6.1-1.3-4.7-2.1-6.1 1.4zM776.7 852.5l6.2-1.4-4.7-2-6.1 1.4zM770.6 853.9l6.1-1.4-4.6-2-6.2 1.5zM764.5 855.4l6.1-1.5-4.7-1.9-6.1 1.4zM758.4 856.8l6.1-1.4-4.7-2-6.1 1.4zM752.3 858.2l6.1-1.4-4.7-2-6.1 1.4zM746.2 859.6l6.1-1.4-4.7-2-6.1 1.4zM915.8 825.4l6.1-1.3-4.7-1.9-6.1 1.3zM909.7 826.7l6.1-1.3-4.7-1.9-6.1 1.2zM903.6 827.9l6.1-1.2-4.7-2-6.1 1.3zM897.5 829.2l6.1-1.3-4.7-1.9-6.1 1.2zM891.4 830.5l6.1-1.3-4.7-2-6.1 1.3zM885.3 831.8l6.1-1.3-4.7-2-6.1 1.3zM879.1 833.1l6.2-1.3-4.7-2-6.1 1.2zM873 834.4l6.1-1.3-4.6-2.1-6.2 1.3zM866.9 835.6l6.1-1.2-4.7-2.1-6.1 1.3zM860.8 837l6.1-1.4-4.7-2-6.1 1.3zM854.7 838.3l6.1-1.3-4.7-2.1-6.1 1.3zM848.6 839.6l6.1-1.3-4.7-2.1-6.1 1.3zM842.5 840.9l6.1-1.3-4.7-2.1-6.1 1.3zM836.4 842.2l6.1-1.3-4.7-2.1-6.1 1.4zM830.3 843.6l6.1-1.4-4.7-2-6.1 1.3zM824.2 844.9l6.1-1.3-4.7-2.1-6.1 1.4zM818.1 846.3l6.1-1.4-4.7-2-6.1 1.3zM812 847.6l6.1-1.3-4.7-2.1-6.1 1.4zM805.9 849l6.1-1.4-4.7-2-6.1 1.4zM799.8 850.4l6.1-1.4-4.7-2-6.1 1.4zM793.7 851.7l6.1-1.3-4.7-2-6.1 1.4zM787.5 853.1l6.2-1.4-4.7-1.9-6.1 1.3zM781.4 854.5l6.1-1.4-4.6-2-6.2 1.4zM775.3 855.9l6.1-1.4-4.7-2-6.1 1.4zM769.2 857.3l6.1-1.4-4.7-2-6.1 1.5zM896.1 832.4l6.1-1.2-4.7-2-6.1 1.3zM889.9 833.7l6.2-1.3-4.7-1.9-6.1 1.3zM883.8 835l6.1-1.3-4.6-1.9-6.2 1.3zM877.7 836.3l6.1-1.3-4.7-1.9-6.1 1.3zM871.6 837.6l6.1-1.3-4.7-1.9-6.1 1.2zM865.5 838.9l6.1-1.3-4.7-2-6.1 1.4zM859.4 840.2l6.1-1.3-4.7-1.9-6.1 1.3zM853.3 841.6l6.1-1.4-4.7-1.9-6.1 1.3zM847.2 842.9l6.1-1.3-4.7-2-6.1 1.3zM841.1 844.2l6.1-1.3-4.7-2-6.1 1.3zM835 845.6l6.1-1.4-4.7-2-6.1 1.4zM828.9 846.9l6.1-1.3-4.7-2-6.1 1.3zM822.8 848.2l6.1-1.3-4.7-2-6.1 1.4zM816.7 849.6l6.1-1.4-4.7-1.9-6.1 1.3zM810.6 851l6.1-1.4-4.7-2-6.1 1.4zM804.4 852.3l6.2-1.3-4.7-2-6.1 1.4zM798.3 853.7l6.1-1.4-4.6-1.9-6.1 1.3zM792.2 855.1l6.1-1.4-4.6-2-6.2 1.4zM851.9 844.8l6.1-1.3-4.7-1.9-6.1 1.3zM845.8 846.2l6.1-1.4-4.7-1.9-6.1 1.3z"/></g>
<g><polyline points="652.8,915.5 655.3,587.0 793.0,385.0" fill="none" stroke="#ee1010" stroke-width="1.3"/>
<polygon points="652.6,908.6 654.2,913.4 659.3,913.4 655.2,916.4 656.7,921.3 652.6,918.3 648.5,921.3 650.0,916.4 645.9,913.4 651.0,913.4" fill="none" stroke="#111" stroke-width="0.8"/>
<polygon points="793.0,378.0 794.6,382.8 799.7,382.8 795.6,385.8 797.1,390.7 793.0,387.7 788.9,390.7 790.4,385.8 786.3,382.8 791.4,382.8" fill="none" stroke="#111" stroke-width="0.8"/></g><g class="t"><line x1="182.5" y1="748.2" x2="182.5" y2="370.4" class="a"/>
<line x1="182.5" y1="748.2" x2="651.7" y2="922.1" class="a"/>
<line x1="651.7" y1="922.1" x2="1262.4" y2="789.3" class="a"/>
<line x1="651.7" y1="922.1" x2="666.7" y2="927.7" class="a"/>
<text transform="translate(672.3 941.3) scale(0.945 1)" text-anchor="start">0</text>
<line x1="712.8" y1="908.8" x2="727.8" y2="914.4" class="a"/>
<text transform="translate(733.4 928.0) scale(0.945 1)" text-anchor="start">10</text>
<line x1="773.8" y1="895.5" x2="788.8" y2="901.1" class="a"/>
<text transform="translate(794.4 914.7) scale(0.945 1)" text-anchor="start">20</text>
<line x1="834.9" y1="882.3" x2="849.9" y2="887.9" class="a"/>
<text transform="translate(855.5 901.5) scale(0.945 1)" text-anchor="start">30</text>
<line x1="896.0" y1="869.0" x2="911.0" y2="874.6" class="a"/>
<text transform="translate(916.6 888.2) scale(0.945 1)" text-anchor="start">40</text>
<line x1="957.1" y1="855.7" x2="972.1" y2="861.3" class="a"/>
<text transform="translate(977.7 874.9) scale(0.945 1)" text-anchor="start">50</text>
<line x1="1018.1" y1="842.4" x2="1033.1" y2="848.0" class="a"/>
<text transform="translate(1038.7 861.6) scale(0.945 1)" text-anchor="start">60</text>
<line x1="1079.2" y1="829.1" x2="1094.2" y2="834.7" class="a"/>
<text transform="translate(1099.8 848.3) scale(0.945 1)" text-anchor="start">70</text>
<line x1="1140.3" y1="815.9" x2="1155.3" y2="821.5" class="a"/>
<text transform="translate(1160.9 835.1) scale(0.945 1)" text-anchor="start">80</text>
<line x1="1201.3" y1="802.6" x2="1216.3" y2="808.2" class="a"/>
<text transform="translate(1221.9 821.8) scale(0.945 1)" text-anchor="start">90</text>
<line x1="1262.4" y1="789.3" x2="1277.4" y2="794.9" class="a"/>
<text transform="translate(1283.0 808.5) scale(0.945 1)" text-anchor="start">100</text>
<line x1="651.7" y1="922.1" x2="635.7" y2="926.4" class="a"/>
<text transform="translate(630.3 938.5) scale(0.945 1)" text-anchor="end">0</text>
<line x1="557.9" y1="887.3" x2="541.9" y2="891.6" class="a"/>
<text transform="translate(536.5 903.7) scale(0.945 1)" text-anchor="end">20</text>
<line x1="464.0" y1="852.5" x2="448.0" y2="856.8" class="a"/>
<text transform="translate(442.6 868.9) scale(0.945 1)" text-anchor="end">40</text>
<line x1="370.2" y1="817.8" x2="354.2" y2="822.1" class="a"/>
<text transform="translate(348.8 834.2) scale(0.945 1)" text-anchor="end">60</text>
<line x1="276.3" y1="783.0" x2="260.3" y2="787.3" class="a"/>
<text transform="translate(254.9 799.4) scale(0.945 1)" text-anchor="end">80</text>
<line x1="182.5" y1="748.2" x2="166.5" y2="752.5" class="a"/>
<text transform="translate(161.1 764.6) scale(0.945 1)" text-anchor="end">100</text>
<line x1="182.5" y1="748.2" x2="167.2" y2="742.9" class="a"/>
<text transform="translate(161.5 746.4) scale(0.945 1)" text-anchor="end">0</text>
<line x1="182.5" y1="701.0" x2="167.2" y2="695.7" class="a"/>
<text transform="translate(161.5 699.2) scale(0.945 1)" text-anchor="end">20</text>
<line x1="182.5" y1="653.8" x2="167.2" y2="648.5" class="a"/>
<text transform="translate(161.5 652.0) scale(0.945 1)" text-anchor="end">40</text>
<line x1="182.5" y1="606.5" x2="167.2" y2="601.2" class="a"/>
<text transform="translate(161.5 604.7) scale(0.945 1)" text-anchor="end">60</text>
<line x1="182.5" y1="559.3" x2="167.2" y2="554.0" class="a"/>
<text transform="translate(161.5 557.5) scale(0.945 1)" text-anchor="end">80</text>
<line x1="182.5" y1="512.1" x2="167.2" y2="506.8" class="a"/>
<text transform="translate(161.5 510.3) scale(0.945 1)" text-anchor="end">100</text>
<line x1="182.5" y1="464.9" x2="167.2" y2="459.6" class="a"/>
<text transform="translate(161.5 463.1) scale(0.945 1)" text-anchor="end">120</text>
<line x1="182.5" y1="417.7" x2="167.2" y2="412.4" class="a"/>
<text transform="translate(161.5 415.9) scale(0.945 1)" text-anchor="end">140</text>
<line x1="182.5" y1="370.4" x2="167.2" y2="365.1" class="a"/>
<text transform="translate(161.5 368.6) scale(0.945 1)" text-anchor="end">160</text></g></svg>
<div class="abs" id="titlebar">
<svg class="abs" style="left:0;top:0" width="30" height="30" viewBox="0 0 30 30">
<path d="M9.200 15.700L12.900 13.800 15.300 14.900 16.400 16.200 14.300 18 11.800 17.200z" fill="#3d8fd1"/>
<path d="M12.900 13.800L15.300 14.900 16.400 16.200 14.300 18 13.200 17.700 14.200 15.600z" fill="#2a6fb3"/>
<path d="M14.300 18C16.200 16.300 18.300 12 19.800 8 20.200 7.700 20.500 8 20.800 8.800 22 12.500 23 16.500 24.900 19.300 23.600 18.700 22.900 17.400 22.200 16.400 20.800 18 18.600 20.800 16 21.700z" fill="#8c2a1b"/>
<path d="M19.800 8C20.200 7.700 20.500 8 20.800 8.800 22 12.500 23 16.500 24.900 19.300 23.600 18.700 22.900 17.400 22.200 16.400 21.600 13.500 21 10.500 19.800 8z" fill="#c7361f"/>
<path d="M16 21.700C18.600 20.800 20.800 18 22.200 16.400 21.500 13.500 21 10.500 20.300 8.600 19.800 12.500 18.200 17.500 15.300 21z" fill="#f0982c"/>
<path d="M17.300 20.600C19.300 19.300 20.900 17.600 22.200 16.400 21.800 14.800 21.500 13.300 21.200 12 20.600 15 19.300 18.300 17.300 20.600z" fill="#d9541f"/>
</svg>
<div class="abs ttl">Figures</div>
<svg class="abs" style="left:1270px;top:5px" width="120" height="22" viewBox="0 0 120 22" fill="none" stroke="#5c5c5c" stroke-width="1">
<path d="M6 10.5h10"/><rect x="51.5" y="5.5" width="9" height="9" rx="1.5"/><path d="M97.5 5.5l9.2 9.2M106.7 5.5l-9.2 9.2"/>
</svg>
</div>
<div class="abs" id="tabstrip"><div class="abs l"></div><div class="abs act"></div>
<div class="abs tab on" style="left:4px">图窗</div>
<div class="abs tab" style="left:110px">格式</div>
<div class="abs tab" style="left:216px">工具</div>
<div class="abs tab" style="left:322px">布局</div>
<div class="abs" style="left:1340px;top:3px;width:2px;height:22px;background:#c9c9c9"></div>
<svg class="abs" style="left:1346px;top:7px" width="46" height="16" viewBox="0 0 46 16">
<circle cx="7.4" cy="7" r="5" fill="#5b6673"/><path d="M4.4 5.8h6l-3 3.4z" fill="#e8eef5"/>
<rect x="32.5" y="4.500" width="7" height="7" rx="1.5" fill="none" stroke="#fff" stroke-width="1.1"/>
<rect x="35" y="7" width="7" height="7" rx="1.5" fill="#fff"/>
<path d="M37 9l3 3M40 10v2h-2" stroke="#004174" stroke-width="1" fill="none"/>
</svg>
</div>
<div class="abs" id="ribbon">
<!-- save as -->
<svg class="abs" style="left:14px;top:9px" width="29.5" height="27.4" viewBox="0 0 28 26">
<path d="M2.5 6.500h18v18h-16l-2-2z" fill="#dcdcdc" stroke="#9a9a9a"/>
<rect x="5.500" y="6.500" width="12" height="8" fill="#f2f2f2" stroke="#9a9a9a"/>
<rect x="6.500" y="17.500" width="11" height="7" fill="#e9e9e9" stroke="#9a9a9a"/>
<rect x="8" y="19" width="3" height="5" fill="#8a8a8a"/>
<rect x="7.500" y="1.500" width="18" height="10" fill="#fff" stroke="#1b56b0" stroke-width="1.2"/>
<circle cx="11.500" cy="8" r="1.300" fill="#1b56b0"/><circle cx="16.500" cy="8" r="1.300" fill="#1b56b0"/><circle cx="21.500" cy="8" r="1.300" fill="#1b56b0"/>
</svg>
<div class="abs lbl" style="left:0;top:43px;width:54px;text-align:center">另存为</div>
<svg class="abs" style="left:23px;top:63px" width="10" height="6"><path d="M1 1h8l-4 4z" fill="#555"/></svg>
<!-- copy -->
<svg class="abs" style="left:55px;top:7px" width="18" height="17" viewBox="0 0 18 17">
<rect x="1.500" y="1.500" width="10" height="10" rx="1" fill="#d9d9d9" stroke="#9c9c9c"/>
<rect x="5.500" y="5.500" width="10" height="10" rx="1" fill="#fff" stroke="#555"/>
</svg>
<div class="abs lbl" style="left:78px;top:10px">复制图窗</div>
<!-- print -->
<svg class="abs" style="left:55px;top:32px" width="18" height="18" viewBox="0 0 18 18" fill="none" stroke="#555">
<path d="M4.500 6.500v-5h7l2 2v3" fill="#fff"/><rect x="1.500" y="6.500" width="15" height="7" rx="1.500" fill="#f2f2f2"/><rect x="3.500" y="10.500" width="11" height="6" fill="#fff"/><path d="M5.500 13.500h5"/>
</svg>
<div class="abs lbl" style="left:78px;top:34.5px">打印</div>
<div class="abs" style="left:57px;top:57px;width:12px;height:12px;border:1px solid #444;background:#fff"></div>
<div class="abs lbl" style="left:78px;top:58px">显示代码</div>
<div class="abs sec" style="left:37px;top:80px;width:60px">文件</div>
<div class="abs vsep" style="left:134px;top:8px;height:83px"></div>
<div class="abs" id="gal"><div class="abs dd"></div>
<svg class="abs" style="left:0;top:0" width="710" height="66" viewBox="139 66 710 66">
<g transform="translate(160 75)"><rect x="0.500" y="0.500" width="35" height="29" rx="1.500" fill="#f5f5f5" stroke="#555"/><path d="M8 18l9-6.500 5.500 6.500 6-6.500" fill="none" stroke="#bdbdbd" stroke-width="1"/></g><g transform="translate(166 69.500)"><rect x="0.500" y="0.500" width="23" height="2.400" fill="#9b9b9b" stroke="#777" stroke-width=".8"/></g>
<g transform="translate(228 75)"><rect x="0.500" y="0.500" width="35" height="29" rx="1.500" fill="#f5f5f5" stroke="#555"/><path d="M8 18l9-6.500 5.500 6.500 6-6.500" fill="none" stroke="#bdbdbd" stroke-width="1"/></g><g transform="translate(234 69.500)"><rect x="0.500" y="0.500" width="23" height="2.400" fill="#9b9b9b" stroke="#777" stroke-width=".8"/></g>
<g transform="translate(296 75)"><rect x="0.500" y="0.500" width="35" height="29" rx="1.500" fill="#f5f5f5" stroke="#555"/><path d="M8 18l9-6.500 5.500 6.500 6-6.500" fill="none" stroke="#bdbdbd" stroke-width="1"/></g><g transform="translate(302 107)"><rect x="0.500" y="0.500" width="23" height="2.400" fill="#9b9b9b" stroke="#777" stroke-width=".8"/></g>
<g transform="translate(364 75)"><rect x="0.500" y="0.500" width="35" height="29" rx="1.500" fill="#f5f5f5" stroke="#555"/><path d="M8 18l9-6.500 5.500 6.500 6-6.500" fill="none" stroke="#bdbdbd" stroke-width="1"/></g><g transform="translate(357.500 81)"><rect x="0.500" y="0.500" width="2.400" height="16" fill="#9b9b9b" stroke="#777" stroke-width=".8"/></g>
<!-- z label -->
<g stroke="#555" stroke-width="1" stroke-linejoin="round">
<path d="M430.500 80.500L450.500 70v17L430.500 97.500z" fill="#dcdcdc" stroke="none"/>
<path d="M450.500 70L470.500 80.500V97.500L450.500 87z" fill="#ececec" stroke="none"/>
<path d="M430.500 97.500L450.500 87 470.500 97.500 450.500 108z" fill="#fff" stroke="none"/>
<path d="M450.500 70L470.500 80.500V97.500L450.500 108 430.500 97.500V80.500z" fill="none"/>
</g>
<g transform="translate(424.500 81.500)"><rect x="0.500" y="0.500" width="2.400" height="16" fill="#9b9b9b" stroke="#777" stroke-width=".8"/></g>
<!-- legend -->
<g transform="translate(500 75)"><rect x="0.500" y="0.500" width="35" height="29" rx="1.500" fill="#f5f5f5" stroke="#555"/><path d="M8 18l9-6.500 5.500 6.500 6-6.500" fill="none" stroke="#bdbdbd" stroke-width="1"/></g>
<rect x="523.500" y="71.500" width="15" height="15" fill="#fff" stroke="#555"/>
<rect x="526" y="74" width="3.600" height="3.600" fill="#0072bd"/><rect x="526" y="80" width="3.600" height="3.600" fill="#d95319"/>
<path d="M531.500 76h4M531.500 82h4" stroke="#555"/>
<!-- colorbar -->
<g><rect x="568.500" y="75.500" width="33" height="29" rx="1.500" fill="#f5f5f5" stroke="#555"/><path d="M576 93l9-6.500 5.500 6.500 6-6.500" fill="none" stroke="#bdbdbd"/></g>
<rect x="602" y="72.500" width="5" height="4.200" fill="#f9fb0e"/><rect x="602" y="76.700" width="5" height="4.200" fill="#fec23a"/><rect x="602" y="80.900" width="5" height="4.200" fill="#b7bd3f"/><rect x="602" y="85.100" width="5" height="4.200" fill="#48cb86"/><rect x="602" y="89.300" width="5" height="4.200" fill="#12b1c8"/><rect x="602" y="93.500" width="5" height="4.200" fill="#2e87f7"/><rect x="602" y="97.700" width="5" height="4.200" fill="#4646e0"/><rect x="602" y="101.900" width="5" height="3.600" fill="#3e26a8"/>
<rect x="601.500" y="72.500" width="6" height="33" fill="none" stroke="#555"/>
<!-- grids -->
<g stroke="#a8a8a8" fill="#f9f9f9">
<rect x="635.500" y="77.500" width="35" height="29" stroke="#555"/>
<path d="M642.500 78v28M649.500 78v28M656.500 78v28M663.500 78v28M636 83.500h34M636 89.500h34M636 95.500h34M636 101.500h34"/>
<rect x="635.500" y="77.500" width="35" height="29" stroke="#555" fill="none"/>
<rect x="703.500" y="77.500" width="35" height="29" stroke="#555"/>
<path d="M710.500 78v28M717.500 78v28M724.500 78v28M731.500 78v28"/>
<rect x="703.500" y="77.500" width="35" height="29" stroke="#555" fill="none"/>
<rect x="771.500" y="77.500" width="35" height="29" stroke="#555"/>
<path d="M772 83.500h34M772 89.500h34M772 95.500h34M772 101.500h34"/>
<rect x="771.500" y="77.500" width="35" height="29" stroke="#555" fill="none"/>
</g>
<path d="M835.300 98h7l-3.500 4z" fill="#555"/>
</svg>
<div class="abs gi" style="left:5px">标题</div>
<div class="abs gi" style="left:73px">副标题</div>
<div class="abs gi" style="left:141px">X 标签</div>
<div class="abs gi" style="left:209px">Y 标签</div>
<div class="abs gi" style="left:277px">Z 标签</div>
<div class="abs gi" style="left:345px">图例</div>
<div class="abs gi" style="left:413px">颜色栏</div>
<div class="abs gi" style="left:480px">网格</div>
<div class="abs gi" style="left:548px">X 网格</div>
<div class="abs gi" style="left:616px">Y 网格</div>
</div>
<div class="abs sec" style="left:443px;top:80px;width:100px">标签和注解</div>
<div class="abs vsep" style="left:852px;top:7px;height:85px;background:#c4c4c4"></div>
<svg class="abs" style="left:1376px;top:78px" width="14" height="12"><path d="M2 1.500h10" stroke="#9a9a9a" stroke-width="1.400"/><path d="M2 11l5-6 5 6z" fill="#9a9a9a"/></svg>
</div>
<div class="abs" id="ribline"></div>
<div class="abs" id="doctabs">
<svg class="abs" style="left:6px;top:7px" width="6" height="10"><path d="M1 1.500h4M1 3.500h4M1 5.500h4M1 7.500h4" stroke="#8a8a8a"/></svg>
<div class="abs dt" style="left:16px;width:79px;background:#e8e8e8;border-top:3px solid #9a9a9a;border-right:1px solid #c9c9c9;border-left:1px solid #d4d4d4;padding-left:8.5px;line-height:23px">Figure 1<svg width="8" height="8" viewBox="0 0 9 9" style="margin-left:6.5px;vertical-align:1.2px"><path d="M0.7 0.7l7.6 7.6M8.300 0.7l-7.6 7.6" stroke="#555" stroke-width="1.1"/></svg></div>
<div class="abs dt" style="left:95px;width:78px;background:#fff;border-top:3px solid #004a8f;border-right:1px solid #c9c9c9;padding-left:8px;line-height:23px;color:#444">Figure 2<svg width="8" height="8" viewBox="0 0 9 9" style="margin-left:6.5px;vertical-align:1.2px"><path d="M0.7 0.7l7.6 7.6M8.300 0.7l-7.6 7.6" stroke="#555" stroke-width="1.1"/></svg></div>
<svg class="abs" style="left:1371px;top:6px" width="6" height="12"><circle cx="3" cy="2" r="1" fill="#333"/><circle cx="3" cy="6" r="1" fill="#333"/><circle cx="3" cy="10" r="1" fill="#333"/></svg>
</div>
</div>
</body></html>
